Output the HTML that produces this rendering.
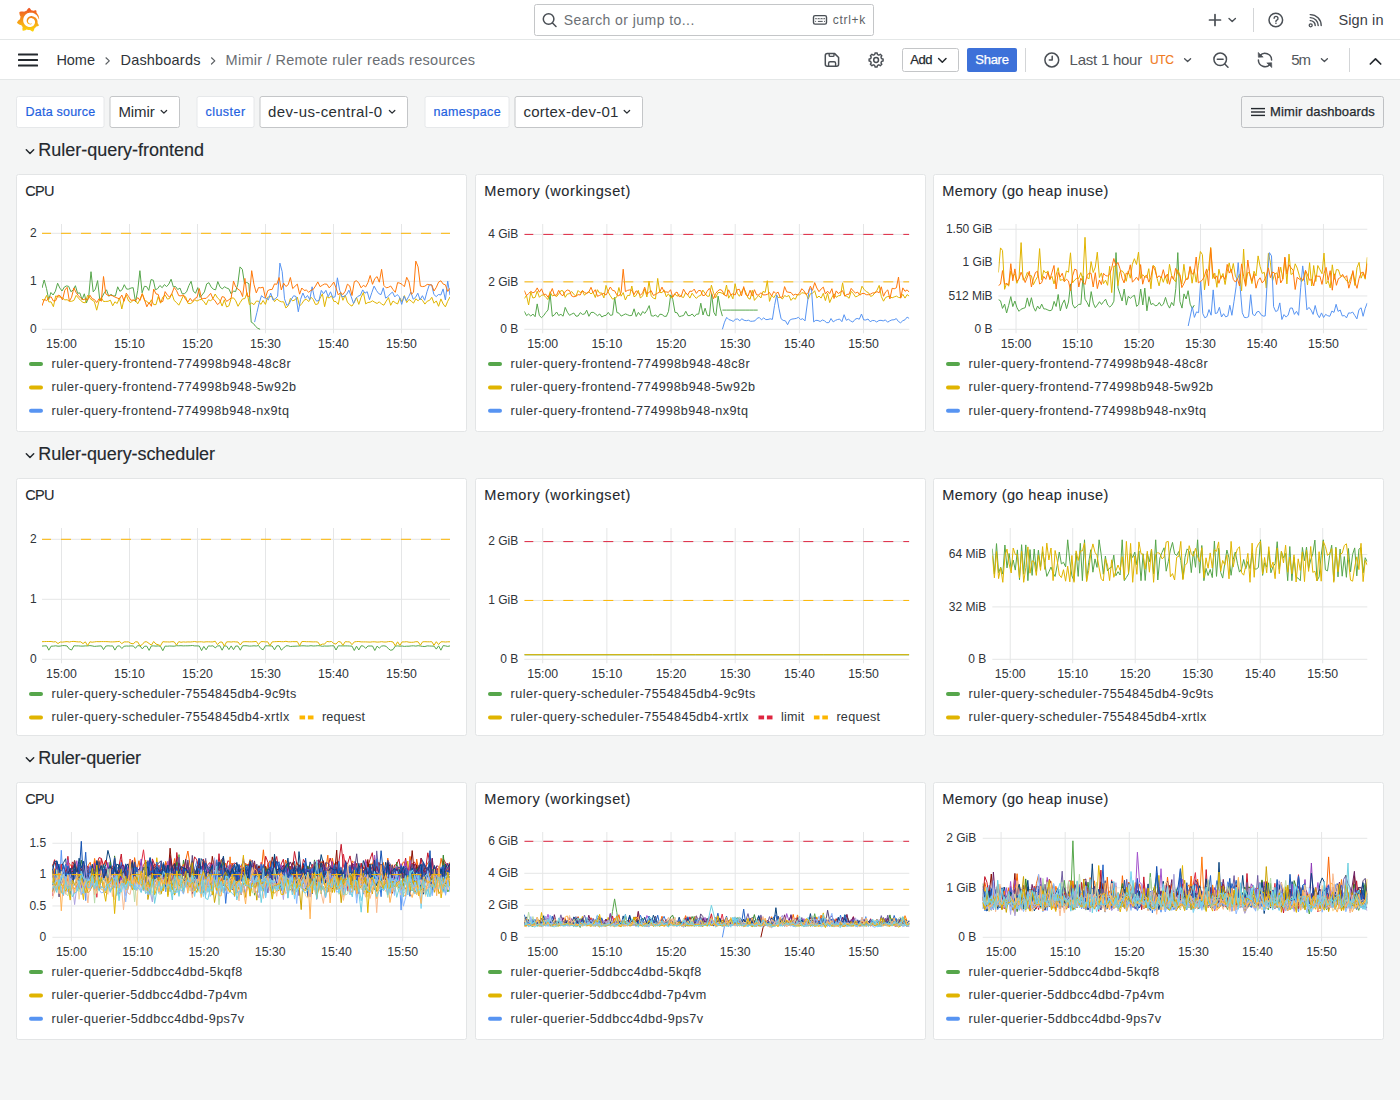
<!DOCTYPE html>
<html><head><meta charset="utf-8"><title>Mimir / Remote ruler reads resources - Dashboards - Grafana</title>
<style>html,body{margin:0;padding:0;background:#f4f5f5;width:1400px;height:1100px;overflow:hidden}svg{display:block}text{font-family:"Liberation Sans",sans-serif}</style></head>
<body><svg width="1400" height="1100" viewBox="0 0 1400 1100">
<rect x="0" y="0" width="1400" height="1100" fill="#f4f5f5"/>
<rect x="0" y="0" width="1400" height="79" fill="#ffffff"/><rect x="0" y="39" width="1400" height="1" fill="#e4e7e7"/><rect x="0" y="79" width="1400" height="1" fill="#e4e7e7"/><defs><linearGradient id="lg" x1="0" y1="1" x2="0" y2="0"><stop offset="0" stop-color="#FDD80A"/><stop offset="1" stop-color="#EE5126"/></linearGradient></defs><g transform="translate(16.44,7.63) scale(0.0663)"><path fill="url(#lg)" d="M342,161.2c-0.6-6.1-1.6-13.1-3.6-20.9c-1.9-7.7-4.9-16.2-9.3-25c-4.4-8.8-10.1-17.9-17.5-26.8c-2.9-3.5-6.1-6.9-9.5-10.2c5.1-20.3-6.2-37.9-6.2-37.9c-19.5-1.2-31.9,6.1-36.5,9.4c-0.8-0.3-1.5-0.7-2.3-1c-3.3-1.3-6.7-2.6-10.3-3.7c-3.5-1.1-7.1-2.1-10.8-3c-3.7-0.9-7.4-1.600-11.2-2.2c-0.7-0.1-1.3-0.2-2-0.3c-8.5-27.2-32.9-38.6-32.9-38.6c-27.3,17.3-32.4,41.5-32.4,41.5s-0.1,0.5-0.3,1.4c-1.5,0.4-3,0.9-4.5,1.3c-2.1,0.6-4.2,1.4-6.2,2.2c-2.1,0.8-4.1,1.6-6.2,2.5c-4.1,1.8-8.2,3.8-12.2,6c-3.9,2.2-7.7,4.6-11.4,7.1c-0.5-0.2-0.9-0.4-0.9-0.4c-37.8-14.4-71.3,2.9-71.3,2.9c-3.1,40.2,15.1,65.5,18.7,70.1c-0.9,2.5-1.7,5-2.5,7.5c-2.8,9.1-4.9,18.4-6.2,28.1c-0.2,1.4-0.4,2.8-0.5,4.2C18.8,192.7,8.5,228,8.5,228c29.1,33.5,63.1,35.6,63.1,35.6c0,0,0.1-0.1,0.1-0.1c4.3,7.7,9.3,15,14.9,21.9c2.4,2.9,4.8,5.6,7.4,8.3c-10.6,30.4,1.5,55.6,1.5,55.6c32.4,1.2,53.7-14.2,58.2-17.7c3.2,1.1,6.5,2.1,9.8,2.9c10,2.6,20.2,4.1,30.4,4.5c2.5,0.1,5.1,0.2,7.6,0.1l1.2,0l0.8,0l1.6,0l1.6-0.1l0,0.1c15.3,21.8,42.1,24.9,42.1,24.9c19.1-20.1,20.2-40.1,20.2-44.4l0,0c0,0,0-0.1,0-0.3c0-0.4,0-0.6,0-0.6l0,0c0-0.3,0-0.6,0-0.9c4-2.8,7.8-5.8,11.4-9.1c7.6-6.9,14.3-14.8,19.9-23.3c0.5-0.8,1-1.6,1.5-2.4c21.6,1.2,36.9-13.4,36.9-13.4c-3.6-22.5-16.4-33.5-19.1-35.6l0,0c0,0-0.1-0.1-0.3-0.2c-0.2-0.1-0.2-0.2-0.2-0.2c0,0,0,0,0,0c-0.1-0.1-0.3-0.2-0.5-0.3c0.1-1.4,0.2-2.7,0.3-4.1c0.2-2.4,0.2-4.9,0.2-7.3l0-1.8l0-0.9l0-0.5c0-0.6,0-0.4,0-0.6l-0.1-1.5l-0.1-2c0-0.7-0.1-1.3-0.2-1.9c-0.1-0.6-0.1-1.3-0.2-1.9l-0.2-1.9l-0.3-1.9c-0.4-2.5-0.8-4.9-1.4-7.4c-2.3-9.7-6.1-18.9-11-27.2c-5-8.3-11.2-15.6-18.3-21.8c-7-6.2-14.9-11.2-23.1-14.9c-8.3-3.7-16.9-6.1-25.5-7.2c-4.3-0.6-8.6-0.8-12.9-0.7l-1.6,0l-0.4,0c-0.1,0-0.6,0-0.5,0l-0.7,0l-1.6,0.1c-0.6,0-1.2,0.1-1.7,0.1c-2.2,0.2-4.4,0.5-6.5,0.9c-8.6,1.6-16.7,4.7-23.8,9c-7.1,4.3-13.3,9.6-18.3,15.6c-5,6-8.9,12.7-11.6,19.6c-2.7,6.9-4.2,14.1-4.6,21.1c-0.1,1.7-0.1,3.5-0.1,5.2c0,0.4,0,0.9,0,1.3l0.1,1.4c0.1,0.8,0.1,1.7,0.2,2.5c0.3,3.5,1,6.9,1.9,10.1c1.9,6.5,4.9,12.4,8.6,17.4c3.7,5,8.2,9.1,12.9,12.4c4.7,3.2,9.8,5.5,14.8,7c5,1.5,10,2.1,14.7,2.1c0.6,0,1.2,0,1.7,0c0.3,0,0.6,0,0.9,0c0.3,0,0.6,0,0.9-0.1c0.5,0,1-0.1,1.5-0.1c0.1,0,0.3,0,0.4-0.1l0.5-0.1c0.3,0,0.6-0.1,0.9-0.1c0.6-0.1,1.1-0.2,1.7-0.3c0.6-0.1,1.1-0.2,1.6-0.4c1.1-0.2,2.1-0.6,3.1-0.9c2-0.7,4-1.5,5.7-2.4c1.8-0.9,3.4-2,5-3c0.4-0.3,0.9-0.6,1.3-1c1.6-1.3,1.9-3.7,0.6-5.3c-1.1-1.4-3.1-1.8-4.7-0.9c-0.4,0.2-0.8,0.4-1.2,0.6c-1.4,0.7-2.8,1.3-4.3,1.8c-1.5,0.5-3.1,0.9-4.7,1.2c-0.8,0.1-1.6,0.2-2.5,0.3c-0.4,0-0.8,0.1-1.3,0.1c-0.4,0-0.9,0-1.2,0c-0.4,0-0.8,0-1.2,0c-0.5,0-1,0-1.5-0.1c0,0-0.3,0-0.1,0l-0.2,0l-0.3,0c-0.2,0-0.5,0-0.7-0.1c-0.5-0.1-0.9-0.1-1.4-0.2c-3.7-0.5-7.4-1.6-10.9-3.2c-3.6-1.6-7-3.800-10.1-6.6c-3.1-2.8-5.8-6.1-7.9-9.9c-2.1-3.8-3.6-8-4.3-12.4c-0.3-2.2-0.5-4.5-0.4-6.7c0-0.6,0.1-1.2,0.1-1.8c0,0.2,0-0.1,0-0.1l0-0.2l0-0.5c0-0.3,0.1-0.6,0.1-0.9c0.1-1.2,0.3-2.4,0.5-3.6c1.7-9.6,6.5-19,13.9-26.1c1.9-1.8,3.9-3.4,6-4.9c2.1-1.5,4.4-2.8,6.8-3.9c2.4-1.1,4.8-2,7.4-2.7c2.5-0.7,5.1-1.1,7.800-1.4c1.3-0.1,2.6-0.2,4-0.2c0.4,0,0.6,0,0.9,0l1.1,0l0.7,0c0,0,0.3,0,0,0l0.3,0l1.1,0.1c2.9,0.2,5.7,0.6,8.5,1.3c5.6,1.2,11.1,3.3,16.2,6.1c10.2,5.7,18.9,14.5,24.2,25.1c2.7,5.3,4.6,11,5.5,16.9c0.2,1.5,0.4,3,0.5,4.5l0.1,1.1l0.1,1.1c0,0.4,0,0.8,0,1.1c0,0.4,0,0.8,0,1.1l0,1l0,1.1c0,0.7-0.1,1.9-0.1,2.6c-0.1,1.6-0.3,3.3-0.5,4.9c-0.2,1.6-0.5,3.2-0.8,4.8c-0.3,1.6-0.7,3.2-1.1,4.7c-0.8,3.1-1.8,6.2-3,9.3c-2.4,6-5.6,11.8-9.4,17.1c-7.7,10.6-18.2,19.2-30.2,24.7c-6,2.7-12.3,4.7-18.8,5.7c-3.2,0.6-6.5,0.9-9.8,1l-0.6,0l-0.5,0l-1.1,0l-1.6,0l-0.8,0c0.4,0-0.1,0-0.1,0l-0.3,0c-1.8,0-3.5-0.1-5.3-0.3c-7-0.5-13.9-1.8-20.7-3.7c-6.7-1.9-13.2-4.6-19.4-7.8c-12.3-6.6-23.4-15.6-32-26.5c-4.3-5.4-8.1-11.3-11.2-17.4c-3.1-6.1-5.6-12.6-7.4-19.1c-1.8-6.6-2.9-13.3-3.4-20.1l-0.1-1.3l0-0.3l0-0.3l0-0.6l0-1.1l0-0.3l0-0.4l0-0.8l0-1.6l0-0.3c0,0,0,0.1,0-0.1l0-0.6c0-0.8,0-1.7,0-2.5c0.1-3.3,0.4-6.8,0.8-10.2c0.4-3.4,1-6.9,1.7-10.3c0.7-3.4,1.5-6.8,2.5-10.2c1.9-6.7,4.3-13.2,7.1-19.3c5.7-12.2,13.1-23.1,22-31.8c2.2-2.2,4.5-4.2,6.9-6.2c2.4-1.9,4.9-3.7,7.5-5.4c2.5-1.7,5.2-3.2,7.9-4.6c1.3-0.7,2.7-1.4,4.1-2c0.7-0.3,1.4-0.6,2.1-0.9c0.7-0.3,1.4-0.6,2.1-0.9c2.8-1.2,5.7-2.2,8.7-3.1c0.7-0.2,1.5-0.4,2.2-0.7c0.7-0.2,1.5-0.4,2.2-0.6c1.5-0.4,3-0.8,4.5-1.1c0.7-0.2,1.5-0.3,2.3-0.5c0.8-0.2,1.5-0.3,2.3-0.5c0.8-0.1,1.5-0.3,2.3-0.4l1.1-0.2l1.2-0.2c0.8-0.1,1.5-0.2,2.3-0.3c0.9-0.1,1.7-0.2,2.6-0.3c0.7-0.1,1.9-0.2,2.6-0.3c0.5-0.1,1.1-0.1,1.6-0.2l1.1-0.1l0.5,0l0.6,0c0.9-0.1,1.7-0.1,2.6-0.2l1.3-0.1c0,0,0.5,0,0.1,0l0.3,0l0.6,0c0.7,0,1.5-0.1,2.2-0.1c2.9-0.1,5.9-0.1,8.8,0c5.8,0.2,11.5,0.9,17,1.9c11.1,2.1,21.5,5.6,31,10.3c9.5,4.6,17.9,10.3,25.3,16.5c0.5,0.4,0.9,0.8,1.4,1.2c0.4,0.4,0.9,0.8,1.3,1.2c0.9,0.8,1.7,1.6,2.6,2.4c0.9,0.8,1.7,1.6,2.5,2.4c0.8,0.8,1.6,1.6,2.4,2.5c3.1,3.3,6,6.6,8.6,10c5.3,6.7,9.4,13.5,12.7,19.9c0.2,0.4,0.4,0.8,0.6,1.2c0.2,0.4,0.4,0.8,0.6,1.2c0.4,0.8,0.8,1.6,1.1,2.4c0.4,0.8,0.7,1.5,1.1,2.3c0.3,0.8,0.7,1.5,1,2.3c1.2,3,2.4,5.9,3.3,8.6c1.5,4.4,2.6,8.3,3.5,11.7c0.3,1.4,1.6,2.3,3,2.1c1.5-0.1,2.6-1.3,2.6-2.8C342.6,170.4,342.5,166.1,342,161.2z"/></g><rect x="534.5" y="4.5" width="339" height="31" rx="2" fill="#fff" stroke="#c4c6c8" stroke-width="1"/><circle cx="548.6" cy="19" r="5.3" fill="none" stroke="#4a4f55" stroke-width="1.5"/><line x1="552.5" y1="23" x2="556" y2="26.5" stroke="#4a4f55" stroke-width="1.5" stroke-linecap="round"/><rect x="813.5" y="15.6" width="13" height="8.5" rx="1.6" fill="none" stroke="#4a4f55" stroke-width="1.4"/><path d="M815.2 18.7h9.8M815.2 21.4h0.9M817.9 21.4h4.8M824.1 21.4h0.9" stroke="#4a4f55" stroke-width="1" stroke-dasharray="none"/><path d="M815.2 18.7h9.8" stroke="#fff" stroke-width="1.2" stroke-dasharray="0 1.6 0.8 0.5"/><path d="M1215 14.5V25.5M1209.5 20H1220.5" stroke="#4a4f55" stroke-width="1.7" stroke-linecap="round" fill="none"/><path d="M1229 18.5L1232.2 21.5L1235.4 18.5" stroke="#4a4f55" stroke-width="1.4" stroke-linecap="round" stroke-linejoin="round" fill="none"/><rect x="1253" y="8" width="1" height="24" fill="#d3d5d7"/><circle cx="1275.8" cy="20" r="6.8" fill="none" stroke="#4a4f55" stroke-width="1.5"/><path d="M1274.1 18.3a1.95 1.95 0 1 1 2.8 1.75c-0.5 0.25-0.95 0.6-0.95 1.2v0.25" stroke="#4a4f55" stroke-width="1.4" fill="none" stroke-linecap="round"/><circle cx="1275.95" cy="23.3" r="0.8" fill="#4a4f55"/><circle cx="1310.7" cy="25.3" r="1.5" fill="none" stroke="#4a4f55" stroke-width="1.3"/><path d="M1310.2 20.6a4.9 4.9 0 0 1 5 5M1310.2 17.6a7.9 7.9 0 0 1 8 8M1310.2 14.6a10.9 10.9 0 0 1 11 11" stroke="#4a4f55" stroke-width="1.4" fill="none" stroke-linecap="round"/><rect x="18" y="53.5" width="20" height="2" rx="0.5" fill="#24292e"/><rect x="18" y="59" width="20" height="2" rx="0.5" fill="#24292e"/><rect x="18" y="64.5" width="20" height="2" rx="0.5" fill="#24292e"/><path d="M106 57.8L109.3 60.9L106 64" stroke="#5b5f63" stroke-width="1.2" fill="none" stroke-linecap="round" stroke-linejoin="round"/><path d="M211.5 57.8L214.8 60.9L211.5 64" stroke="#5b5f63" stroke-width="1.2" fill="none" stroke-linecap="round" stroke-linejoin="round"/><path d="M827.3 53.6h7.4l3.9 3.9v6.8a2 2 0 0 1-2 2h-9.3a2 2 0 0 1-2-2v-8.7a2 2 0 0 1 2-2z" fill="none" stroke="#4a4f55" stroke-width="1.5" stroke-linejoin="round"/><path d="M829.2 53.8v1.6a1 1 0 0 0 1 1h2.8a1 1 0 0 0 1-1v-1.6M828.6 66.2v-3.0a1.5 1.5 0 0 1 1.5-1.5h4a1.5 1.5 0 0 1 1.5 1.5v3.0" fill="none" stroke="#4a4f55" stroke-width="1.4"/><polygon points="873.78,55.02 874.87,54.23 874.99,52.99 877.21,52.99 877.33,54.23 878.42,55.02 877.98,54.83 879.31,55.05 880.27,54.26 881.84,55.83 881.05,56.79 881.27,58.12 881.08,57.68 881.87,58.77 883.11,58.89 883.11,61.11 881.87,61.23 881.08,62.32 881.27,61.88 881.05,63.21 881.84,64.17 880.27,65.74 879.31,64.95 877.98,65.17 878.42,64.98 877.33,65.77 877.21,67.01 874.99,67.01 874.87,65.77 873.78,64.98 874.22,65.17 872.89,64.95 871.93,65.74 870.36,64.17 871.15,63.21 870.93,61.88 871.12,62.32 870.33,61.23 869.09,61.11 869.09,58.89 870.33,58.77 871.12,57.68 870.93,58.12 871.15,56.79 870.36,55.83 871.93,54.26 872.89,55.05 874.22,54.83" fill="none" stroke="#4a4f55" stroke-width="1.4" stroke-linejoin="round"/><circle cx="876.1" cy="60" r="2.4" fill="none" stroke="#4a4f55" stroke-width="1.5"/><rect x="902.5" y="48.5" width="56" height="23" rx="2" fill="#fff" stroke="#c4c6c8"/><path d="M938.6 58.5L942.3 62.2L946 58.5" stroke="#24292e" stroke-width="1.5" fill="none" stroke-linecap="round" stroke-linejoin="round"/><rect x="967" y="48" width="50" height="24" rx="2" fill="#3d71d9"/><rect x="1025" y="48" width="1" height="24" fill="#d3d5d7"/><circle cx="1051.8" cy="60" r="6.9" fill="none" stroke="#4a4f55" stroke-width="1.5"/><path d="M1052.2 56.2v3.9h-2.9" stroke="#4a4f55" stroke-width="1.5" fill="none" stroke-linecap="round" stroke-linejoin="round"/><path d="M1184.6 58.8L1187.6 61.6L1190.6 58.8" stroke="#4a4f55" stroke-width="1.3" fill="none" stroke-linecap="round" stroke-linejoin="round"/><circle cx="1220.2" cy="59.3" r="6.3" fill="none" stroke="#4a4f55" stroke-width="1.5"/><path d="M1217.3 59.3h5.8M1224.8 64l3.2 3.2" stroke="#4a4f55" stroke-width="1.5" stroke-linecap="round"/><path d="M1259.9 55.8A6.6 6.6 0 0 1 1271.6 60M1258.4 60A6.6 6.6 0 0 0 1270.1 64.2" stroke="#4a4f55" stroke-width="1.5" fill="none" stroke-linecap="round"/><path d="M1258.2 52.4L1258.4 57.3L1263.2 57.1Z M1271.8 67.6L1271.6 62.7L1266.8 62.9Z" fill="#4a4f55" stroke="#4a4f55" stroke-width="0.6" stroke-linejoin="round"/><path d="M1321.4 58.8L1324.4 61.6L1327.4 58.8" stroke="#4a4f55" stroke-width="1.3" fill="none" stroke-linecap="round" stroke-linejoin="round"/><rect x="1349" y="48" width="1" height="24" fill="#d3d5d7"/><path d="M1370.3 64L1375.5 58.8L1380.7 64" stroke="#24292e" stroke-width="1.7" fill="none" stroke-linecap="round" stroke-linejoin="round"/><rect x="16.5" y="96.5" width="87.5" height="31" rx="2" fill="#fff" stroke="#e6e8ea"/><rect x="110.0" y="96.5" width="69.5" height="31" rx="2" fill="#fff" stroke="#c4c6c8"/><path d="M161.20000000000002 110.5L163.9 113.1L166.60000000000002 110.5" stroke="#2a2f34" stroke-width="1.3" fill="none" stroke-linecap="round" stroke-linejoin="round"/><rect x="197.0" y="96.5" width="57.0" height="31" rx="2" fill="#fff" stroke="#e6e8ea"/><rect x="260.0" y="96.5" width="147.5" height="31" rx="2" fill="#fff" stroke="#c4c6c8"/><path d="M389.4 110.5L392.1 113.1L394.8 110.5" stroke="#2a2f34" stroke-width="1.3" fill="none" stroke-linecap="round" stroke-linejoin="round"/><rect x="425.0" y="96.5" width="84.0" height="31" rx="2" fill="#fff" stroke="#e6e8ea"/><rect x="515.0" y="96.5" width="127.5" height="31" rx="2" fill="#fff" stroke="#c4c6c8"/><path d="M624.1999999999999 110.5L626.9 113.1L629.5999999999999 110.5" stroke="#2a2f34" stroke-width="1.3" fill="none" stroke-linecap="round" stroke-linejoin="round"/><rect x="1241.5" y="96.5" width="142" height="31" rx="2" fill="none" stroke="#bfc1c4"/><rect x="1251" y="107.89999999999999" width="14" height="1.4" fill="#24292e"/><rect x="1251" y="111.3" width="14" height="1.4" fill="#24292e"/><rect x="1251" y="114.7" width="14" height="1.4" fill="#24292e"/><path d="M26.3 149.8L30 153.5L33.7 149.8" stroke="#24292e" stroke-width="1.5" fill="none" stroke-linecap="round" stroke-linejoin="round"/><path d="M26.3 453.8L30 457.5L33.7 453.8" stroke="#24292e" stroke-width="1.5" fill="none" stroke-linecap="round" stroke-linejoin="round"/><path d="M26.3 757.8L30 761.5L33.7 757.8" stroke="#24292e" stroke-width="1.5" fill="none" stroke-linecap="round" stroke-linejoin="round"/><rect x="16.5" y="174.5" width="450" height="257" rx="2" fill="#fff" stroke="#e3e5e6"/><rect x="475.5" y="174.5" width="450" height="257" rx="2" fill="#fff" stroke="#e3e5e6"/><rect x="933.5" y="174.5" width="450" height="257" rx="2" fill="#fff" stroke="#e3e5e6"/><rect x="16.5" y="478.5" width="450" height="257" rx="2" fill="#fff" stroke="#e3e5e6"/><rect x="475.5" y="478.5" width="450" height="257" rx="2" fill="#fff" stroke="#e3e5e6"/><rect x="933.5" y="478.5" width="450" height="257" rx="2" fill="#fff" stroke="#e3e5e6"/><rect x="16.5" y="782.5" width="450" height="257" rx="2" fill="#fff" stroke="#e3e5e6"/><rect x="475.5" y="782.5" width="450" height="257" rx="2" fill="#fff" stroke="#e3e5e6"/><rect x="933.5" y="782.5" width="450" height="257" rx="2" fill="#fff" stroke="#e3e5e6"/><rect x="42" y="328.80" width="408.00" height="1" fill="#e5e6e7"/><rect x="42" y="280.80" width="408.00" height="1" fill="#e5e6e7"/><rect x="42" y="232.80" width="408.00" height="1" fill="#e5e6e7"/><rect x="61.00" y="224" width="1" height="109.30" fill="#e5e6e7"/><rect x="129.00" y="224" width="1" height="109.30" fill="#e5e6e7"/><rect x="197.00" y="224" width="1" height="109.30" fill="#e5e6e7"/><rect x="265.00" y="224" width="1" height="109.30" fill="#e5e6e7"/><rect x="333.00" y="224" width="1" height="109.30" fill="#e5e6e7"/><rect x="401.00" y="224" width="1" height="109.30" fill="#e5e6e7"/><clipPath id="c42_329"><rect x="42" y="204" width="408.00" height="145.3"/></clipPath><g clip-path="url(#c42_329)" fill="none" stroke-width="1" stroke-linejoin="round"><path d="M42.0 288.0 L44.2 280.0 L46.5 288.6 L48.7 299.5 L50.9 292.5 L53.1 295.0 L55.4 291.2 L57.6 283.2 L59.8 288.0 L62.0 291.0 L64.3 287.1 L66.5 285.9 L68.7 286.4 L70.9 291.7 L73.2 290.0 L75.4 285.7 L77.6 293.3 L79.8 292.9 L82.1 299.6 L84.3 293.8 L86.5 302.8 L88.7 296.6 L91.0 271.7 L93.2 291.9 L95.4 289.2 L97.6 280.6 L99.9 300.8 L102.1 297.0 L104.3 292.8 L106.5 289.8 L108.8 296.3 L111.0 294.4 L113.2 295.9 L115.4 295.9 L117.7 286.8 L119.9 291.3 L122.1 289.8 L124.3 284.7 L126.6 289.1 L128.8 289.1 L131.0 288.0 L133.2 287.7 L135.5 301.9 L137.7 290.5 L139.9 270.7 L142.1 292.8 L144.4 286.3 L146.6 286.6 L148.8 290.4 L151.0 279.6 L153.3 280.2 L155.5 289.8 L157.7 288.6 L159.9 285.5 L162.2 287.7 L164.4 284.6 L166.6 286.6 L168.8 284.1 L171.1 279.2 L173.3 286.8 L175.5 286.5 L177.7 289.5 L180.0 288.1 L182.2 293.8 L184.4 293.7 L186.6 291.8 L188.9 285.6 L191.1 281.3 L193.3 291.0 L195.5 293.3 L197.8 287.6 L200.0 297.4 L202.2 294.9 L204.4 291.9 L206.7 283.9 L208.9 282.7 L211.1 286.9 L213.3 289.2 L215.6 289.8 L217.8 281.6 L220.0 286.9 L222.2 288.9 L224.5 286.8 L226.7 288.0 L228.9 288.9 L231.1 293.8 L233.4 291.0 L235.6 291.6 L237.8 284.2 L240.0 266.9 L242.3 269.3 L244.5 283.6 L246.7 282.4 L248.9 283.7 L251.2 322.1 L253.4 323.5 L255.6 326.4 L257.8 328.3 L260.1 329.3" stroke="#56A64B"/><path d="M42.0 299.4 L44.3 300.4 L46.6 295.4 L48.8 301.9 L51.1 301.9 L53.4 306.7 L55.7 295.9 L58.0 296.8 L60.2 297.0 L62.5 297.9 L64.8 299.9 L67.1 299.7 L69.4 301.3 L71.6 301.3 L73.9 300.4 L76.2 295.4 L78.5 298.1 L80.7 300.5 L83.0 302.4 L85.3 302.8 L87.6 295.3 L89.9 298.3 L92.1 300.1 L94.4 301.6 L96.7 310.2 L99.0 301.1 L101.3 297.6 L103.5 301.5 L105.8 301.4 L108.1 301.3 L110.4 300.2 L112.7 305.8 L114.9 301.8 L117.2 303.5 L119.5 297.8 L121.8 309.0 L124.1 298.8 L126.3 295.2 L128.6 301.0 L130.9 302.6 L133.2 300.1 L135.5 300.5 L137.7 303.8 L140.0 299.3 L142.3 293.6 L144.6 300.7 L146.8 301.2 L149.1 304.1 L151.4 299.8 L153.7 304.6 L156.0 304.6 L158.2 296.6 L160.5 303.2 L162.8 297.1 L165.1 295.0 L167.4 299.1 L169.6 298.5 L171.9 293.7 L174.2 300.5 L176.5 302.5 L178.8 305.2 L181.0 300.8 L183.3 295.6 L185.6 296.8 L187.9 303.3 L190.2 303.7 L192.4 302.5 L194.7 299.7 L197.0 301.1 L199.3 299.8 L201.6 299.4 L203.8 301.4 L206.1 304.9 L208.4 299.8 L210.7 300.7 L212.9 298.8 L215.2 294.0 L217.5 297.9 L219.8 300.0 L222.1 306.1 L224.3 299.8 L226.6 307.0 L228.9 305.9 L231.2 298.2 L233.5 297.9 L235.7 300.7 L238.0 306.3 L240.3 302.3 L242.6 298.9 L244.9 298.6 L247.1 292.7 L249.4 304.6 L251.7 303.0 L254.0 304.7 L256.3 301.1 L258.5 301.2 L260.8 304.4 L263.1 300.5 L265.4 304.4 L267.7 297.2 L269.9 296.6 L272.2 296.5 L274.5 301.7 L276.8 298.9 L279.1 300.8 L281.3 301.8 L283.6 301.8 L285.9 308.0 L288.2 305.8 L290.4 298.4 L292.7 300.9 L295.0 299.8 L297.3 297.1 L299.6 306.0 L301.8 303.7 L304.1 300.2 L306.4 299.2 L308.7 301.6 L311.0 297.2 L313.2 299.5 L315.5 304.5 L317.8 304.0 L320.1 298.1 L322.4 293.8 L324.6 306.7 L326.9 296.6 L329.2 298.1 L331.5 295.7 L333.8 301.3 L336.0 301.6 L338.3 304.4 L340.6 292.4 L342.9 300.3 L345.2 295.1 L347.4 302.1 L349.7 304.7 L352.0 306.1 L354.3 302.3 L356.5 297.4 L358.8 304.4 L361.1 297.3 L363.4 292.5 L365.7 303.9 L367.9 302.5 L370.2 302.2 L372.5 300.8 L374.8 302.3 L377.1 303.5 L379.3 301.8 L381.6 304.1 L383.9 305.2 L386.2 301.1 L388.5 297.6 L390.7 305.3 L393.0 301.0 L395.3 302.7 L397.6 304.0 L399.9 298.0 L402.1 302.0 L404.4 295.6 L406.7 302.6 L409.0 299.4 L411.3 301.2 L413.5 303.1 L415.8 298.8 L418.1 300.8 L420.4 298.5 L422.6 300.5 L424.9 304.1 L427.2 301.2 L429.5 300.4 L431.8 297.3 L434.0 303.2 L436.3 300.9 L438.6 306.3 L440.9 298.9 L443.2 304.0 L445.4 306.9 L447.7 301.3 L450.0 296.9" stroke="#E0B400"/><path d="M254.6 322.1 L256.9 312.5 L259.2 302.9 L261.5 295.7 L263.8 297.7 L266.1 298.1 L268.4 299.8 L270.7 293.1 L273.0 300.1 L275.3 298.7 L277.6 296.4 L279.9 263.1 L282.2 271.7 L284.5 298.8 L286.8 305.4 L289.1 303.9 L291.4 299.1 L293.7 295.7 L296.0 296.5 L298.3 311.8 L300.6 299.3 L302.9 293.0 L305.2 298.3 L307.5 295.5 L309.8 299.5 L312.1 286.8 L314.4 297.8 L316.7 301.2 L319.0 300.3 L321.3 290.4 L323.6 293.7 L325.9 290.3 L328.2 296.7 L330.5 291.8 L332.8 297.5 L335.1 296.7 L337.4 277.8 L339.7 290.3 L342.0 296.8 L344.3 296.3 L346.6 294.4 L348.9 290.2 L351.2 296.7 L353.5 303.4 L355.8 298.5 L358.1 296.2 L360.4 295.3 L362.7 289.9 L365.0 293.2 L367.2 291.7 L369.5 299.7 L371.8 292.7 L374.1 286.1 L376.4 290.4 L378.7 293.6 L381.0 294.6 L383.3 287.8 L385.6 298.1 L387.9 296.7 L390.2 293.9 L392.5 292.1 L394.8 296.9 L397.1 294.6 L399.4 296.7 L401.7 304.4 L404.0 296.2 L406.3 300.7 L408.6 296.8 L410.9 292.1 L413.2 299.2 L415.5 297.4 L417.8 293.2 L420.1 299.8 L422.4 295.7 L424.7 300.3 L427.0 291.7 L429.3 284.9 L431.6 284.8 L433.9 294.5 L436.2 296.6 L438.5 294.5 L440.8 295.0 L443.1 288.9 L445.4 300.0 L447.7 281.2 L450.0 295.2" stroke="#5794F2"/><path d="M42.0 305.8 L44.3 299.3 L46.6 300.7 L48.8 297.7 L51.1 296.8 L53.4 301.0 L55.7 300.7 L58.0 295.2 L60.2 295.8 L62.5 299.9 L64.8 290.2 L67.1 287.3 L69.4 301.2 L71.6 297.2 L73.9 287.9 L76.2 292.7 L78.5 295.8 L80.7 298.1 L83.0 299.8 L85.3 298.9 L87.6 300.0 L89.9 295.2 L92.1 298.7 L94.4 299.5 L96.7 302.6 L99.0 298.8 L101.3 301.3 L103.5 276.5 L105.8 293.9 L108.1 295.5 L110.4 295.3 L112.7 295.8 L114.9 297.0 L117.2 298.0 L119.5 298.9 L121.8 295.0 L124.1 301.3 L126.3 293.2 L128.6 296.6 L130.9 300.3 L133.2 300.0 L135.5 300.7 L137.7 297.6 L140.0 300.4 L142.3 293.8 L144.6 299.9 L146.8 306.8 L149.1 302.3 L151.4 306.3 L153.7 289.1 L156.0 293.9 L158.2 294.4 L160.5 302.1 L162.8 301.4 L165.1 291.6 L167.4 295.2 L169.6 297.1 L171.9 293.5 L174.2 287.4 L176.5 290.6 L178.8 295.7 L181.0 295.9 L183.3 294.9 L185.6 299.4 L187.9 302.0 L190.2 298.3 L192.4 301.4 L194.7 298.6 L197.0 297.4 L199.3 288.6 L201.6 299.1 L203.8 298.4 L206.1 298.4 L208.4 296.1 L210.7 293.3 L212.9 298.6 L215.2 301.0 L217.5 304.6 L219.8 302.6 L222.1 296.6 L224.3 297.2 L226.6 301.4 L228.9 299.8 L231.2 297.9 L233.5 281.1 L235.7 286.9 L238.0 289.2 L240.3 290.8 L242.6 296.6 L244.9 278.4 L247.1 296.0 L249.4 296.5 L251.7 270.7 L254.0 284.7 L256.3 292.9 L258.5 287.6 L260.8 287.8 L263.1 287.2 L265.4 297.9 L267.7 290.7 L269.9 289.6 L272.2 289.4 L274.5 283.9 L276.8 284.3 L279.1 277.5 L281.3 289.9 L283.6 283.1 L285.9 286.5 L288.2 284.7 L290.4 277.5 L292.7 288.6 L295.0 286.3 L297.3 284.1 L299.6 294.2 L301.8 288.0 L304.1 290.4 L306.4 290.1 L308.7 292.3 L311.0 290.3 L313.2 289.5 L315.5 286.0 L317.8 281.9 L320.1 286.7 L322.4 285.2 L324.6 284.0 L326.9 284.2 L329.2 287.9 L331.5 285.3 L333.8 282.0 L336.0 287.9 L338.3 295.0 L340.6 292.4 L342.9 294.6 L345.2 291.2 L347.4 284.2 L349.7 285.9 L352.0 295.5 L354.3 281.7 L356.5 280.7 L358.8 283.1 L361.1 287.8 L363.4 285.3 L365.7 286.9 L367.9 282.7 L370.2 275.5 L372.5 284.3 L374.8 278.6 L377.1 276.6 L379.3 282.2 L381.6 269.3 L383.9 285.5 L386.2 287.8 L388.5 287.3 L390.7 286.0 L393.0 289.5 L395.3 292.3 L397.6 282.6 L399.9 283.2 L402.1 284.4 L404.4 286.7 L406.7 277.3 L409.0 281.9 L411.3 294.3 L413.5 292.3 L415.8 261.1 L418.1 266.9 L420.4 286.1 L422.6 286.6 L424.9 286.2 L427.2 284.4 L429.5 284.7 L431.8 285.0 L434.0 291.0 L436.3 287.4 L438.6 282.1 L440.9 280.8 L443.2 284.1 L445.4 284.8 L447.7 291.4 L450.0 288.2" stroke="#FF780A"/><line x1="42" y1="233.30" x2="450" y2="233.30" stroke="#FDB600" stroke-width="1" stroke-dasharray="10 10" stroke-dashoffset="1"/></g><rect x="524.3" y="328.80" width="385.00" height="1" fill="#e5e6e7"/><rect x="524.3" y="281.35" width="385.00" height="1" fill="#e5e6e7"/><rect x="524.3" y="233.90" width="385.00" height="1" fill="#e5e6e7"/><rect x="542.20" y="224" width="1" height="109.30" fill="#e5e6e7"/><rect x="606.36" y="224" width="1" height="109.30" fill="#e5e6e7"/><rect x="670.53" y="224" width="1" height="109.30" fill="#e5e6e7"/><rect x="734.70" y="224" width="1" height="109.30" fill="#e5e6e7"/><rect x="798.86" y="224" width="1" height="109.30" fill="#e5e6e7"/><rect x="863.03" y="224" width="1" height="109.30" fill="#e5e6e7"/><clipPath id="c524_329"><rect x="524.3" y="204" width="385.00" height="145.3"/></clipPath><g clip-path="url(#c524_329)" fill="none" stroke-width="1" stroke-linejoin="round"><path d="M524.3 311.3 L526.5 315.6 L528.6 314.0 L530.8 316.1 L532.9 314.0 L535.1 316.7 L537.2 303.9 L539.4 315.6 L541.5 317.6 L543.7 315.6 L545.8 312.5 L548.0 310.0 L550.1 293.7 L552.3 316.3 L554.4 314.9 L556.6 312.0 L558.7 315.5 L560.9 314.3 L563.1 316.2 L565.2 307.4 L567.4 312.2 L569.5 315.3 L571.7 314.1 L573.8 313.0 L576.0 316.2 L578.1 316.0 L580.3 312.6 L582.4 314.4 L584.6 314.0 L586.7 310.2 L588.9 316.3 L591.0 312.5 L593.2 312.3 L595.3 313.8 L597.5 315.7 L599.7 314.0 L601.8 317.0 L604.0 315.7 L606.1 315.3 L608.3 312.4 L610.4 315.4 L612.6 314.9 L614.7 297.3 L616.9 312.5 L619.0 313.2 L621.2 316.1 L623.3 315.0 L625.5 313.9 L627.6 314.8 L629.8 315.7 L631.9 315.4 L634.1 308.8 L636.2 316.5 L638.4 312.4 L640.6 315.5 L642.7 311.5 L644.9 313.4 L647.0 310.2 L649.2 305.6 L651.3 315.8 L653.5 316.1 L655.6 314.9 L657.8 317.2 L659.9 314.2 L662.1 314.5 L664.2 316.3 L666.4 316.3 L668.5 311.3 L670.7 294.9 L672.8 299.6 L675.0 312.4 L677.2 312.8 L679.3 316.7 L681.5 316.0 L683.6 315.5 L685.8 311.3 L687.9 315.6 L690.1 315.6 L692.2 314.0 L694.4 316.6 L696.5 314.2 L698.7 314.1 L700.8 303.2 L703.0 315.0 L705.1 308.2 L707.3 315.4 L709.4 316.0 L711.6 293.7 L713.8 312.3 L715.9 315.8 L718.1 296.1 L720.2 308.1 L722.4 316.1" stroke="#56A64B"/><path d="M722.4 310.1 L726.3 310.1 L730.2 310.1 L734.1 310.1 L738.0 310.1 L742.0 310.1 L745.9 310.1 L749.8 310.1 L753.7 310.1 L757.7 310.1" stroke="#56A64B"/><path d="M524.3 298.6 L526.5 295.4 L528.6 305.0 L530.8 292.1 L532.9 298.0 L535.1 297.4 L537.2 291.2 L539.4 297.3 L541.5 295.2 L543.7 294.9 L545.8 297.4 L548.0 299.5 L550.1 291.7 L552.3 296.0 L554.4 295.1 L556.6 296.6 L558.7 293.9 L560.9 290.6 L563.0 290.9 L565.2 297.3 L567.3 294.0 L569.5 293.7 L571.6 291.5 L573.8 294.2 L575.9 296.3 L578.1 290.5 L580.2 292.6 L582.4 290.9 L584.5 295.3 L586.7 292.8 L588.8 291.9 L591.0 293.9 L593.1 292.3 L595.3 297.5 L597.4 289.7 L599.6 293.1 L601.7 292.9 L603.9 297.9 L606.0 285.4 L608.2 292.1 L610.3 295.8 L612.5 299.1 L614.6 298.4 L616.8 297.0 L618.9 287.5 L621.1 296.2 L623.2 292.6 L625.4 300.0 L627.5 295.4 L629.7 295.5 L631.8 286.0 L634.0 296.8 L636.1 295.5 L638.3 290.3 L640.4 298.1 L642.6 295.9 L644.7 288.8 L646.9 297.0 L649.0 281.0 L651.2 295.8 L653.4 298.2 L655.5 298.9 L657.7 278.4 L659.8 292.3 L662.0 292.7 L664.1 289.9 L666.3 296.8 L668.4 293.8 L670.6 297.5 L672.7 297.2 L674.9 293.9 L677.0 296.3 L679.2 294.4 L681.3 296.7 L683.5 297.5 L685.6 292.6 L687.8 295.0 L689.9 298.1 L692.1 293.2 L694.2 296.1 L696.4 298.4 L698.5 296.1 L700.7 295.5 L702.8 290.1 L705.0 293.3 L707.1 296.2 L709.3 296.2 L711.4 285.2 L713.6 293.2 L715.7 297.8 L717.9 292.7 L720.0 292.4 L722.2 293.3 L724.3 294.9 L726.5 285.0 L728.6 298.2 L730.8 294.5 L732.9 298.8 L735.1 283.7 L737.2 293.1 L739.4 296.3 L741.5 292.0 L743.7 288.1 L745.8 292.4 L748.0 297.9 L750.1 299.2 L752.3 290.2 L754.4 300.4 L756.6 297.7 L758.7 295.5 L760.9 298.0 L763.0 291.4 L765.2 292.4 L767.3 280.7 L769.5 301.4 L771.6 295.3 L773.8 297.7 L775.9 294.4 L778.1 297.5 L780.2 297.2 L782.4 299.0 L784.6 295.6 L786.7 296.6 L788.9 295.5 L791.0 300.4 L793.2 297.8 L795.3 299.3 L797.5 294.6 L799.6 295.0 L801.8 292.7 L803.9 293.1 L806.1 293.4 L808.2 299.1 L810.4 293.7 L812.5 293.3 L814.7 290.7 L816.8 297.9 L819.0 296.1 L821.1 298.1 L823.3 293.3 L825.4 300.6 L827.6 293.3 L829.7 302.6 L831.9 297.3 L834.0 293.8 L836.2 297.3 L838.3 295.8 L840.5 295.5 L842.6 282.8 L844.8 295.7 L846.9 296.3 L849.1 298.3 L851.2 291.3 L853.4 293.7 L855.5 296.9 L857.7 296.0 L859.8 294.2 L862.0 286.2 L864.1 289.4 L866.3 291.7 L868.4 292.6 L870.6 296.4 L872.7 295.6 L874.9 292.6 L877.0 290.2 L879.2 285.4 L881.3 296.4 L883.5 301.2 L885.6 297.5 L887.8 296.5 L889.9 296.7 L892.1 297.8 L894.2 296.9 L896.4 296.1 L898.5 297.4 L900.7 297.8 L902.8 294.3 L905.0 298.1 L907.1 294.6 L909.3 296.2" stroke="#E0B400"/><path d="M722.4 329.3 L724.5 322.2 L726.7 317.4 L728.9 319.6 L731.1 320.3 L733.2 321.4 L735.4 319.3 L737.6 319.0 L739.8 320.7 L741.9 318.8 L744.1 320.3 L746.3 320.7 L748.4 320.2 L750.6 321.3 L752.8 321.2 L755.0 320.8 L757.1 318.3 L759.3 317.5 L761.5 319.8 L763.7 317.9 L765.8 319.6 L768.0 319.5 L770.2 318.8 L772.4 319.4 L774.5 305.7 L776.7 294.9 L778.9 308.2 L781.1 318.8 L783.2 320.4 L785.4 320.8 L787.6 324.7 L789.7 320.2 L791.9 319.1 L794.1 318.8 L796.3 318.4 L798.4 317.3 L800.6 319.5 L802.8 318.7 L805.0 320.9 L807.1 305.0 L809.3 289.0 L811.5 289.0 L813.7 321.9 L815.8 320.3 L818.0 320.5 L820.2 321.5 L822.4 320.0 L824.5 320.8 L826.7 322.7 L828.9 322.6 L831.0 318.5 L833.2 321.9 L835.4 320.4 L837.6 319.5 L839.7 319.1 L841.9 321.7 L844.1 314.7 L846.3 320.3 L848.4 319.2 L850.6 320.9 L852.8 322.1 L855.0 319.4 L857.1 318.4 L859.3 319.2 L861.5 314.0 L863.7 319.9 L865.8 320.0 L868.0 319.0 L870.2 321.7 L872.3 320.5 L874.5 320.6 L876.7 322.0 L878.9 320.5 L881.0 320.3 L883.2 320.9 L885.4 319.9 L887.6 322.2 L889.7 320.9 L891.9 319.9 L894.1 319.8 L896.3 318.6 L898.4 321.5 L900.6 322.8 L902.8 320.7 L905.0 319.8 L907.1 317.1 L909.3 318.5" stroke="#5794F2"/><path d="M524.3 290.5 L526.5 295.7 L528.6 293.6 L530.8 291.3 L532.9 292.9 L535.1 291.7 L537.2 287.9 L539.4 292.2 L541.5 288.8 L543.7 294.5 L545.8 294.2 L548.0 297.2 L550.1 293.7 L552.3 288.5 L554.4 295.3 L556.6 295.1 L558.7 290.3 L560.9 294.5 L563.0 295.7 L565.2 291.6 L567.3 290.0 L569.5 290.6 L571.6 295.9 L573.8 296.8 L575.9 296.2 L578.1 294.6 L580.2 295.0 L582.4 290.6 L584.5 292.4 L586.7 293.6 L588.8 292.0 L591.0 287.3 L593.1 292.7 L595.3 289.7 L597.4 296.3 L599.6 295.4 L601.7 294.2 L603.9 293.3 L606.0 295.1 L608.2 291.0 L610.3 287.0 L612.5 290.4 L614.6 290.8 L616.8 294.8 L618.9 296.0 L621.1 292.6 L623.2 269.2 L625.4 291.6 L627.5 290.4 L629.7 289.9 L631.8 290.3 L634.0 294.7 L636.1 290.8 L638.3 292.6 L640.4 295.3 L642.6 292.9 L644.7 287.2 L646.9 294.4 L649.0 292.3 L651.2 290.7 L653.4 295.5 L655.5 294.4 L657.7 293.1 L659.8 291.9 L662.0 287.1 L664.1 292.0 L666.3 291.9 L668.4 292.4 L670.6 289.7 L672.7 297.2 L674.9 293.4 L677.0 292.0 L679.2 296.7 L681.3 296.1 L683.5 289.1 L685.6 292.9 L687.8 294.9 L689.9 291.1 L692.1 291.4 L694.2 289.1 L696.4 293.4 L698.5 290.5 L700.7 290.6 L702.8 295.7 L705.0 295.1 L707.1 291.3 L709.3 288.4 L711.4 292.6 L713.6 298.7 L715.7 293.4 L717.9 290.8 L720.0 289.5 L722.2 290.6 L724.3 294.9 L726.5 296.2 L728.6 289.8 L730.8 294.8 L732.9 293.8 L735.1 295.0 L737.2 289.7 L739.4 289.3 L741.5 295.9 L743.7 286.6 L745.8 294.7 L748.0 296.1 L750.1 290.2 L752.3 296.1 L754.4 289.7 L756.6 294.9 L758.7 295.0 L760.9 292.7 L763.0 294.9 L765.2 294.9 L767.3 294.4 L769.5 292.5 L771.6 296.0 L773.8 291.5 L775.9 293.6 L778.1 292.1 L780.2 297.4 L782.4 297.0 L784.6 286.6 L786.7 291.8 L788.9 292.3 L791.0 292.5 L793.2 295.3 L795.3 294.2 L797.5 294.9 L799.6 293.0 L801.8 288.7 L803.9 290.8 L806.1 294.6 L808.2 292.5 L810.4 286.2 L812.5 290.4 L814.7 282.6 L816.8 288.0 L819.0 291.7 L821.1 289.0 L823.3 287.1 L825.4 293.9 L827.6 291.2 L829.7 293.6 L831.9 288.7 L834.0 298.5 L836.2 290.9 L838.3 293.5 L840.5 292.0 L842.6 290.7 L844.8 296.2 L846.9 294.4 L849.1 294.2 L851.2 288.4 L853.4 291.2 L855.5 293.0 L857.7 292.1 L859.8 295.2 L862.0 293.5 L864.1 293.4 L866.3 294.7 L868.4 294.7 L870.6 294.1 L872.7 292.9 L874.9 292.9 L877.0 291.6 L879.2 292.8 L881.3 286.8 L883.5 296.3 L885.6 291.9 L887.8 289.9 L889.9 298.9 L892.1 288.3 L894.2 288.8 L896.4 287.8 L898.5 277.0 L900.7 298.1 L902.8 287.9 L905.0 291.3 L907.1 289.9 L909.3 292.2" stroke="#FF780A"/><line x1="524.3" y1="234.40" x2="909.3" y2="234.40" stroke="#DE2640" stroke-width="1" stroke-dasharray="10 10" stroke-dashoffset="1"/><line x1="524.3" y1="281.85" x2="909.3" y2="281.85" stroke="#FDB600" stroke-width="1" stroke-dasharray="10 10" stroke-dashoffset="1"/></g><rect x="998.4" y="328.80" width="368.90" height="1" fill="#e5e6e7"/><rect x="998.4" y="295.45" width="368.90" height="1" fill="#e5e6e7"/><rect x="998.4" y="262.10" width="368.90" height="1" fill="#e5e6e7"/><rect x="998.4" y="228.75" width="368.90" height="1" fill="#e5e6e7"/><rect x="1015.53" y="224" width="1" height="109.30" fill="#e5e6e7"/><rect x="1077.01" y="224" width="1" height="109.30" fill="#e5e6e7"/><rect x="1138.49" y="224" width="1" height="109.30" fill="#e5e6e7"/><rect x="1199.98" y="224" width="1" height="109.30" fill="#e5e6e7"/><rect x="1261.46" y="224" width="1" height="109.30" fill="#e5e6e7"/><rect x="1322.94" y="224" width="1" height="109.30" fill="#e5e6e7"/><clipPath id="c998_329"><rect x="998.4" y="204" width="368.90" height="145.3"/></clipPath><g clip-path="url(#c998_329)" fill="none" stroke-width="1" stroke-linejoin="round"><path d="M998.4 299.6 L1000.5 300.8 L1002.5 308.4 L1004.6 304.1 L1006.6 313.0 L1008.7 305.3 L1010.8 296.6 L1012.8 306.6 L1014.9 301.0 L1017.0 307.8 L1019.0 311.3 L1021.1 309.2 L1023.1 308.4 L1025.2 307.7 L1027.3 297.9 L1029.3 306.3 L1031.4 297.7 L1033.5 307.2 L1035.5 311.2 L1037.6 306.0 L1039.6 309.0 L1041.7 304.1 L1043.8 308.9 L1045.8 309.0 L1047.9 310.0 L1050.0 310.8 L1052.0 309.7 L1054.1 301.4 L1056.1 306.5 L1058.2 294.5 L1060.3 310.8 L1062.3 303.9 L1064.4 299.9 L1066.5 308.7 L1068.5 302.0 L1070.6 283.9 L1072.6 304.4 L1074.7 308.0 L1076.8 306.3 L1078.8 304.3 L1080.9 304.3 L1083.0 275.9 L1085.0 299.2 L1087.1 302.5 L1089.1 306.8 L1091.2 291.6 L1093.3 303.2 L1095.3 307.7 L1097.4 304.9 L1099.5 301.7 L1101.5 304.5 L1103.6 301.5 L1105.6 299.2 L1107.7 305.0 L1109.8 307.0 L1111.8 305.2 L1113.9 301.2 L1116.0 252.6 L1118.0 288.0 L1120.1 294.3 L1122.1 301.0 L1124.2 289.0 L1126.3 305.1 L1128.3 296.3 L1130.4 298.3 L1132.5 296.4 L1134.5 295.3 L1136.6 306.4 L1138.6 304.5 L1140.7 289.0 L1142.8 305.0 L1144.8 288.1 L1146.9 310.8 L1149.0 296.6 L1151.0 304.6 L1153.1 303.4 L1155.1 305.8 L1157.2 305.4 L1159.3 302.5 L1161.3 305.9 L1163.4 304.2 L1165.5 297.4 L1167.5 304.3 L1169.6 308.1 L1171.6 302.4 L1173.7 305.7 L1175.8 288.7 L1177.8 252.6 L1179.9 301.5 L1182.0 308.1 L1184.0 293.9 L1186.1 299.0 L1188.1 290.7 L1190.2 304.2 L1192.3 308.6 L1194.3 305.1" stroke="#56A64B"/><path d="M998.4 272.5 L1000.5 247.9 L1002.5 250.4 L1004.6 289.3 L1006.6 283.1 L1008.7 286.2 L1010.8 270.9 L1012.8 276.5 L1014.9 273.7 L1016.9 283.3 L1019.0 278.2 L1021.1 242.6 L1023.1 280.2 L1025.2 278.5 L1027.3 272.4 L1029.3 275.7 L1031.4 275.7 L1033.4 284.7 L1035.5 280.2 L1037.6 276.6 L1039.6 248.6 L1041.7 279.8 L1043.7 270.4 L1045.8 273.1 L1047.9 270.9 L1049.9 279.3 L1052.0 276.4 L1054.0 283.9 L1056.1 275.1 L1058.2 267.7 L1060.2 280.4 L1062.3 279.6 L1064.3 280.7 L1066.4 270.9 L1068.5 272.2 L1070.5 252.8 L1072.6 282.9 L1074.7 280.0 L1076.7 278.4 L1078.8 278.3 L1080.8 272.6 L1082.9 279.7 L1085.0 237.3 L1087.0 277.7 L1089.1 278.7 L1091.1 261.6 L1093.2 272.5 L1095.3 267.1 L1097.3 252.2 L1099.4 277.5 L1101.4 272.9 L1103.5 283.6 L1105.6 280.2 L1107.6 285.3 L1109.7 266.3 L1111.7 292.6 L1113.8 266.1 L1115.9 266.6 L1117.9 285.7 L1120.0 271.6 L1122.1 270.7 L1124.1 273.6 L1126.2 281.3 L1128.2 270.9 L1130.3 278.2 L1132.4 264.2 L1134.4 258.7 L1136.5 264.5 L1138.5 252.1 L1140.6 278.5 L1142.7 274.7 L1144.7 276.8 L1146.8 277.4 L1148.8 268.7 L1150.9 288.8 L1153.0 265.3 L1155.0 267.0 L1157.1 278.5 L1159.1 285.9 L1161.2 276.2 L1163.3 282.3 L1165.3 275.7 L1167.4 283.6 L1169.5 264.3 L1171.5 275.1 L1173.6 279.2 L1175.6 281.8 L1177.7 269.7 L1179.8 274.7 L1181.8 284.1 L1183.9 264.3 L1185.9 279.6 L1188.0 277.9 L1190.1 266.9 L1192.1 283.2 L1194.2 269.4 L1196.2 282.2 L1198.3 265.8 L1200.4 251.5 L1202.4 254.6 L1204.5 289.9 L1206.6 273.8 L1208.6 268.8 L1210.7 247.4 L1212.7 278.6 L1214.8 273.1 L1216.9 287.3 L1218.9 269.2 L1221.0 278.5 L1223.0 273.5 L1225.1 284.5 L1227.2 271.9 L1229.2 262.9 L1231.3 273.1 L1233.3 263.5 L1235.4 276.3 L1237.5 279.3 L1239.5 274.0 L1241.6 290.8 L1243.6 249.0 L1245.7 285.3 L1247.8 272.3 L1249.8 273.4 L1251.9 283.6 L1254.0 271.2 L1256.0 276.0 L1258.1 255.9 L1260.1 266.5 L1262.2 273.4 L1264.3 272.3 L1266.3 288.1 L1268.4 253.4 L1270.4 262.4 L1272.5 281.0 L1274.6 274.2 L1276.6 272.8 L1278.7 278.1 L1280.7 267.1 L1282.8 279.1 L1284.9 258.3 L1286.9 283.9 L1289.0 254.1 L1291.0 274.5 L1293.1 273.3 L1295.2 263.8 L1297.2 268.1 L1299.3 275.5 L1301.4 281.9 L1303.4 279.3 L1305.5 271.2 L1307.5 285.0 L1309.6 262.7 L1311.7 286.0 L1313.7 265.5 L1315.8 281.5 L1317.8 265.5 L1319.9 269.7 L1322.0 273.7 L1324.0 253.1 L1326.1 283.9 L1328.1 280.9 L1330.2 287.9 L1332.3 264.8 L1334.3 279.4 L1336.4 269.6 L1338.4 269.8 L1340.5 276.2 L1342.6 276.0 L1344.6 277.8 L1346.7 281.1 L1348.8 283.1 L1350.8 277.3 L1352.9 272.3 L1354.9 285.5 L1357.0 267.7 L1359.1 262.4 L1361.1 278.2 L1363.2 273.1 L1365.2 279.2 L1367.3 257.2" stroke="#E0B400"/><path d="M1188.2 326.0 L1190.3 316.0 L1192.3 306.8 L1194.4 317.4 L1196.5 311.9 L1198.6 312.7 L1200.7 281.3 L1202.8 313.7 L1204.8 317.8 L1206.9 316.6 L1209.0 309.6 L1211.1 315.2 L1213.2 289.9 L1215.3 313.6 L1217.3 312.9 L1219.4 307.3 L1221.5 317.0 L1223.6 313.7 L1225.7 316.9 L1227.8 316.0 L1229.8 305.3 L1231.9 315.3 L1234.0 301.3 L1236.1 286.8 L1238.2 262.6 L1240.3 289.3 L1242.3 312.8 L1244.4 317.5 L1246.5 317.6 L1248.6 316.7 L1250.7 294.7 L1252.7 314.3 L1254.8 315.7 L1256.9 311.9 L1259.0 311.4 L1261.1 314.8 L1263.2 316.1 L1265.2 316.0 L1267.3 279.8 L1269.4 252.6 L1271.5 255.9 L1273.6 306.7 L1275.7 311.5 L1277.7 310.6 L1279.8 302.9 L1281.9 319.5 L1284.0 314.6 L1286.1 317.1 L1288.2 315.0 L1290.2 308.1 L1292.3 308.0 L1294.4 314.4 L1296.5 311.3 L1298.6 315.3 L1300.7 287.8 L1302.7 265.9 L1304.8 282.6 L1306.9 309.8 L1309.0 307.4 L1311.1 310.1 L1313.1 314.4 L1315.2 305.5 L1317.3 314.0 L1319.4 317.7 L1321.5 312.9 L1323.6 317.5 L1325.6 314.4 L1327.7 315.7 L1329.8 316.3 L1331.9 311.0 L1334.0 312.4 L1336.1 304.3 L1338.1 311.4 L1340.2 310.0 L1342.3 316.0 L1344.4 315.5 L1346.5 317.9 L1348.6 312.9 L1350.6 313.1 L1352.7 312.1 L1354.8 315.5 L1356.9 318.9 L1359.0 309.6 L1361.1 307.8 L1363.1 316.3 L1365.2 308.3 L1367.3 302.9" stroke="#5794F2"/><path d="M998.4 285.6 L1000.5 284.1 L1002.5 270.6 L1004.6 284.1 L1006.6 283.8 L1008.7 284.9 L1010.8 263.7 L1012.8 280.8 L1014.9 268.9 L1016.9 281.3 L1019.0 278.8 L1021.1 272.2 L1023.1 277.3 L1025.2 282.5 L1027.3 277.1 L1029.3 271.3 L1031.4 287.0 L1033.4 278.8 L1035.5 272.4 L1037.6 271.3 L1039.6 284.0 L1041.7 282.7 L1043.7 276.4 L1045.8 279.3 L1047.9 272.3 L1049.9 279.5 L1052.0 272.3 L1054.0 265.5 L1056.1 289.0 L1058.2 272.4 L1060.2 277.0 L1062.3 273.2 L1064.3 281.7 L1066.4 279.2 L1068.5 281.0 L1070.5 290.8 L1072.6 275.8 L1074.7 269.2 L1076.7 270.0 L1078.8 287.0 L1080.8 278.1 L1082.9 282.0 L1085.0 284.5 L1087.0 275.5 L1089.1 273.1 L1091.1 273.3 L1093.2 287.0 L1095.3 272.7 L1097.3 288.6 L1099.4 280.0 L1101.4 284.6 L1103.5 273.3 L1105.6 275.6 L1107.6 276.1 L1109.7 274.0 L1111.7 268.2 L1113.8 258.5 L1115.9 265.6 L1117.9 262.4 L1120.0 268.8 L1122.1 278.2 L1124.1 282.9 L1126.2 273.1 L1128.2 274.0 L1130.3 264.8 L1132.4 282.2 L1134.4 280.0 L1136.5 277.2 L1138.5 280.5 L1140.6 264.6 L1142.7 284.2 L1144.7 276.5 L1146.8 275.2 L1148.8 282.1 L1150.9 277.4 L1153.0 266.2 L1155.0 270.2 L1157.1 277.9 L1159.1 275.7 L1161.2 278.0 L1163.3 269.7 L1165.3 278.0 L1167.4 274.0 L1169.5 284.3 L1171.5 276.1 L1173.6 279.3 L1175.6 268.4 L1177.7 273.6 L1179.8 274.9 L1181.8 287.6 L1183.9 283.7 L1185.9 279.1 L1188.0 279.2 L1190.1 266.5 L1192.1 274.2 L1194.2 272.7 L1196.2 257.0 L1198.3 282.8 L1200.4 281.5 L1202.4 280.1 L1204.5 276.0 L1206.6 268.9 L1208.6 285.7 L1210.7 248.4 L1212.7 272.2 L1214.8 278.8 L1216.9 275.8 L1218.9 283.3 L1221.0 276.3 L1223.0 276.2 L1225.1 279.5 L1227.2 264.4 L1229.2 273.1 L1231.3 269.1 L1233.3 279.4 L1235.4 282.1 L1237.5 278.7 L1239.5 286.0 L1241.6 263.8 L1243.6 276.2 L1245.7 286.3 L1247.8 260.0 L1249.8 274.8 L1251.9 281.2 L1254.0 273.8 L1256.0 288.2 L1258.1 280.5 L1260.1 277.8 L1262.2 282.9 L1264.3 280.4 L1266.3 275.9 L1268.4 267.9 L1270.4 277.7 L1272.5 272.0 L1274.6 273.0 L1276.6 284.5 L1278.7 266.9 L1280.7 283.0 L1282.8 279.3 L1284.9 257.0 L1286.9 274.1 L1289.0 264.7 L1291.0 267.8 L1293.1 270.2 L1295.2 289.5 L1297.2 277.2 L1299.3 279.3 L1301.4 278.3 L1303.4 280.1 L1305.5 270.2 L1307.5 275.0 L1309.6 280.3 L1311.7 279.5 L1313.7 285.9 L1315.8 275.5 L1317.8 276.3 L1319.9 276.2 L1322.0 284.4 L1324.0 273.5 L1326.1 267.4 L1328.1 280.5 L1330.2 270.7 L1332.3 290.2 L1334.3 273.8 L1336.4 285.3 L1338.4 278.6 L1340.5 277.5 L1342.6 274.4 L1344.6 277.8 L1346.7 275.7 L1348.8 288.2 L1350.8 281.4 L1352.9 270.6 L1354.9 282.2 L1357.0 288.3 L1359.1 278.3 L1361.1 272.9 L1363.2 272.1 L1365.2 277.6 L1367.3 263.5" stroke="#FF780A"/></g><rect x="29" y="362.0" width="14" height="4" rx="2" fill="#56A64B"/><rect x="29" y="385.4" width="14" height="4" rx="2" fill="#E0B400"/><rect x="29" y="408.8" width="14" height="4" rx="2" fill="#5794F2"/><rect x="488" y="362.0" width="14" height="4" rx="2" fill="#56A64B"/><rect x="488" y="385.4" width="14" height="4" rx="2" fill="#E0B400"/><rect x="488" y="408.8" width="14" height="4" rx="2" fill="#5794F2"/><rect x="946" y="362.0" width="14" height="4" rx="2" fill="#56A64B"/><rect x="946" y="385.4" width="14" height="4" rx="2" fill="#E0B400"/><rect x="946" y="408.8" width="14" height="4" rx="2" fill="#5794F2"/><rect x="42" y="658.80" width="408.00" height="1" fill="#e5e6e7"/><rect x="42" y="598.80" width="408.00" height="1" fill="#e5e6e7"/><rect x="42" y="538.80" width="408.00" height="1" fill="#e5e6e7"/><rect x="61.00" y="528" width="1" height="135.30" fill="#e5e6e7"/><rect x="129.00" y="528" width="1" height="135.30" fill="#e5e6e7"/><rect x="197.00" y="528" width="1" height="135.30" fill="#e5e6e7"/><rect x="265.00" y="528" width="1" height="135.30" fill="#e5e6e7"/><rect x="333.00" y="528" width="1" height="135.30" fill="#e5e6e7"/><rect x="401.00" y="528" width="1" height="135.30" fill="#e5e6e7"/><clipPath id="c42_659"><rect x="42" y="508" width="408.00" height="171.29999999999995"/></clipPath><g clip-path="url(#c42_659)" fill="none" stroke-width="1" stroke-linejoin="round"><path d="M42.0 646.1 L44.3 645.9 L46.6 645.8 L48.8 650.2 L51.1 646.2 L53.4 646.1 L55.7 645.8 L58.0 646.2 L60.2 646.1 L62.5 645.6 L64.8 645.6 L67.1 646.0 L69.4 649.1 L71.6 650.0 L73.9 645.8 L76.2 645.9 L78.5 645.9 L80.7 646.1 L83.0 646.1 L85.3 645.9 L87.6 645.9 L89.9 645.6 L92.1 645.9 L94.4 646.4 L96.7 646.2 L99.0 646.0 L101.3 645.9 L103.5 649.6 L105.8 646.1 L108.1 645.8 L110.4 646.0 L112.7 645.9 L114.9 650.1 L117.2 646.2 L119.5 645.8 L121.8 648.5 L124.1 646.3 L126.3 646.0 L128.6 646.1 L130.9 645.9 L133.2 646.0 L135.5 648.2 L137.7 645.6 L140.0 645.9 L142.3 648.9 L144.6 646.2 L146.8 646.2 L149.1 650.4 L151.4 645.9 L153.7 645.9 L156.0 646.1 L158.2 645.9 L160.5 646.3 L162.8 650.7 L165.1 646.1 L167.4 646.2 L169.6 646.0 L171.9 646.1 L174.2 646.2 L176.5 645.7 L178.8 645.8 L181.0 645.7 L183.3 645.9 L185.6 645.8 L187.9 645.8 L190.2 645.7 L192.4 645.5 L194.7 645.9 L197.0 645.9 L199.3 646.0 L201.6 650.6 L203.8 646.4 L206.1 649.8 L208.4 645.9 L210.7 646.1 L212.9 645.8 L215.2 647.8 L217.5 646.0 L219.8 645.7 L222.1 650.2 L224.3 645.8 L226.6 646.1 L228.9 649.6 L231.2 645.9 L233.5 649.7 L235.7 646.0 L238.0 646.1 L240.3 650.2 L242.6 645.8 L244.9 645.7 L247.1 645.8 L249.4 646.1 L251.7 646.0 L254.0 645.8 L256.3 646.0 L258.5 645.5 L260.8 648.5 L263.1 649.8 L265.4 645.8 L267.7 645.8 L269.9 645.9 L272.2 646.0 L274.5 649.8 L276.8 645.8 L279.1 645.8 L281.3 650.1 L283.6 648.1 L285.9 645.8 L288.2 645.8 L290.4 646.5 L292.7 646.3 L295.0 646.2 L297.3 646.1 L299.6 646.0 L301.8 645.8 L304.1 645.8 L306.4 646.0 L308.7 646.0 L311.0 645.7 L313.2 646.0 L315.5 645.9 L317.8 645.7 L320.1 645.8 L322.4 646.3 L324.6 646.0 L326.9 646.1 L329.2 646.0 L331.5 645.8 L333.8 645.8 L336.0 650.0 L338.3 645.8 L340.6 645.9 L342.9 645.9 L345.2 645.9 L347.4 645.9 L349.7 646.0 L352.0 646.1 L354.3 650.5 L356.5 646.2 L358.8 650.0 L361.1 645.8 L363.4 646.0 L365.7 648.4 L367.9 646.0 L370.2 646.0 L372.5 646.0 L374.8 650.5 L377.1 646.1 L379.3 648.1 L381.6 646.1 L383.9 645.8 L386.2 646.3 L388.5 648.8 L390.7 650.3 L393.0 649.6 L395.3 646.1 L397.6 645.9 L399.9 646.2 L402.1 646.0 L404.4 646.4 L406.7 646.2 L409.0 646.2 L411.3 645.9 L413.5 645.8 L415.8 646.1 L418.1 645.7 L420.4 646.0 L422.6 646.4 L424.9 646.5 L427.2 645.9 L429.5 646.0 L431.8 646.1 L434.0 646.1 L436.3 649.1 L438.6 645.8 L440.9 650.2 L443.2 645.6 L445.4 645.9 L447.7 646.4 L450.0 645.9" stroke="#56A64B"/><path d="M42.0 641.7 L44.3 641.6 L46.6 641.5 L48.8 641.5 L51.1 641.5 L53.4 641.9 L55.7 641.7 L58.0 643.6 L60.2 642.0 L62.5 642.1 L64.8 641.8 L67.1 641.6 L69.4 642.0 L71.6 641.5 L73.9 641.4 L76.2 641.7 L78.5 641.9 L80.7 641.8 L83.0 643.6 L85.3 641.8 L87.6 645.6 L89.9 641.8 L92.1 642.2 L94.4 641.9 L96.7 641.6 L99.0 641.7 L101.3 641.6 L103.5 641.6 L105.8 641.6 L108.1 641.7 L110.4 641.9 L112.7 641.9 L114.9 641.8 L117.2 641.6 L119.5 641.4 L121.8 643.6 L124.1 641.9 L126.3 641.9 L128.6 641.9 L130.9 643.4 L133.2 643.8 L135.5 641.8 L137.7 641.9 L140.0 645.8 L142.3 644.5 L144.6 641.8 L146.8 641.8 L149.1 643.5 L151.4 645.1 L153.7 641.5 L156.0 644.1 L158.2 644.7 L160.5 645.8 L162.8 641.7 L165.1 641.9 L167.4 641.9 L169.6 642.0 L171.9 641.7 L174.2 641.8 L176.5 645.1 L178.8 641.6 L181.0 642.3 L183.3 641.9 L185.6 642.1 L187.9 641.9 L190.2 642.0 L192.4 641.8 L194.7 641.5 L197.0 642.0 L199.3 641.8 L201.6 641.8 L203.8 642.1 L206.1 641.8 L208.4 641.8 L210.7 641.9 L212.9 641.9 L215.2 641.2 L217.5 644.7 L219.8 642.1 L222.1 642.0 L224.3 646.1 L226.6 641.9 L228.9 641.8 L231.2 642.0 L233.5 641.7 L235.7 641.9 L238.0 642.0 L240.3 645.0 L242.6 641.9 L244.9 641.7 L247.1 641.7 L249.4 641.8 L251.7 641.8 L254.0 641.7 L256.3 641.4 L258.5 644.6 L260.8 641.7 L263.1 641.6 L265.4 641.9 L267.7 641.8 L269.9 645.6 L272.2 641.9 L274.5 641.7 L276.8 641.6 L279.1 641.5 L281.3 641.7 L283.6 641.7 L285.9 641.3 L288.2 641.8 L290.4 641.8 L292.7 641.6 L295.0 641.7 L297.3 641.6 L299.6 645.8 L301.8 641.6 L304.1 641.5 L306.4 641.7 L308.7 641.7 L311.0 641.8 L313.2 641.9 L315.5 641.8 L317.8 642.0 L320.1 645.2 L322.4 644.1 L324.6 644.1 L326.9 641.4 L329.2 641.8 L331.5 641.5 L333.8 643.5 L336.0 644.1 L338.3 641.5 L340.6 641.9 L342.9 645.3 L345.2 641.7 L347.4 641.8 L349.7 641.9 L352.0 644.7 L354.3 641.9 L356.5 641.6 L358.8 641.5 L361.1 641.9 L363.4 641.9 L365.7 641.9 L367.9 642.0 L370.2 642.1 L372.5 641.8 L374.8 641.8 L377.1 642.1 L379.3 642.0 L381.6 641.7 L383.9 642.0 L386.2 642.0 L388.5 641.6 L390.7 641.5 L393.0 642.0 L395.3 645.9 L397.6 641.8 L399.9 645.4 L402.1 641.9 L404.4 641.9 L406.7 641.7 L409.0 642.2 L411.3 642.3 L413.5 642.2 L415.8 641.7 L418.1 641.8 L420.4 645.2 L422.6 641.8 L424.9 641.7 L427.2 641.8 L429.5 641.8 L431.8 641.7 L434.0 645.3 L436.3 641.7 L438.6 644.6 L440.9 641.8 L443.2 641.8 L445.4 642.0 L447.7 641.8 L450.0 641.8" stroke="#E0B400"/><line x1="42" y1="539.30" x2="450" y2="539.30" stroke="#FDB600" stroke-width="1" stroke-dasharray="10 10" stroke-dashoffset="1"/></g><rect x="524.3" y="658.80" width="385.00" height="1" fill="#e5e6e7"/><rect x="524.3" y="599.95" width="385.00" height="1" fill="#e5e6e7"/><rect x="524.3" y="541.10" width="385.00" height="1" fill="#e5e6e7"/><rect x="542.20" y="528" width="1" height="135.30" fill="#e5e6e7"/><rect x="606.36" y="528" width="1" height="135.30" fill="#e5e6e7"/><rect x="670.53" y="528" width="1" height="135.30" fill="#e5e6e7"/><rect x="734.70" y="528" width="1" height="135.30" fill="#e5e6e7"/><rect x="798.86" y="528" width="1" height="135.30" fill="#e5e6e7"/><rect x="863.03" y="528" width="1" height="135.30" fill="#e5e6e7"/><clipPath id="c524_659"><rect x="524.3" y="508" width="385.00" height="171.29999999999995"/></clipPath><g clip-path="url(#c524_659)" fill="none" stroke-width="1" stroke-linejoin="round"><path d="M524.3 654.8 L567.1 654.8 L609.9 654.8 L652.6 654.8 L695.4 654.8 L738.2 654.8 L781.0 654.8 L823.7 654.8 L866.5 654.8 L909.3 654.8" stroke="#56A64B"/><path d="M524.3 654.7 L567.1 654.7 L609.9 654.7 L652.6 654.7 L695.4 654.7 L738.2 654.7 L781.0 654.7 L823.7 654.7 L866.5 654.7 L909.3 654.7" stroke="#E0B400"/><line x1="524.3" y1="541.60" x2="909.3" y2="541.60" stroke="#DE2640" stroke-width="1" stroke-dasharray="10 10" stroke-dashoffset="1"/><line x1="524.3" y1="600.45" x2="909.3" y2="600.45" stroke="#FDB600" stroke-width="1" stroke-dasharray="10 10" stroke-dashoffset="1"/></g><rect x="992.3" y="658.80" width="375.00" height="1" fill="#e5e6e7"/><rect x="992.3" y="606.40" width="375.00" height="1" fill="#e5e6e7"/><rect x="992.3" y="554.00" width="375.00" height="1" fill="#e5e6e7"/><rect x="1009.72" y="528" width="1" height="135.30" fill="#e5e6e7"/><rect x="1072.22" y="528" width="1" height="135.30" fill="#e5e6e7"/><rect x="1134.72" y="528" width="1" height="135.30" fill="#e5e6e7"/><rect x="1197.22" y="528" width="1" height="135.30" fill="#e5e6e7"/><rect x="1259.72" y="528" width="1" height="135.30" fill="#e5e6e7"/><rect x="1322.22" y="528" width="1" height="135.30" fill="#e5e6e7"/><clipPath id="c992_659"><rect x="992.3" y="508" width="375.00" height="171.29999999999995"/></clipPath><g clip-path="url(#c992_659)" fill="none" stroke-width="1" stroke-linejoin="round"><path d="M992.3 548.7 L994.4 574.0 L996.5 543.6 L998.6 572.9 L1000.7 567.2 L1002.8 574.1 L1004.9 545.0 L1007.0 567.9 L1009.1 553.5 L1011.2 568.8 L1013.2 560.0 L1015.3 570.1 L1017.4 549.9 L1019.5 579.7 L1021.6 544.7 L1023.7 574.2 L1025.8 544.9 L1027.9 580.7 L1030.0 549.6 L1032.1 575.4 L1034.2 549.0 L1036.3 571.4 L1038.4 550.2 L1040.5 567.0 L1042.6 551.7 L1044.7 562.7 L1046.8 576.4 L1048.9 571.9 L1051.0 567.0 L1053.1 572.9 L1055.1 576.5 L1057.2 565.3 L1059.3 552.0 L1061.4 563.9 L1063.5 562.3 L1065.6 566.9 L1067.7 539.8 L1069.8 561.2 L1071.9 575.8 L1074.0 580.7 L1076.1 552.8 L1078.2 576.4 L1080.3 543.3 L1082.4 580.7 L1084.5 539.8 L1086.6 580.7 L1088.7 562.2 L1090.8 549.7 L1092.9 572.2 L1095.0 558.9 L1097.0 567.4 L1099.1 539.8 L1101.2 554.6 L1103.3 574.2 L1105.4 556.0 L1107.5 571.0 L1109.6 568.0 L1111.7 567.2 L1113.8 555.1 L1115.9 575.7 L1118.0 571.7 L1120.1 575.0 L1122.2 539.8 L1124.3 580.7 L1126.4 577.4 L1128.5 574.0 L1130.6 553.5 L1132.7 557.5 L1134.8 552.1 L1136.9 564.8 L1138.9 550.9 L1141.0 580.7 L1143.1 553.8 L1145.2 580.5 L1147.3 553.3 L1149.4 561.8 L1151.5 549.3 L1153.6 573.9 L1155.7 539.8 L1157.8 580.0 L1159.9 557.9 L1162.0 552.4 L1164.1 547.8 L1166.2 571.2 L1168.3 561.4 L1170.4 550.0 L1172.5 542.4 L1174.6 553.7 L1176.7 555.5 L1178.8 551.5 L1180.8 560.5 L1182.9 578.6 L1185.0 557.3 L1187.1 548.9 L1189.2 551.3 L1191.3 572.6 L1193.4 551.4 L1195.5 567.3 L1197.6 539.8 L1199.7 573.2 L1201.8 545.5 L1203.9 580.7 L1206.0 568.4 L1208.1 575.5 L1210.2 569.4 L1212.3 577.6 L1214.4 541.1 L1216.5 576.4 L1218.6 548.3 L1220.7 572.4 L1222.7 578.1 L1224.8 563.2 L1226.9 550.0 L1229.0 557.9 L1231.1 575.3 L1233.2 559.6 L1235.3 552.0 L1237.4 563.2 L1239.5 572.1 L1241.6 568.9 L1243.7 559.5 L1245.8 568.7 L1247.9 561.5 L1250.0 568.6 L1252.1 552.9 L1254.2 569.0 L1256.3 569.0 L1258.4 567.5 L1260.5 539.8 L1262.6 575.4 L1264.6 562.8 L1266.7 567.1 L1268.8 551.5 L1270.9 572.8 L1273.0 566.6 L1275.1 563.7 L1277.2 541.7 L1279.3 569.2 L1281.4 551.6 L1283.5 557.8 L1285.6 553.5 L1287.7 580.7 L1289.8 546.5 L1291.9 580.7 L1294.0 557.3 L1296.1 577.3 L1298.2 578.2 L1300.3 580.7 L1302.4 547.4 L1304.5 560.7 L1306.5 547.1 L1308.6 568.5 L1310.7 560.0 L1312.8 553.7 L1314.9 540.1 L1317.0 580.7 L1319.1 576.9 L1321.2 555.3 L1323.3 539.8 L1325.4 569.8 L1327.5 570.9 L1329.6 555.6 L1331.7 545.2 L1333.8 580.7 L1335.9 547.2 L1338.0 576.9 L1340.1 549.0 L1342.2 576.2 L1344.3 556.6 L1346.4 577.3 L1348.4 548.5 L1350.5 572.0 L1352.6 554.4 L1354.7 547.9 L1356.8 575.9 L1358.9 549.2 L1361.0 547.5 L1363.1 572.9 L1365.2 557.7 L1367.3 561.8" stroke="#56A64B"/><path d="M992.3 555.5 L994.4 577.8 L996.5 551.5 L998.6 578.6 L1000.7 567.8 L1002.8 582.3 L1004.9 556.0 L1007.0 549.1 L1009.1 564.0 L1011.2 573.0 L1013.2 548.0 L1015.3 554.5 L1017.4 554.9 L1019.5 577.8 L1021.6 551.3 L1023.7 582.3 L1025.8 567.6 L1027.9 546.9 L1030.0 573.2 L1032.1 560.8 L1034.2 561.8 L1036.3 575.4 L1038.4 555.3 L1040.5 570.4 L1042.6 546.6 L1044.7 569.4 L1046.8 543.1 L1048.9 560.0 L1051.0 548.0 L1053.1 580.6 L1055.1 550.5 L1057.2 560.4 L1059.3 575.0 L1061.4 577.6 L1063.5 569.7 L1065.6 581.2 L1067.7 566.2 L1069.8 581.8 L1071.9 555.5 L1074.0 582.3 L1076.1 550.8 L1078.2 560.5 L1080.3 551.0 L1082.4 550.9 L1084.5 542.9 L1086.6 581.6 L1088.7 570.5 L1090.8 553.3 L1092.9 543.9 L1095.0 552.3 L1097.0 555.5 L1099.1 567.9 L1101.2 578.7 L1103.3 581.0 L1105.4 558.9 L1107.5 564.9 L1109.6 580.6 L1111.7 559.8 L1113.8 577.3 L1115.9 570.9 L1118.0 565.0 L1120.1 570.2 L1122.2 556.7 L1124.3 579.6 L1126.4 541.4 L1128.5 573.3 L1130.6 543.4 L1132.7 582.3 L1134.8 555.9 L1136.9 574.3 L1138.9 541.9 L1141.0 553.7 L1143.1 554.3 L1145.2 569.2 L1147.3 551.2 L1149.4 572.2 L1151.5 549.0 L1153.6 582.3 L1155.7 554.4 L1157.8 552.6 L1159.9 553.6 L1162.0 558.8 L1164.1 557.1 L1166.2 542.0 L1168.3 541.4 L1170.4 576.8 L1172.5 573.6 L1174.6 580.0 L1176.7 557.2 L1178.8 556.4 L1180.8 541.4 L1182.9 579.7 L1185.0 565.5 L1187.1 563.0 L1189.2 545.7 L1191.3 553.8 L1193.4 556.2 L1195.5 548.3 L1197.6 556.8 L1199.7 561.8 L1201.8 547.7 L1203.9 577.8 L1206.0 557.8 L1208.1 568.2 L1210.2 552.9 L1212.3 568.0 L1214.4 549.6 L1216.5 551.4 L1218.6 541.9 L1220.7 571.2 L1222.7 560.4 L1224.8 565.2 L1226.9 554.9 L1229.0 578.8 L1231.1 541.4 L1233.2 567.1 L1235.3 555.9 L1237.4 548.9 L1239.5 546.8 L1241.6 572.7 L1243.7 575.2 L1245.8 565.6 L1247.9 553.4 L1250.0 582.3 L1252.1 543.1 L1254.2 577.3 L1256.3 548.6 L1258.4 544.0 L1260.5 541.4 L1262.6 574.1 L1264.6 557.5 L1266.7 572.8 L1268.8 546.7 L1270.9 567.9 L1273.0 562.1 L1275.1 578.7 L1277.2 548.0 L1279.3 573.7 L1281.4 551.2 L1283.5 562.9 L1285.6 545.2 L1287.7 572.2 L1289.8 557.1 L1291.9 573.8 L1294.0 554.8 L1296.1 582.0 L1298.2 558.8 L1300.3 570.5 L1302.4 551.9 L1304.5 581.6 L1306.5 550.1 L1308.6 571.4 L1310.7 546.5 L1312.8 572.4 L1314.9 571.2 L1317.0 581.0 L1319.1 551.7 L1321.2 581.2 L1323.3 541.4 L1325.4 546.5 L1327.5 555.4 L1329.6 553.4 L1331.7 548.6 L1333.8 582.3 L1335.9 548.4 L1338.0 571.9 L1340.1 554.2 L1342.2 553.2 L1344.3 545.5 L1346.4 543.8 L1348.4 559.6 L1350.5 580.1 L1352.6 581.2 L1354.7 567.0 L1356.8 556.8 L1358.9 569.6 L1361.0 543.3 L1363.1 581.6 L1365.2 560.4 L1367.3 565.3" stroke="#E0B400"/></g><rect x="29" y="692.0" width="14" height="4" rx="2" fill="#56A64B"/><rect x="29" y="715.4" width="14" height="4" rx="2" fill="#E0B400"/><rect x="299.5" y="715.5" width="5.6" height="3.9" fill="#FDB600"/><rect x="307.9" y="715.5" width="5.6" height="3.9" fill="#FDB600"/><rect x="488" y="692.0" width="14" height="4" rx="2" fill="#56A64B"/><rect x="488" y="715.4" width="14" height="4" rx="2" fill="#E0B400"/><rect x="758.5" y="715.5" width="5.6" height="3.9" fill="#DE2640"/><rect x="766.9" y="715.5" width="5.6" height="3.9" fill="#DE2640"/><rect x="813.9" y="715.5" width="5.6" height="3.9" fill="#FDB600"/><rect x="822.3" y="715.5" width="5.6" height="3.9" fill="#FDB600"/><rect x="946" y="692.0" width="14" height="4" rx="2" fill="#56A64B"/><rect x="946" y="715.4" width="14" height="4" rx="2" fill="#E0B400"/><rect x="52.4" y="936.80" width="397.60" height="1" fill="#e5e6e7"/><rect x="52.4" y="905.45" width="397.60" height="1" fill="#e5e6e7"/><rect x="52.4" y="874.10" width="397.60" height="1" fill="#e5e6e7"/><rect x="52.4" y="842.75" width="397.60" height="1" fill="#e5e6e7"/><rect x="70.90" y="832" width="1" height="109.30" fill="#e5e6e7"/><rect x="137.17" y="832" width="1" height="109.30" fill="#e5e6e7"/><rect x="203.43" y="832" width="1" height="109.30" fill="#e5e6e7"/><rect x="269.70" y="832" width="1" height="109.30" fill="#e5e6e7"/><rect x="335.97" y="832" width="1" height="109.30" fill="#e5e6e7"/><rect x="402.23" y="832" width="1" height="109.30" fill="#e5e6e7"/><clipPath id="c52_937"><rect x="52.4" y="812" width="397.60" height="145.29999999999995"/></clipPath><g clip-path="url(#c52_937)" fill="none" stroke-width="1" stroke-linejoin="round"><path d="M52.4 881.6 L54.6 892.2 L56.8 875.7 L59.1 887.4 L61.3 872.8 L63.5 880.4 L65.7 876.6 L67.9 875.0 L70.2 882.6 L72.4 872.7 L74.6 872.1 L76.8 877.5 L79.1 870.6 L81.3 884.1 L83.5 871.8 L85.7 878.3 L87.9 884.8 L90.2 877.9 L92.4 882.0 L94.6 881.3 L96.8 877.5 L99.0 872.2 L101.3 881.9 L103.5 877.2 L105.7 869.2 L107.9 876.1 L110.2 872.0 L112.4 874.9 L114.6 876.4 L116.8 882.3 L119.0 883.9 L121.3 878.1 L123.5 887.0 L125.7 884.6 L127.9 881.2 L130.1 885.7 L132.4 866.0 L134.6 890.0 L136.8 873.7 L139.0 886.9 L141.2 875.9 L143.5 885.6 L145.7 876.9 L147.9 879.9 L150.1 881.1 L152.4 874.9 L154.6 870.0 L156.8 884.0 L159.0 872.0 L161.2 879.4 L163.5 878.6 L165.7 865.0 L167.9 894.8 L170.1 879.6 L172.3 889.7 L174.6 878.3 L176.8 880.1 L179.0 854.6 L181.2 881.2 L183.5 866.9 L185.7 872.9 L187.9 882.5 L190.1 874.9 L192.3 869.0 L194.6 879.5 L196.8 877.1 L199.0 875.8 L201.2 888.5 L203.4 881.7 L205.7 875.9 L207.9 875.8 L210.1 884.9 L212.3 879.4 L214.5 879.2 L216.8 879.4 L219.0 874.1 L221.2 878.8 L223.4 877.5 L225.7 887.6 L227.9 883.4 L230.1 875.7 L232.3 889.1 L234.5 874.8 L236.8 883.5 L239.0 882.7 L241.2 873.8 L243.4 883.8 L245.6 882.9 L247.9 882.0 L250.1 877.6 L252.3 861.7 L254.5 895.2 L256.8 875.4 L259.0 880.8 L261.2 872.3 L263.4 882.2 L265.6 893.3 L267.9 867.5 L270.1 887.7 L272.3 877.2 L274.5 887.5 L276.7 883.7 L279.0 880.7 L281.2 872.9 L283.4 874.6 L285.6 883.2 L287.9 874.6 L290.1 866.1 L292.3 877.3 L294.5 878.0 L296.7 874.9 L299.0 883.2 L301.2 878.6 L303.4 877.3 L305.6 878.4 L307.8 883.7 L310.1 867.0 L312.3 883.9 L314.5 872.9 L316.7 878.6 L318.9 871.1 L321.2 893.8 L323.4 862.9 L325.6 883.2 L327.8 885.5 L330.1 876.5 L332.3 865.1 L334.5 878.3 L336.7 886.5 L338.9 880.0 L341.2 870.1 L343.4 889.2 L345.6 877.7 L347.8 880.7 L350.0 864.8 L352.3 883.3 L354.5 869.6 L356.7 884.7 L358.9 882.5 L361.2 871.7 L363.4 876.2 L365.6 890.0 L367.8 872.5 L370.0 875.9 L372.3 883.1 L374.5 876.5 L376.7 877.5 L378.9 882.0 L381.1 881.7 L383.4 882.3 L385.6 879.7 L387.8 886.8 L390.0 877.4 L392.2 888.3 L394.5 876.3 L396.7 879.7 L398.9 885.0 L401.1 872.2 L403.4 868.0 L405.6 872.6 L407.8 888.4 L410.0 868.8 L412.2 879.3 L414.5 878.9 L416.7 882.4 L418.9 878.0 L421.1 887.9 L423.3 877.0 L425.6 881.6 L427.8 882.3 L430.0 880.6 L432.2 874.7 L434.5 867.9 L436.7 887.5 L438.9 877.0 L441.1 881.5 L443.3 882.9 L445.6 875.4 L447.8 892.0 L450.0 888.1" stroke="#56A64B"/><path d="M52.4 871.9 L54.6 884.5 L56.8 867.9 L59.1 885.6 L61.3 873.3 L63.5 884.0 L65.7 879.3 L67.9 866.9 L70.2 881.0 L72.4 878.7 L74.6 878.7 L76.8 877.1 L79.1 866.6 L81.3 884.9 L83.5 899.6 L85.7 871.0 L87.9 886.6 L90.2 875.9 L92.4 868.8 L94.6 877.2 L96.8 878.5 L99.0 879.7 L101.3 880.7 L103.5 878.5 L105.7 874.4 L107.9 868.4 L110.2 871.3 L112.4 880.2 L114.6 879.5 L116.8 870.8 L119.0 888.1 L121.3 876.1 L123.5 877.8 L125.7 882.3 L127.9 880.7 L130.1 872.7 L132.4 886.7 L134.6 879.3 L136.8 879.2 L139.0 874.7 L141.2 884.6 L143.5 867.4 L145.7 879.5 L147.9 895.4 L150.1 877.9 L152.4 879.6 L154.6 881.2 L156.8 857.7 L159.0 876.3 L161.2 876.5 L163.5 869.6 L165.7 881.6 L167.9 870.9 L170.1 876.8 L172.3 881.3 L174.6 870.2 L176.8 886.3 L179.0 869.8 L181.2 882.6 L183.5 872.1 L185.7 868.2 L187.9 874.0 L190.1 880.1 L192.3 875.3 L194.6 878.4 L196.8 882.7 L199.0 881.5 L201.2 874.6 L203.4 860.0 L205.7 887.5 L207.9 874.1 L210.1 873.2 L212.3 875.9 L214.5 882.2 L216.8 868.4 L219.0 885.0 L221.2 859.7 L223.4 867.3 L225.7 890.4 L227.9 871.6 L230.1 875.0 L232.3 890.1 L234.5 881.0 L236.8 877.0 L239.0 884.5 L241.2 873.5 L243.4 873.2 L245.6 880.7 L247.9 880.8 L250.1 878.0 L252.3 875.7 L254.5 875.8 L256.8 876.8 L259.0 875.5 L261.2 884.3 L263.4 891.2 L265.6 869.2 L267.9 868.7 L270.1 886.3 L272.3 878.1 L274.5 873.8 L276.7 870.7 L279.0 873.2 L281.2 868.8 L283.4 877.9 L285.6 873.2 L287.9 874.1 L290.1 879.1 L292.3 868.1 L294.5 873.9 L296.7 870.5 L299.0 879.6 L301.2 869.1 L303.4 884.0 L305.6 872.1 L307.8 893.0 L310.1 888.1 L312.3 871.0 L314.5 879.9 L316.7 874.3 L318.9 886.4 L321.2 864.5 L323.4 874.8 L325.6 876.5 L327.8 873.5 L330.1 891.9 L332.3 867.7 L334.5 876.5 L336.7 885.1 L338.9 875.9 L341.2 868.3 L343.4 874.2 L345.6 879.1 L347.8 871.8 L350.0 876.3 L352.3 872.3 L354.5 886.6 L356.7 879.5 L358.9 871.3 L361.2 878.4 L363.4 873.5 L365.6 864.6 L367.8 880.3 L370.0 881.7 L372.3 880.0 L374.5 879.2 L376.7 876.0 L378.9 885.1 L381.1 887.2 L383.4 865.5 L385.6 878.9 L387.8 877.4 L390.0 876.9 L392.2 875.1 L394.5 872.2 L396.7 872.5 L398.9 884.2 L401.1 867.1 L403.4 883.9 L405.6 873.3 L407.8 861.0 L410.0 878.6 L412.2 865.4 L414.5 880.4 L416.7 871.5 L418.9 876.7 L421.1 873.4 L423.3 881.9 L425.6 880.6 L427.8 873.2 L430.0 886.3 L432.2 879.2 L434.5 871.5 L436.7 880.8 L438.9 880.6 L441.1 882.0 L443.3 874.0 L445.6 878.8 L447.8 874.7 L450.0 877.5" stroke="#E0B400"/><path d="M52.4 876.2 L54.6 880.9 L56.8 881.0 L59.1 890.9 L61.3 850.3 L63.5 885.7 L65.7 878.1 L67.9 886.6 L70.2 870.5 L72.4 876.8 L74.6 863.1 L76.8 879.9 L79.1 878.4 L81.3 880.4 L83.5 870.7 L85.7 900.6 L87.9 869.9 L90.2 876.4 L92.4 864.2 L94.6 881.3 L96.8 869.3 L99.0 866.9 L101.3 881.1 L103.5 872.5 L105.7 867.0 L107.9 882.1 L110.2 876.9 L112.4 883.7 L114.6 876.0 L116.8 877.1 L119.0 878.9 L121.3 880.4 L123.5 885.2 L125.7 882.8 L127.9 881.1 L130.1 871.8 L132.4 880.5 L134.6 880.8 L136.8 871.8 L139.0 874.1 L141.2 881.5 L143.5 879.3 L145.7 872.0 L147.9 875.2 L150.1 881.8 L152.4 874.0 L154.6 877.2 L156.8 869.7 L159.0 883.1 L161.2 870.0 L163.5 875.3 L165.7 891.8 L167.9 869.0 L170.1 872.6 L172.3 885.2 L174.6 863.0 L176.8 886.1 L179.0 880.1 L181.2 877.7 L183.5 871.7 L185.7 874.0 L187.9 877.6 L190.1 868.1 L192.3 875.8 L194.6 868.3 L196.8 861.3 L199.0 878.4 L201.2 891.6 L203.4 876.2 L205.7 883.0 L207.9 874.7 L210.1 876.3 L212.3 883.9 L214.5 882.0 L216.8 877.0 L219.0 877.6 L221.2 892.0 L223.4 881.9 L225.7 878.1 L227.9 876.3 L230.1 874.8 L232.3 883.1 L234.5 875.5 L236.8 870.5 L239.0 871.2 L241.2 874.8 L243.4 878.6 L245.6 881.1 L247.9 867.6 L250.1 875.1 L252.3 879.4 L254.5 889.1 L256.8 879.3 L259.0 887.7 L261.2 866.7 L263.4 889.9 L265.6 880.9 L267.9 877.3 L270.1 860.5 L272.3 872.3 L274.5 885.6 L276.7 875.5 L279.0 884.3 L281.2 885.5 L283.4 873.7 L285.6 862.3 L287.9 869.8 L290.1 877.6 L292.3 878.6 L294.5 874.9 L296.7 870.5 L299.0 886.7 L301.2 886.0 L303.4 863.1 L305.6 877.5 L307.8 866.4 L310.1 885.4 L312.3 867.3 L314.5 882.1 L316.7 872.3 L318.9 867.8 L321.2 872.0 L323.4 868.0 L325.6 870.3 L327.8 881.9 L330.1 884.3 L332.3 871.7 L334.5 868.8 L336.7 872.8 L338.9 885.1 L341.2 886.2 L343.4 873.7 L345.6 879.9 L347.8 891.3 L350.0 867.3 L352.3 872.9 L354.5 874.2 L356.7 887.7 L358.9 883.5 L361.2 868.8 L363.4 873.1 L365.6 876.7 L367.8 878.5 L370.0 873.7 L372.3 880.5 L374.5 877.7 L376.7 881.7 L378.9 873.9 L381.1 879.7 L383.4 870.0 L385.6 873.4 L387.8 882.2 L390.0 863.9 L392.2 886.0 L394.5 871.8 L396.7 870.7 L398.9 869.7 L401.1 910.1 L403.4 867.2 L405.6 870.8 L407.8 868.7 L410.0 892.0 L412.2 877.7 L414.5 876.9 L416.7 879.2 L418.9 867.6 L421.1 882.6 L423.3 867.6 L425.6 874.8 L427.8 886.0 L430.0 880.8 L432.2 893.4 L434.5 875.5 L436.7 870.5 L438.9 878.9 L441.1 870.4 L443.3 887.6 L445.6 893.4 L447.8 875.3 L450.0 873.9" stroke="#5794F2"/><path d="M52.4 866.1 L54.6 863.3 L56.8 863.5 L59.1 877.7 L61.3 866.6 L63.5 862.7 L65.7 858.7 L67.9 881.8 L70.2 877.2 L72.4 866.8 L74.6 873.7 L76.8 876.3 L79.1 867.5 L81.3 876.3 L83.5 883.4 L85.7 868.5 L87.9 870.6 L90.2 867.1 L92.4 866.0 L94.6 870.8 L96.8 872.3 L99.0 874.6 L101.3 880.0 L103.5 871.7 L105.7 864.8 L107.9 850.4 L110.2 859.1 L112.4 874.1 L114.6 880.9 L116.8 863.9 L119.0 866.1 L121.3 878.8 L123.5 879.0 L125.7 868.4 L127.9 867.1 L130.1 878.3 L132.4 871.4 L134.6 865.5 L136.8 877.1 L139.0 877.5 L141.2 868.7 L143.5 873.6 L145.7 874.4 L147.9 870.1 L150.1 857.5 L152.4 879.2 L154.6 870.1 L156.8 877.9 L159.0 867.2 L161.2 880.7 L163.5 868.4 L165.7 872.5 L167.9 865.1 L170.1 878.6 L172.3 885.3 L174.6 871.9 L176.8 858.2 L179.0 882.3 L181.2 866.9 L183.5 875.7 L185.7 868.1 L187.9 867.6 L190.1 870.8 L192.3 869.4 L194.6 869.6 L196.8 874.7 L199.0 871.5 L201.2 880.8 L203.4 871.1 L205.7 875.5 L207.9 871.6 L210.1 866.4 L212.3 869.6 L214.5 868.4 L216.8 864.9 L219.0 886.4 L221.2 865.3 L223.4 872.2 L225.7 871.3 L227.9 878.7 L230.1 866.1 L232.3 865.1 L234.5 866.0 L236.8 872.5 L239.0 866.8 L241.2 866.3 L243.4 861.0 L245.6 865.6 L247.9 871.2 L250.1 870.4 L252.3 870.1 L254.5 869.8 L256.8 874.2 L259.0 865.7 L261.2 876.2 L263.4 874.7 L265.6 868.1 L267.9 875.0 L270.1 871.6 L272.3 883.3 L274.5 854.2 L276.7 872.5 L279.0 871.5 L281.2 868.1 L283.4 870.3 L285.6 875.3 L287.9 858.1 L290.1 876.3 L292.3 864.1 L294.5 861.4 L296.7 876.6 L299.0 869.3 L301.2 876.2 L303.4 863.7 L305.6 874.5 L307.8 876.9 L310.1 861.9 L312.3 867.3 L314.5 877.0 L316.7 862.7 L318.9 871.5 L321.2 854.6 L323.4 864.0 L325.6 875.7 L327.8 871.7 L330.1 876.1 L332.3 869.2 L334.5 871.1 L336.7 866.6 L338.9 871.4 L341.2 879.7 L343.4 874.1 L345.6 861.9 L347.8 865.9 L350.0 873.0 L352.3 871.4 L354.5 871.9 L356.7 870.7 L358.9 881.1 L361.2 863.6 L363.4 876.4 L365.6 869.0 L367.8 886.5 L370.0 866.5 L372.3 863.9 L374.5 885.8 L376.7 859.0 L378.9 870.6 L381.1 875.5 L383.4 879.6 L385.6 862.3 L387.8 871.2 L390.0 867.4 L392.2 873.3 L394.5 875.3 L396.7 864.9 L398.9 877.9 L401.1 864.2 L403.4 882.4 L405.6 874.3 L407.8 879.0 L410.0 869.8 L412.2 883.4 L414.5 892.2 L416.7 866.2 L418.9 870.6 L421.1 858.0 L423.3 862.6 L425.6 869.0 L427.8 867.3 L430.0 882.7 L432.2 874.0 L434.5 872.4 L436.7 871.8 L438.9 879.1 L441.1 875.0 L443.3 890.9 L445.6 863.8 L447.8 869.9 L450.0 873.2" stroke="#0A437C"/><path d="M52.4 864.1 L54.6 870.6 L56.8 868.4 L59.1 869.3 L61.3 867.2 L63.5 882.8 L65.7 868.1 L67.9 862.1 L70.2 864.6 L72.4 867.4 L74.6 860.4 L76.8 868.7 L79.1 874.6 L81.3 878.3 L83.5 870.9 L85.7 868.4 L87.9 866.0 L90.2 862.2 L92.4 873.4 L94.6 872.6 L96.8 862.8 L99.0 862.2 L101.3 872.8 L103.5 865.5 L105.7 860.5 L107.9 868.1 L110.2 868.9 L112.4 881.5 L114.6 857.6 L116.8 877.2 L119.0 868.1 L121.3 871.5 L123.5 875.7 L125.7 867.7 L127.9 869.3 L130.1 861.4 L132.4 877.5 L134.6 857.6 L136.8 870.5 L139.0 860.7 L141.2 876.2 L143.5 864.8 L145.7 861.6 L147.9 869.2 L150.1 877.6 L152.4 868.8 L154.6 865.1 L156.8 878.0 L159.0 875.7 L161.2 865.6 L163.5 875.1 L165.7 862.9 L167.9 865.0 L170.1 878.3 L172.3 871.4 L174.6 858.5 L176.8 875.9 L179.0 867.1 L181.2 867.3 L183.5 874.7 L185.7 860.4 L187.9 851.0 L190.1 865.6 L192.3 879.7 L194.6 877.3 L196.8 871.5 L199.0 866.6 L201.2 870.3 L203.4 863.6 L205.7 860.2 L207.9 871.8 L210.1 869.5 L212.3 865.5 L214.5 859.5 L216.8 875.5 L219.0 863.2 L221.2 871.1 L223.4 870.1 L225.7 863.1 L227.9 874.5 L230.1 874.0 L232.3 863.2 L234.5 869.7 L236.8 869.9 L239.0 869.0 L241.2 865.3 L243.4 871.5 L245.6 863.1 L247.9 867.0 L250.1 859.5 L252.3 862.3 L254.5 864.3 L256.8 870.6 L259.0 867.3 L261.2 872.4 L263.4 849.8 L265.6 873.6 L267.9 864.0 L270.1 860.9 L272.3 878.6 L274.5 871.7 L276.7 870.3 L279.0 874.4 L281.2 875.3 L283.4 870.4 L285.6 860.0 L287.9 865.6 L290.1 868.8 L292.3 868.2 L294.5 878.9 L296.7 862.0 L299.0 867.1 L301.2 875.5 L303.4 865.8 L305.6 870.2 L307.8 871.4 L310.1 874.1 L312.3 871.6 L314.5 873.8 L316.7 864.5 L318.9 867.0 L321.2 880.8 L323.4 870.0 L325.6 870.7 L327.8 855.2 L330.1 882.8 L332.3 858.1 L334.5 868.3 L336.7 868.1 L338.9 871.7 L341.2 869.2 L343.4 891.5 L345.6 875.7 L347.8 867.7 L350.0 879.0 L352.3 861.1 L354.5 862.9 L356.7 891.1 L358.9 873.7 L361.2 865.7 L363.4 867.7 L365.6 867.9 L367.8 865.9 L370.0 864.3 L372.3 863.9 L374.5 858.1 L376.7 870.3 L378.9 862.7 L381.1 870.8 L383.4 867.0 L385.6 876.4 L387.8 858.1 L390.0 874.4 L392.2 867.6 L394.5 876.8 L396.7 867.5 L398.9 868.4 L401.1 867.2 L403.4 861.9 L405.6 863.8 L407.8 886.0 L410.0 856.4 L412.2 874.0 L414.5 882.0 L416.7 859.1 L418.9 872.0 L421.1 876.3 L423.3 875.2 L425.6 866.7 L427.8 863.1 L430.0 860.1 L432.2 871.2 L434.5 870.8 L436.7 869.4 L438.9 873.4 L441.1 858.3 L443.3 869.0 L445.6 866.8 L447.8 870.2 L450.0 874.7" stroke="#FA6400"/><path d="M52.4 896.1 L54.6 870.5 L56.8 869.5 L59.1 873.3 L61.3 864.1 L63.5 877.3 L65.7 870.2 L67.9 881.5 L70.2 872.0 L72.4 865.5 L74.6 873.1 L76.8 873.7 L79.1 886.8 L81.3 874.3 L83.5 882.4 L85.7 868.1 L87.9 880.3 L90.2 871.0 L92.4 881.3 L94.6 861.4 L96.8 897.3 L99.0 871.6 L101.3 858.8 L103.5 876.2 L105.7 879.5 L107.9 869.6 L110.2 869.3 L112.4 870.1 L114.6 887.5 L116.8 870.5 L119.0 888.4 L121.3 859.9 L123.5 876.9 L125.7 876.8 L127.9 869.8 L130.1 872.4 L132.4 882.2 L134.6 862.8 L136.8 878.3 L139.0 884.5 L141.2 863.8 L143.5 849.8 L145.7 868.1 L147.9 872.3 L150.1 880.4 L152.4 867.4 L154.6 864.3 L156.8 871.4 L159.0 865.1 L161.2 881.1 L163.5 866.8 L165.7 870.2 L167.9 884.5 L170.1 882.5 L172.3 877.3 L174.6 873.3 L176.8 871.8 L179.0 876.3 L181.2 874.4 L183.5 875.1 L185.7 873.7 L187.9 870.9 L190.1 872.0 L192.3 875.2 L194.6 872.6 L196.8 877.6 L199.0 868.8 L201.2 878.7 L203.4 863.4 L205.7 876.8 L207.9 872.2 L210.1 879.6 L212.3 875.5 L214.5 873.2 L216.8 874.5 L219.0 878.2 L221.2 880.9 L223.4 872.9 L225.7 873.8 L227.9 883.9 L230.1 867.3 L232.3 877.8 L234.5 886.1 L236.8 872.9 L239.0 886.2 L241.2 880.1 L243.4 866.9 L245.6 872.4 L247.9 878.8 L250.1 877.5 L252.3 874.3 L254.5 885.3 L256.8 869.2 L259.0 877.6 L261.2 862.3 L263.4 883.4 L265.6 866.3 L267.9 880.3 L270.1 866.9 L272.3 882.0 L274.5 868.3 L276.7 878.4 L279.0 878.7 L281.2 874.5 L283.4 871.4 L285.6 872.5 L287.9 864.9 L290.1 871.2 L292.3 891.5 L294.5 873.5 L296.7 887.0 L299.0 874.3 L301.2 870.5 L303.4 883.5 L305.6 879.9 L307.8 872.4 L310.1 876.6 L312.3 864.1 L314.5 874.4 L316.7 871.1 L318.9 864.1 L321.2 879.6 L323.4 873.4 L325.6 880.8 L327.8 871.5 L330.1 868.5 L332.3 867.0 L334.5 876.1 L336.7 878.5 L338.9 878.4 L341.2 882.3 L343.4 854.0 L345.6 866.4 L347.8 890.8 L350.0 884.7 L352.3 863.6 L354.5 886.6 L356.7 869.9 L358.9 883.2 L361.2 867.7 L363.4 870.8 L365.6 874.0 L367.8 869.3 L370.0 875.1 L372.3 870.7 L374.5 863.7 L376.7 878.3 L378.9 879.4 L381.1 878.4 L383.4 875.0 L385.6 875.6 L387.8 873.6 L390.0 878.3 L392.2 869.5 L394.5 875.1 L396.7 871.9 L398.9 874.8 L401.1 870.4 L403.4 882.6 L405.6 862.8 L407.8 874.5 L410.0 871.5 L412.2 871.1 L414.5 868.2 L416.7 870.9 L418.9 873.5 L421.1 875.6 L423.3 884.4 L425.6 871.0 L427.8 876.9 L430.0 875.7 L432.2 859.0 L434.5 889.0 L436.7 871.0 L438.9 867.4 L441.1 869.7 L443.3 867.5 L445.6 883.6 L447.8 878.5 L450.0 882.1" stroke="#E02F44"/><path d="M52.4 866.5 L54.6 859.7 L56.8 871.1 L59.1 866.9 L61.3 873.9 L63.5 871.4 L65.7 878.9 L67.9 856.3 L70.2 875.6 L72.4 861.9 L74.6 864.9 L76.8 870.6 L79.1 865.0 L81.3 867.0 L83.5 869.2 L85.7 875.8 L87.9 866.0 L90.2 872.8 L92.4 873.2 L94.6 870.3 L96.8 864.6 L99.0 857.6 L101.3 858.4 L103.5 865.7 L105.7 860.2 L107.9 866.6 L110.2 874.7 L112.4 866.8 L114.6 863.5 L116.8 885.8 L119.0 865.8 L121.3 854.0 L123.5 876.4 L125.7 864.1 L127.9 870.4 L130.1 859.1 L132.4 865.9 L134.6 870.3 L136.8 883.3 L139.0 874.3 L141.2 863.7 L143.5 877.6 L145.7 865.5 L147.9 866.8 L150.1 881.1 L152.4 858.9 L154.6 864.8 L156.8 864.9 L159.0 873.4 L161.2 869.4 L163.5 869.7 L165.7 862.4 L167.9 873.4 L170.1 855.3 L172.3 866.0 L174.6 880.4 L176.8 852.5 L179.0 868.0 L181.2 869.5 L183.5 864.9 L185.7 878.4 L187.9 862.6 L190.1 883.0 L192.3 869.6 L194.6 856.8 L196.8 859.9 L199.0 869.7 L201.2 871.8 L203.4 859.1 L205.7 868.0 L207.9 864.5 L210.1 862.5 L212.3 874.0 L214.5 859.5 L216.8 881.4 L219.0 853.7 L221.2 879.0 L223.4 867.8 L225.7 870.3 L227.9 860.7 L230.1 862.5 L232.3 864.7 L234.5 863.1 L236.8 863.9 L239.0 867.2 L241.2 878.6 L243.4 878.9 L245.6 878.8 L247.9 864.1 L250.1 868.2 L252.3 866.8 L254.5 864.7 L256.8 868.2 L259.0 872.5 L261.2 874.9 L263.4 877.0 L265.6 856.2 L267.9 862.4 L270.1 875.9 L272.3 882.4 L274.5 863.5 L276.7 856.5 L279.0 872.2 L281.2 864.0 L283.4 859.2 L285.6 879.1 L287.9 868.6 L290.1 866.1 L292.3 871.1 L294.5 851.5 L296.7 863.6 L299.0 865.6 L301.2 872.8 L303.4 859.4 L305.6 863.6 L307.8 870.3 L310.1 868.4 L312.3 875.5 L314.5 865.0 L316.7 860.9 L318.9 860.9 L321.2 863.6 L323.4 861.5 L325.6 871.2 L327.8 868.5 L330.1 858.0 L332.3 865.1 L334.5 871.8 L336.7 862.0 L338.9 861.8 L341.2 844.3 L343.4 866.4 L345.6 869.7 L347.8 863.1 L350.0 855.9 L352.3 867.5 L354.5 870.5 L356.7 863.3 L358.9 893.8 L361.2 863.1 L363.4 869.0 L365.6 859.6 L367.8 867.1 L370.0 859.4 L372.3 852.7 L374.5 870.5 L376.7 871.0 L378.9 862.4 L381.1 867.7 L383.4 865.2 L385.6 870.6 L387.8 861.9 L390.0 866.8 L392.2 880.4 L394.5 865.1 L396.7 864.5 L398.9 859.1 L401.1 871.6 L403.4 870.6 L405.6 858.1 L407.8 872.0 L410.0 864.6 L412.2 863.7 L414.5 862.1 L416.7 867.2 L418.9 873.5 L421.1 858.4 L423.3 870.8 L425.6 868.9 L427.8 852.8 L430.0 863.4 L432.2 873.9 L434.5 868.0 L436.7 867.7 L438.9 871.0 L441.1 878.0 L443.3 858.9 L445.6 862.9 L447.8 865.5 L450.0 869.2" stroke="#C4162A"/><path d="M52.4 871.5 L54.6 878.2 L56.8 870.5 L59.1 866.7 L61.3 875.9 L63.5 873.7 L65.7 870.8 L67.9 868.6 L70.2 884.8 L72.4 870.7 L74.6 878.3 L76.8 869.2 L79.1 867.5 L81.3 872.5 L83.5 865.2 L85.7 881.3 L87.9 874.4 L90.2 879.5 L92.4 871.7 L94.6 873.1 L96.8 874.7 L99.0 880.9 L101.3 872.3 L103.5 876.4 L105.7 868.9 L107.9 876.0 L110.2 865.4 L112.4 873.5 L114.6 885.2 L116.8 872.1 L119.0 882.8 L121.3 865.3 L123.5 865.8 L125.7 875.0 L127.9 870.2 L130.1 883.3 L132.4 885.8 L134.6 874.4 L136.8 874.8 L139.0 882.8 L141.2 870.9 L143.5 871.8 L145.7 869.5 L147.9 864.2 L150.1 886.1 L152.4 876.4 L154.6 872.1 L156.8 869.7 L159.0 880.8 L161.2 863.3 L163.5 869.6 L165.7 887.2 L167.9 877.0 L170.1 848.2 L172.3 873.0 L174.6 867.4 L176.8 863.0 L179.0 869.1 L181.2 872.8 L183.5 868.9 L185.7 880.1 L187.9 876.8 L190.1 884.4 L192.3 868.4 L194.6 870.7 L196.8 883.9 L199.0 858.9 L201.2 883.6 L203.4 864.6 L205.7 878.5 L207.9 870.3 L210.1 878.1 L212.3 856.3 L214.5 870.1 L216.8 862.3 L219.0 870.5 L221.2 869.4 L223.4 873.1 L225.7 874.8 L227.9 869.1 L230.1 873.1 L232.3 884.4 L234.5 881.9 L236.8 873.5 L239.0 869.3 L241.2 877.1 L243.4 870.3 L245.6 874.8 L247.9 879.6 L250.1 877.8 L252.3 877.1 L254.5 874.3 L256.8 874.7 L259.0 865.8 L261.2 881.7 L263.4 884.7 L265.6 866.5 L267.9 877.5 L270.1 873.1 L272.3 856.9 L274.5 867.1 L276.7 870.7 L279.0 867.6 L281.2 873.6 L283.4 867.0 L285.6 878.4 L287.9 876.8 L290.1 875.5 L292.3 862.6 L294.5 865.3 L296.7 878.7 L299.0 864.6 L301.2 875.9 L303.4 865.7 L305.6 876.7 L307.8 866.3 L310.1 875.3 L312.3 874.6 L314.5 873.0 L316.7 872.2 L318.9 877.1 L321.2 881.2 L323.4 860.7 L325.6 878.2 L327.8 883.9 L330.1 885.6 L332.3 888.7 L334.5 874.0 L336.7 850.1 L338.9 885.5 L341.2 872.8 L343.4 885.1 L345.6 863.7 L347.8 872.7 L350.0 871.2 L352.3 864.9 L354.5 864.2 L356.7 868.3 L358.9 877.9 L361.2 871.5 L363.4 878.4 L365.6 883.4 L367.8 859.5 L370.0 877.1 L372.3 871.5 L374.5 872.2 L376.7 860.3 L378.9 879.3 L381.1 864.3 L383.4 873.0 L385.6 874.2 L387.8 885.3 L390.0 864.8 L392.2 893.3 L394.5 874.8 L396.7 871.3 L398.9 872.9 L401.1 865.9 L403.4 878.9 L405.6 870.9 L407.8 871.8 L410.0 873.2 L412.2 850.6 L414.5 875.7 L416.7 864.8 L418.9 879.4 L421.1 881.2 L423.3 871.8 L425.6 865.8 L427.8 877.9 L430.0 876.2 L432.2 874.7 L434.5 885.1 L436.7 874.5 L438.9 870.8 L441.1 884.7 L443.3 861.1 L445.6 871.8 L447.8 879.0 L450.0 863.1" stroke="#890F02"/><path d="M52.4 872.4 L54.6 876.3 L56.8 877.0 L59.1 880.1 L61.3 872.4 L63.5 876.2 L65.7 878.3 L67.9 872.0 L70.2 870.9 L72.4 869.3 L74.6 865.8 L76.8 872.8 L79.1 881.1 L81.3 860.0 L83.5 869.6 L85.7 869.7 L87.9 879.5 L90.2 884.7 L92.4 874.1 L94.6 877.1 L96.8 866.0 L99.0 882.9 L101.3 874.2 L103.5 864.5 L105.7 871.9 L107.9 876.8 L110.2 861.8 L112.4 884.6 L114.6 855.9 L116.8 876.4 L119.0 870.3 L121.3 876.4 L123.5 878.7 L125.7 871.7 L127.9 882.6 L130.1 869.0 L132.4 877.0 L134.6 867.7 L136.8 878.0 L139.0 877.3 L141.2 870.9 L143.5 867.0 L145.7 888.2 L147.9 870.4 L150.1 870.8 L152.4 883.4 L154.6 877.6 L156.8 869.3 L159.0 880.0 L161.2 876.7 L163.5 862.8 L165.7 882.1 L167.9 877.7 L170.1 887.6 L172.3 878.1 L174.6 880.8 L176.8 862.0 L179.0 868.9 L181.2 882.8 L183.5 860.1 L185.7 872.0 L187.9 875.5 L190.1 868.7 L192.3 860.8 L194.6 879.0 L196.8 883.9 L199.0 877.7 L201.2 873.3 L203.4 892.8 L205.7 878.1 L207.9 867.2 L210.1 890.5 L212.3 866.9 L214.5 878.4 L216.8 872.5 L219.0 881.3 L221.2 872.6 L223.4 862.0 L225.7 883.8 L227.9 872.2 L230.1 874.7 L232.3 868.8 L234.5 873.3 L236.8 880.4 L239.0 876.5 L241.2 888.9 L243.4 878.0 L245.6 865.2 L247.9 866.4 L250.1 870.8 L252.3 872.8 L254.5 870.6 L256.8 871.7 L259.0 885.2 L261.2 877.2 L263.4 866.1 L265.6 868.3 L267.9 873.7 L270.1 876.0 L272.3 876.0 L274.5 877.0 L276.7 879.2 L279.0 884.9 L281.2 886.9 L283.4 877.4 L285.6 874.7 L287.9 863.3 L290.1 872.5 L292.3 878.7 L294.5 869.5 L296.7 884.2 L299.0 865.5 L301.2 874.1 L303.4 875.2 L305.6 870.3 L307.8 865.8 L310.1 878.6 L312.3 879.2 L314.5 859.9 L316.7 876.8 L318.9 864.2 L321.2 880.2 L323.4 870.5 L325.6 878.7 L327.8 869.2 L330.1 876.7 L332.3 877.7 L334.5 863.7 L336.7 883.1 L338.9 886.6 L341.2 873.0 L343.4 879.9 L345.6 880.4 L347.8 876.4 L350.0 876.5 L352.3 873.3 L354.5 879.1 L356.7 884.6 L358.9 875.3 L361.2 868.3 L363.4 883.7 L365.6 868.3 L367.8 872.3 L370.0 877.2 L372.3 871.5 L374.5 879.2 L376.7 875.5 L378.9 880.1 L381.1 869.9 L383.4 866.3 L385.6 879.8 L387.8 865.4 L390.0 889.0 L392.2 876.6 L394.5 879.8 L396.7 862.2 L398.9 880.1 L401.1 868.0 L403.4 888.0 L405.6 870.5 L407.8 871.2 L410.0 874.8 L412.2 890.9 L414.5 869.6 L416.7 869.9 L418.9 866.6 L421.1 873.0 L423.3 884.8 L425.6 873.2 L427.8 868.6 L430.0 880.3 L432.2 869.3 L434.5 878.0 L436.7 872.7 L438.9 869.6 L441.1 879.4 L443.3 855.1 L445.6 876.9 L447.8 882.5 L450.0 879.2" stroke="#37872D"/><path d="M52.4 882.4 L54.6 868.9 L56.8 879.0 L59.1 868.8 L61.3 877.7 L63.5 878.0 L65.7 871.7 L67.9 872.8 L70.2 875.6 L72.4 882.2 L74.6 877.3 L76.8 882.8 L79.1 875.9 L81.3 875.1 L83.5 866.6 L85.7 868.7 L87.9 872.9 L90.2 870.3 L92.4 875.4 L94.6 858.4 L96.8 869.6 L99.0 860.4 L101.3 876.4 L103.5 873.0 L105.7 869.7 L107.9 875.8 L110.2 873.8 L112.4 882.3 L114.6 868.5 L116.8 876.3 L119.0 870.5 L121.3 878.1 L123.5 886.4 L125.7 870.5 L127.9 869.5 L130.1 885.0 L132.4 880.0 L134.6 876.8 L136.8 877.1 L139.0 886.1 L141.2 862.7 L143.5 888.4 L145.7 880.3 L147.9 886.2 L150.1 871.4 L152.4 864.2 L154.6 872.9 L156.8 869.1 L159.0 883.0 L161.2 872.8 L163.5 885.7 L165.7 861.3 L167.9 875.1 L170.1 889.1 L172.3 884.7 L174.6 888.2 L176.8 875.8 L179.0 877.7 L181.2 871.5 L183.5 864.0 L185.7 875.8 L187.9 887.0 L190.1 874.5 L192.3 884.2 L194.6 879.1 L196.8 873.0 L199.0 877.4 L201.2 882.1 L203.4 861.5 L205.7 881.1 L207.9 871.4 L210.1 878.2 L212.3 880.4 L214.5 878.0 L216.8 870.6 L219.0 885.6 L221.2 875.5 L223.4 879.4 L225.7 874.2 L227.9 887.2 L230.1 856.8 L232.3 883.9 L234.5 873.6 L236.8 879.2 L239.0 878.2 L241.2 872.8 L243.4 879.6 L245.6 877.7 L247.9 884.1 L250.1 879.9 L252.3 882.3 L254.5 863.2 L256.8 886.7 L259.0 880.4 L261.2 873.7 L263.4 867.3 L265.6 888.1 L267.9 883.1 L270.1 873.6 L272.3 874.1 L274.5 885.0 L276.7 885.3 L279.0 880.0 L281.2 870.3 L283.4 877.2 L285.6 870.9 L287.9 877.5 L290.1 875.7 L292.3 872.0 L294.5 877.3 L296.7 874.1 L299.0 881.9 L301.2 878.4 L303.4 872.4 L305.6 878.0 L307.8 880.1 L310.1 870.9 L312.3 873.4 L314.5 876.4 L316.7 880.5 L318.9 869.3 L321.2 861.5 L323.4 883.9 L325.6 883.9 L327.8 891.9 L330.1 881.0 L332.3 882.7 L334.5 881.9 L336.7 869.3 L338.9 871.8 L341.2 867.4 L343.4 872.9 L345.6 879.5 L347.8 868.3 L350.0 881.2 L352.3 877.0 L354.5 883.0 L356.7 866.7 L358.9 871.4 L361.2 879.7 L363.4 877.1 L365.6 875.4 L367.8 874.7 L370.0 870.8 L372.3 876.5 L374.5 873.2 L376.7 885.8 L378.9 875.8 L381.1 887.1 L383.4 862.5 L385.6 885.4 L387.8 884.9 L390.0 869.6 L392.2 864.6 L394.5 872.3 L396.7 886.6 L398.9 875.0 L401.1 890.8 L403.4 878.0 L405.6 883.3 L407.8 874.5 L410.0 873.7 L412.2 882.2 L414.5 876.4 L416.7 874.0 L418.9 869.7 L421.1 876.8 L423.3 890.8 L425.6 875.7 L427.8 871.0 L430.0 875.3 L432.2 885.3 L434.5 875.7 L436.7 874.3 L438.9 882.4 L441.1 870.4 L443.3 882.1 L445.6 876.8 L447.8 876.4 L450.0 861.9" stroke="#FF780A"/><path d="M52.4 874.3 L54.6 880.7 L56.8 865.7 L59.1 864.2 L61.3 883.8 L63.5 870.6 L65.7 869.9 L67.9 859.6 L70.2 878.9 L72.4 878.4 L74.6 872.5 L76.8 860.7 L79.1 875.5 L81.3 871.3 L83.5 862.4 L85.7 889.4 L87.9 884.2 L90.2 865.4 L92.4 870.0 L94.6 883.0 L96.8 868.2 L99.0 874.2 L101.3 871.9 L103.5 878.9 L105.7 875.2 L107.9 878.7 L110.2 872.0 L112.4 875.2 L114.6 862.3 L116.8 871.6 L119.0 894.3 L121.3 868.7 L123.5 865.2 L125.7 873.3 L127.9 866.5 L130.1 875.0 L132.4 868.6 L134.6 880.4 L136.8 867.0 L139.0 883.6 L141.2 863.1 L143.5 885.2 L145.7 884.7 L147.9 867.8 L150.1 875.7 L152.4 872.3 L154.6 870.9 L156.8 874.1 L159.0 879.0 L161.2 871.0 L163.5 871.7 L165.7 870.6 L167.9 861.2 L170.1 880.6 L172.3 871.6 L174.6 870.2 L176.8 877.0 L179.0 880.4 L181.2 875.7 L183.5 866.1 L185.7 876.6 L187.9 868.9 L190.1 879.1 L192.3 869.4 L194.6 878.6 L196.8 877.8 L199.0 871.8 L201.2 873.4 L203.4 864.0 L205.7 885.8 L207.9 867.7 L210.1 864.2 L212.3 866.5 L214.5 877.3 L216.8 877.0 L219.0 875.9 L221.2 871.0 L223.4 872.7 L225.7 871.3 L227.9 870.0 L230.1 881.0 L232.3 879.2 L234.5 880.2 L236.8 880.7 L239.0 872.6 L241.2 871.6 L243.4 857.5 L245.6 873.2 L247.9 873.4 L250.1 864.3 L252.3 880.0 L254.5 869.9 L256.8 867.9 L259.0 869.5 L261.2 871.6 L263.4 876.0 L265.6 893.4 L267.9 872.9 L270.1 877.4 L272.3 868.2 L274.5 875.4 L276.7 885.3 L279.0 884.6 L281.2 864.9 L283.4 880.6 L285.6 882.0 L287.9 880.6 L290.1 876.0 L292.3 865.7 L294.5 870.4 L296.7 868.3 L299.0 871.2 L301.2 874.5 L303.4 883.3 L305.6 877.8 L307.8 885.6 L310.1 876.6 L312.3 889.8 L314.5 875.3 L316.7 879.1 L318.9 877.4 L321.2 877.9 L323.4 865.1 L325.6 877.3 L327.8 871.1 L330.1 869.0 L332.3 868.5 L334.5 870.0 L336.7 877.7 L338.9 879.6 L341.2 877.2 L343.4 875.7 L345.6 872.9 L347.8 874.1 L350.0 866.3 L352.3 875.5 L354.5 861.5 L356.7 869.2 L358.9 877.4 L361.2 867.1 L363.4 893.1 L365.6 860.6 L367.8 873.3 L370.0 870.9 L372.3 884.7 L374.5 855.0 L376.7 878.8 L378.9 873.3 L381.1 866.2 L383.4 876.1 L385.6 878.4 L387.8 868.2 L390.0 881.0 L392.2 867.2 L394.5 873.8 L396.7 866.1 L398.9 882.7 L401.1 863.6 L403.4 873.5 L405.6 860.8 L407.8 880.1 L410.0 860.2 L412.2 871.6 L414.5 868.7 L416.7 879.0 L418.9 868.7 L421.1 870.1 L423.3 879.4 L425.6 879.7 L427.8 877.1 L430.0 863.3 L432.2 874.5 L434.5 867.2 L436.7 872.8 L438.9 872.8 L441.1 872.1 L443.3 876.3 L445.6 865.0 L447.8 874.0 L450.0 871.9" stroke="#A352CC"/><path d="M52.4 875.5 L54.6 884.7 L56.8 865.9 L59.1 889.6 L61.3 877.3 L63.5 883.8 L65.7 877.4 L67.9 869.5 L70.2 872.3 L72.4 869.7 L74.6 872.3 L76.8 888.3 L79.1 870.5 L81.3 887.5 L83.5 875.7 L85.7 877.4 L87.9 878.0 L90.2 871.3 L92.4 880.8 L94.6 863.0 L96.8 873.7 L99.0 867.9 L101.3 871.7 L103.5 870.1 L105.7 876.3 L107.9 862.4 L110.2 884.2 L112.4 870.3 L114.6 875.9 L116.8 876.2 L119.0 872.8 L121.3 880.2 L123.5 868.5 L125.7 871.4 L127.9 875.1 L130.1 870.4 L132.4 882.5 L134.6 884.9 L136.8 876.7 L139.0 876.2 L141.2 859.1 L143.5 879.6 L145.7 867.6 L147.9 860.8 L150.1 862.5 L152.4 876.8 L154.6 870.6 L156.8 877.1 L159.0 880.0 L161.2 880.3 L163.5 878.9 L165.7 865.3 L167.9 875.2 L170.1 876.0 L172.3 874.7 L174.6 878.6 L176.8 874.5 L179.0 875.4 L181.2 870.8 L183.5 870.1 L185.7 886.3 L187.9 871.3 L190.1 867.1 L192.3 883.0 L194.6 875.0 L196.8 874.0 L199.0 886.0 L201.2 872.6 L203.4 876.9 L205.7 871.5 L207.9 869.2 L210.1 873.7 L212.3 863.6 L214.5 874.6 L216.8 881.7 L219.0 878.6 L221.2 875.1 L223.4 876.3 L225.7 870.9 L227.9 873.6 L230.1 864.5 L232.3 872.0 L234.5 881.3 L236.8 881.5 L239.0 876.4 L241.2 870.4 L243.4 875.3 L245.6 871.0 L247.9 874.2 L250.1 879.0 L252.3 863.5 L254.5 870.1 L256.8 885.7 L259.0 876.7 L261.2 874.5 L263.4 870.8 L265.6 876.3 L267.9 883.3 L270.1 868.1 L272.3 877.7 L274.5 866.9 L276.7 874.7 L279.0 868.7 L281.2 871.0 L283.4 870.2 L285.6 879.1 L287.9 867.7 L290.1 875.1 L292.3 882.7 L294.5 875.9 L296.7 876.9 L299.0 871.6 L301.2 871.3 L303.4 882.7 L305.6 868.9 L307.8 876.6 L310.1 881.2 L312.3 868.5 L314.5 881.0 L316.7 881.2 L318.9 869.0 L321.2 870.5 L323.4 880.0 L325.6 867.3 L327.8 870.2 L330.1 879.1 L332.3 861.6 L334.5 878.0 L336.7 872.9 L338.9 890.3 L341.2 867.9 L343.4 880.2 L345.6 871.1 L347.8 886.4 L350.0 865.4 L352.3 867.7 L354.5 864.5 L356.7 895.5 L358.9 867.1 L361.2 874.3 L363.4 893.9 L365.6 875.7 L367.8 875.3 L370.0 865.9 L372.3 881.9 L374.5 872.2 L376.7 875.8 L378.9 872.4 L381.1 877.9 L383.4 868.7 L385.6 870.0 L387.8 884.4 L390.0 866.0 L392.2 881.3 L394.5 875.3 L396.7 867.7 L398.9 875.7 L401.1 871.1 L403.4 870.7 L405.6 871.9 L407.8 878.8 L410.0 880.0 L412.2 869.5 L414.5 871.1 L416.7 873.3 L418.9 876.3 L421.1 869.2 L423.3 876.1 L425.6 883.1 L427.8 871.4 L430.0 872.3 L432.2 870.5 L434.5 881.3 L436.7 878.2 L438.9 872.0 L441.1 878.1 L443.3 874.5 L445.6 869.0 L447.8 873.5 L450.0 863.6" stroke="#8F3BB8"/><path d="M52.4 869.2 L54.6 877.0 L56.8 873.7 L59.1 871.2 L61.3 874.7 L63.5 874.9 L65.7 876.4 L67.9 870.1 L70.2 872.6 L72.4 880.9 L74.6 877.0 L76.8 875.8 L79.1 874.2 L81.3 874.3 L83.5 876.1 L85.7 867.9 L87.9 867.7 L90.2 873.0 L92.4 885.5 L94.6 870.8 L96.8 869.5 L99.0 873.6 L101.3 870.6 L103.5 872.2 L105.7 881.4 L107.9 885.8 L110.2 866.1 L112.4 876.9 L114.6 857.5 L116.8 875.0 L119.0 873.0 L121.3 864.2 L123.5 881.3 L125.7 870.8 L127.9 879.3 L130.1 870.7 L132.4 870.0 L134.6 869.1 L136.8 872.3 L139.0 880.7 L141.2 869.4 L143.5 867.8 L145.7 867.5 L147.9 860.7 L150.1 871.5 L152.4 878.7 L154.6 872.8 L156.8 871.6 L159.0 866.4 L161.2 880.5 L163.5 865.4 L165.7 870.0 L167.9 878.2 L170.1 867.7 L172.3 878.0 L174.6 871.4 L176.8 874.5 L179.0 857.1 L181.2 879.9 L183.5 867.9 L185.7 886.3 L187.9 872.1 L190.1 875.9 L192.3 862.4 L194.6 871.3 L196.8 875.6 L199.0 877.2 L201.2 871.3 L203.4 876.5 L205.7 858.4 L207.9 891.8 L210.1 868.2 L212.3 888.0 L214.5 863.2 L216.8 879.1 L219.0 861.6 L221.2 877.9 L223.4 865.0 L225.7 872.8 L227.9 865.4 L230.1 873.8 L232.3 889.9 L234.5 873.3 L236.8 881.6 L239.0 865.0 L241.2 870.8 L243.4 872.8 L245.6 869.7 L247.9 871.9 L250.1 876.0 L252.3 860.1 L254.5 873.5 L256.8 873.4 L259.0 881.0 L261.2 874.5 L263.4 872.0 L265.6 873.6 L267.9 892.9 L270.1 872.3 L272.3 879.2 L274.5 871.1 L276.7 882.0 L279.0 888.5 L281.2 876.2 L283.4 866.6 L285.6 870.8 L287.9 872.4 L290.1 879.3 L292.3 873.5 L294.5 867.5 L296.7 866.0 L299.0 895.6 L301.2 873.0 L303.4 871.7 L305.6 870.5 L307.8 872.8 L310.1 868.4 L312.3 881.9 L314.5 861.3 L316.7 899.3 L318.9 881.3 L321.2 869.8 L323.4 866.0 L325.6 868.4 L327.8 868.1 L330.1 865.7 L332.3 874.7 L334.5 867.5 L336.7 864.2 L338.9 878.6 L341.2 879.6 L343.4 877.0 L345.6 863.1 L347.8 880.5 L350.0 875.7 L352.3 870.3 L354.5 870.0 L356.7 866.6 L358.9 884.8 L361.2 873.3 L363.4 873.8 L365.6 878.9 L367.8 872.4 L370.0 874.3 L372.3 870.3 L374.5 888.2 L376.7 850.9 L378.9 871.8 L381.1 867.2 L383.4 877.4 L385.6 868.9 L387.8 860.8 L390.0 863.8 L392.2 873.7 L394.5 879.6 L396.7 870.0 L398.9 874.7 L401.1 876.3 L403.4 881.2 L405.6 871.8 L407.8 870.9 L410.0 875.5 L412.2 865.4 L414.5 880.6 L416.7 878.1 L418.9 873.3 L421.1 867.2 L423.3 875.2 L425.6 875.4 L427.8 866.9 L430.0 872.1 L432.2 875.6 L434.5 871.0 L436.7 874.1 L438.9 868.4 L441.1 872.3 L443.3 890.7 L445.6 874.3 L447.8 874.5 L450.0 869.7" stroke="#705DA0"/><path d="M52.4 870.6 L54.6 876.3 L56.8 878.0 L59.1 864.1 L61.3 873.1 L63.5 875.1 L65.7 864.1 L67.9 869.5 L70.2 894.5 L72.4 872.1 L74.6 878.3 L76.8 883.0 L79.1 862.2 L81.3 868.7 L83.5 884.0 L85.7 870.4 L87.9 885.8 L90.2 866.5 L92.4 877.1 L94.6 876.4 L96.8 867.3 L99.0 876.6 L101.3 876.3 L103.5 869.4 L105.7 878.0 L107.9 869.3 L110.2 876.2 L112.4 869.9 L114.6 872.4 L116.8 870.9 L119.0 882.0 L121.3 862.4 L123.5 878.6 L125.7 863.8 L127.9 880.9 L130.1 875.6 L132.4 876.6 L134.6 867.8 L136.8 879.1 L139.0 871.8 L141.2 885.2 L143.5 876.0 L145.7 890.6 L147.9 876.0 L150.1 886.2 L152.4 869.9 L154.6 881.9 L156.8 862.0 L159.0 878.8 L161.2 860.7 L163.5 874.0 L165.7 872.5 L167.9 870.7 L170.1 875.1 L172.3 872.4 L174.6 887.4 L176.8 866.6 L179.0 865.8 L181.2 874.9 L183.5 891.6 L185.7 869.0 L187.9 871.8 L190.1 874.0 L192.3 873.4 L194.6 877.7 L196.8 873.7 L199.0 868.1 L201.2 879.1 L203.4 871.3 L205.7 871.5 L207.9 877.2 L210.1 873.2 L212.3 874.1 L214.5 878.3 L216.8 859.7 L219.0 880.8 L221.2 863.6 L223.4 870.9 L225.7 903.4 L227.9 880.1 L230.1 869.7 L232.3 871.2 L234.5 881.3 L236.8 872.3 L239.0 882.9 L241.2 879.8 L243.4 875.6 L245.6 873.8 L247.9 865.6 L250.1 874.8 L252.3 868.7 L254.5 883.7 L256.8 880.4 L259.0 877.0 L261.2 864.1 L263.4 885.4 L265.6 882.6 L267.9 874.1 L270.1 868.1 L272.3 886.4 L274.5 882.5 L276.7 883.5 L279.0 864.6 L281.2 890.7 L283.4 873.9 L285.6 875.6 L287.9 876.4 L290.1 874.0 L292.3 879.3 L294.5 879.7 L296.7 881.0 L299.0 873.9 L301.2 880.2 L303.4 868.8 L305.6 889.2 L307.8 868.8 L310.1 873.1 L312.3 868.1 L314.5 878.1 L316.7 883.7 L318.9 879.0 L321.2 867.4 L323.4 878.5 L325.6 877.0 L327.8 878.3 L330.1 874.9 L332.3 876.6 L334.5 884.3 L336.7 876.9 L338.9 868.6 L341.2 867.6 L343.4 877.4 L345.6 877.8 L347.8 866.3 L350.0 878.0 L352.3 881.7 L354.5 874.6 L356.7 871.0 L358.9 866.4 L361.2 879.8 L363.4 870.9 L365.6 878.0 L367.8 867.6 L370.0 875.1 L372.3 873.5 L374.5 881.5 L376.7 858.8 L378.9 877.0 L381.1 896.7 L383.4 865.6 L385.6 877.1 L387.8 876.0 L390.0 877.2 L392.2 874.6 L394.5 873.8 L396.7 883.4 L398.9 872.7 L401.1 874.9 L403.4 875.0 L405.6 884.2 L407.8 874.2 L410.0 883.2 L412.2 871.4 L414.5 867.9 L416.7 871.3 L418.9 878.0 L421.1 877.9 L423.3 878.0 L425.6 872.4 L427.8 879.7 L430.0 877.5 L432.2 890.0 L434.5 877.4 L436.7 879.5 L438.9 877.6 L441.1 867.3 L443.3 885.0 L445.6 881.3 L447.8 870.3 L450.0 882.1" stroke="#3274D9"/><path d="M52.4 873.5 L54.6 883.3 L56.8 874.0 L59.1 896.9 L61.3 870.9 L63.5 869.7 L65.7 880.6 L67.9 870.9 L70.2 877.6 L72.4 876.8 L74.6 860.6 L76.8 870.5 L79.1 871.0 L81.3 876.5 L83.5 870.2 L85.7 875.2 L87.9 870.2 L90.2 879.5 L92.4 872.6 L94.6 876.0 L96.8 881.5 L99.0 861.4 L101.3 870.8 L103.5 878.8 L105.7 881.3 L107.9 876.3 L110.2 878.0 L112.4 876.2 L114.6 882.1 L116.8 876.7 L119.0 872.3 L121.3 871.1 L123.5 886.0 L125.7 870.9 L127.9 880.0 L130.1 878.5 L132.4 874.3 L134.6 877.4 L136.8 868.3 L139.0 870.1 L141.2 875.9 L143.5 876.9 L145.7 861.7 L147.9 864.2 L150.1 872.8 L152.4 874.5 L154.6 867.0 L156.8 865.8 L159.0 862.4 L161.2 861.3 L163.5 876.8 L165.7 866.0 L167.9 878.1 L170.1 858.5 L172.3 876.5 L174.6 872.6 L176.8 867.3 L179.0 880.2 L181.2 873.9 L183.5 869.9 L185.7 877.0 L187.9 860.1 L190.1 885.1 L192.3 855.4 L194.6 881.1 L196.8 865.8 L199.0 864.9 L201.2 871.8 L203.4 882.4 L205.7 873.7 L207.9 872.9 L210.1 870.0 L212.3 868.0 L214.5 867.5 L216.8 865.5 L219.0 880.9 L221.2 865.8 L223.4 885.7 L225.7 870.0 L227.9 880.7 L230.1 883.0 L232.3 865.8 L234.5 875.1 L236.8 876.2 L239.0 884.5 L241.2 878.7 L243.4 873.0 L245.6 877.6 L247.9 872.1 L250.1 877.5 L252.3 874.7 L254.5 880.3 L256.8 864.1 L259.0 877.3 L261.2 880.0 L263.4 867.9 L265.6 871.5 L267.9 872.4 L270.1 872.2 L272.3 890.3 L274.5 873.7 L276.7 887.1 L279.0 880.3 L281.2 879.7 L283.4 870.4 L285.6 866.4 L287.9 875.8 L290.1 874.6 L292.3 866.2 L294.5 877.1 L296.7 868.6 L299.0 871.7 L301.2 882.0 L303.4 869.7 L305.6 872.9 L307.8 896.7 L310.1 878.4 L312.3 880.3 L314.5 863.5 L316.7 862.2 L318.9 871.2 L321.2 872.2 L323.4 883.7 L325.6 862.6 L327.8 863.3 L330.1 865.4 L332.3 880.9 L334.5 865.1 L336.7 875.8 L338.9 866.2 L341.2 878.8 L343.4 872.2 L345.6 877.2 L347.8 869.7 L350.0 874.8 L352.3 866.2 L354.5 869.7 L356.7 853.8 L358.9 874.0 L361.2 875.2 L363.4 873.0 L365.6 868.8 L367.8 873.5 L370.0 871.6 L372.3 874.0 L374.5 873.8 L376.7 877.5 L378.9 884.3 L381.1 867.6 L383.4 871.1 L385.6 879.9 L387.8 860.2 L390.0 883.3 L392.2 865.2 L394.5 873.5 L396.7 871.4 L398.9 866.7 L401.1 869.0 L403.4 874.1 L405.6 879.9 L407.8 879.7 L410.0 870.9 L412.2 864.0 L414.5 869.8 L416.7 874.3 L418.9 871.1 L421.1 869.6 L423.3 863.4 L425.6 880.1 L427.8 867.5 L430.0 872.8 L432.2 878.3 L434.5 878.8 L436.7 876.6 L438.9 873.1 L441.1 874.8 L443.3 872.5 L445.6 867.4 L447.8 874.0 L450.0 863.2" stroke="#584477"/><path d="M52.4 868.9 L54.6 876.3 L56.8 880.9 L59.1 878.5 L61.3 876.9 L63.5 867.8 L65.7 873.9 L67.9 873.7 L70.2 868.9 L72.4 868.3 L74.6 864.3 L76.8 877.5 L79.1 867.7 L81.3 868.7 L83.5 878.9 L85.7 870.1 L87.9 878.4 L90.2 872.4 L92.4 869.6 L94.6 883.4 L96.8 875.4 L99.0 876.6 L101.3 872.3 L103.5 877.1 L105.7 868.9 L107.9 878.2 L110.2 874.2 L112.4 868.0 L114.6 871.1 L116.8 871.5 L119.0 872.6 L121.3 865.9 L123.5 864.9 L125.7 876.0 L127.9 876.0 L130.1 878.0 L132.4 860.3 L134.6 880.2 L136.8 878.9 L139.0 869.2 L141.2 866.3 L143.5 881.1 L145.7 885.5 L147.9 881.4 L150.1 892.5 L152.4 861.6 L154.6 873.3 L156.8 873.6 L159.0 871.5 L161.2 870.6 L163.5 873.2 L165.7 879.4 L167.9 878.1 L170.1 858.5 L172.3 879.7 L174.6 863.3 L176.8 878.5 L179.0 862.9 L181.2 869.8 L183.5 874.0 L185.7 859.3 L187.9 880.6 L190.1 872.0 L192.3 894.2 L194.6 876.0 L196.8 873.7 L199.0 877.9 L201.2 873.1 L203.4 862.2 L205.7 885.1 L207.9 877.5 L210.1 877.1 L212.3 874.1 L214.5 865.5 L216.8 869.1 L219.0 869.9 L221.2 860.3 L223.4 857.5 L225.7 882.2 L227.9 877.4 L230.1 871.3 L232.3 871.1 L234.5 873.9 L236.8 877.1 L239.0 879.4 L241.2 872.5 L243.4 876.6 L245.6 874.3 L247.9 878.5 L250.1 862.6 L252.3 871.3 L254.5 860.9 L256.8 877.7 L259.0 870.8 L261.2 874.1 L263.4 871.7 L265.6 873.9 L267.9 872.9 L270.1 884.4 L272.3 871.5 L274.5 868.1 L276.7 885.2 L279.0 879.4 L281.2 868.7 L283.4 865.0 L285.6 874.2 L287.9 869.0 L290.1 861.9 L292.3 866.2 L294.5 876.2 L296.7 875.2 L299.0 865.3 L301.2 872.2 L303.4 875.6 L305.6 873.0 L307.8 870.1 L310.1 873.9 L312.3 873.5 L314.5 873.4 L316.7 881.3 L318.9 859.6 L321.2 867.1 L323.4 863.8 L325.6 874.7 L327.8 870.9 L330.1 868.9 L332.3 867.8 L334.5 884.5 L336.7 867.6 L338.9 879.4 L341.2 871.2 L343.4 876.5 L345.6 860.7 L347.8 871.2 L350.0 872.6 L352.3 863.5 L354.5 874.4 L356.7 876.3 L358.9 872.6 L361.2 874.4 L363.4 871.5 L365.6 867.1 L367.8 874.0 L370.0 872.3 L372.3 865.9 L374.5 871.7 L376.7 866.4 L378.9 872.5 L381.1 880.3 L383.4 877.6 L385.6 881.5 L387.8 863.3 L390.0 871.4 L392.2 875.3 L394.5 877.8 L396.7 868.9 L398.9 873.7 L401.1 869.9 L403.4 877.9 L405.6 878.0 L407.8 879.1 L410.0 880.3 L412.2 870.7 L414.5 864.2 L416.7 885.2 L418.9 865.3 L421.1 873.2 L423.3 872.9 L425.6 870.4 L427.8 880.0 L430.0 884.5 L432.2 858.0 L434.5 876.8 L436.7 865.8 L438.9 866.6 L441.1 871.5 L443.3 869.5 L445.6 868.3 L447.8 863.2 L450.0 871.0" stroke="#6D1F62"/><path d="M52.4 885.0 L54.6 880.9 L56.8 860.7 L59.1 869.8 L61.3 875.2 L63.5 864.6 L65.7 876.2 L67.9 873.3 L70.2 873.8 L72.4 885.8 L74.6 868.9 L76.8 882.9 L79.1 875.5 L81.3 841.3 L83.5 885.5 L85.7 871.9 L87.9 873.5 L90.2 874.2 L92.4 874.8 L94.6 878.2 L96.8 861.6 L99.0 890.0 L101.3 878.1 L103.5 864.8 L105.7 873.3 L107.9 879.8 L110.2 879.4 L112.4 875.4 L114.6 858.1 L116.8 875.0 L119.0 881.2 L121.3 872.0 L123.5 879.2 L125.7 864.5 L127.9 875.0 L130.1 866.8 L132.4 875.3 L134.6 861.9 L136.8 874.8 L139.0 873.0 L141.2 881.5 L143.5 876.1 L145.7 872.1 L147.9 878.4 L150.1 858.4 L152.4 866.9 L154.6 878.9 L156.8 867.7 L159.0 879.5 L161.2 871.3 L163.5 876.0 L165.7 879.0 L167.9 865.2 L170.1 876.1 L172.3 867.7 L174.6 878.3 L176.8 883.0 L179.0 880.9 L181.2 876.8 L183.5 867.7 L185.7 874.3 L187.9 871.6 L190.1 883.2 L192.3 871.6 L194.6 883.0 L196.8 877.4 L199.0 858.1 L201.2 870.1 L203.4 878.0 L205.7 862.9 L207.9 868.2 L210.1 870.5 L212.3 866.4 L214.5 878.0 L216.8 874.9 L219.0 880.1 L221.2 870.0 L223.4 883.6 L225.7 876.2 L227.9 871.6 L230.1 878.6 L232.3 871.8 L234.5 863.9 L236.8 883.1 L239.0 864.3 L241.2 881.1 L243.4 879.3 L245.6 872.4 L247.9 868.8 L250.1 880.4 L252.3 878.2 L254.5 876.8 L256.8 878.9 L259.0 872.8 L261.2 879.6 L263.4 875.4 L265.6 872.4 L267.9 877.8 L270.1 866.9 L272.3 880.6 L274.5 878.4 L276.7 861.2 L279.0 868.0 L281.2 875.7 L283.4 869.4 L285.6 873.7 L287.9 878.2 L290.1 869.8 L292.3 873.8 L294.5 866.9 L296.7 887.9 L299.0 867.1 L301.2 875.2 L303.4 879.0 L305.6 858.2 L307.8 876.9 L310.1 869.6 L312.3 876.8 L314.5 869.4 L316.7 885.3 L318.9 875.0 L321.2 889.5 L323.4 875.4 L325.6 872.2 L327.8 875.6 L330.1 874.3 L332.3 881.9 L334.5 869.8 L336.7 881.4 L338.9 867.7 L341.2 874.8 L343.4 877.1 L345.6 862.7 L347.8 879.2 L350.0 867.4 L352.3 875.6 L354.5 874.6 L356.7 868.5 L358.9 873.3 L361.2 875.1 L363.4 875.4 L365.6 873.3 L367.8 874.5 L370.0 876.8 L372.3 880.8 L374.5 889.8 L376.7 872.4 L378.9 876.7 L381.1 850.7 L383.4 873.5 L385.6 867.8 L387.8 865.2 L390.0 877.3 L392.2 879.5 L394.5 868.7 L396.7 879.7 L398.9 875.4 L401.1 865.6 L403.4 873.1 L405.6 868.2 L407.8 884.5 L410.0 872.6 L412.2 868.2 L414.5 884.1 L416.7 871.6 L418.9 872.8 L421.1 889.6 L423.3 861.8 L425.6 867.0 L427.8 874.2 L430.0 850.7 L432.2 888.0 L434.5 869.2 L436.7 878.7 L438.9 873.7 L441.1 880.1 L443.3 865.1 L445.6 883.7 L447.8 870.7 L450.0 872.2" stroke="#1250B0"/><path d="M52.4 865.3 L54.6 890.9 L56.8 873.2 L59.1 866.4 L61.3 880.1 L63.5 865.1 L65.7 878.8 L67.9 865.7 L70.2 871.8 L72.4 876.9 L74.6 878.0 L76.8 874.1 L79.1 866.5 L81.3 875.4 L83.5 877.7 L85.7 852.2 L87.9 888.1 L90.2 872.4 L92.4 870.7 L94.6 881.0 L96.8 872.5 L99.0 876.8 L101.3 882.6 L103.5 869.3 L105.7 881.9 L107.9 877.0 L110.2 865.5 L112.4 882.6 L114.6 868.3 L116.8 867.5 L119.0 868.9 L121.3 871.9 L123.5 875.7 L125.7 882.3 L127.9 871.3 L130.1 871.6 L132.4 877.5 L134.6 879.3 L136.8 867.3 L139.0 881.8 L141.2 869.5 L143.5 877.8 L145.7 883.7 L147.9 861.8 L150.1 872.5 L152.4 870.8 L154.6 883.4 L156.8 872.8 L159.0 872.4 L161.2 878.9 L163.5 862.6 L165.7 888.9 L167.9 866.5 L170.1 887.3 L172.3 881.1 L174.6 880.6 L176.8 869.0 L179.0 879.4 L181.2 877.1 L183.5 879.1 L185.7 882.3 L187.9 878.0 L190.1 879.4 L192.3 875.0 L194.6 876.2 L196.8 888.7 L199.0 875.2 L201.2 866.2 L203.4 878.6 L205.7 873.7 L207.9 878.7 L210.1 877.5 L212.3 873.9 L214.5 882.7 L216.8 873.5 L219.0 884.8 L221.2 870.0 L223.4 885.0 L225.7 868.0 L227.9 869.1 L230.1 885.5 L232.3 867.8 L234.5 878.1 L236.8 866.2 L239.0 879.2 L241.2 875.1 L243.4 876.0 L245.6 866.1 L247.9 888.1 L250.1 866.8 L252.3 875.3 L254.5 877.2 L256.8 875.3 L259.0 868.3 L261.2 870.4 L263.4 864.5 L265.6 880.4 L267.9 885.0 L270.1 875.7 L272.3 861.6 L274.5 876.9 L276.7 866.2 L279.0 861.7 L281.2 874.5 L283.4 885.5 L285.6 865.6 L287.9 880.2 L290.1 873.0 L292.3 869.4 L294.5 873.1 L296.7 875.1 L299.0 872.5 L301.2 870.0 L303.4 871.3 L305.6 862.0 L307.8 895.7 L310.1 875.1 L312.3 893.9 L314.5 868.5 L316.7 874.2 L318.9 869.1 L321.2 884.4 L323.4 873.8 L325.6 870.5 L327.8 875.5 L330.1 876.7 L332.3 872.2 L334.5 864.5 L336.7 889.6 L338.9 861.4 L341.2 875.3 L343.4 879.6 L345.6 869.2 L347.8 875.2 L350.0 866.7 L352.3 881.0 L354.5 867.0 L356.7 881.6 L358.9 871.0 L361.2 870.7 L363.4 875.6 L365.6 870.1 L367.8 879.0 L370.0 866.8 L372.3 879.1 L374.5 877.9 L376.7 882.2 L378.9 874.7 L381.1 879.6 L383.4 868.4 L385.6 876.4 L387.8 870.2 L390.0 884.6 L392.2 880.6 L394.5 874.8 L396.7 880.5 L398.9 874.0 L401.1 871.0 L403.4 868.1 L405.6 866.4 L407.8 871.1 L410.0 896.3 L412.2 869.9 L414.5 878.6 L416.7 870.2 L418.9 881.8 L421.1 864.5 L423.3 873.8 L425.6 876.3 L427.8 874.1 L430.0 885.9 L432.2 878.4 L434.5 872.0 L436.7 879.3 L438.9 876.8 L441.1 870.0 L443.3 866.0 L445.6 884.0 L447.8 873.7 L450.0 872.1" stroke="#1F60C4"/><path d="M52.4 871.6 L54.6 861.5 L56.8 861.2 L59.1 868.2 L61.3 874.6 L63.5 872.1 L65.7 876.2 L67.9 875.6 L70.2 868.3 L72.4 885.8 L74.6 863.9 L76.8 875.5 L79.1 858.2 L81.3 867.9 L83.5 861.1 L85.7 876.9 L87.9 875.5 L90.2 881.0 L92.4 864.4 L94.6 878.8 L96.8 860.5 L99.0 871.6 L101.3 865.5 L103.5 879.6 L105.7 872.4 L107.9 869.0 L110.2 866.2 L112.4 879.4 L114.6 866.6 L116.8 876.5 L119.0 864.2 L121.3 873.2 L123.5 871.8 L125.7 867.5 L127.9 863.9 L130.1 873.3 L132.4 862.3 L134.6 878.4 L136.8 879.7 L139.0 878.2 L141.2 867.6 L143.5 876.8 L145.7 869.0 L147.9 866.9 L150.1 877.3 L152.4 880.1 L154.6 869.7 L156.8 867.4 L159.0 869.7 L161.2 876.4 L163.5 864.1 L165.7 873.6 L167.9 865.1 L170.1 877.1 L172.3 866.4 L174.6 864.0 L176.8 876.0 L179.0 871.3 L181.2 866.5 L183.5 868.1 L185.7 868.8 L187.9 871.7 L190.1 880.1 L192.3 868.7 L194.6 879.0 L196.8 868.3 L199.0 885.6 L201.2 858.6 L203.4 861.1 L205.7 869.7 L207.9 876.0 L210.1 871.4 L212.3 864.9 L214.5 875.3 L216.8 875.5 L219.0 862.1 L221.2 867.8 L223.4 856.2 L225.7 873.3 L227.9 870.1 L230.1 875.1 L232.3 868.5 L234.5 875.1 L236.8 862.4 L239.0 872.0 L241.2 869.0 L243.4 868.9 L245.6 868.9 L247.9 879.8 L250.1 860.8 L252.3 872.0 L254.5 873.7 L256.8 876.0 L259.0 873.8 L261.2 873.8 L263.4 869.9 L265.6 876.1 L267.9 868.8 L270.1 870.1 L272.3 875.0 L274.5 856.0 L276.7 874.3 L279.0 867.8 L281.2 870.5 L283.4 871.7 L285.6 866.2 L287.9 863.0 L290.1 872.6 L292.3 875.6 L294.5 866.3 L296.7 884.9 L299.0 851.6 L301.2 872.6 L303.4 868.3 L305.6 880.5 L307.8 871.4 L310.1 876.9 L312.3 881.3 L314.5 866.6 L316.7 872.8 L318.9 874.0 L321.2 862.7 L323.4 872.3 L325.6 883.0 L327.8 874.8 L330.1 867.4 L332.3 868.8 L334.5 869.9 L336.7 869.4 L338.9 876.7 L341.2 870.3 L343.4 878.3 L345.6 874.6 L347.8 875.8 L350.0 875.1 L352.3 872.2 L354.5 872.1 L356.7 875.7 L358.9 863.3 L361.2 875.3 L363.4 860.6 L365.6 866.9 L367.8 879.3 L370.0 863.9 L372.3 881.1 L374.5 860.1 L376.7 885.4 L378.9 877.2 L381.1 883.4 L383.4 871.1 L385.6 879.5 L387.8 862.7 L390.0 880.5 L392.2 870.7 L394.5 868.2 L396.7 871.7 L398.9 869.4 L401.1 873.1 L403.4 866.3 L405.6 877.9 L407.8 885.0 L410.0 879.6 L412.2 868.4 L414.5 878.8 L416.7 870.9 L418.9 867.6 L421.1 864.3 L423.3 894.2 L425.6 873.5 L427.8 876.8 L430.0 862.6 L432.2 878.3 L434.5 865.5 L436.7 875.6 L438.9 879.3 L441.1 869.0 L443.3 878.8 L445.6 865.3 L447.8 867.4 L450.0 863.8" stroke="#0A437C"/><path d="M52.4 873.9 L54.6 885.9 L56.8 879.9 L59.1 883.9 L61.3 871.3 L63.5 883.9 L65.7 891.0 L67.9 880.7 L70.2 881.6 L72.4 881.9 L74.6 885.6 L76.8 872.5 L79.1 899.3 L81.3 881.7 L83.5 883.0 L85.7 890.5 L87.9 889.6 L90.2 878.6 L92.4 880.8 L94.6 883.6 L96.8 893.5 L99.0 883.6 L101.3 882.4 L103.5 880.4 L105.7 877.4 L107.9 882.4 L110.2 878.3 L112.4 874.9 L114.6 899.7 L116.8 892.1 L119.0 888.3 L121.3 880.0 L123.5 883.3 L125.7 890.1 L127.9 888.0 L130.1 880.4 L132.4 885.6 L134.6 879.1 L136.8 905.6 L139.0 870.3 L141.2 888.1 L143.5 870.5 L145.7 891.1 L147.9 879.0 L150.1 878.0 L152.4 892.9 L154.6 887.8 L156.8 880.6 L159.0 877.6 L161.2 887.1 L163.5 881.9 L165.7 877.9 L167.9 892.0 L170.1 884.8 L172.3 885.2 L174.6 888.9 L176.8 884.3 L179.0 894.2 L181.2 882.9 L183.5 893.6 L185.7 879.7 L187.9 875.8 L190.1 883.6 L192.3 882.9 L194.6 886.4 L196.8 880.0 L199.0 891.3 L201.2 885.1 L203.4 870.6 L205.7 894.3 L207.9 885.2 L210.1 892.0 L212.3 874.9 L214.5 887.1 L216.8 890.9 L219.0 890.0 L221.2 876.0 L223.4 881.4 L225.7 879.6 L227.9 885.1 L230.1 878.2 L232.3 877.1 L234.5 881.3 L236.8 894.1 L239.0 893.7 L241.2 890.7 L243.4 881.0 L245.6 893.5 L247.9 888.5 L250.1 882.8 L252.3 889.5 L254.5 890.5 L256.8 876.9 L259.0 882.4 L261.2 879.5 L263.4 879.3 L265.6 876.2 L267.9 885.8 L270.1 884.8 L272.3 894.4 L274.5 883.4 L276.7 887.8 L279.0 877.0 L281.2 881.4 L283.4 875.7 L285.6 879.2 L287.9 877.9 L290.1 882.1 L292.3 883.6 L294.5 886.5 L296.7 883.7 L299.0 889.9 L301.2 880.6 L303.4 885.3 L305.6 896.1 L307.8 898.0 L310.1 885.7 L312.3 886.6 L314.5 885.4 L316.7 876.1 L318.9 889.5 L321.2 890.7 L323.4 880.5 L325.6 878.8 L327.8 875.3 L330.1 892.0 L332.3 884.1 L334.5 886.7 L336.7 874.5 L338.9 881.9 L341.2 884.5 L343.4 896.9 L345.6 887.2 L347.8 884.8 L350.0 884.2 L352.3 887.1 L354.5 885.1 L356.7 881.8 L358.9 883.2 L361.2 875.5 L363.4 880.7 L365.6 885.3 L367.8 897.1 L370.0 890.5 L372.3 885.9 L374.5 886.1 L376.7 891.7 L378.9 885.0 L381.1 883.4 L383.4 888.2 L385.6 884.3 L387.8 884.8 L390.0 888.3 L392.2 888.6 L394.5 884.1 L396.7 882.6 L398.9 890.8 L401.1 895.2 L403.4 887.8 L405.6 880.5 L407.8 894.7 L410.0 876.6 L412.2 889.3 L414.5 882.5 L416.7 889.2 L418.9 879.8 L421.1 884.9 L423.3 881.9 L425.6 896.4 L427.8 877.5 L430.0 895.7 L432.2 884.0 L434.5 881.2 L436.7 886.0 L438.9 881.0 L441.1 884.0 L443.3 883.8 L445.6 889.2 L447.8 877.3 L450.0 879.0" stroke="#F4D598"/><path d="M52.4 878.0 L54.6 890.7 L56.8 869.6 L59.1 892.9 L61.3 882.1 L63.5 874.2 L65.7 893.2 L67.9 895.9 L70.2 881.4 L72.4 888.6 L74.6 888.4 L76.8 888.1 L79.1 891.6 L81.3 873.2 L83.5 878.0 L85.7 882.4 L87.9 882.2 L90.2 886.6 L92.4 876.1 L94.6 903.1 L96.8 872.1 L99.0 885.7 L101.3 887.9 L103.5 883.2 L105.7 887.2 L107.9 868.8 L110.2 885.5 L112.4 886.1 L114.6 882.4 L116.8 874.6 L119.0 891.2 L121.3 892.4 L123.5 873.6 L125.7 881.7 L127.9 886.7 L130.1 883.4 L132.4 876.7 L134.6 901.8 L136.8 872.0 L139.0 886.9 L141.2 878.6 L143.5 884.8 L145.7 864.0 L147.9 891.3 L150.1 875.1 L152.4 901.4 L154.6 879.7 L156.8 879.4 L159.0 894.0 L161.2 894.1 L163.5 880.8 L165.7 877.8 L167.9 877.3 L170.1 889.1 L172.3 880.3 L174.6 893.0 L176.8 870.7 L179.0 889.7 L181.2 874.3 L183.5 887.1 L185.7 884.9 L187.9 873.1 L190.1 891.1 L192.3 874.0 L194.6 887.7 L196.8 888.2 L199.0 887.8 L201.2 875.6 L203.4 885.6 L205.7 885.3 L207.9 892.6 L210.1 874.4 L212.3 878.8 L214.5 882.5 L216.8 878.9 L219.0 904.8 L221.2 882.6 L223.4 882.7 L225.7 883.1 L227.9 887.2 L230.1 881.3 L232.3 888.6 L234.5 886.7 L236.8 890.7 L239.0 881.3 L241.2 888.5 L243.4 885.7 L245.6 874.5 L247.9 885.7 L250.1 883.4 L252.3 893.2 L254.5 884.9 L256.8 877.1 L259.0 891.6 L261.2 883.7 L263.4 884.6 L265.6 882.9 L267.9 881.2 L270.1 886.1 L272.3 898.7 L274.5 868.2 L276.7 879.5 L279.0 885.3 L281.2 874.4 L283.4 893.6 L285.6 873.5 L287.9 884.4 L290.1 877.8 L292.3 886.9 L294.5 882.0 L296.7 880.2 L299.0 877.7 L301.2 881.5 L303.4 881.2 L305.6 887.8 L307.8 872.0 L310.1 884.6 L312.3 884.8 L314.5 885.4 L316.7 890.8 L318.9 886.8 L321.2 892.5 L323.4 880.5 L325.6 884.7 L327.8 882.0 L330.1 891.7 L332.3 884.6 L334.5 876.8 L336.7 876.6 L338.9 894.3 L341.2 890.9 L343.4 874.0 L345.6 895.1 L347.8 893.5 L350.0 873.1 L352.3 876.3 L354.5 877.9 L356.7 897.6 L358.9 880.0 L361.2 889.7 L363.4 884.0 L365.6 893.4 L367.8 888.8 L370.0 890.5 L372.3 880.5 L374.5 879.2 L376.7 880.6 L378.9 881.6 L381.1 886.4 L383.4 881.6 L385.6 885.4 L387.8 897.5 L390.0 874.5 L392.2 889.3 L394.5 885.7 L396.7 885.7 L398.9 891.9 L401.1 889.5 L403.4 893.7 L405.6 891.6 L407.8 877.2 L410.0 884.4 L412.2 890.6 L414.5 874.0 L416.7 887.5 L418.9 892.8 L421.1 893.5 L423.3 880.5 L425.6 875.2 L427.8 873.9 L430.0 886.8 L432.2 884.7 L434.5 888.7 L436.7 886.0 L438.9 881.5 L441.1 888.5 L443.3 876.8 L445.6 891.1 L447.8 877.7 L450.0 882.6" stroke="#B7DBAB"/><path d="M52.4 891.9 L54.6 877.7 L56.8 885.3 L59.1 885.3 L61.3 893.2 L63.5 884.8 L65.7 881.2 L67.9 885.1 L70.2 878.7 L72.4 886.1 L74.6 889.1 L76.8 883.3 L79.1 889.2 L81.3 876.1 L83.5 884.8 L85.7 880.2 L87.9 893.0 L90.2 890.5 L92.4 885.3 L94.6 890.3 L96.8 880.4 L99.0 883.7 L101.3 877.9 L103.5 883.0 L105.7 892.8 L107.9 877.8 L110.2 890.8 L112.4 888.8 L114.6 884.2 L116.8 885.5 L119.0 878.7 L121.3 868.9 L123.5 885.9 L125.7 876.0 L127.9 888.4 L130.1 882.5 L132.4 889.1 L134.6 887.2 L136.8 876.5 L139.0 884.2 L141.2 882.7 L143.5 890.8 L145.7 860.0 L147.9 899.5 L150.1 888.6 L152.4 884.7 L154.6 881.2 L156.8 881.4 L159.0 876.8 L161.2 893.6 L163.5 886.3 L165.7 875.3 L167.9 873.0 L170.1 891.6 L172.3 884.6 L174.6 895.1 L176.8 888.4 L179.0 890.1 L181.2 884.9 L183.5 892.8 L185.7 877.9 L187.9 887.1 L190.1 886.5 L192.3 862.7 L194.6 888.1 L196.8 892.4 L199.0 883.6 L201.2 872.0 L203.4 887.3 L205.7 881.6 L207.9 887.2 L210.1 886.2 L212.3 881.9 L214.5 902.5 L216.8 889.6 L219.0 888.1 L221.2 886.4 L223.4 875.9 L225.7 871.8 L227.9 884.0 L230.1 883.0 L232.3 881.4 L234.5 876.6 L236.8 893.1 L239.0 886.7 L241.2 895.0 L243.4 883.6 L245.6 897.4 L247.9 880.1 L250.1 896.2 L252.3 878.3 L254.5 881.4 L256.8 900.2 L259.0 879.1 L261.2 885.2 L263.4 889.1 L265.6 878.5 L267.9 874.1 L270.1 884.4 L272.3 892.3 L274.5 892.9 L276.7 891.0 L279.0 890.5 L281.2 877.2 L283.4 885.1 L285.6 885.5 L287.9 879.8 L290.1 886.2 L292.3 884.8 L294.5 890.6 L296.7 888.1 L299.0 884.5 L301.2 909.6 L303.4 873.4 L305.6 886.9 L307.8 888.4 L310.1 878.5 L312.3 893.2 L314.5 877.1 L316.7 886.4 L318.9 873.3 L321.2 891.1 L323.4 886.6 L325.6 890.3 L327.8 892.1 L330.1 882.3 L332.3 892.5 L334.5 881.8 L336.7 890.0 L338.9 877.7 L341.2 902.7 L343.4 879.2 L345.6 886.2 L347.8 885.1 L350.0 889.3 L352.3 873.6 L354.5 890.2 L356.7 881.6 L358.9 887.6 L361.2 887.1 L363.4 873.1 L365.6 881.2 L367.8 893.1 L370.0 886.7 L372.3 893.8 L374.5 881.1 L376.7 891.5 L378.9 888.7 L381.1 880.5 L383.4 886.3 L385.6 882.6 L387.8 886.7 L390.0 882.4 L392.2 885.3 L394.5 892.3 L396.7 882.6 L398.9 888.0 L401.1 886.2 L403.4 883.3 L405.6 889.1 L407.8 891.1 L410.0 876.7 L412.2 875.5 L414.5 889.4 L416.7 894.4 L418.9 884.5 L421.1 889.5 L423.3 889.7 L425.6 886.2 L427.8 887.8 L430.0 886.9 L432.2 885.7 L434.5 892.3 L436.7 878.5 L438.9 893.7 L441.1 890.3 L443.3 878.5 L445.6 881.9 L447.8 876.9 L450.0 886.1" stroke="#CCA300"/><path d="M52.4 874.4 L54.6 875.1 L56.8 890.2 L59.1 882.1 L61.3 886.5 L63.5 895.8 L65.7 876.3 L67.9 887.0 L70.2 874.1 L72.4 883.4 L74.6 904.6 L76.8 886.9 L79.1 883.7 L81.3 880.4 L83.5 886.9 L85.7 865.3 L87.9 885.6 L90.2 889.8 L92.4 881.5 L94.6 876.6 L96.8 882.0 L99.0 885.6 L101.3 886.9 L103.5 887.4 L105.7 889.7 L107.9 885.2 L110.2 881.3 L112.4 887.2 L114.6 872.5 L116.8 883.1 L119.0 886.0 L121.3 882.9 L123.5 874.3 L125.7 895.6 L127.9 889.3 L130.1 867.5 L132.4 880.2 L134.6 889.5 L136.8 881.3 L139.0 885.1 L141.2 865.7 L143.5 890.9 L145.7 883.4 L147.9 885.3 L150.1 891.7 L152.4 901.9 L154.6 881.0 L156.8 880.5 L159.0 886.5 L161.2 879.6 L163.5 879.4 L165.7 879.7 L167.9 894.4 L170.1 871.7 L172.3 880.3 L174.6 878.9 L176.8 884.1 L179.0 883.1 L181.2 886.6 L183.5 880.0 L185.7 878.2 L187.9 887.8 L190.1 877.3 L192.3 887.3 L194.6 878.8 L196.8 885.1 L199.0 877.6 L201.2 872.5 L203.4 884.0 L205.7 886.2 L207.9 885.3 L210.1 879.0 L212.3 887.2 L214.5 857.7 L216.8 882.8 L219.0 877.8 L221.2 887.8 L223.4 888.3 L225.7 886.9 L227.9 880.1 L230.1 888.7 L232.3 877.9 L234.5 897.0 L236.8 884.6 L239.0 884.0 L241.2 894.4 L243.4 884.8 L245.6 892.2 L247.9 881.9 L250.1 885.0 L252.3 878.3 L254.5 889.4 L256.8 892.1 L259.0 897.9 L261.2 882.1 L263.4 882.9 L265.6 882.3 L267.9 875.9 L270.1 886.9 L272.3 883.8 L274.5 888.3 L276.7 885.9 L279.0 876.3 L281.2 882.4 L283.4 899.6 L285.6 872.5 L287.9 897.7 L290.1 882.9 L292.3 877.3 L294.5 883.6 L296.7 879.7 L299.0 878.6 L301.2 882.3 L303.4 891.2 L305.6 879.4 L307.8 888.3 L310.1 897.1 L312.3 882.2 L314.5 880.0 L316.7 883.1 L318.9 883.2 L321.2 872.5 L323.4 883.7 L325.6 877.5 L327.8 882.3 L330.1 873.2 L332.3 887.5 L334.5 875.1 L336.7 873.6 L338.9 887.4 L341.2 875.9 L343.4 893.0 L345.6 879.3 L347.8 879.4 L350.0 889.1 L352.3 893.1 L354.5 880.9 L356.7 885.7 L358.9 881.5 L361.2 881.7 L363.4 878.3 L365.6 874.5 L367.8 882.2 L370.0 892.8 L372.3 877.1 L374.5 882.0 L376.7 882.5 L378.9 873.5 L381.1 883.5 L383.4 885.3 L385.6 879.9 L387.8 893.7 L390.0 875.1 L392.2 884.4 L394.5 872.5 L396.7 881.0 L398.9 881.2 L401.1 882.4 L403.4 890.6 L405.6 882.1 L407.8 881.5 L410.0 877.4 L412.2 881.6 L414.5 879.1 L416.7 879.7 L418.9 887.0 L421.1 880.4 L423.3 885.0 L425.6 890.5 L427.8 890.9 L430.0 876.4 L432.2 875.6 L434.5 875.8 L436.7 889.8 L438.9 872.5 L441.1 875.6 L443.3 889.3 L445.6 878.8 L447.8 873.4 L450.0 873.3" stroke="#AEA2E0"/><path d="M52.4 898.8 L54.6 890.8 L56.8 877.7 L59.1 893.9 L61.3 885.3 L63.5 886.7 L65.7 894.3 L67.9 882.9 L70.2 883.7 L72.4 888.5 L74.6 890.7 L76.8 883.2 L79.1 881.9 L81.3 894.4 L83.5 883.9 L85.7 881.9 L87.9 902.9 L90.2 879.6 L92.4 875.7 L94.6 894.8 L96.8 875.2 L99.0 888.9 L101.3 870.6 L103.5 887.0 L105.7 891.7 L107.9 894.3 L110.2 868.7 L112.4 896.6 L114.6 884.5 L116.8 876.5 L119.0 885.0 L121.3 884.0 L123.5 909.8 L125.7 886.4 L127.9 893.0 L130.1 894.5 L132.4 881.0 L134.6 880.8 L136.8 890.7 L139.0 887.9 L141.2 881.9 L143.5 880.3 L145.7 892.5 L147.9 876.4 L150.1 881.1 L152.4 885.9 L154.6 891.7 L156.8 880.3 L159.0 881.8 L161.2 875.0 L163.5 890.8 L165.7 874.2 L167.9 889.4 L170.1 881.0 L172.3 886.6 L174.6 884.3 L176.8 876.2 L179.0 891.0 L181.2 878.8 L183.5 888.0 L185.7 884.7 L187.9 889.5 L190.1 883.0 L192.3 897.7 L194.6 884.1 L196.8 879.0 L199.0 881.1 L201.2 895.8 L203.4 889.8 L205.7 886.7 L207.9 873.2 L210.1 890.1 L212.3 884.1 L214.5 886.8 L216.8 882.9 L219.0 891.1 L221.2 882.3 L223.4 882.7 L225.7 879.1 L227.9 891.7 L230.1 878.2 L232.3 874.6 L234.5 882.3 L236.8 881.4 L239.0 900.8 L241.2 873.6 L243.4 875.5 L245.6 879.4 L247.9 883.0 L250.1 880.3 L252.3 867.4 L254.5 892.9 L256.8 885.9 L259.0 878.0 L261.2 884.8 L263.4 898.4 L265.6 881.0 L267.9 883.7 L270.1 891.1 L272.3 881.5 L274.5 884.2 L276.7 896.3 L279.0 879.6 L281.2 872.8 L283.4 876.7 L285.6 893.7 L287.9 891.5 L290.1 883.4 L292.3 883.6 L294.5 893.6 L296.7 887.9 L299.0 888.1 L301.2 885.3 L303.4 878.5 L305.6 886.5 L307.8 878.4 L310.1 889.7 L312.3 887.3 L314.5 890.5 L316.7 895.9 L318.9 885.3 L321.2 893.4 L323.4 903.4 L325.6 883.9 L327.8 884.2 L330.1 882.8 L332.3 888.0 L334.5 884.8 L336.7 877.9 L338.9 887.4 L341.2 884.4 L343.4 900.4 L345.6 888.9 L347.8 864.0 L350.0 892.0 L352.3 890.4 L354.5 878.0 L356.7 894.1 L358.9 877.1 L361.2 887.3 L363.4 888.5 L365.6 897.2 L367.8 874.4 L370.0 898.5 L372.3 890.1 L374.5 879.2 L376.7 912.7 L378.9 880.1 L381.1 886.3 L383.4 886.6 L385.6 891.4 L387.8 888.0 L390.0 882.8 L392.2 891.7 L394.5 879.9 L396.7 884.7 L398.9 881.8 L401.1 884.3 L403.4 881.8 L405.6 883.4 L407.8 880.3 L410.0 883.7 L412.2 883.4 L414.5 891.2 L416.7 894.7 L418.9 882.9 L421.1 879.6 L423.3 892.0 L425.6 893.6 L427.8 886.8 L430.0 882.5 L432.2 880.3 L434.5 888.1 L436.7 891.9 L438.9 884.1 L441.1 881.1 L443.3 886.3 L445.6 878.6 L447.8 889.6 L450.0 878.8" stroke="#F9BA8F"/><path d="M52.4 889.5 L54.6 882.2 L56.8 889.6 L59.1 883.7 L61.3 877.6 L63.5 868.8 L65.7 883.6 L67.9 892.0 L70.2 878.2 L72.4 887.1 L74.6 883.2 L76.8 880.2 L79.1 881.9 L81.3 894.5 L83.5 890.9 L85.7 882.9 L87.9 881.8 L90.2 873.4 L92.4 884.4 L94.6 888.1 L96.8 888.1 L99.0 889.5 L101.3 892.9 L103.5 892.2 L105.7 887.7 L107.9 884.6 L110.2 890.6 L112.4 884.6 L114.6 887.6 L116.8 886.7 L119.0 888.1 L121.3 883.4 L123.5 886.0 L125.7 901.9 L127.9 880.8 L130.1 886.0 L132.4 889.4 L134.6 883.9 L136.8 890.3 L139.0 884.0 L141.2 891.4 L143.5 880.3 L145.7 884.6 L147.9 894.8 L150.1 888.1 L152.4 880.9 L154.6 884.1 L156.8 885.1 L159.0 892.8 L161.2 888.4 L163.5 884.1 L165.7 884.2 L167.9 886.1 L170.1 890.7 L172.3 886.1 L174.6 888.6 L176.8 892.2 L179.0 891.1 L181.2 889.6 L183.5 894.1 L185.7 881.1 L187.9 881.9 L190.1 881.0 L192.3 891.4 L194.6 889.2 L196.8 883.5 L199.0 889.0 L201.2 869.6 L203.4 887.4 L205.7 895.3 L207.9 876.0 L210.1 896.5 L212.3 893.2 L214.5 879.3 L216.8 893.7 L219.0 877.6 L221.2 885.3 L223.4 883.6 L225.7 888.5 L227.9 893.8 L230.1 891.4 L232.3 884.0 L234.5 886.7 L236.8 892.9 L239.0 891.3 L241.2 889.9 L243.4 885.3 L245.6 883.2 L247.9 880.7 L250.1 889.0 L252.3 876.3 L254.5 883.2 L256.8 877.2 L259.0 892.8 L261.2 880.8 L263.4 880.1 L265.6 897.7 L267.9 877.7 L270.1 884.8 L272.3 880.3 L274.5 885.8 L276.7 878.7 L279.0 889.7 L281.2 888.1 L283.4 880.9 L285.6 882.3 L287.9 894.6 L290.1 876.6 L292.3 880.4 L294.5 880.5 L296.7 903.5 L299.0 877.0 L301.2 884.3 L303.4 880.4 L305.6 887.1 L307.8 888.1 L310.1 889.6 L312.3 888.7 L314.5 879.7 L316.7 891.6 L318.9 888.3 L321.2 883.2 L323.4 887.8 L325.6 897.8 L327.8 887.3 L330.1 887.6 L332.3 875.6 L334.5 883.7 L336.7 892.2 L338.9 891.1 L341.2 887.4 L343.4 884.0 L345.6 890.8 L347.8 882.1 L350.0 895.0 L352.3 881.9 L354.5 879.3 L356.7 903.2 L358.9 882.4 L361.2 884.9 L363.4 883.2 L365.6 885.7 L367.8 886.2 L370.0 883.9 L372.3 885.4 L374.5 885.3 L376.7 876.3 L378.9 881.4 L381.1 881.0 L383.4 890.5 L385.6 887.7 L387.8 878.9 L390.0 893.5 L392.2 878.0 L394.5 895.5 L396.7 870.9 L398.9 881.2 L401.1 890.0 L403.4 906.2 L405.6 897.7 L407.8 883.7 L410.0 879.0 L412.2 883.4 L414.5 887.8 L416.7 872.9 L418.9 885.0 L421.1 883.4 L423.3 888.0 L425.6 881.8 L427.8 870.7 L430.0 886.0 L432.2 895.8 L434.5 882.4 L436.7 874.8 L438.9 880.7 L441.1 889.9 L443.3 882.8 L445.6 895.3 L447.8 880.0 L450.0 892.2" stroke="#8AB8FF"/><path d="M52.4 883.8 L54.6 883.1 L56.8 879.9 L59.1 885.5 L61.3 876.2 L63.5 878.2 L65.7 880.2 L67.9 873.9 L70.2 886.9 L72.4 886.6 L74.6 884.2 L76.8 890.4 L79.1 879.6 L81.3 876.6 L83.5 893.4 L85.7 878.4 L87.9 880.5 L90.2 879.6 L92.4 879.9 L94.6 881.1 L96.8 886.2 L99.0 877.1 L101.3 882.3 L103.5 878.5 L105.7 882.1 L107.9 884.8 L110.2 883.0 L112.4 879.4 L114.6 877.6 L116.8 895.6 L119.0 888.2 L121.3 891.8 L123.5 884.5 L125.7 886.8 L127.9 881.1 L130.1 885.3 L132.4 874.7 L134.6 888.4 L136.8 886.2 L139.0 877.7 L141.2 884.0 L143.5 881.9 L145.7 886.2 L147.9 888.0 L150.1 890.2 L152.4 880.6 L154.6 886.9 L156.8 888.2 L159.0 883.7 L161.2 881.0 L163.5 871.3 L165.7 875.8 L167.9 889.9 L170.1 884.4 L172.3 894.5 L174.6 892.5 L176.8 892.2 L179.0 875.9 L181.2 885.5 L183.5 891.4 L185.7 885.5 L187.9 885.7 L190.1 886.6 L192.3 873.7 L194.6 896.5 L196.8 883.2 L199.0 881.7 L201.2 880.6 L203.4 896.6 L205.7 879.3 L207.9 891.4 L210.1 884.9 L212.3 892.3 L214.5 876.7 L216.8 865.8 L219.0 896.4 L221.2 885.4 L223.4 893.1 L225.7 875.9 L227.9 877.4 L230.1 890.8 L232.3 893.7 L234.5 895.3 L236.8 888.3 L239.0 881.2 L241.2 891.8 L243.4 876.9 L245.6 875.8 L247.9 884.2 L250.1 879.9 L252.3 874.2 L254.5 881.8 L256.8 875.5 L259.0 876.0 L261.2 890.7 L263.4 868.4 L265.6 897.5 L267.9 882.9 L270.1 878.1 L272.3 882.1 L274.5 881.8 L276.7 889.2 L279.0 884.1 L281.2 884.7 L283.4 876.1 L285.6 881.5 L287.9 880.8 L290.1 884.0 L292.3 875.2 L294.5 899.1 L296.7 885.1 L299.0 876.8 L301.2 886.6 L303.4 878.3 L305.6 874.4 L307.8 879.8 L310.1 892.3 L312.3 882.4 L314.5 889.9 L316.7 860.2 L318.9 877.6 L321.2 885.4 L323.4 879.4 L325.6 876.7 L327.8 871.1 L330.1 884.5 L332.3 881.2 L334.5 879.9 L336.7 877.2 L338.9 893.1 L341.2 883.7 L343.4 882.4 L345.6 880.0 L347.8 880.0 L350.0 885.7 L352.3 885.8 L354.5 883.7 L356.7 880.0 L358.9 886.1 L361.2 900.9 L363.4 891.9 L365.6 885.6 L367.8 878.7 L370.0 886.8 L372.3 884.5 L374.5 871.4 L376.7 882.5 L378.9 888.5 L381.1 874.6 L383.4 886.7 L385.6 886.9 L387.8 878.2 L390.0 892.2 L392.2 881.4 L394.5 879.8 L396.7 879.0 L398.9 886.8 L401.1 885.1 L403.4 882.9 L405.6 875.6 L407.8 895.0 L410.0 875.6 L412.2 869.9 L414.5 874.8 L416.7 891.1 L418.9 874.3 L421.1 908.5 L423.3 879.7 L425.6 885.8 L427.8 896.9 L430.0 880.4 L432.2 881.0 L434.5 878.1 L436.7 887.5 L438.9 888.8 L441.1 877.4 L443.3 886.0 L445.6 876.0 L447.8 875.7 L450.0 885.6" stroke="#73D2F0"/><path d="M52.4 870.3 L54.6 887.1 L56.8 882.4 L59.1 889.6 L61.3 883.9 L63.5 887.5 L65.7 891.2 L67.9 886.3 L70.2 900.1 L72.4 880.0 L74.6 885.1 L76.8 880.2 L79.1 874.8 L81.3 878.2 L83.5 886.0 L85.7 892.9 L87.9 881.6 L90.2 882.2 L92.4 868.4 L94.6 882.9 L96.8 865.0 L99.0 888.1 L101.3 877.3 L103.5 889.3 L105.7 901.3 L107.9 883.4 L110.2 881.1 L112.4 878.5 L114.6 913.6 L116.8 883.0 L119.0 875.4 L121.3 875.5 L123.5 878.6 L125.7 884.1 L127.9 878.8 L130.1 875.2 L132.4 890.1 L134.6 876.9 L136.8 880.6 L139.0 883.9 L141.2 871.1 L143.5 889.3 L145.7 887.4 L147.9 881.9 L150.1 886.7 L152.4 873.4 L154.6 894.9 L156.8 888.4 L159.0 879.5 L161.2 878.6 L163.5 890.9 L165.7 872.8 L167.9 896.7 L170.1 873.4 L172.3 890.1 L174.6 884.2 L176.8 871.1 L179.0 885.4 L181.2 886.2 L183.5 880.5 L185.7 871.3 L187.9 884.6 L190.1 887.2 L192.3 880.5 L194.6 890.9 L196.8 885.4 L199.0 885.8 L201.2 878.1 L203.4 871.3 L205.7 878.9 L207.9 876.3 L210.1 874.2 L212.3 895.1 L214.5 880.6 L216.8 890.4 L219.0 877.2 L221.2 882.3 L223.4 882.9 L225.7 886.1 L227.9 888.2 L230.1 892.3 L232.3 874.8 L234.5 896.1 L236.8 882.0 L239.0 880.9 L241.2 878.2 L243.4 855.2 L245.6 886.1 L247.9 878.0 L250.1 894.0 L252.3 883.0 L254.5 887.2 L256.8 885.8 L259.0 874.9 L261.2 883.7 L263.4 882.2 L265.6 882.4 L267.9 884.3 L270.1 883.9 L272.3 899.1 L274.5 885.4 L276.7 885.0 L279.0 883.5 L281.2 894.4 L283.4 894.4 L285.6 883.6 L287.9 880.1 L290.1 890.3 L292.3 887.1 L294.5 877.0 L296.7 888.5 L299.0 878.7 L301.2 887.8 L303.4 889.3 L305.6 890.6 L307.8 885.1 L310.1 885.3 L312.3 890.0 L314.5 872.6 L316.7 897.8 L318.9 888.0 L321.2 872.5 L323.4 879.7 L325.6 888.1 L327.8 888.1 L330.1 882.9 L332.3 878.3 L334.5 892.4 L336.7 873.7 L338.9 887.0 L341.2 876.8 L343.4 884.9 L345.6 879.4 L347.8 879.5 L350.0 875.4 L352.3 888.7 L354.5 869.9 L356.7 893.3 L358.9 878.7 L361.2 879.4 L363.4 883.3 L365.6 877.2 L367.8 912.7 L370.0 880.8 L372.3 877.0 L374.5 883.8 L376.7 889.4 L378.9 880.4 L381.1 882.0 L383.4 889.0 L385.6 873.3 L387.8 888.0 L390.0 888.1 L392.2 881.0 L394.5 887.1 L396.7 883.1 L398.9 881.2 L401.1 885.6 L403.4 878.5 L405.6 881.8 L407.8 875.4 L410.0 890.4 L412.2 880.8 L414.5 881.5 L416.7 881.2 L418.9 896.0 L421.1 886.7 L423.3 879.9 L425.6 879.7 L427.8 883.1 L430.0 881.5 L432.2 875.4 L434.5 886.4 L436.7 886.7 L438.9 872.7 L441.1 897.9 L443.3 884.1 L445.6 886.9 L447.8 872.0 L450.0 886.6" stroke="#E0B400"/><path d="M52.4 885.0 L54.6 885.5 L56.8 888.8 L59.1 873.0 L61.3 910.8 L63.5 878.2 L65.7 888.7 L67.9 875.1 L70.2 891.1 L72.4 884.1 L74.6 893.1 L76.8 877.3 L79.1 879.3 L81.3 880.8 L83.5 886.4 L85.7 879.6 L87.9 889.6 L90.2 881.3 L92.4 882.2 L94.6 885.7 L96.8 889.7 L99.0 884.2 L101.3 889.3 L103.5 890.3 L105.7 876.2 L107.9 886.5 L110.2 886.7 L112.4 886.6 L114.6 880.8 L116.8 886.6 L119.0 887.8 L121.3 881.5 L123.5 883.6 L125.7 889.6 L127.9 889.5 L130.1 859.8 L132.4 887.5 L134.6 875.9 L136.8 881.9 L139.0 884.8 L141.2 873.6 L143.5 873.7 L145.7 890.0 L147.9 885.2 L150.1 888.9 L152.4 884.0 L154.6 889.8 L156.8 882.1 L159.0 892.1 L161.2 879.2 L163.5 882.9 L165.7 882.9 L167.9 887.9 L170.1 875.3 L172.3 873.4 L174.6 887.0 L176.8 888.2 L179.0 879.2 L181.2 886.3 L183.5 882.7 L185.7 880.3 L187.9 893.2 L190.1 877.7 L192.3 891.7 L194.6 890.2 L196.8 885.2 L199.0 874.8 L201.2 897.5 L203.4 880.0 L205.7 890.6 L207.9 878.9 L210.1 883.1 L212.3 877.1 L214.5 884.3 L216.8 883.9 L219.0 895.6 L221.2 895.9 L223.4 880.0 L225.7 883.6 L227.9 883.0 L230.1 880.8 L232.3 879.3 L234.5 890.5 L236.8 883.2 L239.0 881.6 L241.2 883.0 L243.4 890.2 L245.6 904.0 L247.9 879.9 L250.1 880.4 L252.3 874.4 L254.5 868.3 L256.8 870.8 L259.0 880.2 L261.2 885.5 L263.4 888.0 L265.6 883.0 L267.9 877.8 L270.1 886.5 L272.3 886.2 L274.5 883.3 L276.7 884.1 L279.0 882.6 L281.2 872.5 L283.4 886.8 L285.6 875.1 L287.9 890.7 L290.1 887.2 L292.3 886.7 L294.5 894.7 L296.7 871.7 L299.0 885.0 L301.2 879.4 L303.4 874.3 L305.6 883.2 L307.8 874.2 L310.1 918.9 L312.3 872.9 L314.5 884.5 L316.7 887.4 L318.9 876.7 L321.2 885.4 L323.4 888.2 L325.6 895.3 L327.8 870.8 L330.1 902.9 L332.3 879.9 L334.5 875.0 L336.7 881.8 L338.9 888.4 L341.2 884.9 L343.4 887.7 L345.6 881.8 L347.8 885.0 L350.0 891.9 L352.3 891.7 L354.5 875.5 L356.7 893.8 L358.9 889.2 L361.2 868.6 L363.4 892.4 L365.6 890.7 L367.8 888.9 L370.0 878.4 L372.3 890.0 L374.5 883.9 L376.7 898.6 L378.9 885.1 L381.1 865.0 L383.4 884.0 L385.6 875.1 L387.8 882.9 L390.0 902.5 L392.2 890.7 L394.5 888.5 L396.7 885.2 L398.9 883.7 L401.1 880.4 L403.4 895.6 L405.6 895.9 L407.8 877.0 L410.0 892.0 L412.2 897.5 L414.5 887.6 L416.7 886.4 L418.9 891.5 L421.1 903.5 L423.3 876.8 L425.6 892.7 L427.8 880.7 L430.0 883.7 L432.2 886.7 L434.5 869.1 L436.7 895.8 L438.9 865.9 L441.1 894.0 L443.3 884.1 L445.6 882.5 L447.8 877.8 L450.0 881.3" stroke="#FFB357"/><path d="M52.4 888.5 L54.6 885.6 L56.8 892.5 L59.1 879.3 L61.3 892.0 L63.5 894.8 L65.7 880.5 L67.9 889.0 L70.2 885.6 L72.4 896.8 L74.6 893.2 L76.8 891.7 L79.1 886.9 L81.3 871.2 L83.5 878.5 L85.7 879.4 L87.9 887.6 L90.2 887.3 L92.4 875.5 L94.6 888.8 L96.8 880.5 L99.0 891.1 L101.3 886.7 L103.5 888.6 L105.7 890.7 L107.9 883.9 L110.2 892.4 L112.4 886.4 L114.6 884.5 L116.8 874.8 L119.0 900.7 L121.3 883.7 L123.5 883.6 L125.7 889.6 L127.9 881.1 L130.1 884.9 L132.4 884.4 L134.6 889.9 L136.8 887.6 L139.0 888.1 L141.2 892.6 L143.5 884.7 L145.7 893.7 L147.9 891.1 L150.1 894.4 L152.4 878.8 L154.6 903.4 L156.8 891.2 L159.0 881.3 L161.2 890.5 L163.5 884.2 L165.7 888.5 L167.9 884.4 L170.1 886.3 L172.3 900.0 L174.6 875.5 L176.8 883.2 L179.0 896.4 L181.2 879.7 L183.5 889.7 L185.7 885.7 L187.9 879.5 L190.1 882.4 L192.3 882.0 L194.6 875.9 L196.8 882.6 L199.0 891.4 L201.2 893.7 L203.4 880.6 L205.7 898.4 L207.9 899.5 L210.1 889.1 L212.3 890.7 L214.5 878.1 L216.8 886.8 L219.0 888.3 L221.2 881.3 L223.4 890.5 L225.7 879.0 L227.9 876.3 L230.1 889.8 L232.3 887.3 L234.5 879.9 L236.8 900.0 L239.0 891.8 L241.2 892.1 L243.4 876.9 L245.6 885.2 L247.9 885.5 L250.1 887.4 L252.3 887.0 L254.5 881.4 L256.8 881.6 L259.0 880.6 L261.2 902.6 L263.4 886.4 L265.6 878.2 L267.9 886.2 L270.1 879.2 L272.3 891.3 L274.5 886.3 L276.7 890.9 L279.0 886.2 L281.2 884.5 L283.4 890.1 L285.6 874.6 L287.9 898.2 L290.1 879.5 L292.3 894.9 L294.5 883.5 L296.7 892.2 L299.0 885.4 L301.2 886.8 L303.4 891.7 L305.6 893.2 L307.8 889.9 L310.1 886.2 L312.3 882.2 L314.5 878.3 L316.7 898.9 L318.9 881.8 L321.2 890.7 L323.4 886.1 L325.6 896.9 L327.8 882.5 L330.1 885.4 L332.3 887.4 L334.5 877.5 L336.7 887.1 L338.9 886.9 L341.2 880.1 L343.4 895.1 L345.6 890.9 L347.8 877.5 L350.0 890.0 L352.3 896.9 L354.5 880.2 L356.7 881.1 L358.9 892.7 L361.2 912.2 L363.4 885.9 L365.6 885.0 L367.8 890.9 L370.0 891.6 L372.3 882.9 L374.5 884.6 L376.7 896.9 L378.9 891.6 L381.1 888.0 L383.4 890.5 L385.6 885.0 L387.8 895.1 L390.0 876.5 L392.2 886.9 L394.5 881.5 L396.7 897.3 L398.9 889.0 L401.1 880.3 L403.4 897.0 L405.6 877.0 L407.8 885.7 L410.0 870.6 L412.2 887.8 L414.5 893.7 L416.7 892.1 L418.9 889.1 L421.1 889.1 L423.3 879.3 L425.6 894.6 L427.8 889.2 L430.0 896.9 L432.2 884.1 L434.5 887.6 L436.7 880.4 L438.9 876.9 L441.1 885.8 L443.3 892.3 L445.6 884.6 L447.8 885.8 L450.0 887.6" stroke="#6ED0E0"/><line x1="52.4" y1="874.60" x2="450" y2="874.60" stroke="#FDB600" stroke-width="1" stroke-dasharray="10 10" stroke-dashoffset="1"/></g><rect x="524.3" y="936.80" width="385.00" height="1" fill="#e5e6e7"/><rect x="524.3" y="904.80" width="385.00" height="1" fill="#e5e6e7"/><rect x="524.3" y="872.80" width="385.00" height="1" fill="#e5e6e7"/><rect x="524.3" y="840.80" width="385.00" height="1" fill="#e5e6e7"/><rect x="542.20" y="832" width="1" height="109.30" fill="#e5e6e7"/><rect x="606.36" y="832" width="1" height="109.30" fill="#e5e6e7"/><rect x="670.53" y="832" width="1" height="109.30" fill="#e5e6e7"/><rect x="734.70" y="832" width="1" height="109.30" fill="#e5e6e7"/><rect x="798.86" y="832" width="1" height="109.30" fill="#e5e6e7"/><rect x="863.03" y="832" width="1" height="109.30" fill="#e5e6e7"/><clipPath id="c524_937"><rect x="524.3" y="812" width="385.00" height="145.29999999999995"/></clipPath><g clip-path="url(#c524_937)" fill="none" stroke-width="1" stroke-linejoin="round"><path d="M524.3 925.4 L526.5 924.5 L528.6 925.9 L530.8 925.7 L532.9 926.4 L535.1 921.9 L537.2 925.6 L539.4 925.3 L541.5 924.4 L543.7 923.6 L545.8 923.8 L548.0 923.7 L550.1 925.2 L552.3 926.0 L554.4 924.0 L556.6 922.6 L558.7 925.6 L560.9 924.3 L563.0 924.9 L565.2 925.8 L567.3 923.9 L569.5 924.9 L571.6 925.5 L573.8 924.3 L575.9 924.9 L578.1 922.6 L580.2 927.5 L582.4 922.1 L584.5 920.4 L586.7 918.7 L588.8 924.9 L591.0 923.0 L593.1 922.9 L595.3 925.5 L597.4 924.8 L599.6 924.9 L601.7 923.5 L603.9 921.6 L606.0 923.4 L608.2 920.3 L610.3 925.1 L612.5 911.5 L614.6 898.9 L616.8 912.4 L618.9 924.8 L621.1 925.0 L623.2 924.3 L625.4 924.5 L627.5 920.3 L629.7 925.5 L631.8 923.4 L634.0 925.3 L636.1 921.9 L638.3 925.6 L640.4 925.6 L642.6 922.1 L644.7 925.8 L646.9 921.7 L649.0 925.1 L651.2 922.8 L653.4 923.2 L655.5 925.5 L657.7 925.1 L659.8 924.9 L662.0 923.6 L664.1 923.3 L666.3 925.2 L668.4 920.6 L670.6 920.1 L672.7 925.6 L674.9 925.2 L677.0 922.9 L679.2 924.0 L681.3 925.2 L683.5 921.9 L685.6 926.6 L687.8 924.4 L689.9 924.6 L692.1 926.0 L694.2 916.4 L696.4 926.2 L698.5 923.8 L700.7 923.6 L702.8 924.7 L705.0 924.1 L707.1 924.2 L709.3 922.2 L711.4 924.7 L713.6 924.8 L715.7 924.0 L717.9 924.7 L720.0 923.6 L722.2 925.2 L724.3 920.6 L726.5 917.6 L728.6 923.1 L730.8 924.4 L732.9 922.6 L735.1 924.3 L737.2 924.5 L739.4 923.5 L741.5 925.7 L743.7 924.5 L745.8 921.3 L748.0 924.0 L750.1 918.5 L752.3 919.4 L754.4 926.1 L756.6 925.9 L758.7 919.4 L760.9 924.5 L763.0 923.6 L765.2 921.0 L767.3 924.1 L769.5 923.2 L771.6 923.2 L773.8 919.2 L775.9 925.5 L778.1 924.1 L780.2 923.2 L782.4 921.9 L784.6 924.4 L786.7 924.6 L788.9 923.5 L791.0 925.9 L793.2 924.3 L795.3 924.3 L797.5 924.7 L799.6 925.2 L801.8 925.7 L803.9 923.5 L806.1 924.5 L808.2 924.3 L810.4 924.9 L812.5 924.2 L814.7 913.7 L816.8 923.9 L819.0 924.3 L821.1 924.6 L823.3 919.5 L825.4 924.6 L827.6 924.4 L829.7 923.9 L831.9 923.3 L834.0 925.7 L836.2 923.6 L838.3 923.4 L840.5 925.0 L842.6 924.9 L844.8 925.9 L846.9 925.7 L849.1 923.2 L851.2 925.5 L853.4 924.5 L855.5 924.9 L857.7 923.7 L859.8 924.2 L862.0 925.0 L864.1 921.7 L866.3 924.1 L868.4 924.3 L870.6 925.2 L872.7 924.2 L874.9 923.0 L877.0 923.3 L879.2 925.7 L881.3 917.0 L883.5 923.0 L885.6 925.2 L887.8 924.6 L889.9 925.1 L892.1 925.2 L894.2 924.8 L896.4 922.2 L898.5 924.4 L900.7 924.9 L902.8 924.1 L905.0 922.5 L907.1 925.4 L909.3 926.2" stroke="#56A64B"/><path d="M524.3 923.2 L526.5 922.3 L528.6 925.1 L530.8 921.3 L532.9 925.2 L535.1 925.4 L537.2 924.8 L539.4 926.4 L541.5 925.0 L543.7 925.7 L545.8 924.2 L548.0 925.2 L550.1 923.6 L552.3 924.5 L554.4 922.3 L556.6 925.7 L558.7 925.5 L560.9 925.8 L563.0 925.0 L565.2 923.9 L567.3 920.7 L569.5 925.5 L571.6 924.2 L573.8 924.4 L575.9 918.8 L578.1 923.7 L580.2 925.4 L582.4 916.4 L584.5 923.7 L586.7 925.4 L588.8 923.2 L591.0 923.8 L593.1 924.5 L595.3 923.0 L597.4 923.7 L599.6 924.2 L601.7 923.7 L603.9 923.6 L606.0 925.9 L608.2 917.4 L610.3 925.4 L612.5 925.1 L614.6 926.8 L616.8 922.1 L618.9 924.1 L621.1 925.7 L623.2 923.7 L625.4 921.2 L627.5 925.7 L629.7 922.9 L631.8 925.6 L634.0 922.4 L636.1 917.0 L638.3 925.8 L640.4 921.4 L642.6 925.1 L644.7 925.1 L646.9 926.2 L649.0 918.4 L651.2 924.7 L653.4 924.0 L655.5 924.4 L657.7 925.4 L659.8 926.0 L662.0 924.5 L664.1 924.6 L666.3 925.6 L668.4 923.2 L670.6 925.2 L672.7 923.6 L674.9 922.5 L677.0 925.1 L679.2 922.9 L681.3 923.6 L683.5 925.3 L685.6 923.7 L687.8 925.4 L689.9 925.9 L692.1 923.6 L694.2 923.5 L696.4 920.6 L698.5 925.6 L700.7 925.4 L702.8 922.9 L705.0 923.9 L707.1 924.4 L709.3 920.8 L711.4 923.0 L713.6 924.8 L715.7 920.8 L717.9 924.4 L720.0 924.7 L722.2 922.9 L724.3 923.5 L726.5 922.9 L728.6 924.7 L730.8 923.6 L732.9 925.4 L735.1 924.0 L737.2 924.6 L739.4 926.0 L741.5 924.3 L743.7 923.6 L745.8 920.1 L748.0 919.0 L750.1 924.6 L752.3 924.1 L754.4 924.0 L756.6 926.5 L758.7 923.8 L760.9 917.4 L763.0 923.4 L765.2 923.5 L767.3 924.5 L769.5 923.8 L771.6 919.7 L773.8 924.9 L775.9 924.2 L778.1 926.4 L780.2 923.9 L782.4 919.3 L784.6 923.3 L786.7 922.3 L788.9 924.3 L791.0 925.3 L793.2 923.6 L795.3 925.6 L797.5 919.2 L799.6 923.8 L801.8 925.9 L803.9 924.2 L806.1 924.8 L808.2 923.4 L810.4 923.1 L812.5 924.8 L814.7 923.8 L816.8 916.9 L819.0 925.8 L821.1 924.4 L823.3 912.9 L825.4 924.5 L827.6 922.5 L829.7 917.9 L831.9 924.0 L834.0 919.3 L836.2 925.1 L838.3 924.9 L840.5 923.1 L842.6 924.2 L844.8 921.7 L846.9 926.1 L849.1 925.4 L851.2 923.5 L853.4 921.6 L855.5 925.1 L857.7 921.2 L859.8 924.3 L862.0 924.1 L864.1 924.5 L866.3 924.4 L868.4 925.4 L870.6 924.1 L872.7 925.4 L874.9 924.2 L877.0 925.0 L879.2 925.3 L881.3 923.6 L883.5 924.0 L885.6 924.0 L887.8 924.8 L889.9 925.6 L892.1 918.3 L894.2 923.3 L896.4 925.7 L898.5 924.3 L900.7 922.5 L902.8 925.1 L905.0 923.3 L907.1 924.3 L909.3 925.5" stroke="#E0B400"/><path d="M722.4 937.3 L724.5 926.1 L726.7 922.6 L728.9 922.9 L731.1 923.5 L733.2 923.7 L735.4 923.1 L737.6 922.3 L739.8 923.5 L741.9 924.8 L744.1 922.3 L746.3 923.1 L748.4 922.2 L750.6 922.7 L752.8 923.9 L755.0 923.9 L757.1 923.4 L759.3 925.0 L761.5 921.0 L763.7 923.4 L765.8 923.3 L768.0 924.2 L770.2 922.8 L772.4 922.2 L774.5 921.4 L776.7 923.4 L778.9 921.4 L781.1 918.9 L783.2 924.2 L785.4 921.7 L787.6 923.4 L789.7 922.3 L791.9 922.4 L794.1 923.1 L796.3 923.2 L798.4 922.2 L800.6 923.5 L802.8 923.8 L805.0 921.7 L807.1 923.0 L809.3 921.3 L811.5 924.2 L813.7 922.9 L815.8 922.8 L818.0 923.8 L820.2 921.6 L822.4 922.9 L824.5 924.6 L826.7 922.3 L828.9 924.3 L831.0 922.8 L833.2 922.4 L835.4 920.6 L837.6 923.3 L839.7 922.8 L841.9 923.4 L844.1 923.5 L846.3 918.6 L848.4 921.8 L850.6 922.1 L852.8 925.3 L855.0 922.1 L857.1 923.0 L859.3 924.0 L861.5 923.7 L863.7 925.0 L865.8 916.6 L868.0 923.0 L870.2 922.8 L872.3 923.7 L874.5 923.8 L876.7 922.3 L878.9 922.1 L881.0 923.0 L883.2 923.0 L885.4 922.3 L887.6 921.1 L889.7 922.6 L891.9 922.9 L894.1 923.2 L896.3 922.4 L898.4 923.1 L900.6 922.6 L902.8 917.4 L905.0 923.5 L907.1 921.7 L909.3 920.8" stroke="#5794F2"/><path d="M524.3 923.3 L526.5 924.9 L528.6 924.7 L530.8 923.3 L532.9 919.6 L535.1 925.8 L537.2 922.9 L539.4 924.6 L541.5 923.9 L543.7 915.7 L545.8 925.2 L548.0 923.3 L550.1 925.0 L552.3 921.8 L554.4 924.2 L556.6 924.5 L558.7 925.4 L560.9 924.9 L563.0 924.4 L565.2 922.4 L567.3 924.2 L569.5 924.0 L571.6 921.9 L573.8 925.9 L575.9 924.7 L578.1 924.0 L580.2 923.9 L582.4 921.3 L584.5 924.5 L586.7 918.2 L588.8 923.3 L591.0 924.1 L593.1 924.0 L595.3 923.9 L597.4 924.7 L599.6 918.6 L601.7 923.0 L603.9 924.1 L606.0 919.0 L608.2 922.2 L610.3 924.7 L612.5 923.0 L614.6 924.3 L616.8 924.0 L618.9 920.8 L621.1 924.2 L623.2 921.2 L625.4 923.3 L627.5 924.6 L629.7 925.3 L631.8 922.6 L634.0 919.9 L636.1 922.7 L638.3 920.4 L640.4 921.0 L642.6 923.8 L644.7 923.5 L646.9 923.7 L649.0 923.4 L651.2 919.3 L653.4 923.3 L655.5 922.3 L657.7 924.8 L659.8 923.2 L662.0 919.2 L664.1 921.8 L666.3 922.9 L668.4 925.0 L670.6 924.4 L672.7 923.0 L674.9 922.7 L677.0 923.8 L679.2 917.2 L681.3 924.2 L683.5 924.6 L685.6 925.1 L687.8 916.8 L689.9 923.7 L692.1 921.0 L694.2 921.3 L696.4 920.9 L698.5 920.7 L700.7 918.4 L702.8 921.6 L705.0 924.8 L707.1 924.9 L709.3 923.9 L711.4 922.1 L713.6 925.3 L715.7 923.6 L717.9 924.4 L720.0 921.6 L722.2 922.9 L724.3 923.8 L726.5 924.0 L728.6 923.8 L730.8 924.1 L732.9 923.6 L735.1 920.7 L737.2 924.6 L739.4 924.5 L741.5 925.0 L743.7 922.4 L745.8 922.0 L748.0 924.6 L750.1 922.9 L752.3 924.1 L754.4 924.5 L756.6 925.0 L758.7 922.5 L760.9 922.4 L763.0 923.1 L765.2 922.1 L767.3 923.0 L769.5 923.3 L771.6 918.2 L773.8 924.0 L775.9 907.7 L778.1 924.8 L780.2 924.6 L782.4 923.8 L784.6 920.2 L786.7 923.6 L788.9 924.4 L791.0 920.7 L793.2 925.6 L795.3 924.5 L797.5 923.9 L799.6 922.6 L801.8 924.1 L803.9 924.6 L806.1 921.4 L808.2 924.7 L810.4 921.9 L812.5 917.9 L814.7 922.3 L816.8 922.6 L819.0 923.7 L821.1 918.3 L823.3 925.3 L825.4 923.9 L827.6 924.7 L829.7 920.6 L831.9 924.1 L834.0 924.3 L836.2 922.3 L838.3 924.2 L840.5 923.5 L842.6 924.3 L844.8 923.5 L846.9 921.7 L849.1 923.7 L851.2 924.3 L853.4 921.3 L855.5 923.2 L857.7 924.0 L859.8 923.3 L862.0 923.0 L864.1 923.6 L866.3 922.2 L868.4 923.7 L870.6 924.0 L872.7 924.8 L874.9 923.1 L877.0 924.2 L879.2 924.6 L881.3 924.8 L883.5 924.3 L885.6 924.0 L887.8 923.5 L889.9 921.4 L892.1 924.2 L894.2 924.1 L896.4 919.0 L898.5 923.7 L900.7 917.9 L902.8 924.6 L905.0 925.3 L907.1 926.2 L909.3 924.2" stroke="#0A437C"/><path d="M524.3 922.5 L526.5 919.0 L528.6 924.9 L530.8 923.7 L532.9 923.4 L535.1 924.2 L537.2 923.6 L539.4 922.9 L541.5 924.0 L543.7 924.0 L545.8 923.5 L548.0 922.9 L550.1 923.3 L552.3 922.8 L554.4 918.6 L556.6 925.1 L558.7 924.7 L560.9 924.1 L563.0 923.6 L565.2 918.4 L567.3 924.0 L569.5 917.9 L571.6 924.2 L573.8 923.0 L575.9 924.1 L578.1 916.6 L580.2 925.1 L582.4 919.1 L584.5 922.6 L586.7 925.4 L588.8 923.6 L591.0 917.7 L593.1 923.4 L595.3 924.0 L597.4 921.5 L599.6 923.9 L601.7 924.4 L603.9 923.8 L606.0 924.6 L608.2 923.7 L610.3 923.9 L612.5 923.1 L614.6 924.2 L616.8 921.4 L618.9 914.7 L621.1 925.4 L623.2 921.9 L625.4 924.2 L627.5 923.4 L629.7 920.3 L631.8 923.0 L634.0 918.7 L636.1 916.8 L638.3 923.6 L640.4 922.4 L642.6 924.7 L644.7 924.5 L646.9 921.8 L649.0 923.4 L651.2 924.4 L653.4 922.3 L655.5 922.8 L657.7 924.8 L659.8 923.8 L662.0 916.2 L664.1 924.2 L666.3 923.4 L668.4 923.8 L670.6 924.2 L672.7 923.3 L674.9 923.3 L677.0 925.3 L679.2 924.3 L681.3 922.9 L683.5 922.6 L685.6 915.6 L687.8 921.4 L689.9 923.6 L692.1 922.0 L694.2 918.0 L696.4 916.1 L698.5 922.9 L700.7 924.6 L702.8 923.1 L705.0 922.8 L707.1 920.0 L709.3 917.3 L711.4 925.2 L713.6 923.4 L715.7 922.4 L717.9 917.4 L720.0 924.7 L722.2 923.8 L724.3 924.4 L726.5 921.1 L728.6 923.3 L730.8 921.7 L732.9 924.7 L735.1 921.3 L737.2 920.7 L739.4 923.9 L741.5 923.0 L743.7 920.0 L745.8 924.5 L748.0 923.1 L750.1 918.6 L752.3 921.8 L754.4 924.2 L756.6 923.3 L758.7 921.7 L760.9 917.3 L763.0 923.0 L765.2 925.1 L767.3 924.4 L769.5 923.7 L771.6 925.5 L773.8 923.7 L775.9 924.2 L778.1 922.8 L780.2 925.0 L782.4 924.7 L784.6 924.3 L786.7 923.6 L788.9 924.1 L791.0 924.7 L793.2 914.4 L795.3 924.0 L797.5 923.6 L799.6 923.7 L801.8 923.7 L803.9 923.9 L806.1 923.6 L808.2 924.1 L810.4 922.9 L812.5 922.4 L814.7 920.6 L816.8 917.8 L819.0 923.6 L821.1 915.1 L823.3 924.1 L825.4 922.7 L827.6 922.3 L829.7 921.4 L831.9 925.0 L834.0 919.9 L836.2 924.3 L838.3 924.4 L840.5 922.4 L842.6 923.1 L844.8 916.5 L846.9 915.2 L849.1 923.9 L851.2 924.4 L853.4 922.4 L855.5 922.7 L857.7 921.5 L859.8 924.6 L862.0 924.5 L864.1 924.8 L866.3 922.0 L868.4 922.6 L870.6 923.3 L872.7 923.4 L874.9 921.6 L877.0 919.0 L879.2 924.3 L881.3 924.3 L883.5 923.1 L885.6 924.7 L887.8 922.9 L889.9 924.3 L892.1 922.9 L894.2 922.7 L896.4 923.1 L898.5 924.2 L900.7 923.9 L902.8 922.8 L905.0 925.0 L907.1 923.4 L909.3 923.8" stroke="#FA6400"/><path d="M524.3 922.1 L526.5 923.2 L528.6 923.4 L530.8 921.8 L532.9 922.7 L535.1 924.2 L537.2 923.5 L539.4 923.1 L541.5 923.1 L543.7 923.9 L545.8 923.4 L548.0 924.7 L550.1 923.2 L552.3 924.5 L554.4 922.8 L556.6 923.2 L558.7 922.9 L560.9 923.8 L563.0 923.1 L565.2 922.9 L567.3 922.9 L569.5 924.3 L571.6 923.6 L573.8 925.3 L575.9 925.1 L578.1 922.9 L580.2 923.9 L582.4 922.6 L584.5 924.0 L586.7 924.0 L588.8 924.6 L591.0 918.6 L593.1 924.3 L595.3 923.0 L597.4 922.8 L599.6 923.3 L601.7 924.9 L603.9 923.3 L606.0 919.3 L608.2 923.0 L610.3 922.4 L612.5 924.9 L614.6 923.0 L616.8 924.0 L618.9 921.5 L621.1 924.5 L623.2 924.3 L625.4 924.0 L627.5 922.6 L629.7 921.5 L631.8 924.2 L634.0 923.4 L636.1 922.9 L638.3 924.3 L640.4 924.4 L642.6 921.0 L644.7 923.0 L646.9 923.9 L649.0 924.4 L651.2 923.2 L653.4 923.2 L655.5 923.9 L657.7 922.3 L659.8 923.1 L662.0 922.4 L664.1 922.8 L666.3 925.0 L668.4 922.1 L670.6 924.5 L672.7 922.3 L674.9 924.3 L677.0 921.9 L679.2 925.5 L681.3 923.7 L683.5 924.6 L685.6 923.7 L687.8 924.5 L689.9 918.2 L692.1 920.9 L694.2 922.9 L696.4 925.2 L698.5 921.6 L700.7 922.2 L702.8 924.1 L705.0 923.3 L707.1 923.8 L709.3 920.7 L711.4 924.9 L713.6 923.5 L715.7 924.4 L717.9 920.8 L720.0 923.1 L722.2 914.0 L724.3 924.3 L726.5 923.4 L728.6 924.1 L730.8 924.5 L732.9 924.0 L735.1 924.0 L737.2 924.9 L739.4 924.0 L741.5 922.4 L743.7 923.7 L745.8 921.8 L748.0 922.0 L750.1 918.1 L752.3 922.8 L754.4 924.6 L756.6 923.0 L758.7 921.9 L760.9 923.5 L763.0 922.7 L765.2 924.2 L767.3 923.2 L769.5 922.9 L771.6 920.1 L773.8 923.6 L775.9 921.9 L778.1 924.2 L780.2 923.6 L782.4 921.0 L784.6 924.1 L786.7 923.5 L788.9 923.7 L791.0 921.7 L793.2 923.6 L795.3 918.4 L797.5 918.4 L799.6 925.2 L801.8 921.9 L803.9 924.3 L806.1 923.0 L808.2 923.4 L810.4 924.3 L812.5 924.6 L814.7 922.3 L816.8 924.4 L819.0 925.5 L821.1 924.4 L823.3 923.3 L825.4 923.4 L827.6 924.8 L829.7 922.8 L831.9 922.6 L834.0 923.2 L836.2 922.6 L838.3 923.5 L840.5 921.9 L842.6 917.9 L844.8 920.0 L846.9 921.3 L849.1 923.2 L851.2 922.7 L853.4 922.7 L855.5 922.4 L857.7 924.3 L859.8 920.8 L862.0 923.6 L864.1 924.4 L866.3 923.3 L868.4 923.3 L870.6 918.7 L872.7 923.5 L874.9 924.5 L877.0 920.6 L879.2 925.4 L881.3 921.6 L883.5 923.4 L885.6 923.0 L887.8 921.6 L889.9 924.6 L892.1 923.3 L894.2 920.8 L896.4 924.2 L898.5 924.4 L900.7 918.6 L902.8 924.1 L905.0 923.3 L907.1 923.1 L909.3 924.2" stroke="#E02F44"/><path d="M524.3 923.7 L526.5 923.3 L528.6 922.6 L530.8 925.0 L532.9 923.8 L535.1 923.5 L537.2 923.0 L539.4 922.9 L541.5 923.1 L543.7 923.4 L545.8 924.2 L548.0 923.7 L550.1 924.8 L552.3 922.5 L554.4 923.6 L556.6 923.2 L558.7 924.6 L560.9 923.8 L563.0 925.1 L565.2 924.9 L567.3 922.1 L569.5 921.7 L571.6 922.4 L573.8 922.0 L575.9 920.2 L578.1 923.1 L580.2 923.6 L582.4 924.3 L584.5 924.8 L586.7 919.5 L588.8 924.2 L591.0 922.9 L593.1 924.6 L595.3 923.1 L597.4 925.5 L599.6 925.1 L601.7 923.1 L603.9 922.2 L606.0 925.0 L608.2 924.1 L610.3 924.6 L612.5 916.0 L614.6 924.3 L616.8 925.2 L618.9 922.4 L621.1 922.9 L623.2 923.0 L625.4 922.4 L627.5 924.2 L629.7 925.4 L631.8 924.4 L634.0 923.8 L636.1 924.6 L638.3 923.9 L640.4 919.4 L642.6 923.2 L644.7 923.9 L646.9 920.6 L649.0 922.8 L651.2 923.8 L653.4 925.0 L655.5 923.0 L657.7 924.7 L659.8 922.2 L662.0 924.1 L664.1 924.8 L666.3 921.6 L668.4 922.7 L670.6 921.1 L672.7 923.5 L674.9 923.2 L677.0 923.8 L679.2 922.3 L681.3 923.7 L683.5 924.6 L685.6 917.8 L687.8 923.9 L689.9 916.8 L692.1 922.3 L694.2 925.2 L696.4 924.2 L698.5 924.6 L700.7 924.4 L702.8 924.0 L705.0 924.3 L707.1 923.5 L709.3 922.9 L711.4 913.8 L713.6 925.2 L715.7 924.3 L717.9 923.1 L720.0 921.4 L722.2 923.5 L724.3 924.0 L726.5 924.5 L728.6 923.3 L730.8 925.6 L732.9 924.4 L735.1 923.7 L737.2 925.7 L739.4 924.8 L741.5 924.4 L743.7 924.2 L745.8 924.6 L748.0 923.6 L750.1 922.7 L752.3 925.0 L754.4 924.1 L756.6 924.0 L758.7 919.6 L760.9 923.8 L763.0 920.0 L765.2 920.7 L767.3 923.4 L769.5 923.4 L771.6 924.1 L773.8 925.3 L775.9 923.7 L778.1 925.3 L780.2 917.9 L782.4 924.4 L784.6 924.8 L786.7 923.9 L788.9 925.3 L791.0 923.8 L793.2 923.5 L795.3 923.7 L797.5 922.1 L799.6 924.4 L801.8 922.6 L803.9 924.2 L806.1 924.5 L808.2 924.5 L810.4 917.6 L812.5 921.5 L814.7 917.2 L816.8 925.8 L819.0 920.7 L821.1 922.9 L823.3 919.8 L825.4 920.7 L827.6 923.0 L829.7 921.8 L831.9 922.5 L834.0 924.9 L836.2 918.6 L838.3 923.7 L840.5 924.9 L842.6 921.9 L844.8 924.0 L846.9 924.3 L849.1 923.6 L851.2 923.9 L853.4 916.6 L855.5 924.8 L857.7 922.3 L859.8 921.0 L862.0 924.8 L864.1 925.1 L866.3 925.1 L868.4 924.0 L870.6 925.9 L872.7 925.1 L874.9 924.0 L877.0 922.5 L879.2 922.4 L881.3 925.6 L883.5 923.2 L885.6 924.6 L887.8 918.6 L889.9 922.9 L892.1 923.9 L894.2 925.6 L896.4 926.3 L898.5 921.9 L900.7 924.8 L902.8 924.1 L905.0 924.5 L907.1 925.2 L909.3 924.3" stroke="#C4162A"/><path d="M760.9 937.3 L763.0 927.7 L765.2 924.4 L767.4 924.0 L769.6 923.3 L771.8 923.4 L774.0 923.1 L776.1 925.6 L778.3 923.6 L780.5 922.7 L782.7 923.2 L784.9 923.7 L787.1 924.0 L789.2 924.0 L791.4 924.7 L793.6 923.8 L795.8 922.5 L798.0 923.7 L800.2 922.3 L802.3 924.0 L804.5 924.2 L806.7 922.6 L808.9 924.8 L811.1 924.1 L813.3 925.0 L815.4 923.7 L817.6 920.5 L819.8 924.4 L822.0 924.4 L824.2 924.3 L826.4 923.0 L828.5 922.5 L830.7 920.3 L832.9 923.4 L835.1 922.6 L837.3 924.5 L839.4 923.5 L841.6 923.9 L843.8 923.5 L846.0 923.3 L848.2 924.0 L850.4 924.1 L852.5 924.4 L854.7 924.2 L856.9 923.3 L859.1 925.2 L861.3 922.1 L863.5 922.7 L865.6 924.5 L867.8 922.7 L870.0 923.2 L872.2 924.7 L874.4 924.5 L876.6 923.3 L878.7 924.4 L880.9 923.5 L883.1 924.1 L885.3 922.3 L887.5 924.9 L889.7 922.3 L891.8 924.3 L894.0 923.5 L896.2 921.7 L898.4 924.7 L900.6 924.9 L902.8 924.8 L904.9 925.8 L907.1 924.3 L909.3 921.3" stroke="#890F02"/><path d="M524.3 918.7 L526.5 917.1 L528.6 920.4 L530.8 923.6 L532.9 919.4 L535.1 924.1 L537.2 923.0 L539.4 922.3 L541.5 923.0 L543.7 923.6 L545.8 923.4 L548.0 922.2 L550.1 924.3 L552.3 920.0 L554.4 923.1 L556.6 921.9 L558.7 921.2 L560.9 922.2 L563.0 920.8 L565.2 924.0 L567.3 924.5 L569.5 923.5 L571.6 923.1 L573.8 918.9 L575.9 924.0 L578.1 923.0 L580.2 918.7 L582.4 921.2 L584.5 922.5 L586.7 923.9 L588.8 923.7 L591.0 921.9 L593.1 920.7 L595.3 923.7 L597.4 923.0 L599.6 921.5 L601.7 921.2 L603.9 923.7 L606.0 924.1 L608.2 924.9 L610.3 914.1 L612.5 923.8 L614.6 924.7 L616.8 923.4 L618.9 924.0 L621.1 924.2 L623.2 923.7 L625.4 923.5 L627.5 922.7 L629.7 924.1 L631.8 923.7 L634.0 916.9 L636.1 922.7 L638.3 923.1 L640.4 921.5 L642.6 918.2 L644.7 924.3 L646.9 921.7 L649.0 923.5 L651.2 925.1 L653.4 923.1 L655.5 922.7 L657.7 922.6 L659.8 924.1 L662.0 923.3 L664.1 923.1 L666.3 920.4 L668.4 924.0 L670.6 917.0 L672.7 915.3 L674.9 922.3 L677.0 924.9 L679.2 920.4 L681.3 923.8 L683.5 923.7 L685.6 922.1 L687.8 922.8 L689.9 922.4 L692.1 916.5 L694.2 920.3 L696.4 919.2 L698.5 922.3 L700.7 921.8 L702.8 921.5 L705.0 923.9 L707.1 920.8 L709.3 922.9 L711.4 922.6 L713.6 922.8 L715.7 923.4 L717.9 924.1 L720.0 923.4 L722.2 924.5 L724.3 921.4 L726.5 924.4 L728.6 923.1 L730.8 924.0 L732.9 923.2 L735.1 920.9 L737.2 917.6 L739.4 924.0 L741.5 923.2 L743.7 923.4 L745.8 923.9 L748.0 924.0 L750.1 923.3 L752.3 922.0 L754.4 914.6 L756.6 924.5 L758.7 922.3 L760.9 925.3 L763.0 923.0 L765.2 921.4 L767.3 924.7 L769.5 924.7 L771.6 920.2 L773.8 925.5 L775.9 921.4 L778.1 922.6 L780.2 920.4 L782.4 921.1 L784.6 921.3 L786.7 924.7 L788.9 924.0 L791.0 922.8 L793.2 920.2 L795.3 921.4 L797.5 922.5 L799.6 922.4 L801.8 924.6 L803.9 920.9 L806.1 923.8 L808.2 922.0 L810.4 920.6 L812.5 925.2 L814.7 922.5 L816.8 922.4 L819.0 923.1 L821.1 923.3 L823.3 922.2 L825.4 919.4 L827.6 921.6 L829.7 922.0 L831.9 923.0 L834.0 922.9 L836.2 923.8 L838.3 922.8 L840.5 923.4 L842.6 924.6 L844.8 914.8 L846.9 916.6 L849.1 921.5 L851.2 924.6 L853.4 923.0 L855.5 921.8 L857.7 923.4 L859.8 922.9 L862.0 923.8 L864.1 922.1 L866.3 924.5 L868.4 922.4 L870.6 921.6 L872.7 923.7 L874.9 923.3 L877.0 923.8 L879.2 921.8 L881.3 923.9 L883.5 923.7 L885.6 919.6 L887.8 923.8 L889.9 914.9 L892.1 924.1 L894.2 922.0 L896.4 923.9 L898.5 921.9 L900.7 925.1 L902.8 922.6 L905.0 921.4 L907.1 923.7 L909.3 923.5" stroke="#37872D"/><path d="M524.3 921.1 L526.5 921.6 L528.6 922.2 L530.8 924.1 L532.9 924.9 L535.1 922.9 L537.2 922.7 L539.4 923.7 L541.5 923.6 L543.7 924.4 L545.8 923.3 L548.0 924.2 L550.1 924.3 L552.3 925.8 L554.4 922.8 L556.6 924.0 L558.7 922.9 L560.9 923.6 L563.0 923.7 L565.2 923.3 L567.3 925.0 L569.5 917.3 L571.6 919.9 L573.8 922.6 L575.9 922.9 L578.1 923.6 L580.2 924.1 L582.4 924.7 L584.5 922.6 L586.7 923.1 L588.8 923.3 L591.0 922.0 L593.1 923.5 L595.3 922.8 L597.4 923.5 L599.6 916.8 L601.7 925.4 L603.9 923.6 L606.0 924.4 L608.2 924.9 L610.3 925.2 L612.5 924.9 L614.6 918.1 L616.8 924.1 L618.9 922.0 L621.1 924.0 L623.2 924.4 L625.4 925.1 L627.5 920.3 L629.7 923.3 L631.8 924.9 L634.0 925.0 L636.1 924.4 L638.3 911.7 L640.4 924.4 L642.6 920.7 L644.7 923.8 L646.9 924.7 L649.0 923.8 L651.2 924.6 L653.4 922.7 L655.5 921.5 L657.7 923.5 L659.8 925.2 L662.0 924.7 L664.1 921.4 L666.3 922.7 L668.4 924.8 L670.6 922.7 L672.7 921.7 L674.9 925.3 L677.0 923.1 L679.2 923.8 L681.3 921.2 L683.5 922.8 L685.6 924.6 L687.8 925.1 L689.9 921.5 L692.1 921.2 L694.2 922.8 L696.4 923.4 L698.5 920.5 L700.7 924.0 L702.8 925.0 L705.0 922.6 L707.1 924.1 L709.3 923.6 L711.4 924.8 L713.6 926.0 L715.7 917.3 L717.9 925.8 L720.0 924.3 L722.2 925.0 L724.3 921.9 L726.5 922.5 L728.6 921.1 L730.8 923.1 L732.9 922.7 L735.1 923.7 L737.2 924.2 L739.4 923.8 L741.5 922.2 L743.7 923.2 L745.8 923.7 L748.0 925.0 L750.1 924.3 L752.3 922.2 L754.4 920.5 L756.6 924.8 L758.7 923.0 L760.9 919.3 L763.0 922.5 L765.2 924.1 L767.3 924.3 L769.5 923.9 L771.6 916.7 L773.8 923.0 L775.9 923.7 L778.1 916.5 L780.2 921.6 L782.4 924.1 L784.6 923.4 L786.7 920.1 L788.9 923.9 L791.0 924.2 L793.2 923.3 L795.3 923.7 L797.5 914.9 L799.6 924.2 L801.8 922.9 L803.9 920.4 L806.1 924.6 L808.2 922.3 L810.4 921.4 L812.5 921.4 L814.7 924.4 L816.8 924.1 L819.0 922.4 L821.1 920.0 L823.3 915.9 L825.4 922.0 L827.6 923.7 L829.7 919.0 L831.9 924.2 L834.0 920.2 L836.2 921.1 L838.3 925.1 L840.5 921.0 L842.6 924.7 L844.8 922.4 L846.9 922.3 L849.1 924.7 L851.2 923.9 L853.4 923.7 L855.5 921.7 L857.7 920.7 L859.8 922.4 L862.0 924.6 L864.1 924.8 L866.3 922.7 L868.4 922.2 L870.6 923.5 L872.7 924.1 L874.9 923.2 L877.0 923.5 L879.2 924.8 L881.3 923.4 L883.5 923.5 L885.6 924.2 L887.8 923.7 L889.9 923.1 L892.1 924.1 L894.2 923.2 L896.4 923.8 L898.5 922.4 L900.7 924.8 L902.8 922.1 L905.0 915.7 L907.1 921.1 L909.3 923.9" stroke="#FF780A"/><path d="M524.3 923.3 L526.5 921.5 L528.6 924.5 L530.8 919.8 L532.9 923.5 L535.1 924.1 L537.2 923.5 L539.4 925.1 L541.5 924.0 L543.7 921.4 L545.8 921.7 L548.0 914.3 L550.1 922.1 L552.3 923.2 L554.4 923.7 L556.6 923.6 L558.7 925.2 L560.9 924.0 L563.0 922.4 L565.2 923.5 L567.3 923.0 L569.5 916.4 L571.6 923.9 L573.8 924.4 L575.9 924.4 L578.1 922.0 L580.2 919.9 L582.4 923.6 L584.5 923.7 L586.7 922.3 L588.8 922.9 L591.0 923.9 L593.1 925.1 L595.3 923.1 L597.4 924.1 L599.6 924.5 L601.7 919.1 L603.9 923.2 L606.0 923.8 L608.2 924.4 L610.3 924.3 L612.5 922.8 L614.6 924.6 L616.8 922.3 L618.9 923.5 L621.1 924.3 L623.2 924.1 L625.4 923.7 L627.5 924.1 L629.7 925.2 L631.8 921.5 L634.0 924.5 L636.1 924.8 L638.3 920.6 L640.4 925.3 L642.6 925.2 L644.7 923.7 L646.9 915.5 L649.0 919.4 L651.2 922.7 L653.4 923.2 L655.5 923.4 L657.7 922.7 L659.8 921.8 L662.0 923.2 L664.1 923.3 L666.3 922.5 L668.4 926.3 L670.6 923.1 L672.7 923.1 L674.9 923.4 L677.0 924.4 L679.2 919.8 L681.3 924.3 L683.5 920.8 L685.6 923.0 L687.8 918.6 L689.9 924.0 L692.1 924.4 L694.2 921.2 L696.4 922.6 L698.5 923.6 L700.7 922.0 L702.8 924.3 L705.0 917.4 L707.1 924.6 L709.3 921.9 L711.4 922.3 L713.6 924.4 L715.7 922.6 L717.9 922.7 L720.0 918.4 L722.2 923.2 L724.3 923.4 L726.5 925.2 L728.6 920.1 L730.8 924.0 L732.9 922.1 L735.1 924.8 L737.2 922.1 L739.4 923.9 L741.5 922.9 L743.7 923.4 L745.8 925.1 L748.0 920.8 L750.1 924.7 L752.3 922.7 L754.4 924.4 L756.6 924.2 L758.7 925.0 L760.9 924.5 L763.0 925.0 L765.2 925.3 L767.3 923.0 L769.5 923.0 L771.6 923.6 L773.8 923.9 L775.9 924.0 L778.1 924.9 L780.2 921.6 L782.4 925.1 L784.6 924.2 L786.7 913.6 L788.9 920.8 L791.0 924.1 L793.2 923.2 L795.3 920.9 L797.5 923.6 L799.6 919.5 L801.8 924.8 L803.9 918.6 L806.1 924.0 L808.2 923.3 L810.4 921.3 L812.5 923.8 L814.7 921.7 L816.8 925.0 L819.0 923.9 L821.1 923.1 L823.3 924.2 L825.4 918.8 L827.6 924.4 L829.7 920.2 L831.9 919.7 L834.0 925.5 L836.2 922.1 L838.3 923.2 L840.5 922.1 L842.6 922.6 L844.8 923.5 L846.9 925.9 L849.1 921.2 L851.2 919.8 L853.4 924.0 L855.5 924.6 L857.7 923.3 L859.8 923.5 L862.0 923.3 L864.1 924.2 L866.3 922.7 L868.4 923.0 L870.6 922.7 L872.7 922.3 L874.9 924.2 L877.0 923.0 L879.2 923.0 L881.3 923.9 L883.5 923.6 L885.6 924.6 L887.8 923.5 L889.9 923.8 L892.1 923.6 L894.2 924.8 L896.4 924.6 L898.5 923.7 L900.7 924.1 L902.8 920.5 L905.0 924.7 L907.1 924.3 L909.3 923.4" stroke="#A352CC"/><path d="M524.3 924.9 L526.5 920.3 L528.6 923.4 L530.8 920.9 L532.9 924.8 L535.1 922.9 L537.2 924.4 L539.4 924.3 L541.5 923.0 L543.7 923.5 L545.8 924.0 L548.0 924.3 L550.1 926.1 L552.3 923.1 L554.4 923.6 L556.6 925.2 L558.7 924.3 L560.9 924.8 L563.0 923.4 L565.2 924.3 L567.3 923.8 L569.5 923.7 L571.6 918.6 L573.8 924.3 L575.9 924.4 L578.1 920.1 L580.2 924.3 L582.4 924.8 L584.5 924.5 L586.7 922.1 L588.8 925.0 L591.0 923.5 L593.1 924.9 L595.3 922.1 L597.4 915.4 L599.6 917.6 L601.7 920.8 L603.9 925.2 L606.0 923.6 L608.2 924.2 L610.3 913.3 L612.5 923.9 L614.6 921.3 L616.8 924.1 L618.9 923.8 L621.1 924.0 L623.2 924.8 L625.4 923.5 L627.5 924.0 L629.7 917.2 L631.8 923.2 L634.0 920.5 L636.1 924.1 L638.3 923.9 L640.4 922.1 L642.6 924.1 L644.7 924.9 L646.9 923.6 L649.0 925.1 L651.2 923.1 L653.4 924.5 L655.5 922.4 L657.7 925.0 L659.8 923.5 L662.0 922.7 L664.1 924.5 L666.3 925.3 L668.4 921.2 L670.6 924.3 L672.7 924.1 L674.9 917.8 L677.0 923.7 L679.2 924.9 L681.3 924.1 L683.5 921.1 L685.6 923.5 L687.8 923.5 L689.9 921.1 L692.1 924.4 L694.2 923.3 L696.4 924.9 L698.5 921.8 L700.7 923.2 L702.8 925.2 L705.0 923.7 L707.1 922.2 L709.3 924.8 L711.4 920.6 L713.6 925.0 L715.7 923.5 L717.9 923.1 L720.0 918.6 L722.2 923.6 L724.3 924.0 L726.5 923.8 L728.6 925.0 L730.8 924.0 L732.9 923.2 L735.1 922.5 L737.2 919.1 L739.4 921.5 L741.5 923.3 L743.7 922.5 L745.8 924.2 L748.0 924.7 L750.1 924.6 L752.3 923.2 L754.4 924.4 L756.6 924.1 L758.7 924.1 L760.9 922.6 L763.0 922.9 L765.2 924.8 L767.3 924.6 L769.5 924.7 L771.6 924.6 L773.8 923.4 L775.9 923.5 L778.1 922.6 L780.2 923.4 L782.4 924.0 L784.6 922.9 L786.7 920.9 L788.9 924.9 L791.0 924.0 L793.2 924.0 L795.3 922.3 L797.5 922.0 L799.6 924.8 L801.8 925.1 L803.9 924.0 L806.1 924.3 L808.2 925.5 L810.4 922.5 L812.5 924.9 L814.7 924.1 L816.8 924.1 L819.0 924.4 L821.1 922.5 L823.3 924.2 L825.4 924.2 L827.6 923.6 L829.7 923.7 L831.9 922.9 L834.0 924.7 L836.2 923.5 L838.3 923.4 L840.5 920.8 L842.6 924.1 L844.8 925.1 L846.9 923.3 L849.1 923.0 L851.2 924.6 L853.4 918.0 L855.5 922.0 L857.7 923.8 L859.8 921.3 L862.0 924.6 L864.1 923.8 L866.3 923.0 L868.4 923.4 L870.6 921.2 L872.7 922.4 L874.9 922.6 L877.0 923.3 L879.2 922.9 L881.3 924.9 L883.5 925.3 L885.6 918.2 L887.8 923.4 L889.9 922.7 L892.1 924.4 L894.2 924.7 L896.4 924.4 L898.5 925.6 L900.7 924.4 L902.8 923.9 L905.0 921.4 L907.1 923.4 L909.3 920.7" stroke="#8F3BB8"/><path d="M524.3 925.3 L526.5 923.9 L528.6 924.4 L530.8 924.6 L532.9 923.5 L535.1 924.3 L537.2 922.4 L539.4 923.9 L541.5 922.5 L543.7 924.8 L545.8 920.6 L548.0 918.3 L550.1 925.7 L552.3 922.5 L554.4 925.1 L556.6 923.2 L558.7 923.1 L560.9 914.8 L563.0 923.5 L565.2 923.4 L567.3 923.9 L569.5 923.4 L571.6 923.1 L573.8 919.5 L575.9 916.6 L578.1 924.1 L580.2 922.6 L582.4 921.0 L584.5 915.1 L586.7 922.1 L588.8 925.1 L591.0 925.7 L593.1 918.3 L595.3 924.6 L597.4 917.9 L599.6 922.5 L601.7 924.0 L603.9 923.6 L606.0 924.0 L608.2 925.2 L610.3 925.4 L612.5 923.5 L614.6 924.4 L616.8 919.6 L618.9 923.9 L621.1 923.7 L623.2 925.1 L625.4 924.5 L627.5 922.2 L629.7 923.3 L631.8 923.7 L634.0 922.9 L636.1 925.2 L638.3 922.2 L640.4 921.8 L642.6 922.1 L644.7 924.8 L646.9 921.1 L649.0 923.9 L651.2 923.3 L653.4 924.8 L655.5 923.9 L657.7 924.1 L659.8 924.0 L662.0 921.8 L664.1 923.5 L666.3 923.4 L668.4 924.2 L670.6 922.5 L672.7 921.2 L674.9 924.5 L677.0 924.0 L679.2 923.3 L681.3 924.3 L683.5 923.3 L685.6 923.4 L687.8 920.2 L689.9 925.0 L692.1 923.1 L694.2 924.6 L696.4 915.8 L698.5 922.2 L700.7 916.7 L702.8 923.1 L705.0 923.5 L707.1 924.0 L709.3 924.1 L711.4 924.2 L713.6 925.7 L715.7 922.7 L717.9 924.1 L720.0 919.5 L722.2 924.7 L724.3 924.6 L726.5 923.2 L728.6 920.9 L730.8 923.8 L732.9 919.9 L735.1 922.7 L737.2 921.2 L739.4 922.3 L741.5 921.9 L743.7 922.9 L745.8 920.6 L748.0 913.6 L750.1 923.1 L752.3 922.5 L754.4 924.0 L756.6 921.0 L758.7 923.7 L760.9 914.9 L763.0 922.5 L765.2 924.6 L767.3 923.9 L769.5 916.6 L771.6 923.9 L773.8 923.1 L775.9 924.4 L778.1 924.7 L780.2 921.2 L782.4 922.9 L784.6 923.4 L786.7 923.1 L788.9 923.0 L791.0 914.5 L793.2 924.4 L795.3 924.5 L797.5 921.6 L799.6 925.6 L801.8 917.5 L803.9 923.8 L806.1 923.2 L808.2 924.7 L810.4 923.6 L812.5 924.0 L814.7 921.5 L816.8 924.9 L819.0 922.8 L821.1 923.3 L823.3 924.2 L825.4 923.0 L827.6 920.4 L829.7 918.3 L831.9 923.5 L834.0 923.9 L836.2 922.9 L838.3 918.1 L840.5 925.1 L842.6 924.1 L844.8 917.7 L846.9 923.4 L849.1 925.3 L851.2 922.1 L853.4 925.3 L855.5 923.8 L857.7 924.1 L859.8 922.2 L862.0 921.6 L864.1 922.1 L866.3 924.6 L868.4 924.5 L870.6 923.5 L872.7 922.7 L874.9 924.4 L877.0 924.0 L879.2 924.1 L881.3 915.6 L883.5 923.5 L885.6 923.5 L887.8 915.1 L889.9 924.3 L892.1 924.8 L894.2 921.0 L896.4 925.8 L898.5 922.7 L900.7 924.7 L902.8 923.8 L905.0 924.5 L907.1 921.7 L909.3 921.3" stroke="#705DA0"/><path d="M524.3 923.5 L526.5 920.3 L528.6 924.1 L530.8 924.6 L532.9 919.5 L535.1 925.7 L537.2 923.7 L539.4 923.1 L541.5 923.8 L543.7 923.9 L545.8 923.4 L548.0 924.7 L550.1 924.9 L552.3 923.9 L554.4 922.2 L556.6 923.3 L558.7 925.2 L560.9 923.5 L563.0 924.3 L565.2 924.5 L567.3 922.9 L569.5 924.2 L571.6 922.5 L573.8 923.4 L575.9 924.4 L578.1 922.9 L580.2 923.8 L582.4 923.8 L584.5 925.3 L586.7 920.5 L588.8 924.2 L591.0 921.7 L593.1 925.0 L595.3 919.2 L597.4 925.7 L599.6 921.6 L601.7 923.4 L603.9 923.5 L606.0 924.4 L608.2 923.6 L610.3 922.7 L612.5 923.7 L614.6 921.8 L616.8 918.8 L618.9 923.9 L621.1 923.4 L623.2 925.0 L625.4 923.0 L627.5 922.3 L629.7 923.8 L631.8 924.4 L634.0 924.1 L636.1 924.8 L638.3 922.3 L640.4 915.2 L642.6 920.9 L644.7 925.5 L646.9 923.5 L649.0 924.5 L651.2 924.4 L653.4 922.5 L655.5 924.2 L657.7 924.0 L659.8 924.7 L662.0 919.8 L664.1 916.3 L666.3 922.4 L668.4 923.9 L670.6 922.4 L672.7 924.2 L674.9 924.1 L677.0 924.4 L679.2 919.3 L681.3 924.5 L683.5 922.7 L685.6 919.4 L687.8 917.1 L689.9 922.9 L692.1 922.7 L694.2 924.5 L696.4 920.0 L698.5 924.2 L700.7 923.5 L702.8 924.0 L705.0 922.5 L707.1 922.6 L709.3 922.9 L711.4 923.0 L713.6 924.9 L715.7 924.8 L717.9 922.6 L720.0 924.5 L722.2 924.9 L724.3 922.4 L726.5 925.4 L728.6 925.8 L730.8 923.7 L732.9 922.3 L735.1 920.2 L737.2 924.8 L739.4 921.9 L741.5 924.4 L743.7 925.2 L745.8 923.7 L748.0 925.1 L750.1 920.0 L752.3 924.7 L754.4 923.9 L756.6 921.2 L758.7 920.9 L760.9 923.8 L763.0 921.9 L765.2 924.3 L767.3 925.7 L769.5 923.3 L771.6 924.5 L773.8 923.7 L775.9 924.3 L778.1 923.9 L780.2 925.0 L782.4 922.8 L784.6 923.1 L786.7 924.1 L788.9 923.5 L791.0 923.0 L793.2 922.2 L795.3 923.9 L797.5 923.0 L799.6 924.3 L801.8 923.2 L803.9 924.5 L806.1 923.6 L808.2 920.2 L810.4 926.1 L812.5 924.0 L814.7 917.3 L816.8 923.6 L819.0 924.9 L821.1 918.4 L823.3 921.5 L825.4 918.5 L827.6 925.0 L829.7 925.5 L831.9 921.3 L834.0 924.9 L836.2 922.1 L838.3 924.4 L840.5 915.1 L842.6 924.6 L844.8 923.6 L846.9 922.4 L849.1 924.4 L851.2 923.3 L853.4 925.1 L855.5 922.9 L857.7 922.3 L859.8 920.8 L862.0 924.7 L864.1 923.2 L866.3 924.2 L868.4 924.3 L870.6 925.0 L872.7 920.6 L874.9 923.3 L877.0 924.5 L879.2 925.1 L881.3 924.7 L883.5 924.8 L885.6 923.4 L887.8 925.9 L889.9 923.1 L892.1 924.3 L894.2 923.8 L896.4 918.5 L898.5 925.0 L900.7 918.6 L902.8 921.7 L905.0 923.0 L907.1 924.7 L909.3 924.7" stroke="#3274D9"/><path d="M524.3 920.7 L526.5 917.4 L528.6 921.1 L530.8 922.0 L532.9 923.4 L535.1 925.7 L537.2 925.0 L539.4 924.8 L541.5 918.5 L543.7 919.6 L545.8 922.9 L548.0 923.5 L550.1 924.9 L552.3 921.0 L554.4 923.4 L556.6 923.6 L558.7 925.1 L560.9 922.2 L563.0 924.2 L565.2 919.6 L567.3 925.4 L569.5 923.6 L571.6 922.2 L573.8 923.8 L575.9 918.9 L578.1 917.7 L580.2 924.8 L582.4 917.9 L584.5 924.0 L586.7 923.6 L588.8 918.7 L591.0 923.1 L593.1 922.0 L595.3 924.0 L597.4 921.6 L599.6 924.6 L601.7 924.3 L603.9 923.8 L606.0 922.8 L608.2 922.3 L610.3 923.6 L612.5 923.4 L614.6 923.8 L616.8 923.8 L618.9 924.6 L621.1 925.0 L623.2 924.8 L625.4 923.7 L627.5 922.8 L629.7 923.0 L631.8 923.4 L634.0 917.5 L636.1 923.8 L638.3 925.6 L640.4 921.9 L642.6 924.8 L644.7 923.8 L646.9 923.8 L649.0 923.9 L651.2 923.4 L653.4 923.4 L655.5 916.2 L657.7 923.9 L659.8 923.5 L662.0 924.2 L664.1 924.1 L666.3 922.5 L668.4 924.0 L670.6 919.3 L672.7 924.1 L674.9 923.1 L677.0 923.9 L679.2 923.9 L681.3 923.6 L683.5 922.1 L685.6 923.7 L687.8 925.2 L689.9 925.0 L692.1 925.1 L694.2 922.8 L696.4 923.3 L698.5 924.4 L700.7 913.9 L702.8 916.6 L705.0 923.2 L707.1 918.1 L709.3 924.7 L711.4 922.6 L713.6 924.2 L715.7 923.4 L717.9 922.7 L720.0 924.2 L722.2 922.9 L724.3 925.6 L726.5 922.2 L728.6 922.5 L730.8 923.3 L732.9 924.6 L735.1 924.1 L737.2 923.3 L739.4 919.4 L741.5 919.9 L743.7 923.7 L745.8 923.9 L748.0 924.2 L750.1 925.1 L752.3 924.0 L754.4 924.6 L756.6 921.6 L758.7 921.3 L760.9 923.8 L763.0 923.8 L765.2 923.7 L767.3 924.2 L769.5 923.2 L771.6 925.1 L773.8 924.0 L775.9 925.5 L778.1 924.7 L780.2 921.4 L782.4 923.2 L784.6 924.5 L786.7 923.8 L788.9 921.4 L791.0 923.5 L793.2 923.2 L795.3 923.6 L797.5 924.8 L799.6 925.2 L801.8 922.8 L803.9 924.5 L806.1 919.1 L808.2 923.0 L810.4 924.4 L812.5 922.3 L814.7 923.6 L816.8 923.5 L819.0 923.8 L821.1 925.1 L823.3 924.4 L825.4 924.0 L827.6 910.2 L829.7 921.1 L831.9 924.0 L834.0 923.0 L836.2 924.4 L838.3 923.4 L840.5 925.8 L842.6 924.6 L844.8 925.7 L846.9 923.0 L849.1 922.5 L851.2 923.6 L853.4 925.6 L855.5 922.5 L857.7 923.0 L859.8 921.6 L862.0 924.2 L864.1 923.4 L866.3 924.0 L868.4 924.0 L870.6 923.4 L872.7 925.3 L874.9 924.2 L877.0 923.9 L879.2 923.1 L881.3 923.8 L883.5 917.6 L885.6 922.5 L887.8 917.8 L889.9 922.9 L892.1 923.0 L894.2 922.6 L896.4 922.1 L898.5 922.8 L900.7 922.9 L902.8 925.2 L905.0 922.9 L907.1 923.5 L909.3 921.8" stroke="#584477"/><path d="M524.3 923.7 L526.5 923.1 L528.6 924.6 L530.8 924.4 L532.9 923.7 L535.1 922.6 L537.2 924.5 L539.4 920.3 L541.5 922.9 L543.7 925.4 L545.8 923.0 L548.0 923.6 L550.1 923.9 L552.3 923.9 L554.4 914.7 L556.6 924.9 L558.7 923.8 L560.9 925.0 L563.0 917.6 L565.2 922.1 L567.3 924.8 L569.5 923.8 L571.6 925.2 L573.8 923.3 L575.9 924.1 L578.1 921.3 L580.2 923.1 L582.4 922.3 L584.5 922.0 L586.7 923.9 L588.8 915.2 L591.0 922.4 L593.1 924.6 L595.3 923.2 L597.4 925.8 L599.6 923.4 L601.7 923.5 L603.9 921.7 L606.0 919.6 L608.2 922.7 L610.3 924.7 L612.5 923.1 L614.6 924.1 L616.8 925.0 L618.9 925.5 L621.1 923.9 L623.2 923.3 L625.4 925.4 L627.5 924.7 L629.7 922.3 L631.8 921.8 L634.0 923.7 L636.1 924.7 L638.3 911.4 L640.4 924.5 L642.6 923.5 L644.7 923.6 L646.9 923.4 L649.0 923.5 L651.2 918.7 L653.4 923.5 L655.5 923.8 L657.7 922.5 L659.8 925.3 L662.0 923.4 L664.1 923.7 L666.3 919.6 L668.4 924.1 L670.6 923.7 L672.7 922.8 L674.9 923.9 L677.0 923.1 L679.2 925.2 L681.3 922.7 L683.5 923.8 L685.6 923.9 L687.8 924.1 L689.9 922.1 L692.1 923.4 L694.2 921.7 L696.4 924.1 L698.5 921.4 L700.7 924.7 L702.8 918.4 L705.0 921.9 L707.1 924.6 L709.3 924.1 L711.4 924.6 L713.6 922.5 L715.7 925.2 L717.9 923.9 L720.0 922.3 L722.2 924.7 L724.3 922.4 L726.5 924.5 L728.6 922.9 L730.8 923.6 L732.9 924.7 L735.1 922.4 L737.2 923.8 L739.4 922.5 L741.5 924.4 L743.7 924.5 L745.8 923.6 L748.0 924.4 L750.1 921.9 L752.3 921.9 L754.4 921.4 L756.6 921.5 L758.7 923.4 L760.9 923.2 L763.0 923.4 L765.2 924.3 L767.3 920.3 L769.5 923.1 L771.6 923.4 L773.8 924.3 L775.9 923.5 L778.1 922.0 L780.2 925.0 L782.4 922.5 L784.6 914.8 L786.7 925.0 L788.9 921.0 L791.0 915.3 L793.2 926.1 L795.3 924.0 L797.5 917.6 L799.6 923.8 L801.8 923.9 L803.9 923.8 L806.1 926.3 L808.2 923.4 L810.4 922.5 L812.5 917.0 L814.7 923.9 L816.8 923.8 L819.0 925.0 L821.1 923.9 L823.3 922.0 L825.4 924.1 L827.6 922.5 L829.7 918.1 L831.9 915.7 L834.0 922.6 L836.2 922.2 L838.3 924.9 L840.5 925.0 L842.6 917.0 L844.8 923.9 L846.9 914.3 L849.1 923.7 L851.2 920.4 L853.4 917.0 L855.5 924.7 L857.7 923.2 L859.8 923.9 L862.0 924.1 L864.1 919.5 L866.3 923.6 L868.4 921.4 L870.6 924.0 L872.7 922.6 L874.9 923.7 L877.0 923.2 L879.2 924.9 L881.3 925.6 L883.5 922.9 L885.6 924.0 L887.8 923.2 L889.9 924.2 L892.1 922.1 L894.2 924.8 L896.4 924.3 L898.5 919.0 L900.7 923.9 L902.8 922.6 L905.0 923.1 L907.1 925.4 L909.3 923.9" stroke="#6D1F62"/><path d="M524.3 914.6 L526.5 923.1 L528.6 923.1 L530.8 924.3 L532.9 925.1 L535.1 923.5 L537.2 924.8 L539.4 923.7 L541.5 922.4 L543.7 922.9 L545.8 923.5 L548.0 924.5 L550.1 924.9 L552.3 916.2 L554.4 924.4 L556.6 924.3 L558.7 924.7 L560.9 924.8 L563.0 924.6 L565.2 925.2 L567.3 920.1 L569.5 923.8 L571.6 924.3 L573.8 923.6 L575.9 923.0 L578.1 924.5 L580.2 923.7 L582.4 919.4 L584.5 924.9 L586.7 922.9 L588.8 923.6 L591.0 924.3 L593.1 921.0 L595.3 926.3 L597.4 923.1 L599.6 924.9 L601.7 924.6 L603.9 924.6 L606.0 925.9 L608.2 922.0 L610.3 923.5 L612.5 923.8 L614.6 924.7 L616.8 923.8 L618.9 923.3 L621.1 923.6 L623.2 924.7 L625.4 914.6 L627.5 924.2 L629.7 924.4 L631.8 923.1 L634.0 924.3 L636.1 922.8 L638.3 924.1 L640.4 923.9 L642.6 922.8 L644.7 923.3 L646.9 922.9 L649.0 916.1 L651.2 924.8 L653.4 920.8 L655.5 923.5 L657.7 925.4 L659.8 923.8 L662.0 922.2 L664.1 923.2 L666.3 924.5 L668.4 920.7 L670.6 919.3 L672.7 921.6 L674.9 924.1 L677.0 925.0 L679.2 921.6 L681.3 923.2 L683.5 921.7 L685.6 924.1 L687.8 924.0 L689.9 922.2 L692.1 922.9 L694.2 924.6 L696.4 925.2 L698.5 923.0 L700.7 924.3 L702.8 921.3 L705.0 923.6 L707.1 924.6 L709.3 923.1 L711.4 923.5 L713.6 925.0 L715.7 923.0 L717.9 923.8 L720.0 921.8 L722.2 922.4 L724.3 924.3 L726.5 924.3 L728.6 925.8 L730.8 924.9 L732.9 922.8 L735.1 917.3 L737.2 921.9 L739.4 917.0 L741.5 920.5 L743.7 924.2 L745.8 922.0 L748.0 922.7 L750.1 923.0 L752.3 917.1 L754.4 923.1 L756.6 923.6 L758.7 915.5 L760.9 924.2 L763.0 924.8 L765.2 922.3 L767.3 925.0 L769.5 924.2 L771.6 924.0 L773.8 924.4 L775.9 924.5 L778.1 916.1 L780.2 923.7 L782.4 924.8 L784.6 923.0 L786.7 925.3 L788.9 923.1 L791.0 923.8 L793.2 922.8 L795.3 923.4 L797.5 921.9 L799.6 921.8 L801.8 924.9 L803.9 922.3 L806.1 922.4 L808.2 920.6 L810.4 924.1 L812.5 922.7 L814.7 923.5 L816.8 925.7 L819.0 923.9 L821.1 924.6 L823.3 923.9 L825.4 924.5 L827.6 922.8 L829.7 923.2 L831.9 923.9 L834.0 924.2 L836.2 924.6 L838.3 924.6 L840.5 920.4 L842.6 923.8 L844.8 923.4 L846.9 924.3 L849.1 923.9 L851.2 923.9 L853.4 923.0 L855.5 922.9 L857.7 919.8 L859.8 924.4 L862.0 923.5 L864.1 924.8 L866.3 923.6 L868.4 922.8 L870.6 919.4 L872.7 923.6 L874.9 922.1 L877.0 924.3 L879.2 921.4 L881.3 925.4 L883.5 924.3 L885.6 923.0 L887.8 922.3 L889.9 922.3 L892.1 919.3 L894.2 923.1 L896.4 924.5 L898.5 924.2 L900.7 924.5 L902.8 923.7 L905.0 919.0 L907.1 921.5 L909.3 922.1" stroke="#1250B0"/><path d="M524.3 924.2 L526.5 922.9 L528.6 923.8 L530.8 925.4 L532.9 921.4 L535.1 924.2 L537.2 922.0 L539.4 922.6 L541.5 922.3 L543.7 923.9 L545.8 923.0 L548.0 924.5 L550.1 922.7 L552.3 923.5 L554.4 924.1 L556.6 920.7 L558.7 923.7 L560.9 924.4 L563.0 922.6 L565.2 924.3 L567.3 924.4 L569.5 922.6 L571.6 923.6 L573.8 924.1 L575.9 921.5 L578.1 923.4 L580.2 923.0 L582.4 923.2 L584.5 923.6 L586.7 923.3 L588.8 923.7 L591.0 922.4 L593.1 925.9 L595.3 923.8 L597.4 925.0 L599.6 923.4 L601.7 917.8 L603.9 923.1 L606.0 923.8 L608.2 923.9 L610.3 924.3 L612.5 923.5 L614.6 923.2 L616.8 921.5 L618.9 924.7 L621.1 922.2 L623.2 923.1 L625.4 923.1 L627.5 922.5 L629.7 915.9 L631.8 925.2 L634.0 923.7 L636.1 924.0 L638.3 920.6 L640.4 919.4 L642.6 920.7 L644.7 925.1 L646.9 925.0 L649.0 923.8 L651.2 923.8 L653.4 919.8 L655.5 923.1 L657.7 915.2 L659.8 924.7 L662.0 922.7 L664.1 923.8 L666.3 923.6 L668.4 923.2 L670.6 925.0 L672.7 923.8 L674.9 924.1 L677.0 924.3 L679.2 924.7 L681.3 922.3 L683.5 924.1 L685.6 924.1 L687.8 923.5 L689.9 922.1 L692.1 922.7 L694.2 924.4 L696.4 923.5 L698.5 924.4 L700.7 924.3 L702.8 925.1 L705.0 925.0 L707.1 924.5 L709.3 923.1 L711.4 922.3 L713.6 922.6 L715.7 923.0 L717.9 913.2 L720.0 923.6 L722.2 924.4 L724.3 922.7 L726.5 916.1 L728.6 924.4 L730.8 924.4 L732.9 924.1 L735.1 924.4 L737.2 922.5 L739.4 924.0 L741.5 923.4 L743.7 909.1 L745.8 924.6 L748.0 922.7 L750.1 918.8 L752.3 923.4 L754.4 922.4 L756.6 923.0 L758.7 922.8 L760.9 923.3 L763.0 921.3 L765.2 922.5 L767.3 922.7 L769.5 922.3 L771.6 924.4 L773.8 916.7 L775.9 915.0 L778.1 925.1 L780.2 921.1 L782.4 922.8 L784.6 918.9 L786.7 924.4 L788.9 922.5 L791.0 922.6 L793.2 922.0 L795.3 924.6 L797.5 924.6 L799.6 924.8 L801.8 919.9 L803.9 921.9 L806.1 922.4 L808.2 922.9 L810.4 923.7 L812.5 924.7 L814.7 924.8 L816.8 922.8 L819.0 921.1 L821.1 923.9 L823.3 918.3 L825.4 923.2 L827.6 923.7 L829.7 923.8 L831.9 919.0 L834.0 920.0 L836.2 926.1 L838.3 923.1 L840.5 922.2 L842.6 924.6 L844.8 914.8 L846.9 922.0 L849.1 923.4 L851.2 922.7 L853.4 919.9 L855.5 923.7 L857.7 923.7 L859.8 924.2 L862.0 917.6 L864.1 923.0 L866.3 924.0 L868.4 924.5 L870.6 922.4 L872.7 923.8 L874.9 924.0 L877.0 922.8 L879.2 924.0 L881.3 921.9 L883.5 924.2 L885.6 924.4 L887.8 921.3 L889.9 924.1 L892.1 923.0 L894.2 915.5 L896.4 922.2 L898.5 921.7 L900.7 923.4 L902.8 924.7 L905.0 923.3 L907.1 922.9 L909.3 924.3" stroke="#1F60C4"/><path d="M524.3 922.9 L526.5 923.2 L528.6 924.3 L530.8 921.0 L532.9 923.7 L535.1 919.4 L537.2 924.8 L539.4 922.1 L541.5 923.7 L543.7 923.8 L545.8 918.4 L548.0 924.1 L550.1 924.6 L552.3 924.7 L554.4 922.7 L556.6 922.8 L558.7 922.9 L560.9 923.3 L563.0 921.7 L565.2 924.2 L567.3 921.3 L569.5 925.2 L571.6 924.9 L573.8 916.9 L575.9 919.5 L578.1 923.6 L580.2 924.9 L582.4 923.5 L584.5 923.6 L586.7 925.1 L588.8 924.3 L591.0 923.3 L593.1 922.2 L595.3 923.4 L597.4 924.7 L599.6 924.4 L601.7 924.3 L603.9 925.3 L606.0 924.5 L608.2 924.5 L610.3 921.8 L612.5 924.4 L614.6 923.3 L616.8 924.0 L618.9 921.6 L621.1 925.2 L623.2 915.9 L625.4 923.9 L627.5 923.9 L629.7 915.2 L631.8 924.9 L634.0 924.0 L636.1 924.5 L638.3 919.9 L640.4 922.8 L642.6 923.0 L644.7 917.2 L646.9 924.9 L649.0 922.5 L651.2 924.3 L653.4 915.2 L655.5 920.1 L657.7 924.4 L659.8 923.3 L662.0 925.5 L664.1 923.7 L666.3 922.1 L668.4 923.9 L670.6 924.3 L672.7 923.4 L674.9 923.8 L677.0 923.8 L679.2 924.9 L681.3 922.1 L683.5 925.0 L685.6 924.3 L687.8 918.6 L689.9 924.0 L692.1 923.5 L694.2 925.2 L696.4 924.1 L698.5 924.8 L700.7 924.6 L702.8 923.5 L705.0 923.8 L707.1 924.5 L709.3 923.6 L711.4 924.0 L713.6 923.4 L715.7 924.1 L717.9 920.4 L720.0 918.4 L722.2 924.4 L724.3 925.0 L726.5 924.1 L728.6 923.5 L730.8 925.2 L732.9 925.3 L735.1 919.2 L737.2 924.6 L739.4 921.9 L741.5 924.6 L743.7 919.0 L745.8 923.6 L748.0 924.9 L750.1 920.6 L752.3 923.0 L754.4 921.0 L756.6 922.0 L758.7 916.0 L760.9 922.2 L763.0 919.6 L765.2 922.1 L767.3 923.0 L769.5 924.7 L771.6 918.0 L773.8 924.0 L775.9 924.2 L778.1 924.8 L780.2 923.3 L782.4 918.2 L784.6 921.7 L786.7 922.8 L788.9 924.8 L791.0 924.4 L793.2 922.6 L795.3 924.2 L797.5 922.4 L799.6 923.6 L801.8 920.0 L803.9 924.3 L806.1 922.8 L808.2 924.8 L810.4 913.6 L812.5 924.0 L814.7 924.5 L816.8 922.4 L819.0 923.6 L821.1 924.4 L823.3 925.4 L825.4 924.7 L827.6 924.3 L829.7 924.9 L831.9 924.9 L834.0 924.0 L836.2 924.4 L838.3 917.2 L840.5 924.3 L842.6 920.8 L844.8 918.7 L846.9 924.0 L849.1 921.6 L851.2 925.9 L853.4 924.1 L855.5 923.0 L857.7 924.8 L859.8 923.5 L862.0 924.7 L864.1 924.4 L866.3 925.3 L868.4 921.9 L870.6 923.7 L872.7 924.2 L874.9 922.5 L877.0 922.7 L879.2 921.6 L881.3 924.6 L883.5 922.9 L885.6 924.9 L887.8 925.3 L889.9 921.8 L892.1 922.1 L894.2 923.9 L896.4 922.9 L898.5 925.8 L900.7 922.9 L902.8 924.0 L905.0 924.4 L907.1 924.0 L909.3 920.8" stroke="#0A437C"/><path d="M524.3 917.4 L526.5 925.0 L528.6 925.4 L530.8 923.7 L532.9 925.3 L535.1 926.0 L537.2 923.9 L539.4 926.9 L541.5 924.0 L543.7 923.3 L545.8 925.6 L548.0 923.7 L550.1 923.5 L552.3 924.0 L554.4 919.6 L556.6 920.2 L558.7 926.2 L560.9 924.2 L563.0 925.7 L565.2 923.7 L567.3 924.3 L569.5 915.1 L571.6 923.4 L573.8 919.5 L575.9 926.0 L578.1 926.4 L580.2 923.0 L582.4 925.0 L584.5 923.1 L586.7 926.3 L588.8 925.3 L591.0 925.2 L593.1 924.5 L595.3 923.3 L597.4 924.7 L599.6 925.8 L601.7 923.9 L603.9 926.9 L606.0 923.8 L608.2 921.3 L610.3 926.7 L612.5 925.6 L614.6 924.4 L616.8 919.2 L618.9 924.7 L621.1 924.5 L623.2 926.0 L625.4 925.0 L627.5 925.8 L629.7 924.9 L631.8 924.5 L634.0 925.2 L636.1 924.9 L638.3 926.0 L640.4 924.5 L642.6 922.7 L644.7 926.0 L646.9 925.8 L649.0 925.5 L651.2 921.8 L653.4 926.4 L655.5 925.0 L657.7 925.8 L659.8 920.7 L662.0 924.1 L664.1 926.8 L666.3 925.1 L668.4 925.3 L670.6 925.2 L672.7 924.7 L674.9 917.0 L677.0 925.7 L679.2 924.9 L681.3 925.9 L683.5 925.2 L685.6 924.8 L687.8 925.4 L689.9 924.4 L692.1 918.9 L694.2 925.4 L696.4 925.4 L698.5 925.2 L700.7 925.9 L702.8 924.7 L705.0 924.2 L707.1 925.8 L709.3 921.6 L711.4 925.0 L713.6 924.4 L715.7 923.7 L717.9 924.8 L720.0 922.4 L722.2 925.8 L724.3 924.7 L726.5 922.3 L728.6 925.8 L730.8 925.0 L732.9 924.1 L735.1 924.4 L737.2 923.5 L739.4 925.5 L741.5 923.2 L743.7 922.5 L745.8 922.6 L748.0 925.8 L750.1 923.4 L752.3 926.7 L754.4 925.8 L756.6 922.2 L758.7 924.7 L760.9 926.7 L763.0 924.0 L765.2 923.7 L767.3 925.6 L769.5 926.1 L771.6 925.3 L773.8 923.7 L775.9 925.0 L778.1 925.0 L780.2 922.5 L782.4 925.5 L784.6 924.5 L786.7 925.3 L788.9 923.8 L791.0 922.7 L793.2 925.7 L795.3 924.4 L797.5 925.4 L799.6 925.9 L801.8 925.3 L803.9 925.6 L806.1 925.3 L808.2 926.6 L810.4 925.1 L812.5 923.4 L814.7 926.0 L816.8 925.4 L819.0 925.1 L821.1 924.4 L823.3 926.0 L825.4 917.1 L827.6 920.2 L829.7 919.2 L831.9 925.6 L834.0 925.0 L836.2 925.7 L838.3 925.2 L840.5 926.1 L842.6 922.7 L844.8 926.8 L846.9 925.9 L849.1 925.1 L851.2 922.5 L853.4 926.4 L855.5 925.3 L857.7 927.2 L859.8 924.7 L862.0 924.0 L864.1 923.4 L866.3 921.6 L868.4 923.4 L870.6 923.8 L872.7 923.0 L874.9 920.1 L877.0 923.2 L879.2 926.2 L881.3 926.0 L883.5 925.5 L885.6 925.5 L887.8 925.1 L889.9 925.5 L892.1 925.8 L894.2 924.9 L896.4 925.6 L898.5 925.4 L900.7 923.5 L902.8 925.3 L905.0 925.4 L907.1 921.1 L909.3 923.0" stroke="#F4D598"/><path d="M524.3 920.5 L526.5 924.4 L528.6 912.1 L530.8 924.3 L532.9 916.5 L535.1 924.5 L537.2 924.5 L539.4 926.1 L541.5 924.6 L543.7 924.8 L545.8 924.5 L548.0 923.5 L550.1 918.6 L552.3 922.4 L554.4 924.3 L556.6 926.6 L558.7 925.9 L560.9 924.0 L563.0 923.2 L565.2 924.6 L567.3 923.1 L569.5 924.4 L571.6 924.9 L573.8 925.3 L575.9 924.2 L578.1 925.7 L580.2 924.6 L582.4 925.9 L584.5 925.6 L586.7 925.8 L588.8 924.2 L591.0 923.6 L593.1 925.4 L595.3 925.1 L597.4 921.9 L599.6 924.5 L601.7 926.7 L603.9 925.2 L606.0 925.6 L608.2 925.0 L610.3 919.9 L612.5 923.3 L614.6 925.7 L616.8 924.9 L618.9 925.6 L621.1 925.0 L623.2 924.6 L625.4 925.0 L627.5 925.2 L629.7 925.8 L631.8 923.8 L634.0 924.2 L636.1 922.6 L638.3 925.8 L640.4 924.9 L642.6 923.0 L644.7 926.3 L646.9 924.8 L649.0 926.7 L651.2 923.3 L653.4 924.5 L655.5 922.9 L657.7 923.1 L659.8 924.6 L662.0 925.6 L664.1 924.7 L666.3 923.7 L668.4 920.7 L670.6 923.7 L672.7 925.5 L674.9 920.3 L677.0 923.8 L679.2 924.5 L681.3 925.8 L683.5 918.3 L685.6 923.8 L687.8 923.0 L689.9 919.5 L692.1 924.8 L694.2 924.4 L696.4 925.7 L698.5 925.4 L700.7 925.0 L702.8 925.5 L705.0 925.0 L707.1 922.6 L709.3 924.7 L711.4 923.8 L713.6 922.7 L715.7 923.1 L717.9 925.2 L720.0 922.9 L722.2 924.5 L724.3 924.7 L726.5 919.1 L728.6 924.0 L730.8 920.3 L732.9 925.6 L735.1 916.7 L737.2 924.4 L739.4 916.9 L741.5 922.3 L743.7 925.1 L745.8 922.5 L748.0 920.6 L750.1 926.1 L752.3 924.3 L754.4 925.9 L756.6 919.0 L758.7 925.2 L760.9 924.1 L763.0 920.8 L765.2 925.3 L767.3 924.2 L769.5 924.6 L771.6 925.6 L773.8 924.0 L775.9 922.0 L778.1 925.2 L780.2 923.9 L782.4 924.7 L784.6 924.9 L786.7 925.8 L788.9 925.0 L791.0 925.6 L793.2 924.5 L795.3 918.9 L797.5 924.5 L799.6 922.0 L801.8 924.7 L803.9 922.2 L806.1 923.1 L808.2 924.4 L810.4 924.7 L812.5 915.8 L814.7 923.6 L816.8 923.9 L819.0 925.2 L821.1 924.6 L823.3 924.5 L825.4 924.0 L827.6 924.6 L829.7 924.2 L831.9 926.2 L834.0 925.5 L836.2 923.8 L838.3 926.3 L840.5 923.0 L842.6 924.6 L844.8 924.0 L846.9 922.8 L849.1 924.7 L851.2 925.1 L853.4 924.0 L855.5 923.3 L857.7 923.7 L859.8 925.1 L862.0 925.2 L864.1 925.8 L866.3 925.8 L868.4 925.3 L870.6 924.3 L872.7 923.2 L874.9 924.4 L877.0 926.0 L879.2 921.3 L881.3 925.2 L883.5 925.2 L885.6 922.7 L887.8 924.3 L889.9 920.4 L892.1 925.3 L894.2 924.4 L896.4 925.5 L898.5 918.4 L900.7 917.1 L902.8 922.0 L905.0 924.5 L907.1 923.5 L909.3 926.4" stroke="#B7DBAB"/><path d="M524.3 926.2 L526.5 925.1 L528.6 925.1 L530.8 924.4 L532.9 925.4 L535.1 923.0 L537.2 917.3 L539.4 923.0 L541.5 926.3 L543.7 924.8 L545.8 924.3 L548.0 925.2 L550.1 923.7 L552.3 926.0 L554.4 921.6 L556.6 924.2 L558.7 924.2 L560.9 923.2 L563.0 925.7 L565.2 924.9 L567.3 924.4 L569.5 923.1 L571.6 923.5 L573.8 924.6 L575.9 926.1 L578.1 925.3 L580.2 926.2 L582.4 924.3 L584.5 923.9 L586.7 923.5 L588.8 924.9 L591.0 924.9 L593.1 923.2 L595.3 925.4 L597.4 925.2 L599.6 926.9 L601.7 924.9 L603.9 923.8 L606.0 925.1 L608.2 925.4 L610.3 925.4 L612.5 923.8 L614.6 924.9 L616.8 925.8 L618.9 925.1 L621.1 926.0 L623.2 925.2 L625.4 916.7 L627.5 925.4 L629.7 922.9 L631.8 923.9 L634.0 924.4 L636.1 925.7 L638.3 925.3 L640.4 924.6 L642.6 925.6 L644.7 925.0 L646.9 925.3 L649.0 924.5 L651.2 925.5 L653.4 924.0 L655.5 925.3 L657.7 923.3 L659.8 926.3 L662.0 922.0 L664.1 925.5 L666.3 924.2 L668.4 925.5 L670.6 925.3 L672.7 922.3 L674.9 923.8 L677.0 925.4 L679.2 921.5 L681.3 925.2 L683.5 926.1 L685.6 924.5 L687.8 924.4 L689.9 925.7 L692.1 924.6 L694.2 924.3 L696.4 924.4 L698.5 926.0 L700.7 925.9 L702.8 921.3 L705.0 925.5 L707.1 925.1 L709.3 925.2 L711.4 925.2 L713.6 922.5 L715.7 925.7 L717.9 924.5 L720.0 925.6 L722.2 919.8 L724.3 924.3 L726.5 925.3 L728.6 925.7 L730.8 917.6 L732.9 925.5 L735.1 925.4 L737.2 924.5 L739.4 920.1 L741.5 923.2 L743.7 926.8 L745.8 924.1 L748.0 923.6 L750.1 921.7 L752.3 926.5 L754.4 923.0 L756.6 925.6 L758.7 923.1 L760.9 924.2 L763.0 923.9 L765.2 919.5 L767.3 925.6 L769.5 922.6 L771.6 923.3 L773.8 926.0 L775.9 925.9 L778.1 920.9 L780.2 925.3 L782.4 924.8 L784.6 922.1 L786.7 923.3 L788.9 925.2 L791.0 920.3 L793.2 924.6 L795.3 925.4 L797.5 921.7 L799.6 924.9 L801.8 924.8 L803.9 926.5 L806.1 925.1 L808.2 925.1 L810.4 924.7 L812.5 925.0 L814.7 925.7 L816.8 922.4 L819.0 926.3 L821.1 924.2 L823.3 924.3 L825.4 926.3 L827.6 923.5 L829.7 924.8 L831.9 923.5 L834.0 925.7 L836.2 924.5 L838.3 925.4 L840.5 925.9 L842.6 924.7 L844.8 925.4 L846.9 923.7 L849.1 926.0 L851.2 921.5 L853.4 924.7 L855.5 923.2 L857.7 924.1 L859.8 924.9 L862.0 926.1 L864.1 925.2 L866.3 926.1 L868.4 925.2 L870.6 924.6 L872.7 925.7 L874.9 923.8 L877.0 924.8 L879.2 925.5 L881.3 925.6 L883.5 918.7 L885.6 925.6 L887.8 925.8 L889.9 926.2 L892.1 924.0 L894.2 924.8 L896.4 922.8 L898.5 924.3 L900.7 920.5 L902.8 925.2 L905.0 922.9 L907.1 926.2 L909.3 923.0" stroke="#CCA300"/><path d="M524.3 924.8 L526.5 924.2 L528.6 925.6 L530.8 923.5 L532.9 924.2 L535.1 923.6 L537.2 924.7 L539.4 924.7 L541.5 923.7 L543.7 925.8 L545.8 916.0 L548.0 926.1 L550.1 924.2 L552.3 923.3 L554.4 922.9 L556.6 924.3 L558.7 925.1 L560.9 918.5 L563.0 923.6 L565.2 925.8 L567.3 924.3 L569.5 924.0 L571.6 923.9 L573.8 925.8 L575.9 924.2 L578.1 925.6 L580.2 925.3 L582.4 924.4 L584.5 925.1 L586.7 922.7 L588.8 922.3 L591.0 924.3 L593.1 924.8 L595.3 919.5 L597.4 923.9 L599.6 925.1 L601.7 925.6 L603.9 921.1 L606.0 923.2 L608.2 920.0 L610.3 925.2 L612.5 920.9 L614.6 926.5 L616.8 914.8 L618.9 923.9 L621.1 925.2 L623.2 925.1 L625.4 925.2 L627.5 921.4 L629.7 926.0 L631.8 925.4 L634.0 925.6 L636.1 923.2 L638.3 926.2 L640.4 923.7 L642.6 923.7 L644.7 925.5 L646.9 926.7 L649.0 923.7 L651.2 925.0 L653.4 923.2 L655.5 925.7 L657.7 925.1 L659.8 923.4 L662.0 924.3 L664.1 921.0 L666.3 925.2 L668.4 923.7 L670.6 921.7 L672.7 925.2 L674.9 924.5 L677.0 923.5 L679.2 925.9 L681.3 924.8 L683.5 927.4 L685.6 924.4 L687.8 926.3 L689.9 925.1 L692.1 925.3 L694.2 924.9 L696.4 924.2 L698.5 921.6 L700.7 925.8 L702.8 925.0 L705.0 922.5 L707.1 925.0 L709.3 916.6 L711.4 924.4 L713.6 921.1 L715.7 923.9 L717.9 925.0 L720.0 925.4 L722.2 925.2 L724.3 925.6 L726.5 919.6 L728.6 924.4 L730.8 925.7 L732.9 925.3 L735.1 925.8 L737.2 925.2 L739.4 919.5 L741.5 922.2 L743.7 923.7 L745.8 923.9 L748.0 925.9 L750.1 925.4 L752.3 926.2 L754.4 924.2 L756.6 925.3 L758.7 925.7 L760.9 926.2 L763.0 921.1 L765.2 923.8 L767.3 924.9 L769.5 924.1 L771.6 919.0 L773.8 924.6 L775.9 920.1 L778.1 925.2 L780.2 918.6 L782.4 915.3 L784.6 926.8 L786.7 922.8 L788.9 924.8 L791.0 926.2 L793.2 922.7 L795.3 925.4 L797.5 921.0 L799.6 924.8 L801.8 923.6 L803.9 922.1 L806.1 924.0 L808.2 917.8 L810.4 923.6 L812.5 926.4 L814.7 919.8 L816.8 919.9 L819.0 925.9 L821.1 924.3 L823.3 925.2 L825.4 925.3 L827.6 921.8 L829.7 926.8 L831.9 922.5 L834.0 927.1 L836.2 923.2 L838.3 923.0 L840.5 923.9 L842.6 926.5 L844.8 925.8 L846.9 923.0 L849.1 922.7 L851.2 925.7 L853.4 925.5 L855.5 917.8 L857.7 924.7 L859.8 926.8 L862.0 925.5 L864.1 925.7 L866.3 920.2 L868.4 922.5 L870.6 924.9 L872.7 923.1 L874.9 925.0 L877.0 922.4 L879.2 919.4 L881.3 922.3 L883.5 922.7 L885.6 925.3 L887.8 924.3 L889.9 924.7 L892.1 925.0 L894.2 921.9 L896.4 925.8 L898.5 925.0 L900.7 921.8 L902.8 924.7 L905.0 923.4 L907.1 926.4 L909.3 926.6" stroke="#AEA2E0"/><path d="M524.3 923.2 L526.5 923.6 L528.6 925.6 L530.8 924.8 L532.9 925.5 L535.1 925.7 L537.2 917.4 L539.4 926.4 L541.5 925.9 L543.7 925.0 L545.8 919.8 L548.0 923.8 L550.1 926.6 L552.3 925.3 L554.4 925.4 L556.6 925.7 L558.7 925.6 L560.9 925.4 L563.0 924.3 L565.2 925.3 L567.3 925.6 L569.5 926.0 L571.6 924.8 L573.8 925.7 L575.9 924.5 L578.1 924.5 L580.2 923.7 L582.4 922.9 L584.5 925.3 L586.7 925.3 L588.8 922.7 L591.0 926.4 L593.1 921.4 L595.3 925.1 L597.4 924.9 L599.6 924.3 L601.7 924.4 L603.9 926.1 L606.0 925.6 L608.2 924.1 L610.3 925.1 L612.5 924.4 L614.6 925.4 L616.8 925.6 L618.9 926.4 L621.1 925.0 L623.2 925.6 L625.4 926.5 L627.5 921.9 L629.7 925.7 L631.8 922.0 L634.0 923.8 L636.1 922.9 L638.3 925.6 L640.4 925.7 L642.6 925.9 L644.7 921.1 L646.9 925.0 L649.0 924.5 L651.2 925.3 L653.4 924.2 L655.5 924.3 L657.7 925.7 L659.8 923.4 L662.0 925.9 L664.1 922.1 L666.3 921.6 L668.4 917.4 L670.6 925.7 L672.7 918.4 L674.9 925.9 L677.0 921.9 L679.2 924.6 L681.3 925.8 L683.5 924.0 L685.6 924.2 L687.8 925.8 L689.9 925.2 L692.1 924.2 L694.2 925.3 L696.4 923.1 L698.5 924.8 L700.7 924.4 L702.8 926.3 L705.0 924.2 L707.1 925.4 L709.3 925.3 L711.4 925.7 L713.6 921.7 L715.7 925.7 L717.9 922.1 L720.0 923.5 L722.2 926.0 L724.3 926.5 L726.5 924.1 L728.6 923.2 L730.8 918.2 L732.9 925.9 L735.1 924.7 L737.2 926.2 L739.4 924.8 L741.5 926.0 L743.7 925.1 L745.8 924.6 L748.0 919.0 L750.1 925.8 L752.3 924.1 L754.4 925.7 L756.6 925.2 L758.7 920.6 L760.9 925.8 L763.0 916.5 L765.2 925.0 L767.3 924.8 L769.5 925.1 L771.6 919.7 L773.8 921.1 L775.9 925.7 L778.1 923.8 L780.2 924.0 L782.4 925.0 L784.6 917.5 L786.7 927.0 L788.9 924.7 L791.0 924.8 L793.2 917.6 L795.3 924.5 L797.5 924.4 L799.6 926.2 L801.8 922.9 L803.9 925.8 L806.1 925.5 L808.2 924.7 L810.4 923.7 L812.5 924.2 L814.7 924.2 L816.8 925.7 L819.0 924.2 L821.1 925.4 L823.3 926.3 L825.4 926.0 L827.6 922.8 L829.7 922.1 L831.9 926.6 L834.0 923.7 L836.2 925.6 L838.3 925.6 L840.5 923.5 L842.6 926.0 L844.8 925.1 L846.9 925.0 L849.1 925.4 L851.2 925.0 L853.4 924.6 L855.5 923.3 L857.7 924.3 L859.8 925.0 L862.0 917.2 L864.1 924.1 L866.3 925.8 L868.4 925.4 L870.6 922.6 L872.7 925.9 L874.9 925.2 L877.0 925.4 L879.2 925.6 L881.3 926.2 L883.5 925.8 L885.6 925.1 L887.8 925.2 L889.9 925.2 L892.1 920.9 L894.2 925.2 L896.4 925.2 L898.5 925.5 L900.7 923.9 L902.8 925.4 L905.0 924.0 L907.1 926.4 L909.3 922.5" stroke="#F9BA8F"/><path d="M524.3 925.0 L526.5 924.7 L528.6 925.8 L530.8 916.6 L532.9 925.8 L535.1 919.4 L537.2 920.6 L539.4 923.7 L541.5 927.1 L543.7 924.5 L545.8 926.2 L548.0 925.0 L550.1 915.2 L552.3 923.9 L554.4 924.9 L556.6 925.5 L558.7 925.6 L560.9 925.2 L563.0 925.9 L565.2 922.9 L567.3 926.0 L569.5 925.3 L571.6 924.7 L573.8 926.6 L575.9 924.6 L578.1 923.8 L580.2 926.0 L582.4 924.6 L584.5 925.0 L586.7 923.7 L588.8 923.5 L591.0 919.7 L593.1 924.4 L595.3 924.6 L597.4 923.1 L599.6 923.8 L601.7 922.9 L603.9 925.7 L606.0 926.2 L608.2 923.0 L610.3 924.6 L612.5 923.4 L614.6 924.3 L616.8 923.2 L618.9 922.5 L621.1 925.7 L623.2 919.0 L625.4 924.8 L627.5 925.1 L629.7 925.0 L631.8 925.4 L634.0 924.7 L636.1 926.7 L638.3 924.4 L640.4 924.3 L642.6 920.5 L644.7 922.1 L646.9 926.1 L649.0 926.9 L651.2 924.6 L653.4 925.6 L655.5 924.9 L657.7 923.2 L659.8 925.0 L662.0 924.8 L664.1 923.6 L666.3 924.4 L668.4 922.5 L670.6 923.8 L672.7 925.2 L674.9 924.8 L677.0 926.7 L679.2 923.5 L681.3 925.9 L683.5 921.1 L685.6 924.4 L687.8 925.5 L689.9 925.3 L692.1 923.6 L694.2 924.9 L696.4 924.2 L698.5 918.0 L700.7 926.3 L702.8 926.2 L705.0 922.3 L707.1 925.8 L709.3 925.0 L711.4 925.2 L713.6 920.7 L715.7 918.8 L717.9 924.9 L720.0 924.6 L722.2 926.1 L724.3 922.6 L726.5 926.1 L728.6 923.0 L730.8 925.4 L732.9 925.4 L735.1 917.3 L737.2 925.5 L739.4 922.3 L741.5 923.4 L743.7 925.6 L745.8 924.8 L748.0 925.0 L750.1 924.9 L752.3 923.8 L754.4 925.2 L756.6 925.9 L758.7 925.6 L760.9 923.5 L763.0 925.1 L765.2 924.8 L767.3 926.0 L769.5 925.3 L771.6 927.8 L773.8 925.8 L775.9 923.8 L778.1 925.6 L780.2 925.6 L782.4 924.8 L784.6 922.5 L786.7 923.4 L788.9 920.4 L791.0 924.9 L793.2 926.4 L795.3 926.2 L797.5 922.4 L799.6 925.7 L801.8 924.4 L803.9 924.8 L806.1 924.9 L808.2 925.3 L810.4 921.2 L812.5 925.6 L814.7 925.8 L816.8 922.2 L819.0 916.3 L821.1 923.7 L823.3 923.0 L825.4 918.6 L827.6 926.6 L829.7 919.4 L831.9 913.3 L834.0 925.8 L836.2 924.6 L838.3 923.7 L840.5 919.8 L842.6 926.3 L844.8 921.4 L846.9 926.6 L849.1 925.1 L851.2 926.3 L853.4 922.8 L855.5 926.7 L857.7 926.3 L859.8 923.3 L862.0 924.2 L864.1 925.1 L866.3 923.4 L868.4 926.7 L870.6 923.9 L872.7 926.3 L874.9 927.3 L877.0 925.6 L879.2 925.6 L881.3 924.8 L883.5 924.3 L885.6 924.1 L887.8 923.3 L889.9 925.5 L892.1 925.1 L894.2 922.3 L896.4 926.1 L898.5 925.7 L900.7 921.9 L902.8 926.8 L905.0 925.2 L907.1 925.6 L909.3 924.8" stroke="#8AB8FF"/><path d="M524.3 923.8 L526.5 923.2 L528.6 923.4 L530.8 920.6 L532.9 926.1 L535.1 927.2 L537.2 924.7 L539.4 922.7 L541.5 925.7 L543.7 920.6 L545.8 921.8 L548.0 926.5 L550.1 923.3 L552.3 925.2 L554.4 924.3 L556.6 922.3 L558.7 925.9 L560.9 921.0 L563.0 926.2 L565.2 925.9 L567.3 924.4 L569.5 925.3 L571.6 925.5 L573.8 925.2 L575.9 926.8 L578.1 926.0 L580.2 923.7 L582.4 921.7 L584.5 925.9 L586.7 917.3 L588.8 925.4 L591.0 925.1 L593.1 925.9 L595.3 923.8 L597.4 914.9 L599.6 925.5 L601.7 926.5 L603.9 924.6 L606.0 925.3 L608.2 923.0 L610.3 924.8 L612.5 924.2 L614.6 926.3 L616.8 926.0 L618.9 924.8 L621.1 924.2 L623.2 926.5 L625.4 922.0 L627.5 923.0 L629.7 923.4 L631.8 925.2 L634.0 920.9 L636.1 922.0 L638.3 927.2 L640.4 919.5 L642.6 925.5 L644.7 924.9 L646.9 924.6 L649.0 917.5 L651.2 917.9 L653.4 925.2 L655.5 923.3 L657.7 925.8 L659.8 924.1 L662.0 925.0 L664.1 925.2 L666.3 925.6 L668.4 926.7 L670.6 924.4 L672.7 924.5 L674.9 924.9 L677.0 925.4 L679.2 925.3 L681.3 925.6 L683.5 925.8 L685.6 924.9 L687.8 923.0 L689.9 923.1 L692.1 923.8 L694.2 926.5 L696.4 924.1 L698.5 925.0 L700.7 918.6 L702.8 924.6 L705.0 924.9 L707.1 924.2 L709.3 926.3 L711.4 918.5 L713.6 923.1 L715.7 927.2 L717.9 925.3 L720.0 922.2 L722.2 926.6 L724.3 925.5 L726.5 926.2 L728.6 924.4 L730.8 927.2 L732.9 917.0 L735.1 922.6 L737.2 918.2 L739.4 925.2 L741.5 925.4 L743.7 926.0 L745.8 925.9 L748.0 926.5 L750.1 924.8 L752.3 924.7 L754.4 925.8 L756.6 920.4 L758.7 923.7 L760.9 926.2 L763.0 926.1 L765.2 924.0 L767.3 923.4 L769.5 926.5 L771.6 924.6 L773.8 925.7 L775.9 925.6 L778.1 919.7 L780.2 926.4 L782.4 921.8 L784.6 922.4 L786.7 924.2 L788.9 924.4 L791.0 925.2 L793.2 925.7 L795.3 926.8 L797.5 925.8 L799.6 925.6 L801.8 923.4 L803.9 926.5 L806.1 925.5 L808.2 917.4 L810.4 926.0 L812.5 925.6 L814.7 925.7 L816.8 924.6 L819.0 925.1 L821.1 926.9 L823.3 925.8 L825.4 923.6 L827.6 924.4 L829.7 925.7 L831.9 925.9 L834.0 926.3 L836.2 921.4 L838.3 926.1 L840.5 927.6 L842.6 923.8 L844.8 922.7 L846.9 924.9 L849.1 925.2 L851.2 924.6 L853.4 925.4 L855.5 924.9 L857.7 926.2 L859.8 923.6 L862.0 924.9 L864.1 925.7 L866.3 919.8 L868.4 926.1 L870.6 924.1 L872.7 925.7 L874.9 920.9 L877.0 926.8 L879.2 926.3 L881.3 926.5 L883.5 924.8 L885.6 925.1 L887.8 925.3 L889.9 923.5 L892.1 926.1 L894.2 923.1 L896.4 924.9 L898.5 924.3 L900.7 924.8 L902.8 924.5 L905.0 925.5 L907.1 923.0 L909.3 924.8" stroke="#73D2F0"/><path d="M524.3 924.1 L526.5 925.5 L528.6 924.7 L530.8 924.3 L532.9 924.9 L535.1 922.6 L537.2 925.7 L539.4 925.0 L541.5 912.5 L543.7 924.7 L545.8 924.8 L548.0 922.3 L550.1 925.2 L552.3 925.3 L554.4 924.3 L556.6 924.3 L558.7 925.9 L560.9 924.4 L563.0 924.8 L565.2 924.0 L567.3 923.6 L569.5 925.0 L571.6 924.5 L573.8 926.4 L575.9 923.6 L578.1 925.6 L580.2 922.7 L582.4 925.0 L584.5 923.1 L586.7 925.4 L588.8 925.4 L591.0 926.4 L593.1 924.4 L595.3 920.2 L597.4 921.9 L599.6 914.4 L601.7 925.2 L603.9 925.5 L606.0 926.1 L608.2 925.3 L610.3 924.6 L612.5 922.9 L614.6 921.7 L616.8 916.0 L618.9 925.8 L621.1 926.8 L623.2 920.4 L625.4 923.1 L627.5 923.8 L629.7 926.0 L631.8 925.6 L634.0 917.0 L636.1 924.4 L638.3 924.9 L640.4 925.0 L642.6 926.3 L644.7 923.1 L646.9 923.8 L649.0 920.8 L651.2 922.6 L653.4 926.5 L655.5 924.7 L657.7 925.7 L659.8 925.2 L662.0 925.3 L664.1 925.8 L666.3 924.7 L668.4 925.4 L670.6 922.5 L672.7 924.4 L674.9 925.1 L677.0 925.6 L679.2 923.6 L681.3 926.1 L683.5 924.9 L685.6 925.0 L687.8 925.6 L689.9 925.7 L692.1 925.9 L694.2 924.8 L696.4 924.3 L698.5 924.7 L700.7 924.9 L702.8 926.7 L705.0 924.2 L707.1 926.3 L709.3 922.1 L711.4 926.0 L713.6 923.5 L715.7 925.1 L717.9 915.8 L720.0 925.4 L722.2 925.8 L724.3 924.8 L726.5 925.3 L728.6 921.5 L730.8 918.8 L732.9 924.1 L735.1 924.3 L737.2 923.0 L739.4 923.7 L741.5 925.2 L743.7 926.1 L745.8 926.0 L748.0 918.4 L750.1 925.2 L752.3 926.6 L754.4 925.1 L756.6 922.2 L758.7 926.0 L760.9 925.6 L763.0 923.8 L765.2 925.4 L767.3 923.6 L769.5 924.0 L771.6 926.0 L773.8 925.6 L775.9 925.2 L778.1 926.5 L780.2 922.8 L782.4 921.2 L784.6 923.9 L786.7 919.9 L788.9 924.0 L791.0 924.6 L793.2 924.4 L795.3 925.4 L797.5 926.0 L799.6 925.8 L801.8 924.8 L803.9 922.7 L806.1 918.6 L808.2 919.9 L810.4 926.3 L812.5 924.7 L814.7 926.4 L816.8 925.8 L819.0 926.1 L821.1 924.6 L823.3 922.9 L825.4 927.6 L827.6 923.4 L829.7 923.4 L831.9 926.4 L834.0 924.8 L836.2 924.6 L838.3 926.4 L840.5 922.9 L842.6 926.4 L844.8 926.1 L846.9 924.1 L849.1 925.5 L851.2 925.9 L853.4 926.1 L855.5 920.7 L857.7 925.1 L859.8 925.8 L862.0 923.5 L864.1 925.8 L866.3 921.2 L868.4 925.4 L870.6 924.1 L872.7 923.2 L874.9 926.0 L877.0 924.7 L879.2 924.8 L881.3 917.9 L883.5 925.7 L885.6 923.4 L887.8 924.8 L889.9 925.9 L892.1 924.8 L894.2 924.7 L896.4 925.1 L898.5 927.0 L900.7 926.2 L902.8 917.7 L905.0 918.5 L907.1 925.7 L909.3 923.3" stroke="#E0B400"/><path d="M524.3 926.1 L526.5 926.7 L528.6 924.4 L530.8 924.6 L532.9 925.7 L535.1 925.0 L537.2 919.8 L539.4 924.0 L541.5 926.8 L543.7 923.2 L545.8 924.7 L548.0 923.3 L550.1 923.7 L552.3 926.7 L554.4 924.5 L556.6 925.7 L558.7 923.5 L560.9 924.7 L563.0 924.9 L565.2 917.0 L567.3 915.9 L569.5 925.9 L571.6 923.8 L573.8 924.6 L575.9 924.2 L578.1 924.6 L580.2 923.3 L582.4 926.2 L584.5 922.4 L586.7 924.2 L588.8 925.6 L591.0 924.4 L593.1 926.2 L595.3 925.6 L597.4 925.6 L599.6 924.5 L601.7 924.1 L603.9 925.3 L606.0 924.4 L608.2 924.9 L610.3 924.9 L612.5 925.9 L614.6 926.3 L616.8 923.0 L618.9 924.7 L621.1 925.4 L623.2 925.2 L625.4 925.4 L627.5 925.9 L629.7 924.3 L631.8 924.8 L634.0 921.3 L636.1 918.7 L638.3 917.1 L640.4 924.1 L642.6 924.9 L644.7 923.7 L646.9 926.3 L649.0 924.5 L651.2 925.3 L653.4 923.5 L655.5 925.8 L657.7 924.1 L659.8 922.3 L662.0 924.0 L664.1 926.5 L666.3 925.0 L668.4 924.3 L670.6 918.8 L672.7 926.0 L674.9 925.9 L677.0 924.7 L679.2 926.0 L681.3 925.1 L683.5 925.7 L685.6 922.9 L687.8 921.1 L689.9 924.8 L692.1 921.5 L694.2 926.6 L696.4 924.5 L698.5 924.1 L700.7 919.9 L702.8 925.0 L705.0 923.4 L707.1 923.0 L709.3 924.2 L711.4 917.5 L713.6 921.0 L715.7 925.8 L717.9 926.0 L720.0 924.5 L722.2 922.5 L724.3 926.0 L726.5 917.3 L728.6 926.1 L730.8 923.9 L732.9 923.7 L735.1 924.3 L737.2 925.3 L739.4 924.0 L741.5 924.2 L743.7 926.8 L745.8 925.4 L748.0 924.2 L750.1 922.5 L752.3 917.7 L754.4 924.7 L756.6 923.4 L758.7 924.0 L760.9 924.4 L763.0 925.9 L765.2 918.0 L767.3 925.0 L769.5 926.9 L771.6 926.9 L773.8 924.8 L775.9 925.0 L778.1 925.8 L780.2 916.9 L782.4 924.4 L784.6 925.7 L786.7 924.1 L788.9 920.6 L791.0 925.3 L793.2 923.5 L795.3 926.1 L797.5 924.4 L799.6 924.2 L801.8 921.9 L803.9 924.9 L806.1 919.3 L808.2 924.1 L810.4 925.2 L812.5 921.1 L814.7 925.9 L816.8 924.0 L819.0 925.9 L821.1 923.8 L823.3 923.0 L825.4 924.9 L827.6 921.0 L829.7 924.6 L831.9 920.7 L834.0 926.4 L836.2 926.2 L838.3 925.9 L840.5 921.3 L842.6 924.9 L844.8 924.7 L846.9 923.2 L849.1 923.7 L851.2 924.6 L853.4 924.4 L855.5 924.7 L857.7 925.7 L859.8 924.5 L862.0 920.9 L864.1 923.7 L866.3 918.0 L868.4 923.7 L870.6 925.4 L872.7 924.0 L874.9 924.5 L877.0 923.1 L879.2 925.2 L881.3 923.9 L883.5 925.8 L885.6 923.6 L887.8 925.8 L889.9 925.0 L892.1 924.7 L894.2 917.9 L896.4 924.8 L898.5 924.7 L900.7 925.0 L902.8 919.7 L905.0 919.8 L907.1 925.0 L909.3 925.8" stroke="#FFB357"/><path d="M524.3 924.6 L526.5 924.4 L528.6 926.7 L530.8 924.8 L532.9 922.7 L535.1 921.9 L537.2 926.7 L539.4 924.0 L541.5 925.6 L543.7 925.9 L545.8 923.7 L548.0 919.1 L550.1 924.5 L552.3 926.4 L554.4 926.8 L556.6 925.9 L558.7 917.9 L560.9 924.9 L563.0 925.2 L565.2 925.6 L567.3 923.9 L569.5 926.1 L571.6 925.3 L573.8 926.2 L575.9 920.7 L578.1 918.0 L580.2 926.0 L582.4 924.0 L584.5 923.7 L586.7 925.0 L588.8 923.8 L591.0 923.3 L593.1 925.9 L595.3 924.4 L597.4 926.1 L599.6 923.2 L601.7 925.6 L603.9 925.3 L606.0 924.7 L608.2 924.9 L610.3 926.0 L612.5 924.8 L614.6 926.0 L616.8 925.0 L618.9 924.3 L621.1 921.8 L623.2 924.0 L625.4 914.8 L627.5 925.6 L629.7 923.3 L631.8 918.7 L634.0 921.2 L636.1 924.3 L638.3 925.7 L640.4 923.4 L642.6 925.7 L644.7 926.5 L646.9 924.7 L649.0 925.4 L651.2 920.0 L653.4 925.2 L655.5 926.2 L657.7 925.2 L659.8 925.6 L662.0 920.9 L664.1 924.8 L666.3 923.0 L668.4 926.9 L670.6 924.9 L672.7 925.4 L674.9 925.5 L677.0 925.9 L679.2 925.3 L681.3 924.9 L683.5 920.5 L685.6 921.8 L687.8 924.6 L689.9 924.7 L692.1 921.6 L694.2 926.0 L696.4 925.5 L698.5 925.6 L700.7 925.2 L702.8 925.2 L705.0 925.6 L707.1 924.5 L709.3 915.1 L711.4 905.3 L713.6 913.8 L715.7 922.3 L717.9 925.3 L720.0 924.4 L722.2 925.3 L724.3 923.0 L726.5 925.8 L728.6 926.3 L730.8 924.4 L732.9 925.3 L735.1 917.6 L737.2 926.0 L739.4 924.7 L741.5 925.0 L743.7 926.0 L745.8 923.3 L748.0 925.7 L750.1 925.4 L752.3 924.4 L754.4 926.7 L756.6 924.5 L758.7 924.2 L760.9 925.1 L763.0 920.0 L765.2 922.3 L767.3 925.6 L769.5 922.7 L771.6 926.5 L773.8 926.5 L775.9 925.0 L778.1 922.9 L780.2 924.9 L782.4 926.3 L784.6 924.7 L786.7 923.3 L788.9 923.6 L791.0 924.2 L793.2 922.3 L795.3 925.3 L797.5 921.9 L799.6 916.3 L801.8 925.7 L803.9 926.3 L806.1 925.6 L808.2 926.0 L810.4 924.6 L812.5 925.0 L814.7 925.3 L816.8 925.8 L819.0 924.0 L821.1 925.1 L823.3 914.5 L825.4 925.5 L827.6 923.4 L829.7 926.3 L831.9 922.7 L834.0 924.6 L836.2 924.9 L838.3 924.1 L840.5 926.3 L842.6 924.9 L844.8 923.8 L846.9 925.2 L849.1 926.4 L851.2 924.4 L853.4 924.3 L855.5 925.4 L857.7 925.7 L859.8 922.3 L862.0 924.7 L864.1 926.3 L866.3 924.3 L868.4 925.1 L870.6 924.9 L872.7 919.0 L874.9 924.9 L877.0 919.4 L879.2 925.8 L881.3 924.4 L883.5 922.8 L885.6 922.9 L887.8 924.0 L889.9 924.2 L892.1 925.6 L894.2 921.5 L896.4 922.6 L898.5 923.4 L900.7 926.0 L902.8 916.5 L905.0 925.4 L907.1 926.0 L909.3 925.0" stroke="#6ED0E0"/><line x1="524.3" y1="841.30" x2="909.3" y2="841.30" stroke="#DE2640" stroke-width="1" stroke-dasharray="10 10" stroke-dashoffset="1"/><line x1="524.3" y1="889.30" x2="909.3" y2="889.30" stroke="#FDB600" stroke-width="1" stroke-dasharray="10 10" stroke-dashoffset="1"/></g><rect x="982.7" y="936.80" width="384.60" height="1" fill="#e5e6e7"/><rect x="982.7" y="887.30" width="384.60" height="1" fill="#e5e6e7"/><rect x="982.7" y="837.80" width="384.60" height="1" fill="#e5e6e7"/><rect x="1000.58" y="832" width="1" height="109.30" fill="#e5e6e7"/><rect x="1064.68" y="832" width="1" height="109.30" fill="#e5e6e7"/><rect x="1128.78" y="832" width="1" height="109.30" fill="#e5e6e7"/><rect x="1192.88" y="832" width="1" height="109.30" fill="#e5e6e7"/><rect x="1256.98" y="832" width="1" height="109.30" fill="#e5e6e7"/><rect x="1321.08" y="832" width="1" height="109.30" fill="#e5e6e7"/><clipPath id="c982_937"><rect x="982.7" y="812" width="384.60" height="145.29999999999995"/></clipPath><g clip-path="url(#c982_937)" fill="none" stroke-width="1" stroke-linejoin="round"><path d="M982.7 904.3 L984.8 904.4 L987.0 900.9 L989.1 910.3 L991.3 897.5 L993.4 907.9 L995.6 893.7 L997.7 902.5 L999.9 900.4 L1002.0 898.3 L1004.2 896.1 L1006.3 898.7 L1008.5 900.0 L1010.6 900.6 L1012.8 892.6 L1014.9 896.4 L1017.1 894.2 L1019.2 885.6 L1021.4 903.3 L1023.5 905.9 L1025.7 908.0 L1027.8 896.8 L1030.0 895.4 L1032.1 904.5 L1034.3 905.6 L1036.4 906.1 L1038.6 902.1 L1040.7 901.2 L1042.9 903.5 L1045.0 890.3 L1047.2 902.0 L1049.3 904.2 L1051.5 903.5 L1053.6 907.9 L1055.8 906.4 L1057.9 901.8 L1060.0 903.7 L1062.2 905.9 L1064.3 880.3 L1066.5 897.4 L1068.6 901.6 L1070.8 897.5 L1072.9 840.8 L1075.1 899.4 L1077.2 892.3 L1079.4 890.2 L1081.5 905.7 L1083.7 894.7 L1085.8 910.1 L1088.0 900.8 L1090.1 902.4 L1092.3 894.1 L1094.4 902.4 L1096.6 898.0 L1098.7 904.8 L1100.9 890.2 L1103.0 906.7 L1105.2 896.0 L1107.3 899.9 L1109.5 897.8 L1111.6 890.4 L1113.8 899.2 L1115.9 903.5 L1118.1 892.6 L1120.2 899.1 L1122.4 906.5 L1124.5 897.9 L1126.7 891.9 L1128.8 891.0 L1131.0 894.2 L1133.1 900.5 L1135.3 908.9 L1137.4 904.2 L1139.5 899.4 L1141.7 904.6 L1143.8 899.1 L1146.0 908.0 L1148.1 899.4 L1150.3 873.2 L1152.4 903.6 L1154.6 903.3 L1156.7 899.7 L1158.9 897.9 L1161.0 903.6 L1163.2 881.8 L1165.3 897.4 L1167.5 901.7 L1169.6 907.8 L1171.8 892.0 L1173.9 894.0 L1176.1 888.7 L1178.2 902.2 L1180.4 894.0 L1182.5 904.4 L1184.7 900.3 L1186.8 892.2 L1189.0 906.7 L1191.1 904.9 L1193.3 909.8 L1195.4 901.7 L1197.6 895.7 L1199.7 895.7 L1201.9 899.7 L1204.0 907.8 L1206.2 903.9 L1208.3 889.9 L1210.5 908.0 L1212.6 899.8 L1214.7 905.1 L1216.9 903.6 L1219.0 892.2 L1221.2 905.3 L1223.3 901.6 L1225.5 904.5 L1227.6 909.5 L1229.8 900.8 L1231.9 910.9 L1234.1 900.5 L1236.2 899.0 L1238.4 899.1 L1240.5 902.2 L1242.7 892.5 L1244.8 909.6 L1247.0 879.8 L1249.1 905.4 L1251.3 907.3 L1253.4 903.7 L1255.6 908.2 L1257.7 902.2 L1259.9 906.4 L1262.0 905.6 L1264.2 906.4 L1266.3 907.7 L1268.5 909.9 L1270.6 883.2 L1272.8 901.0 L1274.9 902.9 L1277.1 897.2 L1279.2 907.0 L1281.4 903.1 L1283.5 903.8 L1285.7 894.6 L1287.8 905.6 L1290.0 904.6 L1292.1 906.0 L1294.2 903.9 L1296.4 906.0 L1298.5 891.4 L1300.7 903.7 L1302.8 903.8 L1305.0 898.2 L1307.1 903.8 L1309.3 914.0 L1311.4 900.8 L1313.6 904.3 L1315.7 906.2 L1317.9 904.4 L1320.0 900.7 L1322.2 899.6 L1324.3 903.1 L1326.5 909.9 L1328.6 904.0 L1330.8 896.5 L1332.9 889.7 L1335.1 907.4 L1337.2 900.6 L1339.4 892.1 L1341.5 909.1 L1343.7 903.0 L1345.8 908.7 L1348.0 899.6 L1350.1 899.3 L1352.3 904.1 L1354.4 904.2 L1356.6 904.0 L1358.7 910.4 L1360.9 904.4 L1363.0 890.6 L1365.2 883.3 L1367.3 903.3" stroke="#56A64B"/><path d="M982.7 900.4 L984.8 888.3 L987.0 897.8 L989.1 908.1 L991.3 908.9 L993.4 896.2 L995.6 902.2 L997.7 901.5 L999.9 907.9 L1002.0 897.9 L1004.2 898.0 L1006.3 906.2 L1008.5 895.3 L1010.6 894.6 L1012.8 907.2 L1014.9 914.4 L1017.1 904.3 L1019.2 901.5 L1021.4 900.2 L1023.5 894.0 L1025.7 904.8 L1027.8 898.2 L1030.0 910.7 L1032.1 901.4 L1034.3 902.5 L1036.4 898.6 L1038.6 897.4 L1040.7 908.4 L1042.9 897.9 L1045.0 905.1 L1047.2 901.8 L1049.3 896.8 L1051.5 901.0 L1053.6 902.1 L1055.8 894.3 L1057.9 899.3 L1060.0 901.4 L1062.2 900.6 L1064.3 891.1 L1066.5 900.4 L1068.6 899.0 L1070.8 893.8 L1072.9 908.4 L1075.1 899.0 L1077.2 899.3 L1079.4 899.6 L1081.5 905.0 L1083.7 897.8 L1085.8 897.9 L1088.0 904.4 L1090.1 900.6 L1092.3 901.7 L1094.4 896.0 L1096.6 902.2 L1098.7 865.5 L1100.9 887.9 L1103.0 897.4 L1105.2 912.0 L1107.3 898.9 L1109.5 901.4 L1111.6 905.4 L1113.8 904.3 L1115.9 902.1 L1118.1 901.6 L1120.2 911.9 L1122.4 901.5 L1124.5 904.2 L1126.7 899.6 L1128.8 903.0 L1131.0 908.1 L1133.1 898.9 L1135.3 882.5 L1137.4 908.3 L1139.5 905.7 L1141.7 905.4 L1143.8 906.2 L1146.0 904.8 L1148.1 900.6 L1150.3 903.4 L1152.4 907.3 L1154.6 897.9 L1156.7 911.0 L1158.9 875.4 L1161.0 908.8 L1163.2 895.5 L1165.3 908.3 L1167.5 906.5 L1169.6 906.7 L1171.8 898.6 L1173.9 904.8 L1176.1 903.7 L1178.2 902.1 L1180.4 889.0 L1182.5 865.5 L1184.7 908.6 L1186.8 901.0 L1189.0 903.2 L1191.1 883.7 L1193.3 898.2 L1195.4 907.1 L1197.6 904.9 L1199.7 903.3 L1201.9 895.5 L1204.0 905.4 L1206.2 888.2 L1208.3 899.6 L1210.5 905.5 L1212.6 911.1 L1214.7 892.3 L1216.9 907.6 L1219.0 908.3 L1221.2 903.8 L1223.3 892.5 L1225.5 906.0 L1227.6 906.4 L1229.8 883.4 L1231.9 899.3 L1234.1 901.4 L1236.2 905.6 L1238.4 906.8 L1240.5 907.3 L1242.7 905.4 L1244.8 912.9 L1247.0 905.9 L1249.1 906.0 L1251.3 905.5 L1253.4 901.8 L1255.6 901.6 L1257.7 908.5 L1259.9 903.9 L1262.0 900.2 L1264.2 906.8 L1266.3 905.9 L1268.5 903.9 L1270.6 903.1 L1272.8 898.4 L1274.9 905.8 L1277.1 902.3 L1279.2 909.1 L1281.4 897.9 L1283.5 901.1 L1285.7 903.3 L1287.8 906.2 L1290.0 903.9 L1292.1 908.5 L1294.2 907.6 L1296.4 904.5 L1298.5 906.8 L1300.7 901.9 L1302.8 904.3 L1305.0 908.0 L1307.1 901.4 L1309.3 903.2 L1311.4 894.8 L1313.6 905.5 L1315.7 909.3 L1317.9 897.6 L1320.0 908.6 L1322.2 900.4 L1324.3 907.7 L1326.5 892.9 L1328.6 907.0 L1330.8 906.9 L1332.9 893.3 L1335.1 897.3 L1337.2 904.9 L1339.4 896.7 L1341.5 890.3 L1343.7 903.5 L1345.8 906.4 L1348.0 904.5 L1350.1 907.9 L1352.3 906.3 L1354.4 894.7 L1356.6 910.0 L1358.7 896.6 L1360.9 904.4 L1363.0 906.3 L1365.2 899.9 L1367.3 879.1" stroke="#E0B400"/><path d="M982.7 904.9 L984.8 909.8 L987.0 911.1 L989.1 885.3 L991.3 889.7 L993.4 909.9 L995.6 889.6 L997.7 909.7 L999.9 905.5 L1002.0 901.7 L1004.2 896.8 L1006.3 908.2 L1008.5 899.4 L1010.6 903.1 L1012.8 896.3 L1014.9 906.2 L1017.1 896.5 L1019.2 897.9 L1021.4 904.0 L1023.5 901.4 L1025.7 901.9 L1027.8 907.4 L1030.0 889.9 L1032.1 897.5 L1034.3 906.3 L1036.4 899.3 L1038.6 903.3 L1040.7 900.2 L1042.9 911.6 L1045.0 887.3 L1047.2 910.5 L1049.3 896.8 L1051.5 907.7 L1053.6 900.7 L1055.8 899.4 L1057.9 907.6 L1060.0 904.9 L1062.2 902.7 L1064.3 906.2 L1066.5 903.1 L1068.6 903.4 L1070.8 897.1 L1072.9 898.0 L1075.1 896.4 L1077.2 903.0 L1079.4 904.1 L1081.5 905.9 L1083.7 900.7 L1085.8 905.3 L1088.0 909.8 L1090.1 898.3 L1092.3 892.7 L1094.4 905.7 L1096.6 901.0 L1098.7 903.4 L1100.9 900.8 L1103.0 907.9 L1105.2 904.3 L1107.3 902.8 L1109.5 905.2 L1111.6 897.6 L1113.8 893.2 L1115.9 901.0 L1118.1 905.9 L1120.2 909.0 L1122.4 890.1 L1124.5 906.7 L1126.7 900.8 L1128.8 906.1 L1131.0 899.9 L1133.1 884.7 L1135.3 901.6 L1137.4 905.1 L1139.5 898.3 L1141.7 908.6 L1143.8 900.0 L1146.0 906.4 L1148.1 901.6 L1150.3 903.6 L1152.4 899.8 L1154.6 909.0 L1156.7 909.7 L1158.9 901.9 L1161.0 912.2 L1163.2 900.2 L1165.3 911.7 L1167.5 903.7 L1169.6 901.4 L1171.8 904.7 L1173.9 909.9 L1176.1 902.9 L1178.2 902.7 L1180.4 906.5 L1182.5 902.8 L1184.7 904.0 L1186.8 909.9 L1189.0 897.9 L1191.1 909.7 L1193.3 898.2 L1195.4 902.3 L1197.6 903.7 L1199.7 901.5 L1201.9 908.3 L1204.0 904.6 L1206.2 896.2 L1208.3 903.5 L1210.5 888.9 L1212.6 896.9 L1214.7 904.1 L1216.9 905.1 L1219.0 901.0 L1221.2 882.1 L1223.3 903.0 L1225.5 903.0 L1227.6 881.8 L1229.8 885.9 L1231.9 910.1 L1234.1 897.3 L1236.2 906.8 L1238.4 906.3 L1240.5 889.3 L1242.7 903.9 L1244.8 889.9 L1247.0 900.8 L1249.1 905.9 L1251.3 898.3 L1253.4 899.7 L1255.6 903.4 L1257.7 896.1 L1259.9 890.3 L1262.0 907.1 L1264.2 886.7 L1266.3 895.8 L1268.5 898.5 L1270.6 906.0 L1272.8 890.2 L1274.9 907.2 L1277.1 907.1 L1279.2 909.4 L1281.4 906.4 L1283.5 898.0 L1285.7 896.3 L1287.8 910.8 L1290.0 898.7 L1292.1 905.4 L1294.2 897.3 L1296.4 901.8 L1298.5 911.9 L1300.7 895.3 L1302.8 907.1 L1305.0 906.1 L1307.1 906.3 L1309.3 900.0 L1311.4 901.5 L1313.6 907.9 L1315.7 902.9 L1317.9 906.7 L1320.0 903.4 L1322.2 903.4 L1324.3 905.9 L1326.5 906.1 L1328.6 908.9 L1330.8 899.2 L1332.9 901.9 L1335.1 884.4 L1337.2 904.2 L1339.4 889.2 L1341.5 903.1 L1343.7 894.3 L1345.8 903.8 L1348.0 896.5 L1350.1 903.5 L1352.3 905.8 L1354.4 905.5 L1356.6 909.6 L1358.7 905.5 L1360.9 905.0 L1363.0 906.4 L1365.2 902.4 L1367.3 898.2" stroke="#5794F2"/><path d="M982.7 908.9 L984.8 894.8 L987.0 911.0 L989.1 890.5 L991.3 909.6 L993.4 904.1 L995.6 900.1 L997.7 908.2 L999.9 900.8 L1002.0 901.0 L1004.2 887.0 L1006.3 897.4 L1008.5 897.2 L1010.6 898.9 L1012.8 907.1 L1014.9 903.4 L1017.1 907.4 L1019.2 901.4 L1021.4 895.3 L1023.5 903.6 L1025.7 898.5 L1027.8 880.3 L1030.0 903.9 L1032.1 902.4 L1034.3 910.9 L1036.4 906.9 L1038.6 905.1 L1040.7 899.4 L1042.9 901.5 L1045.0 901.1 L1047.2 901.8 L1049.3 902.2 L1051.5 893.2 L1053.6 884.4 L1055.8 904.0 L1057.9 900.8 L1060.0 899.2 L1062.2 907.3 L1064.3 899.2 L1066.5 895.8 L1068.6 896.9 L1070.8 889.6 L1072.9 892.2 L1075.1 901.1 L1077.2 906.0 L1079.4 903.6 L1081.5 895.6 L1083.7 906.4 L1085.8 881.6 L1088.0 909.8 L1090.1 902.0 L1092.3 905.5 L1094.4 899.2 L1096.6 889.8 L1098.7 908.2 L1100.9 904.3 L1103.0 904.5 L1105.2 907.0 L1107.3 898.7 L1109.5 902.9 L1111.6 894.8 L1113.8 899.0 L1115.9 893.7 L1118.1 906.1 L1120.2 900.9 L1122.4 903.2 L1124.5 902.3 L1126.7 901.1 L1128.8 886.9 L1131.0 903.1 L1133.1 907.5 L1135.3 888.5 L1137.4 907.0 L1139.5 907.1 L1141.7 903.4 L1143.8 905.7 L1146.0 903.0 L1148.1 906.4 L1150.3 909.6 L1152.4 896.8 L1154.6 905.6 L1156.7 905.8 L1158.9 899.5 L1161.0 907.5 L1163.2 881.2 L1165.3 906.1 L1167.5 903.8 L1169.6 910.5 L1171.8 904.2 L1173.9 908.4 L1176.1 905.1 L1178.2 898.1 L1180.4 897.1 L1182.5 897.2 L1184.7 896.3 L1186.8 904.6 L1189.0 898.5 L1191.1 903.3 L1193.3 901.4 L1195.4 899.0 L1197.6 909.1 L1199.7 906.9 L1201.9 903.4 L1204.0 898.2 L1206.2 892.1 L1208.3 907.6 L1210.5 900.6 L1212.6 904.9 L1214.7 891.7 L1216.9 904.7 L1219.0 901.6 L1221.2 900.7 L1223.3 907.1 L1225.5 901.6 L1227.6 901.9 L1229.8 905.4 L1231.9 905.0 L1234.1 906.5 L1236.2 907.5 L1238.4 902.9 L1240.5 906.4 L1242.7 898.3 L1244.8 903.2 L1247.0 907.6 L1249.1 905.5 L1251.3 903.8 L1253.4 888.5 L1255.6 890.8 L1257.7 904.1 L1259.9 906.1 L1262.0 894.1 L1264.2 913.5 L1266.3 899.4 L1268.5 899.7 L1270.6 908.1 L1272.8 889.9 L1274.9 901.7 L1277.1 895.6 L1279.2 888.0 L1281.4 895.0 L1283.5 895.4 L1285.7 907.3 L1287.8 904.8 L1290.0 906.3 L1292.1 881.6 L1294.2 907.2 L1296.4 901.1 L1298.5 903.6 L1300.7 895.6 L1302.8 895.0 L1305.0 902.6 L1307.1 893.9 L1309.3 904.1 L1311.4 896.9 L1313.6 901.0 L1315.7 900.3 L1317.9 903.9 L1320.0 908.3 L1322.2 894.6 L1324.3 904.6 L1326.5 897.5 L1328.6 909.0 L1330.8 900.6 L1332.9 896.5 L1335.1 909.3 L1337.2 900.6 L1339.4 897.9 L1341.5 906.6 L1343.7 902.8 L1345.8 907.6 L1348.0 896.1 L1350.1 904.8 L1352.3 895.5 L1354.4 906.2 L1356.6 903.7 L1358.7 903.0 L1360.9 905.7 L1363.0 897.5 L1365.2 907.1 L1367.3 907.2" stroke="#0A437C"/><path d="M982.7 899.2 L984.8 882.4 L987.0 891.8 L989.1 893.4 L991.3 889.7 L993.4 892.2 L995.6 896.2 L997.7 899.6 L999.9 897.9 L1002.0 907.5 L1004.2 893.8 L1006.3 904.1 L1008.5 889.0 L1010.6 903.0 L1012.8 892.2 L1014.9 894.7 L1017.1 873.7 L1019.2 899.7 L1021.4 897.3 L1023.5 895.7 L1025.7 885.4 L1027.8 898.9 L1030.0 893.8 L1032.1 896.7 L1034.3 896.6 L1036.4 883.6 L1038.6 874.7 L1040.7 897.5 L1042.9 897.0 L1045.0 900.8 L1047.2 887.4 L1049.3 900.5 L1051.5 893.4 L1053.6 902.3 L1055.8 897.4 L1057.9 901.9 L1060.0 897.5 L1062.2 898.0 L1064.3 905.2 L1066.5 898.7 L1068.6 896.3 L1070.8 907.5 L1072.9 880.8 L1075.1 899.2 L1077.2 897.4 L1079.4 885.6 L1081.5 902.4 L1083.7 903.1 L1085.8 895.9 L1088.0 902.3 L1090.1 877.6 L1092.3 892.9 L1094.4 895.9 L1096.6 883.2 L1098.7 899.2 L1100.9 902.2 L1103.0 883.4 L1105.2 904.3 L1107.3 877.1 L1109.5 906.5 L1111.6 891.8 L1113.8 888.9 L1115.9 900.1 L1118.1 894.6 L1120.2 906.1 L1122.4 875.7 L1124.5 898.1 L1126.7 902.5 L1128.8 882.0 L1131.0 886.3 L1133.1 898.5 L1135.3 900.3 L1137.4 897.0 L1139.5 883.8 L1141.7 893.1 L1143.8 895.1 L1146.0 900.7 L1148.1 884.2 L1150.3 897.8 L1152.4 896.3 L1154.6 891.5 L1156.7 902.8 L1158.9 893.1 L1161.0 896.7 L1163.2 897.1 L1165.3 900.5 L1167.5 877.1 L1169.6 897.0 L1171.8 883.8 L1173.9 901.5 L1176.1 900.0 L1178.2 895.7 L1180.4 895.1 L1182.5 899.7 L1184.7 901.5 L1186.8 888.2 L1189.0 899.9 L1191.1 876.0 L1193.3 899.2 L1195.4 894.9 L1197.6 879.1 L1199.7 896.1 L1201.9 901.4 L1204.0 890.7 L1206.2 888.6 L1208.3 898.6 L1210.5 890.0 L1212.6 899.7 L1214.7 895.2 L1216.9 900.0 L1219.0 893.8 L1221.2 901.6 L1223.3 884.0 L1225.5 895.1 L1227.6 900.1 L1229.8 895.0 L1231.9 896.1 L1234.1 896.6 L1236.2 900.2 L1238.4 900.8 L1240.5 906.2 L1242.7 895.7 L1244.8 893.4 L1247.0 885.8 L1249.1 891.2 L1251.3 887.4 L1253.4 886.5 L1255.6 903.0 L1257.7 887.9 L1259.9 901.4 L1262.0 903.2 L1264.2 903.1 L1266.3 885.2 L1268.5 905.0 L1270.6 897.4 L1272.8 903.4 L1274.9 894.5 L1277.1 896.6 L1279.2 892.5 L1281.4 898.7 L1283.5 902.7 L1285.7 897.4 L1287.8 901.9 L1290.0 897.1 L1292.1 901.1 L1294.2 899.6 L1296.4 894.6 L1298.5 905.1 L1300.7 887.7 L1302.8 892.9 L1305.0 902.8 L1307.1 902.7 L1309.3 898.6 L1311.4 903.3 L1313.6 893.3 L1315.7 899.8 L1317.9 898.7 L1320.0 897.5 L1322.2 903.6 L1324.3 894.1 L1326.5 891.6 L1328.6 856.9 L1330.8 895.2 L1332.9 904.5 L1335.1 898.6 L1337.2 903.6 L1339.4 897.5 L1341.5 898.9 L1343.7 909.5 L1345.8 893.8 L1348.0 899.4 L1350.1 897.9 L1352.3 903.1 L1354.4 901.5 L1356.6 900.9 L1358.7 907.0 L1360.9 892.9 L1363.0 901.6 L1365.2 899.5 L1367.3 904.2" stroke="#FA6400"/><path d="M982.7 902.5 L984.8 901.9 L987.0 901.8 L989.1 901.8 L991.3 904.2 L993.4 894.9 L995.6 900.0 L997.7 904.6 L999.9 891.7 L1002.0 903.9 L1004.2 900.2 L1006.3 899.4 L1008.5 904.3 L1010.6 886.0 L1012.8 901.8 L1014.9 900.3 L1017.1 900.2 L1019.2 902.1 L1021.4 908.9 L1023.5 888.3 L1025.7 905.1 L1027.8 895.1 L1030.0 910.4 L1032.1 909.4 L1034.3 886.0 L1036.4 908.9 L1038.6 889.8 L1040.7 899.7 L1042.9 905.3 L1045.0 903.2 L1047.2 894.3 L1049.3 906.6 L1051.5 904.7 L1053.6 897.1 L1055.8 910.0 L1057.9 896.5 L1060.0 908.1 L1062.2 893.6 L1064.3 902.7 L1066.5 904.3 L1068.6 881.0 L1070.8 880.9 L1072.9 901.0 L1075.1 907.9 L1077.2 901.3 L1079.4 898.9 L1081.5 886.3 L1083.7 897.0 L1085.8 908.9 L1088.0 897.9 L1090.1 903.9 L1092.3 901.8 L1094.4 903.9 L1096.6 897.1 L1098.7 911.3 L1100.9 893.4 L1103.0 905.9 L1105.2 903.7 L1107.3 904.4 L1109.5 904.7 L1111.6 879.8 L1113.8 898.5 L1115.9 906.9 L1118.1 903.3 L1120.2 901.7 L1122.4 899.5 L1124.5 903.4 L1126.7 897.4 L1128.8 902.9 L1131.0 897.6 L1133.1 898.4 L1135.3 905.5 L1137.4 896.6 L1139.5 905.3 L1141.7 896.9 L1143.8 885.4 L1146.0 905.4 L1148.1 902.9 L1150.3 898.8 L1152.4 905.8 L1154.6 899.7 L1156.7 899.2 L1158.9 904.9 L1161.0 895.3 L1163.2 904.0 L1165.3 896.7 L1167.5 908.2 L1169.6 897.2 L1171.8 896.3 L1173.9 895.6 L1176.1 897.2 L1178.2 900.2 L1180.4 904.7 L1182.5 900.3 L1184.7 896.4 L1186.8 893.7 L1189.0 899.6 L1191.1 898.8 L1193.3 884.2 L1195.4 872.6 L1197.6 901.7 L1199.7 906.9 L1201.9 897.4 L1204.0 900.0 L1206.2 895.2 L1208.3 907.4 L1210.5 890.5 L1212.6 892.3 L1214.7 910.7 L1216.9 900.8 L1219.0 902.6 L1221.2 905.8 L1223.3 900.5 L1225.5 907.1 L1227.6 903.5 L1229.8 904.8 L1231.9 895.0 L1234.1 903.2 L1236.2 899.0 L1238.4 903.7 L1240.5 892.4 L1242.7 899.4 L1244.8 897.5 L1247.0 902.8 L1249.1 887.1 L1251.3 899.1 L1253.4 902.9 L1255.6 890.9 L1257.7 908.7 L1259.9 890.4 L1262.0 897.2 L1264.2 903.6 L1266.3 895.0 L1268.5 900.8 L1270.6 902.6 L1272.8 901.9 L1274.9 883.3 L1277.1 905.1 L1279.2 891.3 L1281.4 885.3 L1283.5 905.8 L1285.7 898.2 L1287.8 896.5 L1290.0 905.1 L1292.1 899.3 L1294.2 909.4 L1296.4 893.5 L1298.5 874.7 L1300.7 905.5 L1302.8 899.5 L1305.0 888.5 L1307.1 892.4 L1309.3 906.0 L1311.4 901.0 L1313.6 894.4 L1315.7 887.6 L1317.9 911.9 L1320.0 899.7 L1322.2 901.4 L1324.3 905.0 L1326.5 888.7 L1328.6 907.2 L1330.8 900.9 L1332.9 907.1 L1335.1 897.8 L1337.2 903.7 L1339.4 900.2 L1341.5 906.7 L1343.7 898.4 L1345.8 902.3 L1348.0 892.6 L1350.1 910.7 L1352.3 894.5 L1354.4 899.6 L1356.6 903.4 L1358.7 892.2 L1360.9 905.8 L1363.0 908.8 L1365.2 896.8 L1367.3 897.6" stroke="#E02F44"/><path d="M982.7 898.9 L984.8 876.6 L987.0 882.5 L989.1 898.2 L991.3 900.7 L993.4 899.2 L995.6 903.5 L997.7 893.6 L999.9 898.3 L1002.0 898.9 L1004.2 908.7 L1006.3 902.5 L1008.5 901.1 L1010.6 890.8 L1012.8 899.3 L1014.9 900.4 L1017.1 895.0 L1019.2 895.9 L1021.4 900.2 L1023.5 894.5 L1025.7 897.4 L1027.8 897.4 L1030.0 901.9 L1032.1 903.3 L1034.3 901.4 L1036.4 897.8 L1038.6 909.6 L1040.7 895.2 L1042.9 893.1 L1045.0 893.7 L1047.2 879.8 L1049.3 892.4 L1051.5 908.6 L1053.6 896.4 L1055.8 903.4 L1057.9 897.9 L1060.0 897.2 L1062.2 906.5 L1064.3 892.9 L1066.5 902.6 L1068.6 900.4 L1070.8 905.9 L1072.9 901.0 L1075.1 898.2 L1077.2 905.6 L1079.4 901.1 L1081.5 882.4 L1083.7 906.3 L1085.8 892.7 L1088.0 887.5 L1090.1 904.3 L1092.3 899.4 L1094.4 901.5 L1096.6 906.9 L1098.7 899.3 L1100.9 870.1 L1103.0 899.3 L1105.2 896.7 L1107.3 904.2 L1109.5 900.2 L1111.6 907.3 L1113.8 882.6 L1115.9 904.3 L1118.1 897.5 L1120.2 905.6 L1122.4 897.9 L1124.5 900.1 L1126.7 904.5 L1128.8 899.2 L1131.0 895.1 L1133.1 907.0 L1135.3 887.0 L1137.4 882.9 L1139.5 895.2 L1141.7 909.7 L1143.8 876.9 L1146.0 902.5 L1148.1 901.3 L1150.3 905.5 L1152.4 904.2 L1154.6 899.0 L1156.7 902.9 L1158.9 902.0 L1161.0 906.3 L1163.2 904.9 L1165.3 895.5 L1167.5 903.6 L1169.6 900.8 L1171.8 902.1 L1173.9 901.2 L1176.1 899.5 L1178.2 893.6 L1180.4 901.7 L1182.5 883.7 L1184.7 894.6 L1186.8 893.0 L1189.0 904.4 L1191.1 899.6 L1193.3 900.2 L1195.4 893.5 L1197.6 904.9 L1199.7 892.1 L1201.9 893.4 L1204.0 907.4 L1206.2 869.6 L1208.3 901.4 L1210.5 905.7 L1212.6 887.6 L1214.7 904.4 L1216.9 898.9 L1219.0 902.5 L1221.2 886.6 L1223.3 885.7 L1225.5 896.4 L1227.6 887.9 L1229.8 902.2 L1231.9 900.8 L1234.1 900.4 L1236.2 903.6 L1238.4 893.1 L1240.5 888.9 L1242.7 900.1 L1244.8 906.6 L1247.0 873.5 L1249.1 903.1 L1251.3 896.5 L1253.4 896.1 L1255.6 895.4 L1257.7 906.1 L1259.9 892.8 L1262.0 880.8 L1264.2 901.8 L1266.3 881.5 L1268.5 903.4 L1270.6 891.1 L1272.8 906.6 L1274.9 893.0 L1277.1 896.1 L1279.2 885.6 L1281.4 900.9 L1283.5 912.9 L1285.7 898.2 L1287.8 901.5 L1290.0 892.6 L1292.1 902.6 L1294.2 894.1 L1296.4 903.1 L1298.5 908.6 L1300.7 894.6 L1302.8 908.2 L1305.0 897.6 L1307.1 896.6 L1309.3 909.7 L1311.4 898.4 L1313.6 902.5 L1315.7 905.4 L1317.9 899.1 L1320.0 901.4 L1322.2 905.4 L1324.3 896.9 L1326.5 901.2 L1328.6 898.2 L1330.8 906.2 L1332.9 896.1 L1335.1 895.0 L1337.2 901.9 L1339.4 892.6 L1341.5 896.6 L1343.7 894.8 L1345.8 891.5 L1348.0 904.8 L1350.1 899.1 L1352.3 892.5 L1354.4 901.6 L1356.6 880.8 L1358.7 901.7 L1360.9 894.1 L1363.0 901.2 L1365.2 897.6 L1367.3 898.8" stroke="#C4162A"/><path d="M982.7 901.1 L984.8 895.1 L987.0 902.5 L989.1 894.8 L991.3 874.0 L993.4 903.4 L995.6 901.7 L997.7 901.1 L999.9 896.5 L1002.0 908.9 L1004.2 894.6 L1006.3 907.2 L1008.5 898.3 L1010.6 906.3 L1012.8 898.5 L1014.9 873.4 L1017.1 910.1 L1019.2 900.1 L1021.4 902.6 L1023.5 900.1 L1025.7 900.5 L1027.8 900.4 L1030.0 901.7 L1032.1 895.9 L1034.3 907.7 L1036.4 896.5 L1038.6 906.4 L1040.7 890.0 L1042.9 904.9 L1045.0 901.3 L1047.2 902.7 L1049.3 879.5 L1051.5 884.0 L1053.6 897.0 L1055.8 896.8 L1057.9 900.9 L1060.0 896.5 L1062.2 897.8 L1064.3 904.3 L1066.5 895.2 L1068.6 895.7 L1070.8 898.0 L1072.9 888.1 L1075.1 900.2 L1077.2 907.9 L1079.4 891.3 L1081.5 907.1 L1083.7 898.8 L1085.8 892.7 L1088.0 903.3 L1090.1 883.5 L1092.3 907.2 L1094.4 902.5 L1096.6 894.0 L1098.7 905.8 L1100.9 881.8 L1103.0 889.5 L1105.2 901.7 L1107.3 896.8 L1109.5 903.9 L1111.6 904.4 L1113.8 902.6 L1115.9 899.1 L1118.1 903.3 L1120.2 902.2 L1122.4 886.4 L1124.5 899.8 L1126.7 897.2 L1128.8 902.0 L1131.0 902.2 L1133.1 904.4 L1135.3 903.6 L1137.4 901.4 L1139.5 895.0 L1141.7 895.7 L1143.8 906.8 L1146.0 893.7 L1148.1 910.3 L1150.3 896.9 L1152.4 899.7 L1154.6 896.7 L1156.7 903.0 L1158.9 894.9 L1161.0 901.2 L1163.2 893.2 L1165.3 901.0 L1167.5 892.5 L1169.6 885.4 L1171.8 896.0 L1173.9 899.1 L1176.1 900.4 L1178.2 891.3 L1180.4 903.6 L1182.5 904.3 L1184.7 905.3 L1186.8 907.0 L1189.0 901.3 L1191.1 902.2 L1193.3 905.5 L1195.4 901.3 L1197.6 900.5 L1199.7 897.6 L1201.9 904.8 L1204.0 899.6 L1206.2 903.3 L1208.3 898.5 L1210.5 906.8 L1212.6 895.9 L1214.7 895.4 L1216.9 903.6 L1219.0 902.5 L1221.2 899.9 L1223.3 898.8 L1225.5 899.5 L1227.6 907.7 L1229.8 894.8 L1231.9 901.5 L1234.1 895.4 L1236.2 884.7 L1238.4 895.8 L1240.5 902.2 L1242.7 900.1 L1244.8 903.9 L1247.0 894.0 L1249.1 903.4 L1251.3 896.2 L1253.4 898.1 L1255.6 893.4 L1257.7 902.1 L1259.9 899.3 L1262.0 898.5 L1264.2 905.9 L1266.3 886.2 L1268.5 905.1 L1270.6 892.8 L1272.8 907.3 L1274.9 903.6 L1277.1 899.0 L1279.2 898.6 L1281.4 907.1 L1283.5 897.0 L1285.7 910.1 L1287.8 897.9 L1290.0 901.3 L1292.1 904.4 L1294.2 902.4 L1296.4 892.4 L1298.5 902.8 L1300.7 893.9 L1302.8 895.5 L1305.0 895.4 L1307.1 903.3 L1309.3 894.2 L1311.4 902.5 L1313.6 891.6 L1315.7 896.7 L1317.9 897.6 L1320.0 901.6 L1322.2 900.1 L1324.3 906.5 L1326.5 899.7 L1328.6 903.3 L1330.8 897.7 L1332.9 904.0 L1335.1 898.7 L1337.2 900.9 L1339.4 883.9 L1341.5 896.9 L1343.7 905.6 L1345.8 886.0 L1348.0 896.5 L1350.1 902.0 L1352.3 900.4 L1354.4 875.7 L1356.6 896.4 L1358.7 901.0 L1360.9 890.1 L1363.0 903.9 L1365.2 902.4 L1367.3 896.5" stroke="#890F02"/><path d="M982.7 883.4 L984.8 902.7 L987.0 902.6 L989.1 901.5 L991.3 904.3 L993.4 903.5 L995.6 901.0 L997.7 892.1 L999.9 886.7 L1002.0 899.7 L1004.2 903.8 L1006.3 900.1 L1008.5 899.6 L1010.6 892.9 L1012.8 900.7 L1014.9 895.6 L1017.1 911.6 L1019.2 901.0 L1021.4 891.9 L1023.5 909.2 L1025.7 878.9 L1027.8 895.3 L1030.0 889.0 L1032.1 897.6 L1034.3 891.7 L1036.4 903.5 L1038.6 901.2 L1040.7 903.7 L1042.9 890.4 L1045.0 888.1 L1047.2 904.0 L1049.3 899.3 L1051.5 893.1 L1053.6 888.4 L1055.8 902.3 L1057.9 900.9 L1060.0 900.2 L1062.2 906.2 L1064.3 901.7 L1066.5 903.2 L1068.6 892.3 L1070.8 904.3 L1072.9 898.7 L1075.1 904.0 L1077.2 902.3 L1079.4 903.8 L1081.5 896.8 L1083.7 908.4 L1085.8 895.9 L1088.0 882.1 L1090.1 900.4 L1092.3 899.0 L1094.4 901.0 L1096.6 898.7 L1098.7 905.8 L1100.9 898.6 L1103.0 895.1 L1105.2 895.3 L1107.3 897.5 L1109.5 901.5 L1111.6 907.8 L1113.8 896.2 L1115.9 885.9 L1118.1 907.5 L1120.2 895.6 L1122.4 883.5 L1124.5 897.0 L1126.7 899.9 L1128.8 893.2 L1131.0 897.8 L1133.1 901.2 L1135.3 903.9 L1137.4 900.5 L1139.5 902.7 L1141.7 900.4 L1143.8 893.8 L1146.0 899.3 L1148.1 896.1 L1150.3 892.0 L1152.4 892.5 L1154.6 886.8 L1156.7 876.0 L1158.9 902.9 L1161.0 892.3 L1163.2 905.0 L1165.3 886.5 L1167.5 899.8 L1169.6 898.4 L1171.8 899.8 L1173.9 899.6 L1176.1 905.2 L1178.2 903.7 L1180.4 909.6 L1182.5 890.2 L1184.7 904.7 L1186.8 894.2 L1189.0 907.0 L1191.1 897.3 L1193.3 900.2 L1195.4 896.6 L1197.6 898.2 L1199.7 893.0 L1201.9 903.4 L1204.0 899.6 L1206.2 910.4 L1208.3 886.9 L1210.5 900.8 L1212.6 896.5 L1214.7 894.9 L1216.9 903.8 L1219.0 901.3 L1221.2 904.0 L1223.3 893.2 L1225.5 898.6 L1227.6 898.8 L1229.8 900.9 L1231.9 899.9 L1234.1 890.6 L1236.2 894.4 L1238.4 894.6 L1240.5 904.9 L1242.7 902.3 L1244.8 887.1 L1247.0 904.1 L1249.1 886.8 L1251.3 891.2 L1253.4 902.0 L1255.6 904.5 L1257.7 897.6 L1259.9 891.7 L1262.0 879.9 L1264.2 898.2 L1266.3 901.7 L1268.5 882.8 L1270.6 901.8 L1272.8 898.5 L1274.9 898.1 L1277.1 906.3 L1279.2 901.1 L1281.4 902.2 L1283.5 889.8 L1285.7 895.6 L1287.8 904.5 L1290.0 897.5 L1292.1 901.8 L1294.2 880.6 L1296.4 887.8 L1298.5 896.8 L1300.7 906.9 L1302.8 897.5 L1305.0 909.5 L1307.1 900.3 L1309.3 895.3 L1311.4 898.8 L1313.6 901.3 L1315.7 902.3 L1317.9 902.5 L1320.0 902.6 L1322.2 905.6 L1324.3 893.3 L1326.5 901.4 L1328.6 903.4 L1330.8 905.7 L1332.9 894.5 L1335.1 901.5 L1337.2 901.4 L1339.4 906.9 L1341.5 895.2 L1343.7 907.7 L1345.8 875.2 L1348.0 894.9 L1350.1 904.0 L1352.3 896.7 L1354.4 884.2 L1356.6 904.5 L1358.7 887.3 L1360.9 898.2 L1363.0 905.3 L1365.2 885.7 L1367.3 904.2" stroke="#37872D"/><path d="M982.7 897.6 L984.8 898.4 L987.0 900.3 L989.1 895.8 L991.3 905.3 L993.4 897.8 L995.6 902.7 L997.7 899.5 L999.9 886.6 L1002.0 904.8 L1004.2 891.0 L1006.3 905.6 L1008.5 887.8 L1010.6 903.2 L1012.8 893.1 L1014.9 880.3 L1017.1 907.0 L1019.2 898.5 L1021.4 901.7 L1023.5 894.2 L1025.7 899.1 L1027.8 898.1 L1030.0 905.3 L1032.1 889.1 L1034.3 904.1 L1036.4 895.0 L1038.6 907.6 L1040.7 891.5 L1042.9 903.6 L1045.0 903.0 L1047.2 901.9 L1049.3 898.5 L1051.5 902.8 L1053.6 905.6 L1055.8 886.2 L1057.9 893.0 L1060.0 898.6 L1062.2 899.3 L1064.3 896.6 L1066.5 901.8 L1068.6 893.7 L1070.8 903.8 L1072.9 889.8 L1075.1 899.6 L1077.2 900.0 L1079.4 900.3 L1081.5 894.2 L1083.7 903.0 L1085.8 885.4 L1088.0 891.6 L1090.1 904.6 L1092.3 898.4 L1094.4 880.8 L1096.6 894.5 L1098.7 896.3 L1100.9 901.1 L1103.0 901.7 L1105.2 902.2 L1107.3 896.4 L1109.5 890.9 L1111.6 899.1 L1113.8 900.5 L1115.9 907.4 L1118.1 898.5 L1120.2 893.5 L1122.4 897.4 L1124.5 896.8 L1126.7 899.3 L1128.8 885.4 L1131.0 891.0 L1133.1 904.5 L1135.3 905.8 L1137.4 897.4 L1139.5 896.4 L1141.7 899.5 L1143.8 898.7 L1146.0 895.2 L1148.1 899.2 L1150.3 901.2 L1152.4 898.8 L1154.6 898.2 L1156.7 899.8 L1158.9 903.6 L1161.0 898.6 L1163.2 895.7 L1165.3 900.7 L1167.5 903.4 L1169.6 900.2 L1171.8 905.2 L1173.9 900.0 L1176.1 891.2 L1178.2 902.9 L1180.4 886.7 L1182.5 890.6 L1184.7 899.3 L1186.8 887.7 L1189.0 884.8 L1191.1 898.5 L1193.3 905.0 L1195.4 898.6 L1197.6 901.8 L1199.7 898.3 L1201.9 856.9 L1204.0 899.9 L1206.2 901.9 L1208.3 897.1 L1210.5 903.1 L1212.6 884.9 L1214.7 899.6 L1216.9 901.5 L1219.0 902.5 L1221.2 903.7 L1223.3 899.1 L1225.5 897.9 L1227.6 900.1 L1229.8 896.1 L1231.9 905.4 L1234.1 899.3 L1236.2 909.4 L1238.4 896.7 L1240.5 886.6 L1242.7 903.6 L1244.8 904.5 L1247.0 901.4 L1249.1 901.0 L1251.3 901.8 L1253.4 894.6 L1255.6 904.4 L1257.7 891.4 L1259.9 901.8 L1262.0 896.0 L1264.2 904.2 L1266.3 889.4 L1268.5 908.2 L1270.6 894.0 L1272.8 901.0 L1274.9 893.8 L1277.1 896.4 L1279.2 893.1 L1281.4 898.3 L1283.5 888.8 L1285.7 908.0 L1287.8 892.2 L1290.0 899.3 L1292.1 892.8 L1294.2 893.6 L1296.4 902.4 L1298.5 901.7 L1300.7 902.1 L1302.8 893.4 L1305.0 892.7 L1307.1 896.0 L1309.3 901.6 L1311.4 897.2 L1313.6 899.9 L1315.7 897.0 L1317.9 899.7 L1320.0 901.5 L1322.2 904.0 L1324.3 898.5 L1326.5 903.5 L1328.6 897.0 L1330.8 893.2 L1332.9 892.3 L1335.1 900.1 L1337.2 902.8 L1339.4 899.3 L1341.5 879.5 L1343.7 905.0 L1345.8 904.6 L1348.0 899.1 L1350.1 899.5 L1352.3 894.0 L1354.4 905.1 L1356.6 893.7 L1358.7 904.6 L1360.9 890.9 L1363.0 903.5 L1365.2 900.4 L1367.3 898.2" stroke="#FF780A"/><path d="M982.7 899.6 L984.8 905.5 L987.0 899.6 L989.1 903.2 L991.3 906.3 L993.4 880.1 L995.6 904.6 L997.7 898.1 L999.9 904.3 L1002.0 897.4 L1004.2 901.6 L1006.3 887.7 L1008.5 903.3 L1010.6 881.5 L1012.8 907.3 L1014.9 898.8 L1017.1 904.2 L1019.2 889.2 L1021.4 889.3 L1023.5 899.7 L1025.7 901.7 L1027.8 901.5 L1030.0 908.9 L1032.1 893.1 L1034.3 908.0 L1036.4 898.1 L1038.6 902.5 L1040.7 897.0 L1042.9 901.3 L1045.0 910.5 L1047.2 877.5 L1049.3 889.4 L1051.5 909.2 L1053.6 893.1 L1055.8 900.3 L1057.9 895.0 L1060.0 895.4 L1062.2 899.9 L1064.3 900.7 L1066.5 898.0 L1068.6 894.7 L1070.8 893.1 L1072.9 899.7 L1075.1 901.3 L1077.2 902.3 L1079.4 902.8 L1081.5 906.5 L1083.7 900.7 L1085.8 897.5 L1088.0 899.4 L1090.1 901.0 L1092.3 894.2 L1094.4 896.9 L1096.6 897.8 L1098.7 900.8 L1100.9 901.3 L1103.0 898.8 L1105.2 902.9 L1107.3 900.7 L1109.5 903.2 L1111.6 909.5 L1113.8 886.2 L1115.9 907.1 L1118.1 895.4 L1120.2 902.4 L1122.4 904.8 L1124.5 906.8 L1126.7 902.0 L1128.8 902.0 L1131.0 900.4 L1133.1 906.5 L1135.3 896.2 L1137.4 852.2 L1139.5 882.0 L1141.7 884.3 L1143.8 905.6 L1146.0 888.4 L1148.1 899.8 L1150.3 901.2 L1152.4 903.9 L1154.6 904.0 L1156.7 904.9 L1158.9 900.8 L1161.0 868.7 L1163.2 903.0 L1165.3 885.0 L1167.5 895.2 L1169.6 906.2 L1171.8 894.6 L1173.9 903.5 L1176.1 901.8 L1178.2 903.8 L1180.4 892.8 L1182.5 879.3 L1184.7 892.0 L1186.8 896.5 L1189.0 902.2 L1191.1 900.6 L1193.3 904.3 L1195.4 890.9 L1197.6 895.2 L1199.7 898.2 L1201.9 890.9 L1204.0 898.2 L1206.2 900.1 L1208.3 896.6 L1210.5 896.4 L1212.6 895.4 L1214.7 900.9 L1216.9 889.5 L1219.0 905.4 L1221.2 896.3 L1223.3 904.3 L1225.5 900.1 L1227.6 901.1 L1229.8 895.0 L1231.9 901.9 L1234.1 898.1 L1236.2 900.3 L1238.4 886.8 L1240.5 903.3 L1242.7 895.6 L1244.8 893.5 L1247.0 896.7 L1249.1 901.6 L1251.3 895.0 L1253.4 899.4 L1255.6 888.0 L1257.7 898.4 L1259.9 900.0 L1262.0 892.9 L1264.2 901.9 L1266.3 900.0 L1268.5 907.2 L1270.6 901.5 L1272.8 900.4 L1274.9 900.6 L1277.1 895.9 L1279.2 909.5 L1281.4 896.8 L1283.5 900.4 L1285.7 906.2 L1287.8 892.8 L1290.0 899.7 L1292.1 884.0 L1294.2 905.4 L1296.4 898.7 L1298.5 897.9 L1300.7 900.5 L1302.8 895.7 L1305.0 900.5 L1307.1 901.1 L1309.3 897.8 L1311.4 897.4 L1313.6 900.1 L1315.7 898.3 L1317.9 882.5 L1320.0 895.6 L1322.2 900.2 L1324.3 905.2 L1326.5 894.6 L1328.6 910.2 L1330.8 890.8 L1332.9 900.9 L1335.1 901.9 L1337.2 901.4 L1339.4 897.7 L1341.5 903.4 L1343.7 895.9 L1345.8 899.5 L1348.0 904.5 L1350.1 911.1 L1352.3 900.8 L1354.4 888.7 L1356.6 900.3 L1358.7 907.1 L1360.9 893.3 L1363.0 901.0 L1365.2 899.5 L1367.3 902.6" stroke="#A352CC"/><path d="M982.7 886.0 L984.8 908.6 L987.0 897.0 L989.1 901.9 L991.3 901.4 L993.4 899.7 L995.6 899.2 L997.7 905.5 L999.9 889.5 L1002.0 907.7 L1004.2 902.4 L1006.3 906.2 L1008.5 897.0 L1010.6 898.5 L1012.8 910.2 L1014.9 879.7 L1017.1 888.9 L1019.2 900.3 L1021.4 898.7 L1023.5 894.3 L1025.7 895.9 L1027.8 907.5 L1030.0 896.8 L1032.1 897.5 L1034.3 899.0 L1036.4 902.9 L1038.6 895.9 L1040.7 877.8 L1042.9 904.8 L1045.0 899.5 L1047.2 897.8 L1049.3 905.6 L1051.5 903.0 L1053.6 895.1 L1055.8 900.9 L1057.9 897.6 L1060.0 896.3 L1062.2 899.0 L1064.3 889.1 L1066.5 894.9 L1068.6 908.0 L1070.8 897.6 L1072.9 896.0 L1075.1 891.7 L1077.2 904.7 L1079.4 884.4 L1081.5 900.1 L1083.7 890.8 L1085.8 895.7 L1088.0 897.4 L1090.1 897.7 L1092.3 899.7 L1094.4 904.7 L1096.6 888.3 L1098.7 901.8 L1100.9 903.1 L1103.0 895.5 L1105.2 888.1 L1107.3 903.1 L1109.5 905.9 L1111.6 899.9 L1113.8 896.8 L1115.9 899.0 L1118.1 904.9 L1120.2 894.8 L1122.4 896.2 L1124.5 893.9 L1126.7 890.5 L1128.8 891.3 L1131.0 908.1 L1133.1 896.0 L1135.3 909.1 L1137.4 878.2 L1139.5 907.2 L1141.7 899.2 L1143.8 909.0 L1146.0 902.3 L1148.1 900.6 L1150.3 897.0 L1152.4 890.8 L1154.6 900.7 L1156.7 903.0 L1158.9 902.6 L1161.0 891.7 L1163.2 898.2 L1165.3 904.5 L1167.5 889.8 L1169.6 903.0 L1171.8 901.6 L1173.9 899.6 L1176.1 897.2 L1178.2 905.4 L1180.4 878.1 L1182.5 899.5 L1184.7 893.0 L1186.8 900.7 L1189.0 893.9 L1191.1 896.1 L1193.3 894.0 L1195.4 903.7 L1197.6 901.6 L1199.7 901.9 L1201.9 903.4 L1204.0 894.9 L1206.2 887.0 L1208.3 899.6 L1210.5 899.7 L1212.6 902.4 L1214.7 887.6 L1216.9 900.0 L1219.0 899.2 L1221.2 904.5 L1223.3 894.9 L1225.5 902.7 L1227.6 901.4 L1229.8 901.7 L1231.9 889.2 L1234.1 902.0 L1236.2 904.3 L1238.4 901.6 L1240.5 891.1 L1242.7 904.4 L1244.8 898.6 L1247.0 898.2 L1249.1 898.5 L1251.3 883.8 L1253.4 887.2 L1255.6 893.8 L1257.7 896.7 L1259.9 882.5 L1262.0 897.7 L1264.2 881.7 L1266.3 900.2 L1268.5 889.6 L1270.6 902.4 L1272.8 901.6 L1274.9 894.7 L1277.1 903.8 L1279.2 890.9 L1281.4 897.2 L1283.5 903.2 L1285.7 901.7 L1287.8 893.2 L1290.0 891.1 L1292.1 904.4 L1294.2 887.4 L1296.4 909.4 L1298.5 894.8 L1300.7 896.0 L1302.8 899.9 L1305.0 879.5 L1307.1 906.3 L1309.3 898.9 L1311.4 863.0 L1313.6 904.5 L1315.7 904.2 L1317.9 897.8 L1320.0 893.0 L1322.2 896.2 L1324.3 899.3 L1326.5 887.8 L1328.6 884.7 L1330.8 902.5 L1332.9 904.4 L1335.1 907.5 L1337.2 893.8 L1339.4 904.2 L1341.5 898.0 L1343.7 904.4 L1345.8 900.9 L1348.0 899.8 L1350.1 901.2 L1352.3 899.9 L1354.4 899.9 L1356.6 897.1 L1358.7 904.8 L1360.9 893.7 L1363.0 905.2 L1365.2 903.6 L1367.3 893.9" stroke="#8F3BB8"/><path d="M982.7 892.8 L984.8 905.7 L987.0 901.4 L989.1 898.6 L991.3 898.4 L993.4 889.4 L995.6 897.1 L997.7 884.0 L999.9 894.9 L1002.0 900.3 L1004.2 900.2 L1006.3 895.9 L1008.5 904.0 L1010.6 900.5 L1012.8 892.5 L1014.9 902.9 L1017.1 887.2 L1019.2 905.1 L1021.4 897.2 L1023.5 900.2 L1025.7 898.2 L1027.8 899.5 L1030.0 905.2 L1032.1 897.3 L1034.3 907.7 L1036.4 897.1 L1038.6 907.8 L1040.7 884.0 L1042.9 901.7 L1045.0 884.2 L1047.2 903.0 L1049.3 898.6 L1051.5 897.8 L1053.6 890.8 L1055.8 897.7 L1057.9 902.5 L1060.0 895.3 L1062.2 871.2 L1064.3 905.5 L1066.5 894.9 L1068.6 897.2 L1070.8 903.5 L1072.9 900.1 L1075.1 895.7 L1077.2 900.2 L1079.4 898.3 L1081.5 901.6 L1083.7 903.1 L1085.8 890.4 L1088.0 903.5 L1090.1 905.1 L1092.3 900.8 L1094.4 901.8 L1096.6 899.9 L1098.7 896.8 L1100.9 904.8 L1103.0 889.2 L1105.2 898.5 L1107.3 897.8 L1109.5 900.5 L1111.6 909.3 L1113.8 899.3 L1115.9 903.6 L1118.1 905.6 L1120.2 907.7 L1122.4 895.0 L1124.5 901.2 L1126.7 879.3 L1128.8 898.2 L1131.0 895.5 L1133.1 901.8 L1135.3 902.3 L1137.4 898.3 L1139.5 900.5 L1141.7 902.4 L1143.8 899.1 L1146.0 903.4 L1148.1 902.8 L1150.3 895.9 L1152.4 890.9 L1154.6 900.2 L1156.7 905.0 L1158.9 897.8 L1161.0 900.1 L1163.2 900.3 L1165.3 898.5 L1167.5 896.2 L1169.6 897.6 L1171.8 899.6 L1173.9 901.5 L1176.1 893.5 L1178.2 899.5 L1180.4 907.5 L1182.5 896.0 L1184.7 901.4 L1186.8 892.0 L1189.0 897.0 L1191.1 894.1 L1193.3 897.9 L1195.4 902.1 L1197.6 896.0 L1199.7 900.7 L1201.9 905.2 L1204.0 893.8 L1206.2 886.0 L1208.3 895.0 L1210.5 901.4 L1212.6 900.5 L1214.7 908.8 L1216.9 900.8 L1219.0 903.5 L1221.2 895.2 L1223.3 903.5 L1225.5 896.8 L1227.6 899.6 L1229.8 898.2 L1231.9 894.7 L1234.1 875.6 L1236.2 902.4 L1238.4 889.2 L1240.5 902.3 L1242.7 893.7 L1244.8 905.3 L1247.0 882.5 L1249.1 898.1 L1251.3 898.4 L1253.4 899.5 L1255.6 902.3 L1257.7 875.4 L1259.9 908.1 L1262.0 893.6 L1264.2 903.7 L1266.3 897.7 L1268.5 899.3 L1270.6 901.4 L1272.8 894.4 L1274.9 908.9 L1277.1 890.6 L1279.2 895.8 L1281.4 892.7 L1283.5 902.4 L1285.7 905.4 L1287.8 898.2 L1290.0 903.5 L1292.1 900.2 L1294.2 905.7 L1296.4 899.3 L1298.5 897.6 L1300.7 896.1 L1302.8 900.8 L1305.0 905.5 L1307.1 902.3 L1309.3 894.8 L1311.4 897.0 L1313.6 897.4 L1315.7 893.4 L1317.9 903.5 L1320.0 905.2 L1322.2 900.0 L1324.3 907.1 L1326.5 900.8 L1328.6 901.9 L1330.8 896.2 L1332.9 887.2 L1335.1 896.3 L1337.2 897.5 L1339.4 894.4 L1341.5 898.8 L1343.7 879.2 L1345.8 875.6 L1348.0 883.7 L1350.1 887.4 L1352.3 897.6 L1354.4 902.1 L1356.6 897.0 L1358.7 904.4 L1360.9 894.9 L1363.0 906.5 L1365.2 900.6 L1367.3 899.0" stroke="#705DA0"/><path d="M982.7 889.0 L984.8 910.6 L987.0 899.6 L989.1 901.6 L991.3 901.6 L993.4 905.0 L995.6 898.5 L997.7 888.2 L999.9 904.4 L1002.0 899.9 L1004.2 902.1 L1006.3 901.8 L1008.5 899.0 L1010.6 887.8 L1012.8 900.0 L1014.9 896.4 L1017.1 902.0 L1019.2 901.5 L1021.4 895.9 L1023.5 900.4 L1025.7 903.0 L1027.8 900.6 L1030.0 890.2 L1032.1 904.2 L1034.3 887.8 L1036.4 894.5 L1038.6 903.5 L1040.7 893.6 L1042.9 902.3 L1045.0 905.1 L1047.2 901.6 L1049.3 906.6 L1051.5 896.7 L1053.6 889.3 L1055.8 907.0 L1057.9 896.4 L1060.0 905.6 L1062.2 906.1 L1064.3 896.5 L1066.5 904.2 L1068.6 903.3 L1070.8 885.3 L1072.9 910.2 L1075.1 900.9 L1077.2 905.7 L1079.4 905.1 L1081.5 899.6 L1083.7 902.6 L1085.8 901.0 L1088.0 906.9 L1090.1 904.1 L1092.3 906.6 L1094.4 904.2 L1096.6 893.6 L1098.7 904.2 L1100.9 901.9 L1103.0 895.3 L1105.2 900.0 L1107.3 909.1 L1109.5 899.3 L1111.6 900.7 L1113.8 896.5 L1115.9 903.1 L1118.1 894.5 L1120.2 904.9 L1122.4 892.9 L1124.5 901.2 L1126.7 902.8 L1128.8 903.7 L1131.0 896.7 L1133.1 899.5 L1135.3 905.3 L1137.4 910.5 L1139.5 905.3 L1141.7 893.8 L1143.8 891.5 L1146.0 902.7 L1148.1 900.0 L1150.3 891.2 L1152.4 912.8 L1154.6 893.1 L1156.7 899.0 L1158.9 904.7 L1161.0 907.6 L1163.2 901.8 L1165.3 890.1 L1167.5 909.1 L1169.6 891.8 L1171.8 905.8 L1173.9 901.5 L1176.1 903.6 L1178.2 899.3 L1180.4 903.1 L1182.5 896.3 L1184.7 893.1 L1186.8 893.8 L1189.0 893.8 L1191.1 895.2 L1193.3 895.1 L1195.4 907.8 L1197.6 901.5 L1199.7 898.7 L1201.9 898.4 L1204.0 905.5 L1206.2 901.7 L1208.3 903.8 L1210.5 891.7 L1212.6 898.9 L1214.7 894.9 L1216.9 880.6 L1219.0 890.2 L1221.2 903.5 L1223.3 903.6 L1225.5 900.4 L1227.6 898.0 L1229.8 901.7 L1231.9 900.2 L1234.1 895.0 L1236.2 900.3 L1238.4 894.6 L1240.5 898.1 L1242.7 899.5 L1244.8 903.0 L1247.0 904.1 L1249.1 905.1 L1251.3 907.4 L1253.4 899.0 L1255.6 903.3 L1257.7 889.3 L1259.9 899.4 L1262.0 905.8 L1264.2 899.4 L1266.3 898.5 L1268.5 904.6 L1270.6 902.1 L1272.8 890.1 L1274.9 904.7 L1277.1 886.5 L1279.2 898.4 L1281.4 903.3 L1283.5 899.8 L1285.7 901.7 L1287.8 901.8 L1290.0 892.3 L1292.1 900.6 L1294.2 903.1 L1296.4 887.8 L1298.5 900.0 L1300.7 902.2 L1302.8 907.8 L1305.0 894.4 L1307.1 894.7 L1309.3 908.1 L1311.4 896.6 L1313.6 900.4 L1315.7 905.9 L1317.9 898.9 L1320.0 897.6 L1322.2 888.8 L1324.3 907.7 L1326.5 905.7 L1328.6 903.5 L1330.8 907.8 L1332.9 904.0 L1335.1 890.3 L1337.2 902.0 L1339.4 888.8 L1341.5 885.2 L1343.7 899.4 L1345.8 904.0 L1348.0 899.3 L1350.1 907.1 L1352.3 899.5 L1354.4 903.2 L1356.6 890.1 L1358.7 903.9 L1360.9 894.8 L1363.0 899.3 L1365.2 903.1 L1367.3 902.7" stroke="#3274D9"/><path d="M982.7 897.0 L984.8 907.9 L987.0 895.1 L989.1 905.3 L991.3 889.9 L993.4 892.4 L995.6 898.9 L997.7 884.6 L999.9 905.2 L1002.0 902.9 L1004.2 895.0 L1006.3 902.5 L1008.5 894.9 L1010.6 895.9 L1012.8 899.2 L1014.9 890.2 L1017.1 885.6 L1019.2 899.1 L1021.4 899.9 L1023.5 885.4 L1025.7 896.6 L1027.8 901.1 L1030.0 892.3 L1032.1 903.4 L1034.3 902.7 L1036.4 886.3 L1038.6 886.4 L1040.7 902.8 L1042.9 905.0 L1045.0 888.9 L1047.2 896.5 L1049.3 890.8 L1051.5 900.4 L1053.6 891.4 L1055.8 894.4 L1057.9 899.1 L1060.0 908.9 L1062.2 886.2 L1064.3 887.7 L1066.5 897.1 L1068.6 891.7 L1070.8 887.9 L1072.9 894.0 L1075.1 884.6 L1077.2 893.6 L1079.4 898.0 L1081.5 902.7 L1083.7 900.3 L1085.8 907.7 L1088.0 898.0 L1090.1 895.8 L1092.3 891.4 L1094.4 897.9 L1096.6 898.6 L1098.7 894.2 L1100.9 910.0 L1103.0 894.9 L1105.2 880.7 L1107.3 898.2 L1109.5 903.7 L1111.6 893.3 L1113.8 905.7 L1115.9 904.3 L1118.1 904.7 L1120.2 899.0 L1122.4 894.3 L1124.5 908.2 L1126.7 899.4 L1128.8 898.4 L1131.0 902.2 L1133.1 893.3 L1135.3 899.9 L1137.4 891.2 L1139.5 895.3 L1141.7 897.1 L1143.8 899.3 L1146.0 907.2 L1148.1 891.9 L1150.3 899.9 L1152.4 900.1 L1154.6 898.9 L1156.7 893.2 L1158.9 887.2 L1161.0 900.6 L1163.2 902.4 L1165.3 896.1 L1167.5 903.1 L1169.6 894.6 L1171.8 904.9 L1173.9 894.8 L1176.1 891.8 L1178.2 907.5 L1180.4 902.6 L1182.5 905.9 L1184.7 892.0 L1186.8 902.6 L1189.0 889.7 L1191.1 886.1 L1193.3 895.4 L1195.4 898.5 L1197.6 904.6 L1199.7 889.3 L1201.9 895.4 L1204.0 904.4 L1206.2 903.4 L1208.3 880.7 L1210.5 898.4 L1212.6 899.9 L1214.7 902.2 L1216.9 907.4 L1219.0 899.2 L1221.2 895.1 L1223.3 903.8 L1225.5 892.5 L1227.6 901.7 L1229.8 896.7 L1231.9 902.1 L1234.1 894.4 L1236.2 894.8 L1238.4 905.4 L1240.5 902.1 L1242.7 905.1 L1244.8 899.1 L1247.0 908.0 L1249.1 890.0 L1251.3 903.8 L1253.4 898.9 L1255.6 897.4 L1257.7 901.5 L1259.9 893.9 L1262.0 893.9 L1264.2 886.1 L1266.3 888.7 L1268.5 888.9 L1270.6 905.8 L1272.8 905.0 L1274.9 897.6 L1277.1 899.5 L1279.2 899.4 L1281.4 895.6 L1283.5 902.8 L1285.7 901.7 L1287.8 905.4 L1290.0 898.6 L1292.1 907.3 L1294.2 892.2 L1296.4 908.7 L1298.5 901.8 L1300.7 901.0 L1302.8 888.7 L1305.0 895.6 L1307.1 903.9 L1309.3 896.3 L1311.4 904.6 L1313.6 893.3 L1315.7 895.4 L1317.9 900.6 L1320.0 901.1 L1322.2 897.3 L1324.3 897.2 L1326.5 898.2 L1328.6 901.6 L1330.8 905.1 L1332.9 901.9 L1335.1 904.5 L1337.2 898.9 L1339.4 897.4 L1341.5 896.7 L1343.7 902.4 L1345.8 901.1 L1348.0 898.3 L1350.1 898.2 L1352.3 906.0 L1354.4 896.2 L1356.6 903.0 L1358.7 908.3 L1360.9 894.6 L1363.0 880.8 L1365.2 878.4 L1367.3 897.5" stroke="#584477"/><path d="M982.7 896.9 L984.8 897.0 L987.0 903.2 L989.1 895.9 L991.3 906.7 L993.4 872.0 L995.6 899.7 L997.7 900.1 L999.9 901.7 L1002.0 896.9 L1004.2 905.9 L1006.3 901.6 L1008.5 900.9 L1010.6 903.0 L1012.8 892.7 L1014.9 889.6 L1017.1 896.8 L1019.2 897.1 L1021.4 908.3 L1023.5 898.3 L1025.7 905.2 L1027.8 896.8 L1030.0 901.7 L1032.1 884.4 L1034.3 895.8 L1036.4 894.5 L1038.6 891.3 L1040.7 896.5 L1042.9 906.1 L1045.0 887.7 L1047.2 900.0 L1049.3 900.9 L1051.5 901.2 L1053.6 893.8 L1055.8 900.7 L1057.9 901.3 L1060.0 900.0 L1062.2 896.9 L1064.3 902.5 L1066.5 897.2 L1068.6 899.9 L1070.8 897.1 L1072.9 898.1 L1075.1 892.9 L1077.2 901.4 L1079.4 899.8 L1081.5 900.5 L1083.7 880.2 L1085.8 879.0 L1088.0 900.4 L1090.1 886.4 L1092.3 906.6 L1094.4 886.3 L1096.6 893.4 L1098.7 894.2 L1100.9 894.7 L1103.0 905.4 L1105.2 899.7 L1107.3 899.6 L1109.5 902.0 L1111.6 902.6 L1113.8 903.8 L1115.9 898.9 L1118.1 900.1 L1120.2 900.2 L1122.4 898.6 L1124.5 908.2 L1126.7 895.3 L1128.8 894.9 L1131.0 896.4 L1133.1 903.1 L1135.3 905.8 L1137.4 890.5 L1139.5 891.8 L1141.7 899.9 L1143.8 896.9 L1146.0 906.4 L1148.1 890.8 L1150.3 897.4 L1152.4 900.6 L1154.6 897.5 L1156.7 893.1 L1158.9 900.5 L1161.0 890.9 L1163.2 897.7 L1165.3 893.8 L1167.5 881.5 L1169.6 893.5 L1171.8 879.6 L1173.9 898.9 L1176.1 896.5 L1178.2 899.8 L1180.4 894.8 L1182.5 893.0 L1184.7 891.1 L1186.8 893.4 L1189.0 902.7 L1191.1 889.6 L1193.3 891.8 L1195.4 879.8 L1197.6 882.8 L1199.7 907.7 L1201.9 899.6 L1204.0 904.6 L1206.2 895.4 L1208.3 900.4 L1210.5 887.5 L1212.6 902.6 L1214.7 902.5 L1216.9 895.7 L1219.0 896.8 L1221.2 892.9 L1223.3 879.4 L1225.5 897.3 L1227.6 903.3 L1229.8 899.6 L1231.9 895.3 L1234.1 897.6 L1236.2 905.1 L1238.4 893.4 L1240.5 892.9 L1242.7 899.1 L1244.8 897.9 L1247.0 900.0 L1249.1 898.5 L1251.3 897.7 L1253.4 900.4 L1255.6 897.3 L1257.7 905.8 L1259.9 892.7 L1262.0 900.9 L1264.2 897.6 L1266.3 894.0 L1268.5 900.5 L1270.6 897.6 L1272.8 902.6 L1274.9 904.1 L1277.1 897.8 L1279.2 900.7 L1281.4 882.5 L1283.5 900.9 L1285.7 890.8 L1287.8 897.3 L1290.0 889.0 L1292.1 901.2 L1294.2 895.3 L1296.4 891.7 L1298.5 886.4 L1300.7 896.6 L1302.8 893.5 L1305.0 900.8 L1307.1 894.9 L1309.3 901.4 L1311.4 893.6 L1313.6 902.7 L1315.7 901.1 L1317.9 892.4 L1320.0 889.0 L1322.2 901.1 L1324.3 900.5 L1326.5 892.4 L1328.6 895.0 L1330.8 902.9 L1332.9 892.2 L1335.1 902.7 L1337.2 895.2 L1339.4 882.2 L1341.5 893.2 L1343.7 897.6 L1345.8 903.6 L1348.0 894.7 L1350.1 899.3 L1352.3 885.1 L1354.4 871.3 L1356.6 903.2 L1358.7 887.5 L1360.9 887.4 L1363.0 895.9 L1365.2 903.9 L1367.3 898.9" stroke="#6D1F62"/><path d="M982.7 897.9 L984.8 898.9 L987.0 906.1 L989.1 901.3 L991.3 888.7 L993.4 901.7 L995.6 901.4 L997.7 906.4 L999.9 900.8 L1002.0 887.8 L1004.2 906.0 L1006.3 901.3 L1008.5 901.2 L1010.6 901.4 L1012.8 904.4 L1014.9 900.1 L1017.1 895.4 L1019.2 904.8 L1021.4 900.3 L1023.5 906.8 L1025.7 899.5 L1027.8 904.1 L1030.0 901.8 L1032.1 895.4 L1034.3 908.0 L1036.4 891.5 L1038.6 894.8 L1040.7 897.4 L1042.9 902.4 L1045.0 902.1 L1047.2 898.2 L1049.3 901.2 L1051.5 893.6 L1053.6 904.5 L1055.8 893.1 L1057.9 888.4 L1060.0 907.1 L1062.2 895.3 L1064.3 896.4 L1066.5 902.5 L1068.6 897.5 L1070.8 896.5 L1072.9 898.1 L1075.1 897.2 L1077.2 906.8 L1079.4 889.7 L1081.5 893.2 L1083.7 905.1 L1085.8 896.9 L1088.0 901.4 L1090.1 898.0 L1092.3 905.6 L1094.4 896.3 L1096.6 900.0 L1098.7 889.1 L1100.9 898.6 L1103.0 900.4 L1105.2 892.8 L1107.3 899.8 L1109.5 905.8 L1111.6 894.1 L1113.8 899.8 L1115.9 902.0 L1118.1 897.8 L1120.2 898.6 L1122.4 902.8 L1124.5 880.2 L1126.7 905.3 L1128.8 900.6 L1131.0 902.2 L1133.1 906.4 L1135.3 907.0 L1137.4 899.0 L1139.5 907.9 L1141.7 895.3 L1143.8 897.5 L1146.0 897.6 L1148.1 883.9 L1150.3 903.2 L1152.4 907.2 L1154.6 899.7 L1156.7 866.4 L1158.9 893.9 L1161.0 899.9 L1163.2 895.6 L1165.3 902.8 L1167.5 902.0 L1169.6 900.6 L1171.8 892.6 L1173.9 906.6 L1176.1 894.2 L1178.2 886.0 L1180.4 869.4 L1182.5 895.5 L1184.7 906.8 L1186.8 882.7 L1189.0 901.8 L1191.1 896.1 L1193.3 890.7 L1195.4 896.8 L1197.6 895.3 L1199.7 897.8 L1201.9 898.9 L1204.0 901.8 L1206.2 902.2 L1208.3 905.8 L1210.5 895.1 L1212.6 908.8 L1214.7 892.0 L1216.9 906.1 L1219.0 892.9 L1221.2 889.5 L1223.3 904.5 L1225.5 900.6 L1227.6 893.3 L1229.8 878.3 L1231.9 903.6 L1234.1 897.7 L1236.2 890.2 L1238.4 897.9 L1240.5 897.8 L1242.7 893.1 L1244.8 909.6 L1247.0 892.9 L1249.1 896.4 L1251.3 902.5 L1253.4 894.0 L1255.6 901.8 L1257.7 907.7 L1259.9 898.3 L1262.0 902.0 L1264.2 890.0 L1266.3 904.8 L1268.5 899.7 L1270.6 898.5 L1272.8 904.0 L1274.9 901.7 L1277.1 879.5 L1279.2 901.1 L1281.4 892.6 L1283.5 897.0 L1285.7 897.6 L1287.8 906.4 L1290.0 874.3 L1292.1 899.7 L1294.2 900.8 L1296.4 897.2 L1298.5 876.2 L1300.7 901.8 L1302.8 885.8 L1305.0 900.0 L1307.1 906.6 L1309.3 902.3 L1311.4 896.5 L1313.6 888.0 L1315.7 903.5 L1317.9 902.0 L1320.0 904.2 L1322.2 892.9 L1324.3 890.8 L1326.5 888.0 L1328.6 894.7 L1330.8 904.4 L1332.9 901.4 L1335.1 897.0 L1337.2 883.6 L1339.4 893.6 L1341.5 903.1 L1343.7 902.7 L1345.8 901.1 L1348.0 896.8 L1350.1 899.9 L1352.3 901.1 L1354.4 903.4 L1356.6 902.5 L1358.7 897.6 L1360.9 903.1 L1363.0 890.0 L1365.2 907.4 L1367.3 892.6" stroke="#1250B0"/><path d="M982.7 904.2 L984.8 891.5 L987.0 902.7 L989.1 904.1 L991.3 895.8 L993.4 901.1 L995.6 899.8 L997.7 895.8 L999.9 907.9 L1002.0 901.6 L1004.2 903.3 L1006.3 903.3 L1008.5 898.2 L1010.6 895.3 L1012.8 897.6 L1014.9 907.2 L1017.1 898.9 L1019.2 896.9 L1021.4 895.6 L1023.5 891.9 L1025.7 896.3 L1027.8 908.1 L1030.0 900.4 L1032.1 898.7 L1034.3 901.6 L1036.4 901.7 L1038.6 889.1 L1040.7 897.1 L1042.9 902.2 L1045.0 891.0 L1047.2 899.1 L1049.3 898.9 L1051.5 905.2 L1053.6 896.0 L1055.8 899.6 L1057.9 905.9 L1060.0 904.7 L1062.2 900.2 L1064.3 903.1 L1066.5 904.2 L1068.6 905.3 L1070.8 906.9 L1072.9 909.0 L1075.1 899.9 L1077.2 900.5 L1079.4 887.3 L1081.5 908.7 L1083.7 890.5 L1085.8 901.3 L1088.0 893.6 L1090.1 898.1 L1092.3 888.5 L1094.4 902.1 L1096.6 899.0 L1098.7 904.6 L1100.9 896.6 L1103.0 864.8 L1105.2 912.1 L1107.3 900.2 L1109.5 901.9 L1111.6 907.4 L1113.8 887.9 L1115.9 901.2 L1118.1 906.9 L1120.2 904.5 L1122.4 898.8 L1124.5 898.8 L1126.7 907.5 L1128.8 883.4 L1131.0 901.0 L1133.1 905.6 L1135.3 898.2 L1137.4 879.1 L1139.5 902.2 L1141.7 897.1 L1143.8 898.7 L1146.0 895.1 L1148.1 895.8 L1150.3 910.4 L1152.4 895.3 L1154.6 901.5 L1156.7 873.0 L1158.9 890.7 L1161.0 898.6 L1163.2 906.9 L1165.3 904.7 L1167.5 908.3 L1169.6 896.8 L1171.8 905.5 L1173.9 896.6 L1176.1 900.2 L1178.2 896.8 L1180.4 868.6 L1182.5 905.9 L1184.7 906.4 L1186.8 903.0 L1189.0 906.5 L1191.1 904.1 L1193.3 895.9 L1195.4 883.8 L1197.6 886.7 L1199.7 892.0 L1201.9 904.1 L1204.0 903.5 L1206.2 899.9 L1208.3 893.6 L1210.5 875.5 L1212.6 906.7 L1214.7 903.0 L1216.9 896.6 L1219.0 899.0 L1221.2 900.1 L1223.3 894.8 L1225.5 896.5 L1227.6 893.9 L1229.8 900.9 L1231.9 883.6 L1234.1 888.6 L1236.2 880.3 L1238.4 894.8 L1240.5 900.6 L1242.7 903.2 L1244.8 903.4 L1247.0 900.8 L1249.1 899.3 L1251.3 902.9 L1253.4 902.7 L1255.6 903.0 L1257.7 905.3 L1259.9 891.6 L1262.0 893.6 L1264.2 903.9 L1266.3 884.6 L1268.5 901.6 L1270.6 897.5 L1272.8 899.5 L1274.9 893.2 L1277.1 895.6 L1279.2 901.3 L1281.4 885.6 L1283.5 905.1 L1285.7 892.9 L1287.8 906.0 L1290.0 898.6 L1292.1 906.2 L1294.2 897.3 L1296.4 903.3 L1298.5 875.8 L1300.7 894.2 L1302.8 885.0 L1305.0 883.9 L1307.1 904.7 L1309.3 906.9 L1311.4 898.0 L1313.6 904.4 L1315.7 902.8 L1317.9 899.9 L1320.0 908.0 L1322.2 895.5 L1324.3 901.2 L1326.5 892.2 L1328.6 885.6 L1330.8 903.8 L1332.9 894.1 L1335.1 896.4 L1337.2 900.3 L1339.4 902.7 L1341.5 895.6 L1343.7 892.9 L1345.8 901.3 L1348.0 899.0 L1350.1 899.9 L1352.3 905.2 L1354.4 901.8 L1356.6 903.2 L1358.7 900.7 L1360.9 897.7 L1363.0 901.5 L1365.2 903.6 L1367.3 899.8" stroke="#1F60C4"/><path d="M982.7 899.2 L984.8 902.4 L987.0 904.1 L989.1 891.0 L991.3 903.8 L993.4 889.4 L995.6 901.8 L997.7 900.3 L999.9 898.6 L1002.0 901.8 L1004.2 902.6 L1006.3 897.8 L1008.5 900.9 L1010.6 892.1 L1012.8 896.7 L1014.9 899.7 L1017.1 891.4 L1019.2 884.2 L1021.4 895.5 L1023.5 899.0 L1025.7 904.9 L1027.8 886.7 L1030.0 894.1 L1032.1 890.3 L1034.3 901.1 L1036.4 902.2 L1038.6 895.2 L1040.7 906.9 L1042.9 884.4 L1045.0 909.9 L1047.2 889.3 L1049.3 896.4 L1051.5 898.9 L1053.6 904.8 L1055.8 898.5 L1057.9 904.3 L1060.0 898.5 L1062.2 886.7 L1064.3 902.7 L1066.5 905.8 L1068.6 899.6 L1070.8 908.0 L1072.9 898.2 L1075.1 905.4 L1077.2 900.3 L1079.4 904.8 L1081.5 898.2 L1083.7 905.5 L1085.8 901.1 L1088.0 901.5 L1090.1 899.4 L1092.3 863.8 L1094.4 901.2 L1096.6 893.3 L1098.7 901.1 L1100.9 899.6 L1103.0 904.5 L1105.2 901.5 L1107.3 907.1 L1109.5 905.8 L1111.6 881.2 L1113.8 883.8 L1115.9 898.4 L1118.1 904.6 L1120.2 902.7 L1122.4 899.1 L1124.5 889.4 L1126.7 906.3 L1128.8 897.9 L1131.0 902.7 L1133.1 897.0 L1135.3 900.9 L1137.4 900.4 L1139.5 891.3 L1141.7 899.8 L1143.8 899.4 L1146.0 905.1 L1148.1 893.5 L1150.3 900.8 L1152.4 901.8 L1154.6 903.8 L1156.7 897.2 L1158.9 909.6 L1161.0 897.9 L1163.2 902.7 L1165.3 901.2 L1167.5 897.1 L1169.6 904.9 L1171.8 896.6 L1173.9 901.0 L1176.1 898.8 L1178.2 900.0 L1180.4 899.5 L1182.5 899.0 L1184.7 896.1 L1186.8 900.9 L1189.0 907.9 L1191.1 897.6 L1193.3 902.2 L1195.4 893.2 L1197.6 895.1 L1199.7 885.7 L1201.9 894.2 L1204.0 898.9 L1206.2 878.8 L1208.3 894.5 L1210.5 897.9 L1212.6 894.7 L1214.7 901.9 L1216.9 905.1 L1219.0 862.3 L1221.2 903.5 L1223.3 886.5 L1225.5 903.9 L1227.6 897.5 L1229.8 897.1 L1231.9 900.5 L1234.1 905.8 L1236.2 901.7 L1238.4 898.8 L1240.5 901.3 L1242.7 875.4 L1244.8 897.0 L1247.0 891.6 L1249.1 897.0 L1251.3 900.6 L1253.4 896.2 L1255.6 895.4 L1257.7 901.4 L1259.9 906.4 L1262.0 882.5 L1264.2 902.9 L1266.3 883.5 L1268.5 888.2 L1270.6 894.2 L1272.8 906.1 L1274.9 901.1 L1277.1 892.5 L1279.2 884.4 L1281.4 901.1 L1283.5 905.9 L1285.7 889.9 L1287.8 901.2 L1290.0 901.4 L1292.1 897.1 L1294.2 904.2 L1296.4 895.3 L1298.5 891.3 L1300.7 895.9 L1302.8 900.4 L1305.0 891.7 L1307.1 899.7 L1309.3 900.2 L1311.4 873.3 L1313.6 892.4 L1315.7 903.7 L1317.9 897.0 L1320.0 883.5 L1322.2 877.9 L1324.3 882.1 L1326.5 907.6 L1328.6 900.2 L1330.8 896.4 L1332.9 900.0 L1335.1 892.3 L1337.2 900.4 L1339.4 885.0 L1341.5 901.2 L1343.7 895.5 L1345.8 905.7 L1348.0 900.0 L1350.1 902.5 L1352.3 904.6 L1354.4 894.5 L1356.6 899.3 L1358.7 892.6 L1360.9 894.5 L1363.0 882.6 L1365.2 900.0 L1367.3 901.5" stroke="#0A437C"/><path d="M982.7 902.4 L984.8 910.0 L987.0 898.4 L989.1 911.7 L991.3 902.7 L993.4 902.6 L995.6 905.4 L997.7 892.8 L999.9 906.6 L1002.0 903.7 L1004.2 901.0 L1006.3 898.8 L1008.5 895.7 L1010.6 904.1 L1012.8 892.6 L1014.9 896.8 L1017.1 902.3 L1019.2 900.2 L1021.4 895.0 L1023.5 891.6 L1025.7 911.9 L1027.8 898.2 L1030.0 901.3 L1032.1 911.5 L1034.3 906.5 L1036.4 892.0 L1038.6 902.7 L1040.7 895.1 L1042.9 904.9 L1045.0 899.5 L1047.2 904.1 L1049.3 896.7 L1051.5 909.3 L1053.6 900.8 L1055.8 900.3 L1057.9 902.6 L1060.0 905.7 L1062.2 902.9 L1064.3 911.1 L1066.5 904.5 L1068.6 899.0 L1070.8 905.7 L1072.9 907.8 L1075.1 898.0 L1077.2 893.7 L1079.4 907.4 L1081.5 904.5 L1083.7 907.2 L1085.8 906.1 L1088.0 899.4 L1090.1 902.1 L1092.3 889.0 L1094.4 909.1 L1096.6 885.2 L1098.7 899.7 L1100.9 897.8 L1103.0 908.6 L1105.2 903.4 L1107.3 902.2 L1109.5 907.0 L1111.6 883.4 L1113.8 906.1 L1115.9 903.5 L1118.1 903.6 L1120.2 909.0 L1122.4 897.9 L1124.5 900.0 L1126.7 895.8 L1128.8 906.0 L1131.0 902.1 L1133.1 899.1 L1135.3 906.7 L1137.4 895.2 L1139.5 899.3 L1141.7 900.1 L1143.8 905.5 L1146.0 900.4 L1148.1 910.5 L1150.3 892.2 L1152.4 910.1 L1154.6 901.6 L1156.7 905.8 L1158.9 900.4 L1161.0 904.4 L1163.2 910.0 L1165.3 882.4 L1167.5 882.7 L1169.6 904.3 L1171.8 903.7 L1173.9 892.1 L1176.1 897.0 L1178.2 903.4 L1180.4 909.3 L1182.5 897.6 L1184.7 904.5 L1186.8 905.5 L1189.0 905.4 L1191.1 896.7 L1193.3 900.2 L1195.4 904.0 L1197.6 899.4 L1199.7 899.9 L1201.9 904.5 L1204.0 892.1 L1206.2 899.4 L1208.3 905.1 L1210.5 899.3 L1212.6 899.1 L1214.7 905.6 L1216.9 899.4 L1219.0 900.0 L1221.2 899.6 L1223.3 903.9 L1225.5 903.2 L1227.6 906.6 L1229.8 911.5 L1231.9 902.3 L1234.1 898.2 L1236.2 899.4 L1238.4 878.7 L1240.5 900.7 L1242.7 905.4 L1244.8 898.7 L1247.0 908.7 L1249.1 906.9 L1251.3 903.1 L1253.4 904.5 L1255.6 896.7 L1257.7 909.0 L1259.9 903.9 L1262.0 910.0 L1264.2 903.9 L1266.3 904.1 L1268.5 900.8 L1270.6 906.6 L1272.8 908.4 L1274.9 897.6 L1277.1 902.2 L1279.2 898.3 L1281.4 882.6 L1283.5 890.2 L1285.7 911.1 L1287.8 904.0 L1290.0 904.4 L1292.1 902.5 L1294.2 906.8 L1296.4 905.0 L1298.5 900.4 L1300.7 896.3 L1302.8 898.0 L1305.0 884.8 L1307.1 909.1 L1309.3 904.1 L1311.4 906.4 L1313.6 896.3 L1315.7 899.7 L1317.9 900.2 L1320.0 908.1 L1322.2 885.5 L1324.3 896.9 L1326.5 902.8 L1328.6 906.1 L1330.8 901.4 L1332.9 911.1 L1335.1 906.6 L1337.2 891.0 L1339.4 901.4 L1341.5 909.8 L1343.7 896.8 L1345.8 901.6 L1348.0 898.8 L1350.1 902.9 L1352.3 902.1 L1354.4 908.8 L1356.6 899.1 L1358.7 908.3 L1360.9 906.9 L1363.0 904.1 L1365.2 902.1 L1367.3 905.7" stroke="#F4D598"/><path d="M982.7 891.7 L984.8 907.6 L987.0 892.4 L989.1 902.9 L991.3 899.8 L993.4 900.8 L995.6 894.9 L997.7 900.7 L999.9 905.9 L1002.0 900.3 L1004.2 904.6 L1006.3 899.3 L1008.5 902.6 L1010.6 905.3 L1012.8 902.6 L1014.9 894.1 L1017.1 906.8 L1019.2 902.9 L1021.4 890.1 L1023.5 895.4 L1025.7 905.4 L1027.8 892.7 L1030.0 896.5 L1032.1 904.5 L1034.3 903.1 L1036.4 904.4 L1038.6 895.2 L1040.7 905.7 L1042.9 878.4 L1045.0 896.0 L1047.2 881.8 L1049.3 896.7 L1051.5 901.0 L1053.6 904.5 L1055.8 899.4 L1057.9 903.7 L1060.0 904.1 L1062.2 882.1 L1064.3 899.3 L1066.5 902.5 L1068.6 881.0 L1070.8 895.5 L1072.9 905.2 L1075.1 891.3 L1077.2 907.6 L1079.4 874.2 L1081.5 896.8 L1083.7 897.9 L1085.8 904.9 L1088.0 897.9 L1090.1 896.3 L1092.3 898.8 L1094.4 900.7 L1096.6 882.0 L1098.7 902.6 L1100.9 898.0 L1103.0 901.5 L1105.2 901.8 L1107.3 896.3 L1109.5 896.5 L1111.6 898.0 L1113.8 898.6 L1115.9 908.0 L1118.1 901.3 L1120.2 902.0 L1122.4 894.9 L1124.5 895.8 L1126.7 908.7 L1128.8 884.6 L1131.0 901.9 L1133.1 902.0 L1135.3 894.0 L1137.4 903.5 L1139.5 904.9 L1141.7 900.0 L1143.8 893.8 L1146.0 897.7 L1148.1 907.5 L1150.3 876.9 L1152.4 900.9 L1154.6 903.4 L1156.7 902.5 L1158.9 902.6 L1161.0 906.7 L1163.2 887.1 L1165.3 902.7 L1167.5 894.4 L1169.6 910.9 L1171.8 896.5 L1173.9 875.4 L1176.1 904.3 L1178.2 904.0 L1180.4 901.6 L1182.5 897.5 L1184.7 903.3 L1186.8 900.4 L1189.0 908.0 L1191.1 901.7 L1193.3 902.8 L1195.4 903.5 L1197.6 900.2 L1199.7 904.9 L1201.9 903.4 L1204.0 909.6 L1206.2 900.7 L1208.3 879.7 L1210.5 903.2 L1212.6 907.0 L1214.7 898.0 L1216.9 897.3 L1219.0 897.8 L1221.2 894.0 L1223.3 894.0 L1225.5 903.8 L1227.6 886.5 L1229.8 893.3 L1231.9 903.6 L1234.1 898.3 L1236.2 901.9 L1238.4 879.8 L1240.5 893.8 L1242.7 896.5 L1244.8 888.9 L1247.0 895.1 L1249.1 899.3 L1251.3 901.9 L1253.4 899.8 L1255.6 898.6 L1257.7 910.5 L1259.9 906.0 L1262.0 901.2 L1264.2 904.7 L1266.3 906.8 L1268.5 893.8 L1270.6 878.0 L1272.8 907.7 L1274.9 901.1 L1277.1 901.6 L1279.2 889.7 L1281.4 897.5 L1283.5 897.8 L1285.7 880.4 L1287.8 903.0 L1290.0 899.8 L1292.1 896.2 L1294.2 904.2 L1296.4 904.0 L1298.5 900.3 L1300.7 903.6 L1302.8 908.4 L1305.0 895.1 L1307.1 906.6 L1309.3 909.4 L1311.4 899.0 L1313.6 897.1 L1315.7 899.3 L1317.9 902.3 L1320.0 901.5 L1322.2 896.3 L1324.3 901.8 L1326.5 908.8 L1328.6 904.5 L1330.8 906.2 L1332.9 904.8 L1335.1 897.5 L1337.2 909.0 L1339.4 908.0 L1341.5 901.9 L1343.7 905.7 L1345.8 901.9 L1348.0 896.8 L1350.1 904.8 L1352.3 898.8 L1354.4 908.3 L1356.6 897.3 L1358.7 907.0 L1360.9 904.9 L1363.0 901.8 L1365.2 902.3 L1367.3 891.6" stroke="#B7DBAB"/><path d="M982.7 902.3 L984.8 909.6 L987.0 892.7 L989.1 904.2 L991.3 910.3 L993.4 895.5 L995.6 897.0 L997.7 906.4 L999.9 896.1 L1002.0 910.0 L1004.2 898.7 L1006.3 912.4 L1008.5 897.8 L1010.6 901.6 L1012.8 909.6 L1014.9 901.9 L1017.1 897.9 L1019.2 899.4 L1021.4 897.0 L1023.5 876.5 L1025.7 909.7 L1027.8 900.0 L1030.0 898.4 L1032.1 891.6 L1034.3 904.2 L1036.4 897.5 L1038.6 901.8 L1040.7 894.7 L1042.9 907.2 L1045.0 906.8 L1047.2 906.9 L1049.3 902.4 L1051.5 891.8 L1053.6 894.6 L1055.8 901.6 L1057.9 897.2 L1060.0 902.1 L1062.2 901.3 L1064.3 903.2 L1066.5 909.2 L1068.6 904.3 L1070.8 880.9 L1072.9 887.4 L1075.1 906.7 L1077.2 881.5 L1079.4 904.6 L1081.5 907.0 L1083.7 879.0 L1085.8 896.0 L1088.0 903.0 L1090.1 909.5 L1092.3 903.9 L1094.4 899.3 L1096.6 898.1 L1098.7 902.8 L1100.9 906.1 L1103.0 902.9 L1105.2 902.7 L1107.3 907.7 L1109.5 902.9 L1111.6 900.7 L1113.8 890.1 L1115.9 906.0 L1118.1 905.9 L1120.2 897.5 L1122.4 904.8 L1124.5 904.4 L1126.7 897.0 L1128.8 901.6 L1131.0 901.2 L1133.1 903.7 L1135.3 899.5 L1137.4 903.0 L1139.5 903.8 L1141.7 897.9 L1143.8 901.9 L1146.0 907.7 L1148.1 887.9 L1150.3 902.0 L1152.4 903.4 L1154.6 886.0 L1156.7 900.5 L1158.9 903.7 L1161.0 900.0 L1163.2 906.1 L1165.3 892.8 L1167.5 901.0 L1169.6 902.7 L1171.8 905.4 L1173.9 893.0 L1176.1 910.8 L1178.2 907.1 L1180.4 905.6 L1182.5 897.8 L1184.7 880.2 L1186.8 906.4 L1189.0 893.2 L1191.1 909.6 L1193.3 905.4 L1195.4 898.1 L1197.6 908.5 L1199.7 906.3 L1201.9 896.2 L1204.0 904.2 L1206.2 905.9 L1208.3 900.0 L1210.5 900.5 L1212.6 893.0 L1214.7 901.0 L1216.9 904.3 L1219.0 907.1 L1221.2 905.7 L1223.3 886.1 L1225.5 895.5 L1227.6 907.8 L1229.8 898.6 L1231.9 906.6 L1234.1 899.7 L1236.2 901.5 L1238.4 906.6 L1240.5 896.2 L1242.7 905.8 L1244.8 902.8 L1247.0 906.1 L1249.1 903.7 L1251.3 899.6 L1253.4 890.8 L1255.6 899.1 L1257.7 901.7 L1259.9 907.0 L1262.0 895.1 L1264.2 903.6 L1266.3 866.6 L1268.5 897.3 L1270.6 896.8 L1272.8 907.7 L1274.9 891.4 L1277.1 907.7 L1279.2 892.8 L1281.4 912.3 L1283.5 893.3 L1285.7 907.5 L1287.8 885.1 L1290.0 903.2 L1292.1 901.7 L1294.2 901.8 L1296.4 903.0 L1298.5 900.1 L1300.7 901.3 L1302.8 900.9 L1305.0 905.1 L1307.1 902.6 L1309.3 906.4 L1311.4 904.9 L1313.6 903.7 L1315.7 887.8 L1317.9 901.1 L1320.0 908.3 L1322.2 903.0 L1324.3 895.7 L1326.5 896.6 L1328.6 911.6 L1330.8 901.0 L1332.9 905.9 L1335.1 899.8 L1337.2 894.5 L1339.4 901.0 L1341.5 911.0 L1343.7 897.5 L1345.8 898.2 L1348.0 893.3 L1350.1 896.5 L1352.3 892.5 L1354.4 895.6 L1356.6 903.3 L1358.7 901.2 L1360.9 904.0 L1363.0 904.5 L1365.2 899.3 L1367.3 902.3" stroke="#CCA300"/><path d="M982.7 895.2 L984.8 903.4 L987.0 909.1 L989.1 897.7 L991.3 902.9 L993.4 909.3 L995.6 893.7 L997.7 905.2 L999.9 896.4 L1002.0 904.0 L1004.2 907.8 L1006.3 897.2 L1008.5 897.5 L1010.6 914.5 L1012.8 889.9 L1014.9 915.9 L1017.1 901.9 L1019.2 910.4 L1021.4 903.0 L1023.5 895.0 L1025.7 903.9 L1027.8 907.6 L1030.0 901.5 L1032.1 901.4 L1034.3 905.8 L1036.4 902.4 L1038.6 907.8 L1040.7 894.7 L1042.9 892.6 L1045.0 906.0 L1047.2 898.1 L1049.3 888.0 L1051.5 906.3 L1053.6 894.0 L1055.8 906.7 L1057.9 903.3 L1060.0 905.5 L1062.2 900.8 L1064.3 909.0 L1066.5 906.2 L1068.6 902.9 L1070.8 896.4 L1072.9 908.2 L1075.1 890.6 L1077.2 905.9 L1079.4 905.1 L1081.5 900.9 L1083.7 908.2 L1085.8 909.2 L1088.0 901.5 L1090.1 911.7 L1092.3 893.9 L1094.4 900.0 L1096.6 895.9 L1098.7 907.9 L1100.9 907.1 L1103.0 898.1 L1105.2 895.3 L1107.3 904.9 L1109.5 903.4 L1111.6 910.8 L1113.8 907.9 L1115.9 882.7 L1118.1 911.0 L1120.2 898.9 L1122.4 902.4 L1124.5 895.7 L1126.7 903.7 L1128.8 902.4 L1131.0 902.2 L1133.1 906.4 L1135.3 899.0 L1137.4 896.0 L1139.5 903.8 L1141.7 885.0 L1143.8 899.1 L1146.0 897.2 L1148.1 908.0 L1150.3 892.4 L1152.4 890.7 L1154.6 903.5 L1156.7 902.4 L1158.9 895.5 L1161.0 896.5 L1163.2 905.2 L1165.3 904.5 L1167.5 908.6 L1169.6 904.5 L1171.8 902.2 L1173.9 874.1 L1176.1 909.6 L1178.2 895.1 L1180.4 903.2 L1182.5 899.1 L1184.7 903.3 L1186.8 896.1 L1189.0 906.5 L1191.1 901.4 L1193.3 897.9 L1195.4 908.7 L1197.6 894.6 L1199.7 906.7 L1201.9 906.3 L1204.0 902.5 L1206.2 902.8 L1208.3 899.1 L1210.5 899.1 L1212.6 906.3 L1214.7 903.1 L1216.9 905.0 L1219.0 904.5 L1221.2 899.3 L1223.3 901.4 L1225.5 893.1 L1227.6 904.8 L1229.8 900.0 L1231.9 911.5 L1234.1 900.9 L1236.2 895.3 L1238.4 901.8 L1240.5 908.1 L1242.7 905.9 L1244.8 913.4 L1247.0 908.3 L1249.1 888.0 L1251.3 903.6 L1253.4 908.1 L1255.6 909.8 L1257.7 889.1 L1259.9 908.7 L1262.0 887.7 L1264.2 905.7 L1266.3 899.5 L1268.5 907.8 L1270.6 899.7 L1272.8 898.0 L1274.9 898.9 L1277.1 899.8 L1279.2 880.8 L1281.4 888.7 L1283.5 903.4 L1285.7 905.9 L1287.8 896.4 L1290.0 906.8 L1292.1 901.1 L1294.2 911.5 L1296.4 902.3 L1298.5 889.7 L1300.7 909.8 L1302.8 899.5 L1305.0 891.6 L1307.1 900.3 L1309.3 908.4 L1311.4 903.9 L1313.6 898.4 L1315.7 904.1 L1317.9 895.2 L1320.0 900.4 L1322.2 906.0 L1324.3 892.8 L1326.5 908.9 L1328.6 906.3 L1330.8 907.3 L1332.9 886.9 L1335.1 895.0 L1337.2 894.1 L1339.4 908.7 L1341.5 900.9 L1343.7 898.9 L1345.8 877.5 L1348.0 898.9 L1350.1 894.1 L1352.3 901.9 L1354.4 900.8 L1356.6 903.0 L1358.7 899.5 L1360.9 904.0 L1363.0 902.9 L1365.2 905.3 L1367.3 911.1" stroke="#AEA2E0"/><path d="M982.7 897.3 L984.8 902.6 L987.0 903.0 L989.1 906.2 L991.3 909.6 L993.4 887.9 L995.6 911.8 L997.7 898.6 L999.9 884.2 L1002.0 903.9 L1004.2 905.1 L1006.3 903.8 L1008.5 902.4 L1010.6 903.0 L1012.8 906.1 L1014.9 906.3 L1017.1 880.8 L1019.2 904.9 L1021.4 910.2 L1023.5 901.6 L1025.7 901.2 L1027.8 899.9 L1030.0 889.7 L1032.1 904.3 L1034.3 899.8 L1036.4 904.8 L1038.6 905.8 L1040.7 901.1 L1042.9 903.3 L1045.0 900.5 L1047.2 892.7 L1049.3 893.9 L1051.5 904.2 L1053.6 888.1 L1055.8 901.0 L1057.9 899.3 L1060.0 915.9 L1062.2 897.7 L1064.3 912.8 L1066.5 901.1 L1068.6 901.6 L1070.8 898.3 L1072.9 903.9 L1075.1 903.7 L1077.2 906.4 L1079.4 900.0 L1081.5 902.1 L1083.7 899.7 L1085.8 896.6 L1088.0 900.4 L1090.1 894.0 L1092.3 900.2 L1094.4 894.1 L1096.6 903.5 L1098.7 904.9 L1100.9 897.7 L1103.0 899.9 L1105.2 911.8 L1107.3 902.6 L1109.5 905.3 L1111.6 902.7 L1113.8 900.9 L1115.9 886.9 L1118.1 904.5 L1120.2 898.3 L1122.4 898.3 L1124.5 904.0 L1126.7 899.2 L1128.8 895.9 L1131.0 895.0 L1133.1 906.3 L1135.3 901.9 L1137.4 901.3 L1139.5 903.3 L1141.7 903.9 L1143.8 906.3 L1146.0 897.4 L1148.1 898.9 L1150.3 899.7 L1152.4 905.6 L1154.6 892.7 L1156.7 914.3 L1158.9 894.9 L1161.0 897.5 L1163.2 902.8 L1165.3 908.6 L1167.5 886.9 L1169.6 906.7 L1171.8 890.0 L1173.9 907.9 L1176.1 897.0 L1178.2 899.2 L1180.4 907.0 L1182.5 892.3 L1184.7 883.8 L1186.8 899.4 L1189.0 897.1 L1191.1 896.0 L1193.3 908.4 L1195.4 902.2 L1197.6 908.8 L1199.7 900.2 L1201.9 898.0 L1204.0 888.5 L1206.2 900.1 L1208.3 907.4 L1210.5 905.3 L1212.6 909.4 L1214.7 900.2 L1216.9 904.9 L1219.0 890.9 L1221.2 904.3 L1223.3 909.4 L1225.5 899.2 L1227.6 907.8 L1229.8 903.3 L1231.9 897.5 L1234.1 901.6 L1236.2 909.8 L1238.4 898.0 L1240.5 906.2 L1242.7 898.9 L1244.8 909.5 L1247.0 904.6 L1249.1 901.7 L1251.3 900.1 L1253.4 895.1 L1255.6 903.5 L1257.7 903.3 L1259.9 894.1 L1262.0 898.0 L1264.2 905.1 L1266.3 907.9 L1268.5 905.9 L1270.6 903.8 L1272.8 901.8 L1274.9 908.2 L1277.1 897.3 L1279.2 908.7 L1281.4 903.0 L1283.5 902.0 L1285.7 900.6 L1287.8 906.0 L1290.0 901.4 L1292.1 903.1 L1294.2 900.4 L1296.4 911.5 L1298.5 895.0 L1300.7 906.8 L1302.8 905.0 L1305.0 892.0 L1307.1 903.8 L1309.3 892.2 L1311.4 907.0 L1313.6 909.1 L1315.7 891.9 L1317.9 910.7 L1320.0 898.0 L1322.2 904.9 L1324.3 895.2 L1326.5 901.3 L1328.6 907.0 L1330.8 907.5 L1332.9 873.7 L1335.1 892.1 L1337.2 884.8 L1339.4 908.2 L1341.5 899.5 L1343.7 896.9 L1345.8 906.9 L1348.0 898.5 L1350.1 912.9 L1352.3 895.0 L1354.4 902.4 L1356.6 906.9 L1358.7 904.4 L1360.9 901.2 L1363.0 899.6 L1365.2 901.0 L1367.3 904.2" stroke="#F9BA8F"/><path d="M982.7 894.2 L984.8 904.8 L987.0 907.7 L989.1 905.0 L991.3 910.2 L993.4 880.6 L995.6 904.4 L997.7 904.1 L999.9 906.0 L1002.0 901.9 L1004.2 896.9 L1006.3 902.0 L1008.5 894.0 L1010.6 910.9 L1012.8 905.7 L1014.9 908.8 L1017.1 908.1 L1019.2 905.9 L1021.4 905.7 L1023.5 911.5 L1025.7 905.1 L1027.8 891.4 L1030.0 895.9 L1032.1 908.3 L1034.3 900.2 L1036.4 906.4 L1038.6 874.4 L1040.7 895.7 L1042.9 902.9 L1045.0 895.1 L1047.2 906.2 L1049.3 902.9 L1051.5 902.6 L1053.6 883.5 L1055.8 901.3 L1057.9 893.4 L1060.0 900.7 L1062.2 902.9 L1064.3 897.1 L1066.5 899.9 L1068.6 896.3 L1070.8 903.0 L1072.9 907.0 L1075.1 906.1 L1077.2 906.1 L1079.4 896.9 L1081.5 908.4 L1083.7 906.9 L1085.8 885.9 L1088.0 907.4 L1090.1 906.8 L1092.3 899.6 L1094.4 909.3 L1096.6 906.4 L1098.7 903.5 L1100.9 904.9 L1103.0 899.3 L1105.2 903.6 L1107.3 891.7 L1109.5 904.8 L1111.6 902.2 L1113.8 909.0 L1115.9 905.5 L1118.1 906.2 L1120.2 903.3 L1122.4 905.5 L1124.5 893.6 L1126.7 910.3 L1128.8 901.7 L1131.0 910.4 L1133.1 897.8 L1135.3 902.2 L1137.4 907.4 L1139.5 903.6 L1141.7 894.0 L1143.8 904.9 L1146.0 904.5 L1148.1 901.7 L1150.3 903.8 L1152.4 901.4 L1154.6 911.1 L1156.7 902.1 L1158.9 894.0 L1161.0 905.4 L1163.2 891.3 L1165.3 911.4 L1167.5 902.6 L1169.6 898.4 L1171.8 910.4 L1173.9 905.7 L1176.1 898.9 L1178.2 899.6 L1180.4 902.1 L1182.5 903.4 L1184.7 909.7 L1186.8 907.8 L1189.0 902.0 L1191.1 900.1 L1193.3 909.4 L1195.4 904.3 L1197.6 907.1 L1199.7 899.5 L1201.9 910.3 L1204.0 897.3 L1206.2 909.2 L1208.3 893.7 L1210.5 906.0 L1212.6 895.6 L1214.7 909.4 L1216.9 903.4 L1219.0 907.2 L1221.2 903.1 L1223.3 904.6 L1225.5 905.6 L1227.6 906.0 L1229.8 905.1 L1231.9 909.1 L1234.1 901.8 L1236.2 913.9 L1238.4 905.2 L1240.5 898.7 L1242.7 901.4 L1244.8 905.9 L1247.0 901.1 L1249.1 894.9 L1251.3 903.8 L1253.4 904.9 L1255.6 911.2 L1257.7 894.2 L1259.9 900.4 L1262.0 903.7 L1264.2 911.0 L1266.3 902.1 L1268.5 893.3 L1270.6 895.4 L1272.8 906.7 L1274.9 906.7 L1277.1 904.4 L1279.2 907.8 L1281.4 893.0 L1283.5 901.5 L1285.7 910.9 L1287.8 900.8 L1290.0 909.4 L1292.1 900.9 L1294.2 903.0 L1296.4 902.2 L1298.5 898.3 L1300.7 904.3 L1302.8 899.9 L1305.0 905.5 L1307.1 912.7 L1309.3 888.2 L1311.4 912.1 L1313.6 901.3 L1315.7 907.0 L1317.9 907.2 L1320.0 891.2 L1322.2 912.2 L1324.3 902.0 L1326.5 905.9 L1328.6 898.9 L1330.8 904.7 L1332.9 907.9 L1335.1 905.5 L1337.2 901.5 L1339.4 903.7 L1341.5 905.4 L1343.7 893.4 L1345.8 911.8 L1348.0 905.8 L1350.1 905.9 L1352.3 908.4 L1354.4 903.5 L1356.6 903.4 L1358.7 899.6 L1360.9 904.0 L1363.0 908.8 L1365.2 906.5 L1367.3 904.2" stroke="#8AB8FF"/><path d="M982.7 896.2 L984.8 904.3 L987.0 887.4 L989.1 903.3 L991.3 895.7 L993.4 908.1 L995.6 899.6 L997.7 903.2 L999.9 899.5 L1002.0 889.1 L1004.2 903.5 L1006.3 904.1 L1008.5 904.5 L1010.6 902.2 L1012.8 906.3 L1014.9 901.5 L1017.1 908.7 L1019.2 908.8 L1021.4 890.5 L1023.5 897.3 L1025.7 900.1 L1027.8 908.7 L1030.0 900.5 L1032.1 892.7 L1034.3 891.8 L1036.4 903.8 L1038.6 903.3 L1040.7 902.5 L1042.9 910.9 L1045.0 897.0 L1047.2 899.8 L1049.3 901.6 L1051.5 908.3 L1053.6 897.3 L1055.8 900.7 L1057.9 889.5 L1060.0 883.3 L1062.2 904.6 L1064.3 904.0 L1066.5 906.7 L1068.6 899.9 L1070.8 910.3 L1072.9 904.1 L1075.1 910.0 L1077.2 880.8 L1079.4 907.7 L1081.5 898.3 L1083.7 901.9 L1085.8 906.6 L1088.0 902.6 L1090.1 904.4 L1092.3 896.9 L1094.4 902.6 L1096.6 911.7 L1098.7 902.8 L1100.9 904.5 L1103.0 894.1 L1105.2 904.8 L1107.3 902.4 L1109.5 898.0 L1111.6 901.4 L1113.8 881.4 L1115.9 906.4 L1118.1 893.2 L1120.2 907.5 L1122.4 904.3 L1124.5 903.2 L1126.7 911.4 L1128.8 901.6 L1131.0 871.5 L1133.1 896.5 L1135.3 905.3 L1137.4 898.0 L1139.5 906.3 L1141.7 894.4 L1143.8 901.4 L1146.0 901.2 L1148.1 904.9 L1150.3 908.8 L1152.4 904.9 L1154.6 905.7 L1156.7 901.8 L1158.9 903.9 L1161.0 904.8 L1163.2 883.7 L1165.3 902.2 L1167.5 886.5 L1169.6 910.9 L1171.8 890.1 L1173.9 908.3 L1176.1 900.4 L1178.2 901.6 L1180.4 886.8 L1182.5 901.3 L1184.7 907.3 L1186.8 896.5 L1189.0 894.9 L1191.1 897.0 L1193.3 912.5 L1195.4 905.5 L1197.6 903.3 L1199.7 909.1 L1201.9 901.7 L1204.0 904.8 L1206.2 909.0 L1208.3 897.0 L1210.5 906.5 L1212.6 903.7 L1214.7 896.8 L1216.9 905.0 L1219.0 903.3 L1221.2 900.3 L1223.3 892.3 L1225.5 901.6 L1227.6 893.9 L1229.8 903.3 L1231.9 896.2 L1234.1 906.9 L1236.2 887.0 L1238.4 909.3 L1240.5 882.8 L1242.7 907.6 L1244.8 899.2 L1247.0 898.1 L1249.1 903.3 L1251.3 887.9 L1253.4 905.6 L1255.6 904.3 L1257.7 901.2 L1259.9 903.7 L1262.0 902.3 L1264.2 909.9 L1266.3 905.3 L1268.5 902.5 L1270.6 901.4 L1272.8 891.4 L1274.9 903.5 L1277.1 900.2 L1279.2 910.6 L1281.4 899.3 L1283.5 905.6 L1285.7 902.7 L1287.8 897.5 L1290.0 907.7 L1292.1 909.1 L1294.2 884.3 L1296.4 909.2 L1298.5 896.1 L1300.7 907.2 L1302.8 904.8 L1305.0 904.3 L1307.1 896.2 L1309.3 909.1 L1311.4 911.8 L1313.6 901.7 L1315.7 904.5 L1317.9 904.4 L1320.0 900.8 L1322.2 906.4 L1324.3 897.5 L1326.5 902.1 L1328.6 904.7 L1330.8 896.5 L1332.9 901.6 L1335.1 901.3 L1337.2 897.7 L1339.4 901.8 L1341.5 901.3 L1343.7 905.4 L1345.8 888.7 L1348.0 906.5 L1350.1 900.7 L1352.3 905.3 L1354.4 892.3 L1356.6 893.9 L1358.7 890.0 L1360.9 904.7 L1363.0 909.3 L1365.2 903.8 L1367.3 901.0" stroke="#73D2F0"/><path d="M982.7 902.4 L984.8 907.6 L987.0 905.9 L989.1 905.0 L991.3 899.1 L993.4 903.0 L995.6 896.8 L997.7 896.1 L999.9 901.7 L1002.0 907.4 L1004.2 899.6 L1006.3 900.2 L1008.5 903.0 L1010.6 901.6 L1012.8 899.6 L1014.9 908.6 L1017.1 901.5 L1019.2 901.6 L1021.4 903.5 L1023.5 889.1 L1025.7 896.7 L1027.8 906.4 L1030.0 911.2 L1032.1 891.6 L1034.3 900.2 L1036.4 904.6 L1038.6 904.6 L1040.7 904.3 L1042.9 890.5 L1045.0 905.5 L1047.2 894.7 L1049.3 880.3 L1051.5 909.9 L1053.6 904.7 L1055.8 911.5 L1057.9 894.7 L1060.0 898.2 L1062.2 897.8 L1064.3 900.7 L1066.5 901.6 L1068.6 903.4 L1070.8 900.2 L1072.9 910.1 L1075.1 907.9 L1077.2 897.7 L1079.4 904.3 L1081.5 907.2 L1083.7 904.2 L1085.8 907.9 L1088.0 893.1 L1090.1 908.0 L1092.3 904.9 L1094.4 908.9 L1096.6 902.2 L1098.7 905.1 L1100.9 896.6 L1103.0 893.4 L1105.2 893.5 L1107.3 905.6 L1109.5 901.4 L1111.6 905.6 L1113.8 899.7 L1115.9 895.9 L1118.1 908.5 L1120.2 907.9 L1122.4 901.2 L1124.5 907.9 L1126.7 887.2 L1128.8 897.9 L1131.0 901.9 L1133.1 906.4 L1135.3 902.2 L1137.4 902.0 L1139.5 900.4 L1141.7 901.6 L1143.8 888.6 L1146.0 905.1 L1148.1 897.4 L1150.3 905.5 L1152.4 908.7 L1154.6 908.3 L1156.7 897.8 L1158.9 900.5 L1161.0 905.8 L1163.2 890.8 L1165.3 906.5 L1167.5 908.5 L1169.6 910.1 L1171.8 905.8 L1173.9 904.6 L1176.1 899.4 L1178.2 907.7 L1180.4 905.6 L1182.5 903.9 L1184.7 910.7 L1186.8 894.6 L1189.0 902.1 L1191.1 903.7 L1193.3 908.6 L1195.4 900.3 L1197.6 899.3 L1199.7 891.2 L1201.9 901.0 L1204.0 898.7 L1206.2 911.5 L1208.3 896.9 L1210.5 905.4 L1212.6 904.1 L1214.7 904.9 L1216.9 904.1 L1219.0 872.0 L1221.2 900.3 L1223.3 894.5 L1225.5 904.1 L1227.6 903.2 L1229.8 893.2 L1231.9 906.6 L1234.1 890.0 L1236.2 901.7 L1238.4 905.9 L1240.5 899.5 L1242.7 901.2 L1244.8 905.2 L1247.0 897.9 L1249.1 899.4 L1251.3 901.0 L1253.4 891.1 L1255.6 902.4 L1257.7 904.3 L1259.9 889.4 L1262.0 891.7 L1264.2 893.0 L1266.3 902.3 L1268.5 891.2 L1270.6 906.3 L1272.8 902.2 L1274.9 905.2 L1277.1 901.9 L1279.2 903.2 L1281.4 901.2 L1283.5 906.2 L1285.7 886.7 L1287.8 896.9 L1290.0 909.9 L1292.1 906.4 L1294.2 903.4 L1296.4 912.4 L1298.5 890.3 L1300.7 905.0 L1302.8 902.2 L1305.0 909.8 L1307.1 895.3 L1309.3 897.5 L1311.4 908.1 L1313.6 895.9 L1315.7 903.2 L1317.9 900.5 L1320.0 901.8 L1322.2 904.8 L1324.3 910.2 L1326.5 900.3 L1328.6 903.5 L1330.8 897.2 L1332.9 891.7 L1335.1 908.5 L1337.2 904.7 L1339.4 883.7 L1341.5 904.7 L1343.7 910.4 L1345.8 885.5 L1348.0 893.4 L1350.1 904.5 L1352.3 903.2 L1354.4 906.7 L1356.6 893.4 L1358.7 905.2 L1360.9 902.5 L1363.0 903.7 L1365.2 900.8 L1367.3 893.0" stroke="#E0B400"/><path d="M982.7 904.3 L984.8 898.0 L987.0 904.5 L989.1 907.0 L991.3 906.4 L993.4 903.2 L995.6 905.8 L997.7 883.9 L999.9 905.0 L1002.0 901.4 L1004.2 902.2 L1006.3 907.4 L1008.5 894.4 L1010.6 897.0 L1012.8 901.5 L1014.9 904.8 L1017.1 898.1 L1019.2 904.7 L1021.4 901.5 L1023.5 899.7 L1025.7 909.1 L1027.8 905.7 L1030.0 896.6 L1032.1 904.8 L1034.3 907.4 L1036.4 906.6 L1038.6 903.9 L1040.7 886.1 L1042.9 911.0 L1045.0 907.0 L1047.2 903.7 L1049.3 906.1 L1051.5 881.5 L1053.6 908.1 L1055.8 902.3 L1057.9 903.9 L1060.0 908.0 L1062.2 895.7 L1064.3 905.7 L1066.5 907.7 L1068.6 899.0 L1070.8 905.0 L1072.9 899.6 L1075.1 907.9 L1077.2 901.7 L1079.4 900.3 L1081.5 892.9 L1083.7 908.2 L1085.8 904.4 L1088.0 894.1 L1090.1 902.0 L1092.3 899.4 L1094.4 907.5 L1096.6 903.2 L1098.7 896.3 L1100.9 893.6 L1103.0 904.3 L1105.2 882.8 L1107.3 903.7 L1109.5 909.8 L1111.6 895.6 L1113.8 908.5 L1115.9 904.7 L1118.1 900.7 L1120.2 901.1 L1122.4 888.2 L1124.5 898.6 L1126.7 911.2 L1128.8 905.1 L1131.0 902.9 L1133.1 906.2 L1135.3 904.1 L1137.4 901.9 L1139.5 904.3 L1141.7 901.4 L1143.8 908.6 L1146.0 902.7 L1148.1 901.4 L1150.3 901.7 L1152.4 903.0 L1154.6 903.9 L1156.7 897.3 L1158.9 897.6 L1161.0 910.0 L1163.2 894.3 L1165.3 892.1 L1167.5 906.7 L1169.6 901.6 L1171.8 900.9 L1173.9 907.1 L1176.1 906.2 L1178.2 905.3 L1180.4 904.5 L1182.5 905.1 L1184.7 906.2 L1186.8 907.2 L1189.0 891.1 L1191.1 898.5 L1193.3 906.2 L1195.4 908.5 L1197.6 905.4 L1199.7 888.0 L1201.9 900.3 L1204.0 892.1 L1206.2 905.0 L1208.3 891.2 L1210.5 904.5 L1212.6 906.3 L1214.7 889.9 L1216.9 910.4 L1219.0 906.9 L1221.2 899.2 L1223.3 903.5 L1225.5 897.1 L1227.6 893.2 L1229.8 909.6 L1231.9 888.3 L1234.1 910.8 L1236.2 899.6 L1238.4 877.3 L1240.5 903.8 L1242.7 895.3 L1244.8 899.9 L1247.0 906.3 L1249.1 902.2 L1251.3 900.2 L1253.4 906.8 L1255.6 907.5 L1257.7 901.9 L1259.9 903.3 L1262.0 901.3 L1264.2 906.9 L1266.3 896.7 L1268.5 901.6 L1270.6 897.8 L1272.8 907.4 L1274.9 904.9 L1277.1 905.2 L1279.2 907.5 L1281.4 897.6 L1283.5 905.7 L1285.7 906.5 L1287.8 910.9 L1290.0 904.5 L1292.1 907.8 L1294.2 901.4 L1296.4 905.5 L1298.5 898.9 L1300.7 910.2 L1302.8 889.9 L1305.0 901.1 L1307.1 897.4 L1309.3 893.9 L1311.4 902.8 L1313.6 906.0 L1315.7 896.9 L1317.9 910.1 L1320.0 911.2 L1322.2 907.8 L1324.3 901.2 L1326.5 898.5 L1328.6 905.8 L1330.8 883.1 L1332.9 884.0 L1335.1 907.2 L1337.2 912.1 L1339.4 904.3 L1341.5 907.8 L1343.7 905.0 L1345.8 907.5 L1348.0 901.5 L1350.1 901.9 L1352.3 911.8 L1354.4 906.8 L1356.6 907.2 L1358.7 894.1 L1360.9 905.3 L1363.0 905.6 L1365.2 900.7 L1367.3 890.4" stroke="#FFB357"/><path d="M982.7 903.8 L984.8 897.3 L987.0 905.0 L989.1 899.0 L991.3 903.4 L993.4 899.3 L995.6 909.5 L997.7 880.2 L999.9 901.6 L1002.0 904.4 L1004.2 896.7 L1006.3 908.3 L1008.5 891.4 L1010.6 899.9 L1012.8 903.4 L1014.9 904.4 L1017.1 901.7 L1019.2 893.9 L1021.4 908.3 L1023.5 899.3 L1025.7 909.3 L1027.8 894.1 L1030.0 905.0 L1032.1 890.2 L1034.3 895.8 L1036.4 903.9 L1038.6 898.0 L1040.7 905.6 L1042.9 894.2 L1045.0 902.0 L1047.2 900.8 L1049.3 905.8 L1051.5 888.7 L1053.6 900.2 L1055.8 894.1 L1057.9 901.1 L1060.0 889.0 L1062.2 906.2 L1064.3 895.6 L1066.5 902.8 L1068.6 899.0 L1070.8 911.2 L1072.9 888.3 L1075.1 907.5 L1077.2 898.9 L1079.4 903.1 L1081.5 895.0 L1083.7 907.5 L1085.8 901.9 L1088.0 904.7 L1090.1 879.3 L1092.3 912.8 L1094.4 898.6 L1096.6 896.2 L1098.7 909.5 L1100.9 901.9 L1103.0 905.0 L1105.2 904.4 L1107.3 903.6 L1109.5 899.1 L1111.6 902.1 L1113.8 905.6 L1115.9 897.6 L1118.1 908.6 L1120.2 905.2 L1122.4 898.9 L1124.5 897.8 L1126.7 892.2 L1128.8 895.9 L1131.0 895.6 L1133.1 880.4 L1135.3 906.3 L1137.4 892.8 L1139.5 902.6 L1141.7 902.7 L1143.8 905.2 L1146.0 899.8 L1148.1 908.6 L1150.3 896.2 L1152.4 903.3 L1154.6 902.9 L1156.7 908.3 L1158.9 895.0 L1161.0 907.3 L1163.2 900.9 L1165.3 908.1 L1167.5 904.4 L1169.6 905.4 L1171.8 899.6 L1173.9 901.6 L1176.1 906.7 L1178.2 905.5 L1180.4 887.1 L1182.5 890.9 L1184.7 901.7 L1186.8 908.7 L1189.0 895.6 L1191.1 892.5 L1193.3 885.1 L1195.4 906.9 L1197.6 904.6 L1199.7 899.9 L1201.9 906.5 L1204.0 896.4 L1206.2 887.2 L1208.3 901.9 L1210.5 905.2 L1212.6 904.8 L1214.7 902.5 L1216.9 900.8 L1219.0 894.4 L1221.2 893.2 L1223.3 899.3 L1225.5 893.0 L1227.6 907.2 L1229.8 896.8 L1231.9 906.5 L1234.1 902.9 L1236.2 887.7 L1238.4 906.1 L1240.5 887.1 L1242.7 901.8 L1244.8 890.1 L1247.0 897.7 L1249.1 895.2 L1251.3 900.0 L1253.4 885.2 L1255.6 897.1 L1257.7 901.8 L1259.9 883.3 L1262.0 895.5 L1264.2 904.4 L1266.3 900.3 L1268.5 907.3 L1270.6 898.8 L1272.8 910.1 L1274.9 887.3 L1277.1 904.9 L1279.2 895.0 L1281.4 905.0 L1283.5 907.6 L1285.7 901.0 L1287.8 899.3 L1290.0 900.7 L1292.1 898.9 L1294.2 898.9 L1296.4 886.4 L1298.5 891.9 L1300.7 904.4 L1302.8 896.3 L1305.0 896.6 L1307.1 905.4 L1309.3 906.3 L1311.4 905.7 L1313.6 907.9 L1315.7 904.5 L1317.9 895.0 L1320.0 903.8 L1322.2 903.7 L1324.3 881.7 L1326.5 904.7 L1328.6 904.7 L1330.8 898.7 L1332.9 907.2 L1335.1 898.0 L1337.2 896.0 L1339.4 894.7 L1341.5 907.7 L1343.7 904.3 L1345.8 895.5 L1348.0 863.0 L1350.1 908.7 L1352.3 899.1 L1354.4 900.7 L1356.6 894.6 L1358.7 900.9 L1360.9 908.1 L1363.0 904.6 L1365.2 909.8 L1367.3 894.1" stroke="#6ED0E0"/></g><rect x="29" y="970.0" width="14" height="4" rx="2" fill="#56A64B"/><rect x="29" y="993.4" width="14" height="4" rx="2" fill="#E0B400"/><rect x="29" y="1016.8" width="14" height="4" rx="2" fill="#5794F2"/><rect x="488" y="970.0" width="14" height="4" rx="2" fill="#56A64B"/><rect x="488" y="993.4" width="14" height="4" rx="2" fill="#E0B400"/><rect x="488" y="1016.8" width="14" height="4" rx="2" fill="#5794F2"/><rect x="946" y="970.0" width="14" height="4" rx="2" fill="#56A64B"/><rect x="946" y="993.4" width="14" height="4" rx="2" fill="#E0B400"/><rect x="946" y="1016.8" width="14" height="4" rx="2" fill="#5794F2"/>
<text x="563.80" y="25.00" font-size="14" fill="#6c7075" textLength="130.50" lengthAdjust="spacing">Search or jump to...</text><text x="832.70" y="23.80" font-size="12" fill="#5e6266" textLength="32.60" lengthAdjust="spacing">ctrl+k</text><text x="1338.50" y="24.75" font-size="14.5" fill="#3b4046" textLength="45.00" lengthAdjust="spacing">Sign in</text><text x="56.40" y="64.60" font-size="14.5" fill="#2f3439" textLength="38.60" lengthAdjust="spacing">Home</text><text x="120.50" y="64.60" font-size="14.5" fill="#2f3439" textLength="79.90" lengthAdjust="spacing">Dashboards</text><text x="225.60" y="64.60" font-size="14.5" fill="#6a6e73" textLength="249.40" lengthAdjust="spacing">Mimir / Remote ruler reads resources</text><text x="910.30" y="64.10" font-size="13" fill="#24292e" textLength="22.10" lengthAdjust="spacing" stroke="#24292e" stroke-width="0.25">Add</text><text x="975.30" y="64.10" font-size="13" fill="#ffffff" textLength="33.60" lengthAdjust="spacing" stroke="#ffffff" stroke-width="0.25">Share</text><text x="1069.60" y="65.20" font-size="15" fill="#53575c" textLength="72.60" lengthAdjust="spacing">Last 1 hour</text><text x="1149.90" y="63.70" font-size="12" fill="#f07a22" textLength="24.10" lengthAdjust="spacing" stroke="#f07a22" stroke-width="0.15">UTC</text><text x="1291.30" y="65.00" font-size="15" fill="#53575c" textLength="19.70" lengthAdjust="spacing">5m</text><text x="25.50" y="115.90" font-size="12.5" fill="#1f62e0" textLength="69.70" lengthAdjust="spacing" stroke="#1f62e0" stroke-width="0.2">Data source</text><text x="118.40" y="117.10" font-size="15" fill="#2a2f34" textLength="36.40" lengthAdjust="spacing">Mimir</text><text x="205.40" y="115.90" font-size="12.5" fill="#1f62e0" textLength="39.80" lengthAdjust="spacing" stroke="#1f62e0" stroke-width="0.2">cluster</text><text x="268.00" y="117.10" font-size="15" fill="#2a2f34" textLength="114.20" lengthAdjust="spacing">dev-us-central-0</text><text x="433.40" y="115.90" font-size="12.5" fill="#1f62e0" textLength="67.20" lengthAdjust="spacing" stroke="#1f62e0" stroke-width="0.2">namespace</text><text x="523.40" y="117.10" font-size="15" fill="#2a2f34" textLength="95.00" lengthAdjust="spacing">cortex-dev-01</text><text x="1270.10" y="116.30" font-size="13" fill="#24292e" textLength="104.60" lengthAdjust="spacing" stroke="#24292e" stroke-width="0.25">Mimir dashboards</text><text x="38.30" y="156.30" font-size="18" fill="#24292e" textLength="165.70" lengthAdjust="spacing" stroke="#24292e" stroke-width="0.15">Ruler-query-frontend</text><text x="38.30" y="460.30" font-size="18" fill="#24292e" textLength="176.70" lengthAdjust="spacing" stroke="#24292e" stroke-width="0.15">Ruler-query-scheduler</text><text x="38.30" y="764.30" font-size="18" fill="#24292e" textLength="102.70" lengthAdjust="spacing" stroke="#24292e" stroke-width="0.15">Ruler-querier</text><text x="25.30" y="195.80" font-size="14.5" fill="#24292e" textLength="29.30" lengthAdjust="spacing" stroke="#24292e" stroke-width="0.1">CPU</text><text x="484.30" y="195.80" font-size="14.5" fill="#24292e" textLength="146.00" lengthAdjust="spacing" stroke="#24292e" stroke-width="0.1">Memory (workingset)</text><text x="942.30" y="195.80" font-size="14.5" fill="#24292e" textLength="166.00" lengthAdjust="spacing" stroke="#24292e" stroke-width="0.1">Memory (go heap inuse)</text><text x="25.30" y="499.80" font-size="14.5" fill="#24292e" textLength="29.30" lengthAdjust="spacing" stroke="#24292e" stroke-width="0.1">CPU</text><text x="484.30" y="499.80" font-size="14.5" fill="#24292e" textLength="146.00" lengthAdjust="spacing" stroke="#24292e" stroke-width="0.1">Memory (workingset)</text><text x="942.30" y="499.80" font-size="14.5" fill="#24292e" textLength="166.00" lengthAdjust="spacing" stroke="#24292e" stroke-width="0.1">Memory (go heap inuse)</text><text x="25.30" y="803.80" font-size="14.5" fill="#24292e" textLength="29.30" lengthAdjust="spacing" stroke="#24292e" stroke-width="0.1">CPU</text><text x="484.30" y="803.80" font-size="14.5" fill="#24292e" textLength="146.00" lengthAdjust="spacing" stroke="#24292e" stroke-width="0.1">Memory (workingset)</text><text x="942.30" y="803.80" font-size="14.5" fill="#24292e" textLength="166.00" lengthAdjust="spacing" stroke="#24292e" stroke-width="0.1">Memory (go heap inuse)</text><text x="36.80" y="333.00" font-size="12" fill="#2f3439" text-anchor="end">0</text><text x="36.80" y="285.00" font-size="12" fill="#2f3439" text-anchor="end">1</text><text x="36.80" y="237.00" font-size="12" fill="#2f3439" text-anchor="end">2</text><text x="61.50" y="347.60" font-size="12.3" fill="#2f3439" text-anchor="middle">15:00</text><text x="129.50" y="347.60" font-size="12.3" fill="#2f3439" text-anchor="middle">15:10</text><text x="197.50" y="347.60" font-size="12.3" fill="#2f3439" text-anchor="middle">15:20</text><text x="265.50" y="347.60" font-size="12.3" fill="#2f3439" text-anchor="middle">15:30</text><text x="333.50" y="347.60" font-size="12.3" fill="#2f3439" text-anchor="middle">15:40</text><text x="401.50" y="347.60" font-size="12.3" fill="#2f3439" text-anchor="middle">15:50</text><text x="518.30" y="333.00" font-size="12" fill="#2f3439" text-anchor="end">0 B</text><text x="518.30" y="285.55" font-size="12" fill="#2f3439" text-anchor="end">2 GiB</text><text x="518.30" y="238.10" font-size="12" fill="#2f3439" text-anchor="end">4 GiB</text><text x="542.70" y="347.60" font-size="12.3" fill="#2f3439" text-anchor="middle">15:00</text><text x="606.86" y="347.60" font-size="12.3" fill="#2f3439" text-anchor="middle">15:10</text><text x="671.03" y="347.60" font-size="12.3" fill="#2f3439" text-anchor="middle">15:20</text><text x="735.20" y="347.60" font-size="12.3" fill="#2f3439" text-anchor="middle">15:30</text><text x="799.36" y="347.60" font-size="12.3" fill="#2f3439" text-anchor="middle">15:40</text><text x="863.53" y="347.60" font-size="12.3" fill="#2f3439" text-anchor="middle">15:50</text><text x="992.60" y="333.00" font-size="12" fill="#2f3439" text-anchor="end">0 B</text><text x="992.60" y="299.65" font-size="12" fill="#2f3439" text-anchor="end">512 MiB</text><text x="992.60" y="266.30" font-size="12" fill="#2f3439" text-anchor="end">1 GiB</text><text x="992.60" y="232.95" font-size="12" fill="#2f3439" text-anchor="end">1.50 GiB</text><text x="1016.03" y="347.60" font-size="12.3" fill="#2f3439" text-anchor="middle">15:00</text><text x="1077.51" y="347.60" font-size="12.3" fill="#2f3439" text-anchor="middle">15:10</text><text x="1138.99" y="347.60" font-size="12.3" fill="#2f3439" text-anchor="middle">15:20</text><text x="1200.48" y="347.60" font-size="12.3" fill="#2f3439" text-anchor="middle">15:30</text><text x="1261.96" y="347.60" font-size="12.3" fill="#2f3439" text-anchor="middle">15:40</text><text x="1323.44" y="347.60" font-size="12.3" fill="#2f3439" text-anchor="middle">15:50</text><text x="51.60" y="368.00" font-size="12.6" fill="#2f3439" textLength="239.10" lengthAdjust="spacing">ruler-query-frontend-774998b948-48c8r</text><text x="51.60" y="391.40" font-size="12.6" fill="#2f3439" textLength="244.30" lengthAdjust="spacing">ruler-query-frontend-774998b948-5w92b</text><text x="51.60" y="414.80" font-size="12.6" fill="#2f3439" textLength="237.40" lengthAdjust="spacing">ruler-query-frontend-774998b948-nx9tq</text><text x="510.60" y="368.00" font-size="12.6" fill="#2f3439" textLength="239.10" lengthAdjust="spacing">ruler-query-frontend-774998b948-48c8r</text><text x="510.60" y="391.40" font-size="12.6" fill="#2f3439" textLength="244.30" lengthAdjust="spacing">ruler-query-frontend-774998b948-5w92b</text><text x="510.60" y="414.80" font-size="12.6" fill="#2f3439" textLength="237.40" lengthAdjust="spacing">ruler-query-frontend-774998b948-nx9tq</text><text x="968.60" y="368.00" font-size="12.6" fill="#2f3439" textLength="239.10" lengthAdjust="spacing">ruler-query-frontend-774998b948-48c8r</text><text x="968.60" y="391.40" font-size="12.6" fill="#2f3439" textLength="244.30" lengthAdjust="spacing">ruler-query-frontend-774998b948-5w92b</text><text x="968.60" y="414.80" font-size="12.6" fill="#2f3439" textLength="237.40" lengthAdjust="spacing">ruler-query-frontend-774998b948-nx9tq</text><text x="36.80" y="663.00" font-size="12" fill="#2f3439" text-anchor="end">0</text><text x="36.80" y="603.00" font-size="12" fill="#2f3439" text-anchor="end">1</text><text x="36.80" y="543.00" font-size="12" fill="#2f3439" text-anchor="end">2</text><text x="61.50" y="677.60" font-size="12.3" fill="#2f3439" text-anchor="middle">15:00</text><text x="129.50" y="677.60" font-size="12.3" fill="#2f3439" text-anchor="middle">15:10</text><text x="197.50" y="677.60" font-size="12.3" fill="#2f3439" text-anchor="middle">15:20</text><text x="265.50" y="677.60" font-size="12.3" fill="#2f3439" text-anchor="middle">15:30</text><text x="333.50" y="677.60" font-size="12.3" fill="#2f3439" text-anchor="middle">15:40</text><text x="401.50" y="677.60" font-size="12.3" fill="#2f3439" text-anchor="middle">15:50</text><text x="518.30" y="663.00" font-size="12" fill="#2f3439" text-anchor="end">0 B</text><text x="518.30" y="604.15" font-size="12" fill="#2f3439" text-anchor="end">1 GiB</text><text x="518.30" y="545.30" font-size="12" fill="#2f3439" text-anchor="end">2 GiB</text><text x="542.70" y="677.60" font-size="12.3" fill="#2f3439" text-anchor="middle">15:00</text><text x="606.86" y="677.60" font-size="12.3" fill="#2f3439" text-anchor="middle">15:10</text><text x="671.03" y="677.60" font-size="12.3" fill="#2f3439" text-anchor="middle">15:20</text><text x="735.20" y="677.60" font-size="12.3" fill="#2f3439" text-anchor="middle">15:30</text><text x="799.36" y="677.60" font-size="12.3" fill="#2f3439" text-anchor="middle">15:40</text><text x="863.53" y="677.60" font-size="12.3" fill="#2f3439" text-anchor="middle">15:50</text><text x="986.20" y="663.00" font-size="12" fill="#2f3439" text-anchor="end">0 B</text><text x="986.20" y="610.60" font-size="12" fill="#2f3439" text-anchor="end">32 MiB</text><text x="986.20" y="558.20" font-size="12" fill="#2f3439" text-anchor="end">64 MiB</text><text x="1010.22" y="677.60" font-size="12.3" fill="#2f3439" text-anchor="middle">15:00</text><text x="1072.72" y="677.60" font-size="12.3" fill="#2f3439" text-anchor="middle">15:10</text><text x="1135.22" y="677.60" font-size="12.3" fill="#2f3439" text-anchor="middle">15:20</text><text x="1197.72" y="677.60" font-size="12.3" fill="#2f3439" text-anchor="middle">15:30</text><text x="1260.22" y="677.60" font-size="12.3" fill="#2f3439" text-anchor="middle">15:40</text><text x="1322.72" y="677.60" font-size="12.3" fill="#2f3439" text-anchor="middle">15:50</text><text x="51.60" y="698.00" font-size="12.6" fill="#2f3439" textLength="244.70" lengthAdjust="spacing">ruler-query-scheduler-7554845db4-9c9ts</text><text x="51.60" y="721.40" font-size="12.6" fill="#2f3439" textLength="237.60" lengthAdjust="spacing">ruler-query-scheduler-7554845db4-xrtlx</text><text x="322.00" y="721.40" font-size="12.6" fill="#2f3439" textLength="42.90" lengthAdjust="spacing">request</text><text x="510.60" y="698.00" font-size="12.6" fill="#2f3439" textLength="244.70" lengthAdjust="spacing">ruler-query-scheduler-7554845db4-9c9ts</text><text x="510.60" y="721.40" font-size="12.6" fill="#2f3439" textLength="237.60" lengthAdjust="spacing">ruler-query-scheduler-7554845db4-xrtlx</text><text x="781.00" y="721.40" font-size="12.6" fill="#2f3439" textLength="23.30" lengthAdjust="spacing">limit</text><text x="836.40" y="721.40" font-size="12.6" fill="#2f3439" textLength="43.60" lengthAdjust="spacing">request</text><text x="968.60" y="698.00" font-size="12.6" fill="#2f3439" textLength="244.70" lengthAdjust="spacing">ruler-query-scheduler-7554845db4-9c9ts</text><text x="968.60" y="721.40" font-size="12.6" fill="#2f3439" textLength="237.60" lengthAdjust="spacing">ruler-query-scheduler-7554845db4-xrtlx</text><text x="46.10" y="941.00" font-size="12" fill="#2f3439" text-anchor="end">0</text><text x="46.10" y="909.65" font-size="12" fill="#2f3439" text-anchor="end">0.5</text><text x="46.10" y="878.30" font-size="12" fill="#2f3439" text-anchor="end">1</text><text x="46.10" y="846.95" font-size="12" fill="#2f3439" text-anchor="end">1.5</text><text x="71.40" y="955.60" font-size="12.3" fill="#2f3439" text-anchor="middle">15:00</text><text x="137.67" y="955.60" font-size="12.3" fill="#2f3439" text-anchor="middle">15:10</text><text x="203.93" y="955.60" font-size="12.3" fill="#2f3439" text-anchor="middle">15:20</text><text x="270.20" y="955.60" font-size="12.3" fill="#2f3439" text-anchor="middle">15:30</text><text x="336.47" y="955.60" font-size="12.3" fill="#2f3439" text-anchor="middle">15:40</text><text x="402.73" y="955.60" font-size="12.3" fill="#2f3439" text-anchor="middle">15:50</text><text x="518.30" y="941.00" font-size="12" fill="#2f3439" text-anchor="end">0 B</text><text x="518.30" y="909.00" font-size="12" fill="#2f3439" text-anchor="end">2 GiB</text><text x="518.30" y="877.00" font-size="12" fill="#2f3439" text-anchor="end">4 GiB</text><text x="518.30" y="845.00" font-size="12" fill="#2f3439" text-anchor="end">6 GiB</text><text x="542.70" y="955.60" font-size="12.3" fill="#2f3439" text-anchor="middle">15:00</text><text x="606.86" y="955.60" font-size="12.3" fill="#2f3439" text-anchor="middle">15:10</text><text x="671.03" y="955.60" font-size="12.3" fill="#2f3439" text-anchor="middle">15:20</text><text x="735.20" y="955.60" font-size="12.3" fill="#2f3439" text-anchor="middle">15:30</text><text x="799.36" y="955.60" font-size="12.3" fill="#2f3439" text-anchor="middle">15:40</text><text x="863.53" y="955.60" font-size="12.3" fill="#2f3439" text-anchor="middle">15:50</text><text x="976.20" y="941.00" font-size="12" fill="#2f3439" text-anchor="end">0 B</text><text x="976.20" y="891.50" font-size="12" fill="#2f3439" text-anchor="end">1 GiB</text><text x="976.20" y="842.00" font-size="12" fill="#2f3439" text-anchor="end">2 GiB</text><text x="1001.08" y="955.60" font-size="12.3" fill="#2f3439" text-anchor="middle">15:00</text><text x="1065.18" y="955.60" font-size="12.3" fill="#2f3439" text-anchor="middle">15:10</text><text x="1129.28" y="955.60" font-size="12.3" fill="#2f3439" text-anchor="middle">15:20</text><text x="1193.38" y="955.60" font-size="12.3" fill="#2f3439" text-anchor="middle">15:30</text><text x="1257.48" y="955.60" font-size="12.3" fill="#2f3439" text-anchor="middle">15:40</text><text x="1321.58" y="955.60" font-size="12.3" fill="#2f3439" text-anchor="middle">15:50</text><text x="51.60" y="976.00" font-size="12.6" fill="#2f3439" textLength="190.60" lengthAdjust="spacing">ruler-querier-5ddbcc4dbd-5kqf8</text><text x="51.60" y="999.40" font-size="12.6" fill="#2f3439" textLength="195.70" lengthAdjust="spacing">ruler-querier-5ddbcc4dbd-7p4vm</text><text x="51.60" y="1022.80" font-size="12.6" fill="#2f3439" textLength="192.50" lengthAdjust="spacing">ruler-querier-5ddbcc4dbd-9ps7v</text><text x="510.60" y="976.00" font-size="12.6" fill="#2f3439" textLength="190.60" lengthAdjust="spacing">ruler-querier-5ddbcc4dbd-5kqf8</text><text x="510.60" y="999.40" font-size="12.6" fill="#2f3439" textLength="195.70" lengthAdjust="spacing">ruler-querier-5ddbcc4dbd-7p4vm</text><text x="510.60" y="1022.80" font-size="12.6" fill="#2f3439" textLength="192.50" lengthAdjust="spacing">ruler-querier-5ddbcc4dbd-9ps7v</text><text x="968.60" y="976.00" font-size="12.6" fill="#2f3439" textLength="190.60" lengthAdjust="spacing">ruler-querier-5ddbcc4dbd-5kqf8</text><text x="968.60" y="999.40" font-size="12.6" fill="#2f3439" textLength="195.70" lengthAdjust="spacing">ruler-querier-5ddbcc4dbd-7p4vm</text><text x="968.60" y="1022.80" font-size="12.6" fill="#2f3439" textLength="192.50" lengthAdjust="spacing">ruler-querier-5ddbcc4dbd-9ps7v</text>
</svg></body></html>
